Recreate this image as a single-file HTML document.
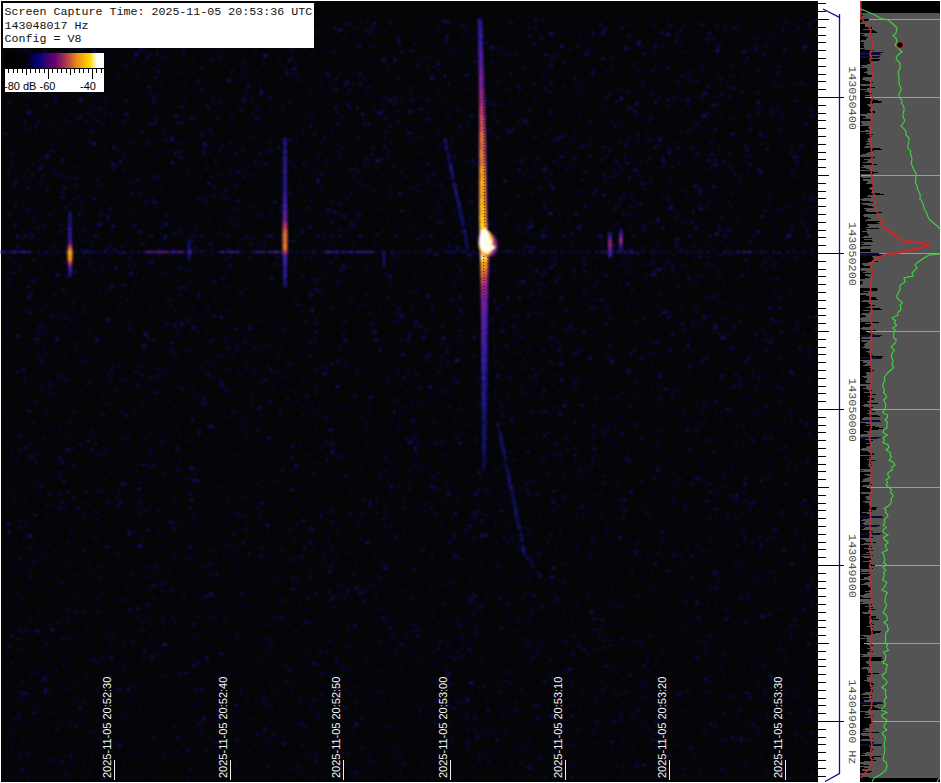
<!DOCTYPE html>
<html><head><meta charset="utf-8"><title>Spectrogram</title>
<style>html,body{margin:0;padding:0;background:#fff;width:941px;height:783px;overflow:hidden}svg{display:block}</style>
</head><body><svg width="941" height="783" viewBox="0 0 941 783" shape-rendering="auto"><rect x="1" y="1" width="817" height="781" fill="#050507"/><filter id="nb" x="-2%" y="-2%" width="104%" height="104%" color-interpolation-filters="sRGB"><feGaussianBlur stdDeviation="0.9"/></filter><g filter="url(#nb)"><path fill="#05052a" d="M334 173h3v1h-3zM551 115h2v3h-2zM77 139h3v2h-3zM353 174h3v2h-3zM488 732h4v1h-4zM358 42h3v2h-3zM135 775h2v2h-2zM406 125h3v2h-3zM71 232h3v1h-3zM552 122h2v3h-2zM358 635h2v2h-2zM502 496h3v2h-3zM493 727h2v3h-2zM231 564h3v3h-3zM743 376h2v1h-2zM235 500h2v2h-2zM361 178h3v3h-3zM145 463h2v1h-2zM626 23h2v1h-2zM636 761h1v3h-1zM210 477h2v2h-2zM161 752h4v2h-4zM501 185h4v1h-4zM368 345h1v2h-1zM530 603h3v2h-3zM88 641h2v1h-2zM430 293h3v1h-3zM280 374h1v2h-1zM529 505h2v2h-2zM358 74h2v1h-2zM761 280h3v1h-3zM712 319h1v2h-1zM339 579h2v1h-2zM319 242h2v1h-2zM208 273h3v1h-3zM94 166h3v3h-3zM26 325h2v1h-2zM336 756h3v1h-3zM19 721h3v1h-3zM488 277h1v2h-1zM634 666h4v1h-4zM521 479h2v2h-2zM218 95h3v1h-3zM239 528h3v2h-3zM570 581h2v1h-2zM125 190h4v1h-4zM766 555h2v2h-2zM785 503h3v2h-3zM403 559h3v2h-3zM701 130h4v2h-4zM599 215h3v2h-3zM724 684h2v1h-2zM513 709h4v2h-4zM236 702h3v2h-3zM37 731h2v2h-2zM322 217h2v2h-2zM60 628h2v2h-2zM27 629h2v2h-2zM342 472h2v1h-2zM203 400h3v2h-3zM256 659h3v1h-3zM478 83h1v2h-1zM67 639h2v2h-2zM652 85h1v1h-1zM508 154h3v1h-3zM496 584h3v2h-3zM277 400h2v2h-2zM256 209h2v1h-2zM105 688h3v1h-3zM489 255h3v2h-3zM303 257h1v1h-1zM383 208h3v2h-3zM35 526h3v2h-3zM106 423h4v3h-4zM136 34h1v3h-1zM168 552h2v1h-2zM203 503h2v3h-2zM156 271h4v1h-4zM578 707h1v2h-1zM379 476h3v2h-3zM6 652h3v2h-3zM44 60h4v1h-4zM754 340h4v3h-4zM773 535h3v1h-3zM70 647h4v1h-4zM506 313h2v1h-2zM362 644h2v1h-2zM631 300h3v1h-3zM246 345h2v1h-2zM647 422h4v2h-4zM380 610h2v2h-2zM430 543h2v1h-2zM235 646h4v1h-4zM5 599h2v2h-2zM252 743h2v2h-2zM533 770h3v1h-3zM3 64h1v3h-1zM181 539h2v1h-2zM52 760h3v3h-3zM450 495h1v2h-1zM110 286h2v1h-2zM770 730h2v1h-2zM210 182h4v2h-4zM178 167h1v1h-1zM776 747h3v1h-3zM222 735h2v2h-2zM391 664h2v2h-2zM611 724h3v1h-3zM794 282h3v1h-3zM276 327h4v3h-4zM312 769h2v2h-2zM114 672h1v2h-1zM650 322h3v1h-3zM251 428h4v1h-4zM736 223h3v2h-3zM631 383h4v1h-4zM394 428h1v1h-1zM542 243h3v2h-3zM578 757h2v1h-2zM439 714h2v2h-2zM674 319h2v3h-2zM159 232h3v3h-3zM720 522h2v2h-2zM800 557h3v1h-3zM353 451h2v3h-2zM673 523h1v2h-1zM561 606h1v2h-1zM192 450h1v2h-1zM733 730h2v1h-2zM263 72h4v1h-4zM18 685h4v3h-4zM321 338h4v3h-4zM501 642h1v2h-1zM806 599h2v2h-2zM639 685h4v3h-4zM293 724h1v2h-1zM555 585h3v2h-3zM606 225h2v1h-2zM370 431h3v1h-3zM356 306h3v3h-3zM221 286h2v2h-2zM460 626h3v1h-3zM658 425h1v1h-1zM166 398h2v1h-2zM51 283h3v2h-3zM110 501h2v2h-2zM130 402h3v2h-3zM202 55h2v1h-2zM350 349h2v2h-2zM345 190h2v2h-2zM445 286h2v1h-2zM751 526h2v1h-2zM784 507h2v2h-2zM29 562h3v1h-3zM93 248h3v1h-3zM322 275h3v1h-3zM718 775h2v2h-2zM737 202h1v2h-1zM508 618h3v2h-3zM56 390h2v2h-2zM682 666h1v2h-1zM39 655h1v2h-1zM16 463h2v1h-2zM315 374h4v1h-4zM303 435h3v2h-3zM468 643h4v3h-4zM793 41h2v3h-2zM696 775h2v2h-2zM286 549h1v2h-1zM805 305h3v3h-3zM514 408h3v2h-3zM13 711h1v3h-1zM79 337h3v1h-3zM433 665h2v3h-2zM64 664h3v3h-3zM13 21h2v3h-2zM314 426h1v3h-1zM151 179h3v3h-3zM104 615h1v2h-1zM641 413h1v1h-1zM408 615h1v2h-1zM247 274h2v1h-2zM469 329h3v3h-3zM731 515h1v1h-1zM177 385h3v1h-3zM300 424h3v2h-3zM129 451h2v3h-2zM198 497h2v2h-2zM162 266h4v1h-4zM248 182h2v2h-2zM417 404h4v3h-4zM453 620h2v3h-2zM91 730h2v1h-2zM28 693h4v2h-4zM413 379h4v1h-4zM44 433h1v3h-1zM236 602h3v3h-3zM448 705h4v3h-4zM633 245h2v3h-2zM646 659h3v3h-3zM799 149h3v1h-3zM802 671h2v3h-2zM209 670h2v1h-2zM726 517h4v2h-4zM250 25h3v2h-3zM659 378h4v2h-4zM15 388h3v1h-3zM49 30h3v2h-3zM737 358h4v3h-4zM663 519h3v2h-3zM671 735h2v1h-2zM262 264h1v1h-1zM620 614h4v1h-4zM226 759h2v1h-2zM628 542h3v1h-3zM579 710h2v3h-2zM495 691h4v1h-4zM408 286h1v1h-1zM210 580h4v1h-4zM778 136h4v3h-4zM199 595h3v1h-3zM797 652h1v2h-1zM92 655h2v3h-2zM498 51h1v1h-1zM165 728h3v2h-3zM628 548h1v2h-1zM482 416h2v2h-2zM596 514h2v1h-2zM150 298h3v2h-3zM243 376h2v1h-2zM793 328h2v3h-2zM72 515h2v1h-2zM245 740h1v1h-1zM135 634h1v1h-1zM592 368h4v1h-4zM29 343h3v2h-3zM631 746h4v2h-4zM373 554h3v2h-3zM95 47h3v1h-3zM729 267h3v2h-3zM30 129h4v1h-4zM663 430h4v2h-4zM645 248h1v2h-1zM336 454h4v2h-4zM342 23h3v1h-3zM702 643h3v2h-3zM56 233h4v2h-4zM307 720h1v1h-1zM52 343h1v1h-1zM502 158h3v2h-3zM536 695h2v3h-2zM264 266h2v2h-2zM654 524h1v1h-1zM737 472h3v2h-3zM135 652h2v3h-2zM684 227h2v1h-2zM790 415h3v1h-3zM774 239h3v2h-3zM284 551h2v1h-2zM433 716h1v2h-1zM392 465h3v2h-3zM478 691h3v3h-3zM749 340h1v3h-1zM581 350h1v2h-1zM458 227h2v1h-2zM76 629h3v1h-3zM231 689h3v1h-3zM155 764h2v2h-2zM414 136h1v2h-1zM218 690h3v3h-3zM615 616h3v1h-3zM355 218h2v2h-2zM344 377h3v2h-3zM494 329h2v2h-2zM585 567h1v3h-1zM205 309h3v3h-3zM528 746h1v1h-1zM711 197h2v2h-2zM780 491h3v1h-3zM154 770h3v1h-3zM643 70h2v2h-2zM507 707h4v2h-4zM302 362h1v2h-1zM141 278h4v2h-4zM593 539h1v2h-1zM606 675h2v1h-2zM146 224h3v1h-3zM194 297h2v2h-2zM408 561h2v1h-2zM274 268h1v3h-1zM536 442h4v2h-4zM349 717h1v2h-1zM37 683h3v2h-3zM282 641h2v1h-2zM371 711h3v1h-3zM145 476h2v3h-2zM594 568h4v1h-4zM292 217h1v3h-1zM67 381h2v2h-2zM659 758h4v3h-4zM534 466h4v2h-4zM450 156h2v1h-2zM748 618h3v2h-3zM589 566h1v2h-1zM576 491h3v1h-3zM212 382h3v1h-3zM483 727h3v3h-3zM232 668h4v1h-4zM207 19h1v2h-1zM656 610h3v2h-3zM169 649h3v2h-3zM689 26h3v1h-3zM345 215h1v1h-1zM119 718h4v3h-4zM455 280h4v1h-4zM774 352h2v1h-2zM84 563h2v1h-2zM553 143h3v1h-3zM57 684h4v3h-4zM257 368h2v1h-2zM68 766h1v3h-1zM373 95h2v3h-2zM213 50h3v1h-3zM216 378h4v2h-4zM13 213h1v1h-1zM187 65h2v2h-2zM231 82h1v2h-1zM172 311h3v1h-3zM201 243h3v2h-3zM486 288h1v1h-1zM389 397h2v2h-2zM731 522h1v2h-1zM483 263h2v3h-2zM794 529h4v3h-4zM414 44h4v1h-4zM776 348h1v2h-1zM791 184h2v1h-2zM731 414h2v2h-2zM61 190h2v2h-2zM609 278h3v2h-3zM61 658h4v2h-4zM275 134h1v3h-1zM204 397h2v2h-2zM69 634h3v3h-3zM90 731h2v1h-2zM181 290h4v1h-4zM119 103h1v1h-1zM430 509h2v2h-2zM88 289h2v2h-2zM642 72h4v2h-4zM237 337h1v2h-1zM486 597h3v1h-3zM212 337h4v2h-4zM736 716h4v2h-4zM801 761h2v3h-2zM790 485h1v2h-1zM679 367h3v3h-3zM406 733h1v1h-1zM789 705h2v3h-2zM439 743h2v2h-2zM251 488h3v1h-3zM761 756h3v2h-3zM111 633h3v3h-3zM459 445h1v1h-1zM227 394h4v2h-4zM655 745h1v2h-1zM390 593h2v1h-2zM161 592h2v1h-2zM528 662h3v1h-3zM732 627h4v1h-4zM148 216h3v2h-3zM151 531h2v1h-2zM721 411h1v2h-1zM697 430h3v3h-3zM607 604h4v1h-4zM335 673h3v1h-3zM269 36h2v2h-2zM297 525h2v2h-2zM200 233h1v1h-1zM94 171h3v1h-3zM511 766h3v2h-3zM42 105h1v1h-1zM25 354h4v1h-4zM447 352h3v2h-3zM241 513h1v1h-1zM154 68h3v3h-3zM576 287h3v2h-3zM448 471h4v2h-4zM462 683h2v1h-2zM50 167h4v2h-4zM556 773h4v1h-4zM388 274h2v3h-2zM515 285h2v1h-2zM231 504h2v2h-2zM323 717h1v2h-1zM783 622h2v1h-2zM397 610h3v1h-3zM32 344h2v2h-2zM4 291h1v2h-1zM370 397h2v3h-2zM442 362h3v1h-3zM41 637h2v1h-2zM460 269h4v1h-4zM172 620h1v2h-1zM812 78h2v3h-2zM6 737h2v2h-2zM346 273h2v2h-2zM413 445h4v2h-4zM89 91h1v3h-1zM510 595h3v2h-3zM606 503h2v1h-2zM595 755h1v1h-1zM378 435h4v2h-4zM451 467h2v1h-2zM162 693h2v1h-2zM392 113h4v1h-4zM662 598h3v1h-3zM212 513h4v2h-4zM637 303h4v3h-4zM25 447h3v3h-3zM369 745h2v2h-2zM713 36h2v3h-2zM540 705h2v1h-2zM381 220h2v2h-2zM180 74h3v2h-3zM794 402h3v1h-3zM803 30h4v2h-4zM628 256h2v1h-2zM412 265h4v2h-4zM476 252h3v3h-3zM616 499h3v2h-3zM445 439h3v2h-3zM383 316h3v1h-3zM547 676h2v1h-2zM119 365h2v2h-2zM372 246h3v1h-3zM471 187h2v1h-2zM72 679h2v1h-2zM140 752h3v3h-3zM566 187h1v1h-1zM276 90h2v3h-2zM26 658h4v1h-4zM807 485h2v1h-2zM166 374h3v2h-3zM579 660h2v1h-2zM168 505h3v3h-3zM664 534h3v1h-3zM207 473h1v3h-1zM448 241h2v3h-2zM160 277h3v1h-3zM310 463h4v1h-4zM405 691h1v2h-1zM390 421h3v3h-3zM115 619h1v2h-1zM438 171h2v1h-2zM736 38h3v2h-3zM487 109h1v1h-1zM621 549h1v1h-1zM429 470h2v3h-2zM675 437h2v3h-2zM299 210h3v2h-3zM656 676h3v1h-3zM411 492h2v1h-2zM799 364h3v2h-3zM688 200h2v1h-2zM584 561h2v2h-2zM232 355h2v2h-2zM213 423h1v2h-1zM99 252h3v2h-3zM161 571h3v2h-3zM201 315h3v2h-3zM515 399h3v1h-3zM182 135h2v1h-2zM217 523h4v2h-4zM664 536h1v2h-1zM602 406h3v2h-3zM445 535h3v1h-3zM397 373h2v2h-2zM126 240h2v2h-2zM260 638h3v1h-3zM556 182h3v1h-3zM414 203h2v1h-2zM773 25h1v2h-1zM422 659h3v1h-3zM640 110h1v2h-1zM457 456h2v2h-2zM318 439h3v1h-3zM19 442h4v1h-4zM377 417h1v1h-1zM179 702h2v1h-2zM543 328h2v1h-2zM335 689h3v1h-3zM415 659h4v2h-4zM241 292h2v2h-2zM396 255h3v2h-3zM458 726h3v2h-3zM240 605h4v1h-4zM589 383h4v2h-4zM750 216h3v1h-3zM293 713h4v3h-4zM677 765h1v1h-1zM27 766h4v2h-4zM103 260h2v1h-2zM490 211h1v2h-1zM283 376h1v2h-1zM155 404h2v2h-2zM349 426h2v2h-2zM105 364h2v1h-2zM575 759h4v2h-4zM83 439h1v3h-1zM643 412h3v2h-3zM353 327h3v1h-3zM31 670h4v3h-4zM190 549h2v1h-2zM339 255h2v1h-2zM311 765h4v1h-4zM700 628h3v2h-3zM124 768h2v2h-2zM508 610h3v3h-3zM340 455h4v2h-4zM153 456h2v2h-2zM119 423h3v2h-3zM122 258h2v2h-2zM64 453h4v1h-4zM738 766h1v3h-1zM353 241h3v2h-3zM747 85h2v3h-2zM460 762h2v2h-2zM457 153h2v2h-2zM214 409h2v1h-2zM83 663h3v2h-3zM503 576h2v2h-2zM622 677h4v2h-4zM186 610h1v3h-1zM141 583h2v3h-2zM158 355h2v2h-2zM283 728h1v2h-1zM571 623h2v2h-2zM544 308h3v3h-3zM132 720h3v2h-3zM49 145h3v1h-3zM229 265h2v2h-2zM478 311h3v1h-3zM742 519h2v1h-2zM758 644h3v1h-3zM421 566h2v2h-2zM778 37h2v2h-2zM305 279h1v2h-1zM735 564h2v3h-2zM28 574h3v3h-3zM608 322h3v1h-3zM97 749h3v1h-3zM64 460h2v1h-2zM238 129h2v1h-2zM573 182h2v2h-2zM342 85h1v2h-1zM187 492h4v2h-4zM30 557h4v1h-4zM637 216h3v2h-3zM7 274h2v3h-2zM756 656h4v2h-4zM276 563h3v1h-3zM126 294h1v2h-1zM545 668h4v1h-4zM213 480h4v1h-4zM349 773h3v3h-3zM583 413h1v1h-1zM321 573h1v2h-1zM737 108h4v3h-4zM638 597h3v2h-3zM558 766h2v1h-2zM377 410h2v2h-2zM269 721h2v2h-2zM272 387h2v2h-2zM546 89h4v1h-4zM590 323h1v1h-1zM121 708h3v1h-3zM423 121h3v3h-3zM308 126h3v2h-3zM472 37h4v3h-4zM233 428h2v2h-2zM149 566h3v3h-3zM293 403h3v2h-3zM474 155h3v1h-3zM738 569h2v2h-2zM55 344h3v1h-3zM224 480h2v1h-2zM334 549h3v1h-3zM736 733h1v3h-1zM338 114h2v1h-2zM111 364h1v1h-1zM124 238h2v1h-2zM434 538h3v1h-3zM230 201h4v1h-4zM513 497h4v1h-4zM75 619h4v3h-4zM490 385h2v1h-2zM671 654h3v1h-3zM465 551h1v3h-1zM424 368h4v1h-4zM597 740h2v1h-2zM474 596h2v2h-2zM492 79h2v2h-2zM100 516h2v2h-2zM215 553h3v1h-3zM109 120h2v2h-2zM73 716h4v1h-4zM376 577h2v1h-2zM800 589h4v3h-4zM17 218h3v1h-3zM577 545h4v3h-4zM563 497h4v3h-4zM453 579h3v3h-3zM541 726h3v1h-3zM536 306h1v3h-1zM43 374h4v2h-4zM442 450h1v2h-1zM153 376h2v3h-2zM199 402h2v3h-2zM686 580h3v2h-3zM304 609h4v2h-4zM538 686h2v2h-2zM315 217h1v1h-1zM330 419h4v3h-4zM729 612h2v1h-2zM194 692h3v3h-3zM686 224h3v1h-3zM171 246h4v3h-4zM577 694h3v3h-3zM79 619h3v2h-3zM515 619h3v3h-3zM29 585h2v3h-2zM429 492h2v2h-2zM209 510h2v2h-2zM297 577h2v1h-2zM68 113h2v2h-2zM526 350h2v2h-2zM458 591h2v3h-2zM679 551h1v3h-1zM633 204h3v3h-3zM192 106h4v1h-4zM79 562h4v1h-4zM576 57h2v1h-2zM10 732h1v1h-1zM606 735h2v2h-2zM572 656h3v1h-3zM555 722h2v2h-2zM589 204h4v3h-4zM452 595h2v1h-2zM489 100h1v3h-1zM326 686h4v1h-4zM743 622h3v1h-3zM380 761h2v1h-2zM278 605h3v2h-3zM137 569h3v2h-3zM31 265h2v2h-2zM523 357h1v1h-1zM245 685h3v2h-3zM413 102h3v1h-3zM648 687h4v3h-4zM507 583h3v2h-3zM723 616h4v3h-4zM805 63h4v2h-4zM787 387h2v2h-2zM217 752h2v2h-2zM792 252h4v1h-4zM166 700h2v1h-2zM708 235h4v1h-4zM165 570h4v1h-4zM215 362h3v1h-3zM322 239h4v2h-4zM724 642h3v1h-3zM799 762h4v3h-4zM151 200h2v2h-2zM676 19h1v2h-1zM591 557h2v3h-2zM52 636h2v1h-2zM567 583h1v2h-1zM621 498h2v2h-2zM19 599h2v1h-2zM758 140h1v1h-1zM623 555h4v2h-4zM584 376h2v2h-2zM46 429h4v2h-4zM714 56h3v1h-3zM473 700h1v1h-1zM392 750h2v2h-2zM624 282h2v3h-2zM418 588h3v1h-3zM774 384h3v3h-3zM591 616h2v1h-2zM687 23h1v2h-1zM508 365h2v1h-2zM465 746h3v1h-3zM687 239h2v1h-2zM157 558h3v2h-3zM258 586h2v3h-2zM541 504h1v2h-1zM428 732h4v2h-4zM725 772h2v2h-2zM634 686h3v1h-3zM154 197h2v2h-2zM468 758h3v2h-3zM476 727h2v2h-2zM164 423h2v2h-2zM543 92h4v1h-4zM449 336h3v1h-3zM661 154h3v3h-3zM24 307h2v1h-2zM113 773h2v2h-2zM302 769h1v3h-1zM749 563h3v1h-3zM542 336h2v1h-2zM41 333h3v2h-3zM499 714h4v2h-4zM798 234h3v2h-3zM622 603h1v3h-1zM501 660h2v1h-2zM778 384h4v3h-4zM432 650h3v2h-3zM245 437h3v1h-3zM137 510h2v2h-2zM544 722h2v2h-2zM688 566h2v2h-2zM596 529h4v1h-4zM52 346h4v2h-4zM38 671h3v3h-3zM504 112h3v3h-3zM196 726h4v3h-4zM570 93h1v3h-1zM334 656h1v1h-1zM569 137h2v2h-2zM35 280h2v3h-2zM428 235h4v2h-4zM665 686h2v2h-2zM721 701h1v2h-1zM47 244h1v2h-1zM661 374h2v2h-2zM49 771h1v2h-1zM774 486h4v1h-4zM421 739h2v2h-2zM104 360h4v1h-4zM635 715h2v2h-2zM204 344h2v1h-2zM358 552h3v3h-3zM721 707h3v1h-3zM313 140h1v2h-1zM188 491h2v1h-2zM428 174h4v3h-4zM275 772h2v3h-2zM756 676h4v2h-4zM340 620h2v2h-2zM177 199h2v1h-2zM24 182h3v2h-3zM86 598h2v2h-2zM733 608h1v1h-1zM771 281h3v2h-3zM272 743h3v1h-3zM483 591h1v2h-1zM747 600h2v2h-2zM58 59h2v1h-2zM453 194h3v1h-3zM376 521h2v1h-2zM98 658h2v3h-2zM447 419h4v1h-4zM666 149h4v1h-4zM357 713h3v2h-3zM519 714h1v1h-1zM416 439h1v1h-1zM458 507h3v2h-3zM51 520h2v2h-2zM88 497h4v1h-4zM475 718h3v2h-3zM452 265h2v2h-2zM719 760h4v1h-4zM51 144h3v1h-3zM467 739h4v3h-4zM383 319h2v2h-2zM555 54h4v2h-4zM760 605h3v2h-3zM472 493h3v2h-3zM762 569h3v3h-3zM253 336h2v3h-2zM521 201h3v1h-3zM747 395h4v3h-4zM440 642h2v2h-2zM563 181h3v2h-3zM752 234h3v2h-3zM187 520h3v1h-3zM221 436h4v2h-4zM492 513h2v1h-2zM711 300h3v1h-3zM330 732h3v2h-3zM46 395h2v2h-2zM783 446h3v1h-3zM160 373h2v1h-2zM576 497h2v1h-2zM450 359h1v1h-1zM321 292h2v3h-2zM549 764h3v1h-3zM268 667h2v1h-2zM723 321h4v1h-4zM666 760h3v1h-3zM43 331h4v3h-4zM802 183h3v2h-3zM232 441h1v2h-1zM611 711h3v3h-3zM294 521h2v2h-2zM566 74h4v1h-4zM812 606h2v2h-2zM312 346h1v3h-1zM12 647h3v1h-3zM559 246h3v1h-3zM234 344h3v3h-3zM100 208h4v1h-4zM232 392h1v2h-1zM543 294h3v3h-3zM604 442h3v3h-3zM517 624h3v1h-3zM788 713h3v2h-3zM375 512h3v3h-3zM809 746h2v1h-2zM606 92h3v1h-3zM785 630h3v2h-3zM412 264h2v2h-2zM738 568h3v1h-3zM309 278h3v1h-3zM293 541h2v1h-2zM303 544h2v3h-2zM133 391h2v2h-2zM678 337h2v1h-2zM600 91h2v3h-2zM751 622h1v3h-1zM587 208h3v2h-3zM103 619h1v2h-1zM388 462h2v2h-2zM761 208h3v3h-3zM296 721h3v3h-3zM57 560h3v1h-3zM801 546h3v2h-3zM118 658h1v2h-1zM394 647h1v2h-1zM331 405h2v2h-2zM92 129h4v3h-4zM725 323h1v3h-1zM235 396h2v2h-2zM160 676h4v1h-4zM607 21h2v1h-2zM544 434h1v2h-1zM193 310h1v1h-1zM217 412h3v2h-3zM59 547h4v2h-4zM755 621h4v1h-4zM107 596h1v2h-1zM283 497h1v2h-1zM657 257h4v2h-4zM590 757h3v2h-3zM255 254h4v2h-4zM440 655h4v3h-4zM266 560h3v1h-3zM787 27h1v1h-1zM708 676h1v1h-1zM500 566h2v2h-2zM777 19h2v3h-2zM341 241h3v2h-3zM106 669h3v1h-3zM170 479h2v3h-2zM111 374h4v1h-4zM682 163h3v2h-3zM498 553h4v2h-4zM759 526h4v1h-4zM795 741h2v1h-2zM630 680h1v1h-1zM384 290h2v1h-2zM215 472h4v2h-4zM444 162h3v3h-3zM429 137h3v2h-3zM676 577h2v2h-2zM652 584h2v3h-2zM203 733h2v2h-2zM598 300h2v2h-2zM682 24h2v1h-2zM667 444h1v1h-1zM546 630h2v2h-2zM33 442h3v2h-3zM465 76h3v1h-3zM76 363h4v1h-4zM582 634h2v2h-2zM455 327h4v1h-4zM652 305h2v3h-2zM369 664h1v1h-1zM546 111h2v1h-2zM120 748h2v1h-2zM635 556h2v2h-2zM549 603h4v2h-4zM129 449h3v2h-3zM643 770h2v1h-2zM159 37h2v2h-2zM418 356h1v1h-1zM591 158h3v1h-3zM5 146h4v3h-4zM11 258h3v2h-3zM780 678h3v2h-3zM546 423h4v2h-4zM751 670h3v3h-3zM700 609h2v2h-2zM143 575h2v3h-2zM122 170h3v2h-3zM407 674h2v1h-2zM546 227h2v3h-2zM216 264h2v2h-2zM461 347h2v2h-2zM712 389h2v2h-2zM46 470h2v1h-2zM212 300h4v3h-4zM576 581h2v2h-2zM689 27h3v3h-3zM268 318h1v1h-1zM184 120h3v2h-3zM70 554h1v2h-1zM599 518h3v2h-3zM296 67h1v2h-1zM618 588h1v2h-1zM54 327h4v1h-4zM530 172h2v1h-2zM393 574h2v3h-2zM366 92h3v3h-3zM102 371h4v1h-4zM362 627h2v3h-2zM515 228h2v3h-2zM507 436h2v2h-2zM575 190h3v1h-3zM683 415h3v3h-3zM767 683h4v1h-4zM635 21h2v3h-2zM336 346h1v1h-1zM510 725h3v2h-3zM214 554h4v2h-4zM218 612h3v2h-3zM177 609h2v1h-2zM38 549h4v2h-4zM790 421h2v1h-2zM229 467h2v2h-2zM635 122h1v2h-1zM540 524h2v3h-2zM33 565h2v1h-2zM121 567h2v3h-2zM258 211h3v3h-3zM791 328h2v1h-2zM364 90h4v1h-4zM634 552h3v2h-3zM655 747h4v3h-4zM13 695h2v3h-2zM207 692h2v2h-2zM240 251h3v3h-3zM504 392h2v2h-2zM141 463h2v2h-2zM558 248h2v2h-2zM627 750h4v3h-4zM170 172h2v3h-2zM123 94h3v1h-3zM320 366h2v1h-2zM398 292h4v1h-4zM336 145h3v1h-3zM85 257h3v2h-3zM809 405h2v3h-2zM455 338h3v3h-3zM52 171h3v2h-3zM766 614h4v1h-4zM520 225h4v1h-4zM557 428h3v1h-3zM206 144h4v2h-4zM163 451h3v1h-3zM103 572h1v1h-1zM380 273h2v2h-2zM427 581h3v1h-3zM610 396h1v3h-1zM42 587h3v3h-3zM568 680h4v3h-4zM86 210h3v2h-3zM409 613h3v3h-3zM565 55h1v1h-1zM241 647h1v2h-1zM535 751h1v3h-1zM478 556h2v3h-2zM358 755h3v2h-3zM297 53h4v1h-4zM73 764h4v1h-4zM63 660h1v3h-1zM199 197h3v1h-3zM374 166h4v1h-4zM559 362h4v1h-4zM598 629h3v2h-3zM718 487h3v2h-3zM159 742h1v1h-1zM194 440h3v3h-3zM588 624h2v1h-2zM65 239h3v1h-3zM380 670h2v3h-2zM430 678h1v2h-1zM645 653h4v2h-4zM432 82h3v1h-3zM398 226h2v1h-2zM53 505h3v2h-3zM56 178h3v1h-3zM309 190h3v1h-3zM281 181h4v1h-4zM391 755h4v3h-4zM406 662h1v1h-1zM417 442h3v3h-3zM540 755h3v2h-3zM337 604h2v1h-2zM412 259h2v1h-2zM394 266h4v3h-4zM501 164h1v1h-1zM665 609h3v1h-3zM479 607h4v2h-4zM490 684h2v1h-2zM563 565h4v1h-4zM165 745h2v2h-2zM550 344h2v3h-2zM8 102h3v1h-3zM505 732h1v1h-1zM112 568h4v1h-4zM454 515h4v1h-4zM631 345h1v2h-1zM65 504h2v3h-2zM526 549h2v2h-2zM187 197h2v2h-2zM328 686h1v2h-1zM201 628h2v3h-2zM780 253h3v1h-3zM730 293h2v2h-2zM288 753h3v1h-3zM39 24h3v2h-3zM408 196h2v3h-2zM424 395h1v2h-1zM689 329h4v1h-4zM152 302h4v1h-4zM406 723h4v3h-4zM381 764h1v1h-1zM659 246h3v2h-3zM413 546h1v3h-1zM572 638h4v1h-4zM241 741h3v3h-3zM763 355h3v1h-3zM310 120h1v3h-1zM426 100h3v2h-3zM718 576h4v2h-4zM612 284h3v2h-3zM207 310h3v2h-3zM386 607h4v2h-4zM622 33h1v1h-1zM755 179h2v1h-2zM379 732h1v1h-1zM150 554h3v1h-3zM423 705h4v1h-4zM589 85h4v1h-4zM727 231h3v3h-3zM529 607h2v2h-2zM3 80h3v2h-3zM298 605h2v2h-2zM813 722h4v1h-4zM536 247h2v1h-2zM321 347h2v1h-2zM397 237h4v1h-4zM651 352h3v2h-3zM283 19h2v1h-2zM126 726h3v3h-3zM269 194h4v1h-4zM107 371h3v2h-3zM781 775h4v3h-4zM178 608h1v2h-1zM787 529h3v1h-3zM436 681h4v1h-4zM706 649h2v3h-2zM461 674h2v1h-2zM294 430h2v3h-2zM461 642h2v1h-2zM175 449h2v1h-2zM694 527h3v3h-3zM421 324h1v2h-1zM151 366h4v2h-4zM315 508h1v2h-1zM386 479h3v3h-3zM391 463h3v2h-3zM376 484h3v2h-3zM423 174h2v2h-2zM459 446h3v2h-3zM143 564h4v3h-4zM312 203h3v1h-3zM360 584h1v1h-1zM767 428h3v2h-3zM660 574h2v2h-2zM267 556h2v1h-2zM701 603h3v1h-3zM119 756h2v3h-2zM175 219h3v1h-3zM107 233h4v2h-4zM193 117h3v2h-3zM711 20h1v1h-1zM238 364h2v2h-2zM270 303h3v3h-3zM160 185h2v2h-2zM754 493h2v3h-2zM572 765h2v2h-2zM588 681h2v3h-2zM447 774h1v1h-1zM768 103h1v1h-1zM555 435h1v2h-1zM91 251h4v2h-4zM260 43h3v2h-3zM430 395h4v3h-4zM237 369h2v3h-2zM646 656h3v2h-3zM331 607h2v1h-2zM161 514h2v2h-2zM469 498h1v1h-1zM474 683h2v1h-2zM556 339h2v2h-2zM383 548h4v3h-4zM187 469h4v1h-4zM733 604h3v2h-3zM77 368h3v1h-3zM791 44h4v1h-4zM691 430h1v2h-1zM770 470h3v1h-3zM657 621h3v3h-3zM19 253h3v1h-3zM46 457h2v1h-2zM57 687h2v2h-2zM652 588h1v3h-1zM266 347h2v3h-2zM271 617h3v2h-3zM483 151h2v1h-2zM722 314h2v1h-2zM600 578h3v1h-3zM618 289h3v1h-3zM190 709h1v1h-1zM467 471h3v1h-3zM714 457h2v1h-2zM327 540h3v3h-3zM473 260h3v3h-3zM493 513h2v2h-2zM262 127h1v1h-1zM52 707h2v2h-2zM438 713h1v2h-1zM324 670h4v2h-4zM647 588h3v2h-3zM801 396h4v1h-4zM547 410h3v1h-3zM274 725h3v1h-3zM375 737h1v2h-1zM341 442h3v1h-3zM581 766h3v1h-3zM429 444h4v1h-4zM385 524h2v2h-2zM411 643h1v1h-1zM519 473h1v2h-1zM698 623h2v1h-2zM144 477h3v1h-3zM431 710h3v3h-3zM550 177h1v1h-1zM375 688h3v1h-3zM619 296h2v3h-2zM252 658h4v3h-4zM354 687h2v1h-2zM496 334h2v2h-2zM572 734h4v1h-4zM429 460h4v1h-4zM322 438h1v1h-1zM157 96h1v3h-1zM363 542h3v3h-3zM402 552h2v1h-2zM49 394h1v2h-1zM576 614h2v3h-2zM449 490h3v1h-3zM231 419h2v2h-2zM178 749h3v1h-3zM270 40h3v2h-3zM325 777h2v2h-2zM779 252h2v1h-2zM145 566h3v2h-3zM110 672h2v2h-2zM409 754h2v1h-2zM682 299h1v1h-1zM334 140h2v1h-2zM13 580h2v1h-2zM767 185h2v2h-2zM86 485h1v1h-1zM276 416h3v1h-3zM617 356h3v2h-3zM486 670h3v1h-3zM201 186h2v1h-2zM719 590h4v1h-4zM383 363h4v3h-4zM719 194h3v1h-3zM333 680h3v2h-3zM39 197h3v3h-3zM379 536h2v1h-2zM15 563h3v2h-3zM790 698h2v3h-2zM330 578h2v1h-2zM149 446h3v3h-3zM580 513h3v2h-3zM766 500h3v3h-3zM66 650h3v2h-3zM407 333h3v2h-3zM294 415h2v1h-2zM682 54h1v1h-1zM685 388h2v1h-2zM285 680h3v1h-3zM381 118h2v2h-2zM429 161h2v2h-2zM544 486h1v2h-1zM444 657h3v1h-3zM201 324h2v2h-2zM213 44h2v3h-2zM591 741h4v1h-4zM696 685h1v1h-1zM203 613h2v2h-2zM110 360h3v2h-3zM181 676h2v2h-2zM649 708h1v3h-1zM447 671h2v1h-2zM146 242h2v2h-2zM789 732h3v2h-3zM562 283h2v1h-2zM478 265h4v2h-4zM582 508h3v3h-3zM82 538h4v3h-4zM65 489h2v1h-2zM503 141h2v2h-2zM558 672h2v2h-2zM226 312h3v3h-3zM551 608h1v3h-1zM435 113h4v2h-4zM455 605h1v3h-1zM24 51h3v2h-3zM508 548h4v1h-4zM587 48h2v2h-2zM239 446h4v2h-4zM762 135h2v3h-2zM780 767h3v2h-3zM785 563h3v2h-3zM782 621h2v2h-2zM189 533h2v3h-2zM325 216h3v2h-3zM89 774h3v2h-3zM695 173h3v1h-3zM507 669h4v2h-4zM89 310h3v1h-3zM348 549h3v1h-3zM655 377h3v2h-3zM679 86h3v2h-3zM225 177h3v2h-3zM790 56h3v1h-3zM619 773h2v1h-2zM509 715h1v3h-1zM596 610h2v1h-2zM455 307h2v1h-2zM532 721h2v2h-2zM42 764h2v3h-2zM558 685h2v1h-2zM107 675h2v2h-2zM206 748h3v1h-3zM197 199h3v1h-3zM170 362h3v3h-3zM376 387h2v2h-2zM712 404h2v1h-2zM14 263h2v1h-2zM279 710h3v2h-3zM271 214h3v2h-3zM457 712h4v3h-4zM779 697h3v1h-3zM569 232h2v2h-2zM84 606h3v2h-3zM350 50h1v1h-1zM455 43h3v1h-3zM649 485h2v1h-2zM585 462h3v2h-3zM767 205h3v2h-3zM133 297h2v1h-2zM799 672h3v3h-3zM239 222h2v2h-2zM790 629h4v1h-4zM532 205h2v1h-2zM366 402h3v2h-3zM745 554h3v1h-3zM325 446h4v1h-4zM56 577h2v3h-2zM537 727h2v1h-2zM310 235h2v1h-2zM129 317h1v2h-1zM630 455h1v1h-1zM380 563h3v3h-3zM585 49h4v2h-4zM113 291h4v1h-4zM420 769h2v1h-2zM541 312h4v3h-4zM713 742h2v2h-2zM622 417h4v2h-4zM475 289h3v3h-3zM411 778h3v1h-3zM239 442h4v1h-4zM439 732h3v1h-3zM759 575h4v2h-4zM473 481h3v2h-3zM378 305h4v1h-4zM411 688h2v3h-2zM734 123h3v1h-3zM788 669h1v1h-1zM626 134h3v1h-3zM682 725h3v1h-3zM577 427h3v2h-3zM270 150h3v3h-3zM516 340h3v2h-3zM389 621h3v2h-3zM680 189h1v1h-1zM559 211h1v2h-1zM513 404h2v3h-2zM745 375h2v2h-2zM811 97h2v2h-2zM79 638h4v2h-4zM261 481h3v2h-3zM618 485h1v2h-1zM412 440h4v2h-4zM589 648h4v1h-4zM276 738h3v2h-3zM48 269h4v2h-4zM494 670h3v2h-3zM644 131h2v2h-2zM110 289h2v2h-2zM714 259h2v2h-2zM242 607h2v2h-2zM325 371h3v2h-3zM553 343h2v2h-2zM181 192h4v2h-4zM402 259h3v2h-3zM328 743h2v1h-2zM662 531h1v1h-1zM787 161h2v2h-2zM558 407h2v1h-2zM675 458h2v2h-2zM108 24h2v2h-2zM483 402h3v1h-3zM676 427h2v2h-2zM5 550h1v2h-1zM669 324h4v1h-4zM170 566h1v2h-1zM389 317h1v2h-1zM379 588h2v3h-2zM557 164h3v3h-3zM518 104h2v2h-2zM574 353h3v1h-3zM612 459h2v1h-2zM452 170h4v2h-4zM401 517h3v3h-3zM752 371h4v2h-4zM732 216h2v3h-2zM551 299h2v2h-2zM550 752h4v3h-4zM563 418h3v1h-3zM568 501h3v1h-3zM674 500h3v2h-3zM71 142h3v3h-3zM23 194h2v1h-2zM129 699h3v3h-3zM325 646h3v2h-3zM548 436h3v1h-3zM387 527h3v2h-3zM647 744h1v1h-1zM364 50h3v1h-3zM612 606h3v2h-3zM422 335h2v2h-2zM721 663h2v3h-2zM192 708h3v2h-3zM118 159h3v2h-3zM446 351h3v2h-3zM493 409h2v2h-2zM412 435h3v2h-3zM67 111h4v1h-4zM445 316h2v1h-2zM233 329h2v2h-2zM300 771h3v2h-3zM570 411h4v2h-4zM795 722h4v2h-4zM689 408h2v1h-2zM401 559h2v3h-2zM345 47h2v2h-2zM421 67h1v2h-1zM471 295h1v2h-1zM255 421h2v2h-2zM547 513h2v3h-2zM515 721h3v1h-3zM655 290h3v1h-3zM598 168h4v1h-4zM238 696h2v2h-2zM231 616h3v2h-3zM118 664h3v1h-3zM773 101h3v2h-3zM162 692h3v3h-3zM32 683h1v3h-1zM739 459h2v3h-2zM657 579h4v1h-4zM728 308h1v1h-1zM611 51h3v2h-3zM440 293h2v2h-2zM337 706h2v2h-2zM612 209h3v1h-3zM784 718h2v2h-2zM35 671h2v2h-2zM42 639h4v1h-4zM272 764h4v2h-4zM499 304h4v3h-4zM518 75h2v1h-2zM455 523h4v2h-4zM75 638h2v2h-2zM647 554h1v1h-1zM326 197h2v1h-2zM31 22h1v2h-1zM771 339h3v3h-3zM686 117h2v1h-2zM23 662h1v1h-1zM114 631h2v2h-2zM729 769h4v1h-4zM647 273h3v1h-3zM293 138h2v3h-2zM67 637h2v3h-2zM301 522h2v1h-2zM623 732h1v1h-1zM786 772h2v2h-2zM163 693h2v2h-2zM196 653h2v3h-2zM617 382h3v2h-3zM493 636h3v1h-3zM127 768h4v3h-4zM205 386h4v3h-4zM558 739h3v1h-3zM548 473h2v2h-2zM492 198h1v3h-1zM131 418h1v2h-1zM609 599h3v3h-3zM577 711h2v1h-2zM96 627h2v1h-2zM397 508h3v1h-3zM364 79h3v3h-3zM509 710h2v1h-2zM422 442h3v2h-3zM702 724h4v1h-4zM530 642h4v2h-4zM293 340h2v1h-2zM487 164h2v3h-2zM351 629h3v1h-3zM88 573h2v1h-2zM339 665h2v1h-2zM92 347h3v3h-3zM282 755h3v2h-3zM127 752h3v2h-3zM193 521h4v3h-4zM297 144h2v1h-2zM609 184h3v2h-3zM512 173h3v2h-3zM81 243h2v1h-2zM571 203h3v2h-3zM732 621h3v3h-3zM255 86h1v1h-1zM729 334h2v2h-2zM440 621h3v1h-3zM459 132h3v1h-3zM661 351h2v2h-2zM43 418h3v1h-3zM670 759h2v3h-2zM599 618h4v1h-4zM809 709h2v1h-2zM142 35h3v2h-3zM278 533h1v3h-1zM143 620h4v1h-4zM609 635h1v1h-1zM94 178h2v2h-2zM40 525h2v2h-2zM20 215h3v2h-3zM272 117h3v2h-3zM399 76h1v3h-1zM484 671h1v2h-1zM28 745h2v2h-2zM46 672h3v1h-3zM137 509h3v3h-3zM384 569h1v2h-1zM554 319h2v1h-2zM796 637h2v2h-2zM334 255h2v3h-2zM639 359h3v2h-3zM207 425h4v3h-4zM58 263h2v2h-2zM153 216h2v2h-2zM593 772h2v2h-2zM611 584h2v2h-2zM493 729h2v2h-2zM30 541h1v3h-1zM558 542h3v1h-3zM586 56h3v1h-3zM31 506h2v1h-2zM602 180h4v1h-4zM235 592h1v3h-1zM523 459h2v2h-2zM529 524h4v2h-4zM209 738h3v1h-3zM665 263h2v3h-2zM166 645h1v1h-1zM248 764h3v1h-3zM689 638h2v2h-2zM611 778h3v2h-3zM89 235h1v2h-1zM195 648h1v1h-1zM492 613h3v1h-3zM604 297h1v2h-1zM391 718h1v2h-1zM676 549h2v1h-2zM116 421h3v1h-3zM42 667h3v3h-3zM62 129h3v1h-3zM103 355h3v2h-3zM344 343h2v1h-2zM538 462h3v1h-3zM727 199h3v1h-3zM603 204h2v2h-2zM777 538h3v2h-3zM40 139h3v1h-3zM60 463h4v3h-4zM433 566h3v1h-3zM401 345h4v1h-4zM618 120h2v2h-2zM91 667h1v2h-1zM437 478h3v2h-3zM373 231h1v1h-1zM305 747h1v2h-1zM40 765h3v2h-3zM773 617h3v2h-3zM516 112h4v2h-4zM77 195h4v2h-4zM653 323h2v3h-2zM45 602h1v1h-1zM135 495h3v1h-3zM317 775h1v3h-1zM660 539h3v1h-3zM429 415h3v2h-3zM314 171h2v3h-2zM268 299h2v1h-2zM636 760h1v2h-1zM620 246h2v2h-2zM803 685h3v3h-3zM692 399h1v2h-1zM770 108h3v3h-3zM464 302h2v2h-2zM216 505h3v3h-3zM595 226h3v1h-3zM108 54h3v3h-3zM715 776h4v1h-4zM315 421h4v3h-4zM175 315h2v2h-2zM261 520h2v1h-2zM413 560h1v1h-1zM657 95h2v1h-2zM217 166h1v1h-1zM449 344h2v2h-2zM287 600h2v3h-2zM10 739h3v2h-3zM292 346h4v1h-4zM115 215h3v1h-3zM355 117h4v1h-4zM613 527h2v3h-2zM775 408h2v1h-2zM254 699h3v2h-3zM157 286h4v2h-4zM783 691h3v1h-3zM88 262h2v2h-2zM695 184h4v3h-4zM231 489h2v2h-2zM751 348h4v2h-4zM645 536h2v2h-2zM495 519h2v1h-2zM580 38h2v2h-2zM799 598h2v3h-2zM489 703h1v2h-1zM774 652h2v1h-2zM138 361h3v1h-3zM467 420h1v1h-1zM65 576h3v1h-3zM290 138h1v2h-1zM517 207h3v2h-3zM665 378h1v2h-1zM189 196h2v2h-2zM367 591h1v1h-1zM510 682h3v1h-3zM753 551h3v1h-3zM697 748h2v2h-2zM174 139h1v1h-1zM485 696h2v2h-2zM619 576h1v2h-1zM60 318h3v2h-3zM99 482h2v1h-2zM788 285h2v1h-2zM653 54h3v2h-3zM163 213h4v3h-4zM659 546h2v2h-2zM196 547h2v2h-2zM533 667h2v1h-2zM731 612h1v3h-1zM319 253h3v3h-3zM410 385h3v1h-3zM611 527h2v2h-2zM471 555h2v1h-2zM755 427h3v1h-3zM452 635h2v2h-2zM485 347h4v3h-4zM399 448h3v1h-3zM534 622h3v1h-3zM22 571h3v1h-3zM422 610h1v3h-1zM551 602h3v3h-3zM365 709h3v1h-3zM715 435h2v2h-2zM613 228h4v1h-4zM796 328h2v3h-2zM10 378h2v1h-2zM432 313h2v3h-2zM234 355h3v1h-3zM140 547h4v1h-4zM385 647h3v2h-3zM797 112h1v2h-1zM178 71h4v2h-4zM808 718h3v3h-3zM548 112h4v3h-4zM667 421h2v3h-2zM159 653h3v3h-3zM67 689h2v3h-2zM603 759h3v2h-3zM309 564h1v2h-1zM215 176h4v1h-4zM653 458h2v2h-2zM681 312h3v3h-3zM68 777h3v2h-3zM468 736h4v1h-4zM746 439h4v2h-4zM575 555h2v1h-2zM791 755h4v1h-4zM150 161h1v2h-1zM378 398h1v2h-1zM488 499h3v1h-3zM253 642h2v2h-2zM746 276h1v1h-1zM224 19h2v1h-2zM295 618h3v1h-3zM279 725h1v1h-1zM273 497h2v1h-2zM109 638h2v3h-2zM654 739h3v1h-3zM160 537h1v1h-1zM569 600h2v3h-2zM191 479h2v1h-2zM28 444h4v2h-4zM261 465h3v1h-3zM772 331h3v1h-3zM438 89h2v3h-2zM753 362h2v1h-2zM337 522h2v1h-2zM246 683h1v2h-1zM535 598h3v1h-3zM6 151h4v2h-4zM174 530h4v3h-4zM54 727h3v1h-3zM373 562h1v2h-1zM5 668h2v2h-2zM658 732h3v2h-3zM520 379h4v2h-4zM426 689h2v3h-2zM612 626h2v1h-2zM485 611h1v2h-1zM609 583h1v1h-1zM495 32h1v2h-1zM676 553h2v1h-2zM450 397h3v2h-3zM674 387h1v1h-1zM89 455h4v3h-4zM568 683h2v2h-2zM674 96h3v2h-3zM405 634h2v1h-2zM499 518h3v2h-3zM743 623h3v1h-3zM567 211h2v1h-2zM325 534h3v1h-3zM192 482h1v3h-1zM122 578h2v2h-2zM355 223h3v2h-3zM172 204h4v1h-4zM101 406h2v2h-2zM291 770h1v2h-1zM26 78h4v2h-4zM292 305h2v3h-2zM467 741h4v3h-4zM228 670h4v1h-4zM354 132h4v1h-4zM797 32h3v1h-3zM806 26h4v1h-4zM178 340h1v3h-1zM336 142h3v3h-3zM754 628h2v2h-2zM288 559h3v1h-3zM273 137h3v2h-3zM495 213h2v3h-2zM129 485h1v3h-1zM451 736h3v2h-3zM767 32h3v1h-3zM467 578h3v1h-3zM440 548h4v1h-4zM660 705h3v1h-3zM332 762h4v1h-4zM112 502h3v2h-3zM510 55h1v1h-1zM718 366h2v1h-2zM619 138h3v2h-3zM769 429h4v1h-4zM539 639h1v2h-1zM814 446h3v1h-3zM400 668h1v3h-1zM337 765h2v2h-2zM634 643h3v1h-3zM623 665h4v2h-4zM476 700h1v2h-1zM57 336h3v1h-3zM551 103h1v2h-1zM343 485h3v1h-3zM29 403h1v1h-1zM344 187h3v2h-3zM146 740h1v2h-1zM338 205h4v1h-4zM592 257h4v1h-4zM685 746h1v1h-1zM103 370h3v3h-3zM346 174h2v1h-2zM172 467h4v2h-4zM217 626h1v3h-1zM376 399h2v2h-2zM24 283h3v1h-3zM24 498h1v1h-1zM807 349h2v2h-2zM744 49h2v3h-2zM503 699h3v1h-3zM685 276h3v2h-3zM198 393h3v3h-3zM740 645h1v1h-1zM396 647h3v2h-3zM390 614h3v1h-3zM445 584h2v3h-2zM811 661h3v2h-3zM450 765h2v2h-2zM622 598h4v1h-4zM507 553h3v1h-3zM285 625h3v1h-3zM457 637h3v1h-3zM499 53h2v2h-2zM64 347h3v2h-3zM794 619h4v2h-4zM88 400h2v1h-2zM362 691h2v1h-2zM757 729h3v2h-3zM546 97h3v2h-3zM774 227h3v3h-3zM243 44h1v3h-1zM523 617h2v2h-2zM223 338h3v3h-3zM194 505h2v1h-2zM159 97h1v3h-1zM490 544h2v1h-2zM599 481h2v1h-2zM189 672h4v2h-4zM577 310h1v2h-1zM460 245h4v1h-4zM239 196h1v1h-1zM402 747h1v2h-1zM176 359h3v1h-3zM737 356h2v1h-2zM451 250h4v2h-4zM671 596h1v3h-1zM486 589h2v2h-2zM372 205h2v1h-2zM473 372h3v2h-3zM294 710h2v1h-2zM64 665h3v1h-3zM607 636h2v3h-2zM738 558h4v2h-4zM428 185h1v1h-1zM415 433h3v2h-3zM173 525h3v3h-3zM783 358h2v1h-2zM359 617h2v3h-2zM67 620h2v2h-2zM744 229h2v3h-2zM199 387h2v2h-2zM770 504h2v1h-2zM68 615h3v3h-3zM428 736h3v1h-3zM547 585h4v2h-4zM437 293h3v3h-3zM285 769h2v1h-2zM610 459h2v2h-2zM300 727h4v3h-4zM178 522h4v2h-4zM203 452h2v1h-2zM548 152h3v1h-3zM357 372h2v3h-2zM279 756h3v1h-3zM599 65h2v2h-2zM78 278h3v2h-3zM731 712h1v2h-1zM446 396h3v2h-3zM199 429h4v2h-4zM9 412h3v2h-3zM84 555h4v1h-4zM348 125h2v3h-2zM697 247h1v3h-1zM474 531h2v1h-2zM465 440h2v1h-2zM798 154h2v3h-2zM210 502h3v3h-3zM508 109h1v2h-1zM543 410h4v3h-4zM206 263h3v2h-3zM128 495h3v2h-3zM53 482h3v1h-3zM422 540h1v3h-1zM415 462h3v1h-3zM728 340h3v1h-3zM241 654h3v1h-3zM306 349h4v1h-4zM98 22h2v1h-2zM170 601h3v1h-3zM570 165h4v3h-4zM799 674h3v2h-3zM229 249h3v1h-3zM376 497h3v2h-3zM468 469h2v2h-2zM388 452h4v3h-4zM719 655h4v3h-4zM575 719h3v3h-3zM338 752h2v1h-2zM745 391h3v1h-3zM580 243h2v1h-2zM608 437h4v2h-4zM220 415h3v2h-3zM735 729h3v1h-3zM772 427h3v2h-3zM802 137h1v1h-1zM382 496h1v2h-1zM533 445h1v2h-1zM24 669h1v1h-1zM96 722h4v1h-4zM117 145h1v2h-1zM365 270h1v1h-1zM526 423h1v2h-1zM39 217h3v3h-3zM320 439h1v3h-1zM10 604h2v3h-2zM180 568h2v1h-2zM207 754h1v2h-1zM751 670h2v1h-2zM445 231h3v2h-3zM790 373h3v2h-3zM98 601h3v2h-3zM396 601h3v1h-3zM499 559h1v2h-1zM261 308h4v1h-4zM772 545h2v1h-2zM285 240h2v3h-2zM722 78h2v3h-2zM82 560h2v1h-2zM180 649h3v2h-3zM329 117h3v1h-3zM110 364h4v1h-4zM389 688h3v3h-3zM466 667h1v3h-1zM590 253h1v3h-1zM443 53h2v1h-2zM784 693h3v3h-3zM591 739h3v2h-3zM369 581h3v1h-3zM586 592h3v3h-3zM725 479h3v2h-3zM472 567h2v3h-2zM526 58h3v2h-3zM154 748h2v3h-2zM496 579h3v1h-3zM554 33h3v1h-3zM67 436h3v1h-3zM130 34h2v3h-2zM370 331h3v3h-3zM36 540h1v2h-1zM251 640h3v1h-3zM204 131h3v2h-3zM453 418h3v2h-3zM389 389h3v2h-3zM284 190h1v1h-1zM457 231h3v1h-3zM383 540h2v2h-2zM153 387h3v1h-3zM797 695h3v3h-3zM99 491h2v1h-2zM777 618h3v1h-3zM650 698h4v3h-4zM336 558h1v3h-1zM314 355h2v1h-2zM653 271h3v2h-3zM265 112h1v1h-1zM381 772h3v1h-3zM201 517h3v2h-3zM387 539h4v1h-4zM217 585h1v1h-1zM324 559h3v2h-3zM169 658h1v1h-1zM605 353h4v3h-4zM606 85h2v2h-2zM675 358h3v2h-3zM732 578h2v1h-2zM644 369h3v1h-3zM307 708h3v2h-3zM6 316h2v2h-2zM498 631h3v3h-3zM135 75h1v1h-1zM282 306h3v2h-3zM449 599h2v1h-2zM744 572h4v2h-4zM757 557h3v1h-3zM42 691h1v2h-1zM344 540h3v1h-3zM107 405h4v1h-4zM410 604h2v2h-2zM644 663h3v1h-3zM529 454h3v1h-3zM517 632h3v1h-3zM408 419h2v2h-2zM193 529h2v1h-2zM769 681h2v1h-2zM569 523h4v1h-4zM806 275h2v1h-2zM325 764h3v1h-3zM677 210h2v1h-2zM157 608h1v1h-1zM226 746h2v2h-2zM135 353h2v3h-2zM195 441h1v2h-1zM794 295h3v1h-3zM556 40h3v2h-3zM502 105h3v1h-3zM609 352h3v1h-3zM715 585h1v3h-1zM714 500h4v2h-4zM515 68h3v2h-3zM588 161h2v2h-2zM25 311h3v1h-3zM715 575h3v2h-3zM208 277h1v2h-1zM587 281h4v2h-4zM765 65h1v1h-1zM22 542h2v1h-2zM782 138h2v2h-2zM412 404h3v2h-3zM555 473h4v2h-4zM506 527h4v2h-4zM311 197h2v3h-2zM146 776h2v1h-2zM230 104h1v1h-1zM688 690h4v2h-4zM111 84h1v1h-1zM98 573h1v3h-1zM647 556h3v2h-3zM239 687h4v1h-4zM42 449h2v2h-2zM172 487h3v1h-3zM224 244h3v1h-3zM323 725h4v1h-4zM641 507h3v2h-3zM574 447h2v2h-2zM141 22h3v2h-3zM221 773h2v2h-2zM531 617h4v1h-4zM234 561h3v2h-3zM312 162h1v2h-1zM757 745h2v2h-2zM275 266h1v1h-1zM437 623h4v1h-4zM656 224h3v3h-3zM85 394h2v2h-2zM196 473h2v1h-2zM524 296h4v1h-4zM87 320h3v1h-3zM189 722h2v3h-2zM123 295h1v2h-1zM554 209h2v1h-2zM135 622h3v1h-3zM180 41h4v2h-4zM741 571h3v1h-3zM118 754h3v2h-3zM267 303h3v2h-3zM74 283h1v2h-1zM502 772h3v1h-3zM83 512h2v2h-2zM487 369h3v3h-3zM520 355h2v1h-2zM134 641h2v2h-2zM461 457h1v2h-1zM112 142h1v3h-1zM587 277h4v2h-4zM132 739h4v2h-4zM653 732h2v3h-2zM277 90h4v1h-4zM114 67h4v1h-4zM790 547h1v3h-1zM384 103h3v3h-3zM526 637h3v3h-3zM295 455h3v1h-3zM322 735h1v2h-1zM290 649h2v1h-2zM99 577h2v1h-2zM160 445h3v3h-3zM576 186h4v1h-4zM429 735h3v2h-3zM243 505h1v1h-1zM187 722h4v2h-4zM532 258h4v2h-4zM28 569h3v3h-3zM538 512h3v1h-3zM133 312h2v2h-2zM597 741h2v1h-2zM87 482h3v1h-3zM457 307h3v1h-3zM511 536h4v2h-4zM244 77h4v2h-4zM388 318h1v1h-1zM772 749h3v2h-3zM327 86h2v1h-2zM8 412h1v3h-1zM236 357h2v1h-2zM59 207h2v3h-2zM160 645h2v3h-2zM270 518h2v2h-2zM446 454h2v1h-2zM511 541h4v3h-4zM226 547h3v1h-3zM785 599h2v2h-2zM430 777h4v2h-4zM696 186h2v1h-2zM645 608h1v1h-1zM147 573h2v3h-2zM13 37h4v2h-4zM366 406h3v1h-3zM162 623h3v2h-3zM649 653h3v3h-3zM666 201h3v2h-3zM475 624h3v3h-3zM399 308h2v2h-2zM675 488h1v2h-1zM170 721h1v2h-1zM488 409h2v2h-2zM382 564h2v2h-2zM132 410h2v2h-2zM360 651h3v1h-3zM252 618h2v1h-2zM549 743h3v2h-3zM478 472h4v1h-4zM86 128h1v2h-1zM393 611h3v1h-3zM635 304h3v1h-3zM58 736h2v3h-2zM792 310h2v1h-2zM786 243h1v2h-1zM245 184h2v2h-2zM228 505h4v3h-4zM203 370h3v2h-3zM15 152h2v2h-2zM582 276h4v1h-4zM121 646h2v1h-2zM515 96h3v2h-3zM26 534h3v1h-3zM320 186h2v1h-2zM72 532h3v2h-3zM336 636h1v3h-1zM193 610h3v1h-3zM742 377h2v2h-2zM293 428h2v1h-2zM271 283h3v2h-3zM268 436h2v2h-2zM581 87h4v2h-4zM558 525h2v1h-2zM301 660h3v1h-3zM644 366h3v1h-3zM662 353h3v1h-3zM44 697h2v2h-2zM307 587h4v1h-4zM740 137h3v2h-3zM647 454h2v2h-2zM210 738h3v2h-3zM329 543h1v1h-1zM342 428h2v2h-2zM705 701h2v1h-2zM164 627h2v2h-2zM561 257h1v3h-1zM422 191h3v2h-3zM524 195h2v1h-2zM3 642h3v2h-3zM621 344h1v3h-1zM584 593h1v3h-1zM393 634h3v1h-3zM778 644h4v2h-4zM113 717h2v1h-2zM660 563h3v1h-3zM341 280h2v2h-2zM467 774h2v1h-2zM589 566h1v1h-1zM492 745h4v1h-4zM783 361h2v1h-2zM404 127h3v3h-3zM341 268h4v2h-4zM498 446h4v2h-4zM371 158h2v1h-2zM805 135h2v1h-2zM527 659h3v3h-3zM84 515h4v1h-4zM267 189h2v2h-2zM340 455h2v2h-2zM315 728h1v3h-1zM368 459h2v3h-2zM271 256h3v1h-3zM805 34h4v1h-4zM542 233h3v1h-3zM343 241h4v2h-4zM678 697h3v2h-3zM260 454h1v2h-1zM353 606h2v2h-2zM681 363h3v2h-3zM718 617h1v2h-1zM149 459h2v2h-2zM562 586h3v3h-3zM468 600h1v2h-1zM488 640h2v2h-2zM506 541h3v3h-3zM624 253h2v2h-2zM708 659h2v2h-2zM738 683h2v3h-2zM160 262h1v1h-1zM373 525h2v1h-2zM97 146h3v2h-3zM326 197h2v1h-2zM447 632h2v1h-2zM259 420h1v3h-1zM476 724h2v2h-2zM527 643h1v3h-1zM620 613h2v2h-2zM111 551h3v3h-3zM279 209h2v1h-2zM295 524h1v3h-1zM144 387h3v3h-3zM307 334h4v1h-4zM221 30h3v1h-3zM90 510h4v1h-4zM20 487h2v2h-2zM351 686h4v3h-4zM20 731h3v1h-3zM528 651h1v1h-1zM702 479h4v3h-4zM59 383h2v1h-2zM265 315h4v2h-4zM519 488h4v3h-4zM193 563h2v1h-2zM804 691h1v3h-1zM295 133h3v3h-3zM153 567h2v3h-2zM10 396h2v1h-2zM806 355h4v2h-4zM482 363h1v2h-1zM146 243h1v2h-1zM312 118h4v2h-4zM128 529h4v1h-4zM738 596h2v1h-2zM788 251h2v1h-2zM684 24h2v2h-2zM45 723h2v2h-2zM781 293h1v3h-1zM86 344h2v2h-2zM100 225h1v2h-1zM423 310h2v1h-2zM176 479h3v1h-3zM49 362h2v1h-2zM434 764h1v1h-1zM491 630h4v2h-4zM65 156h3v2h-3zM92 607h4v3h-4zM689 373h4v1h-4zM565 581h3v1h-3zM186 184h3v1h-3zM755 54h4v1h-4zM223 393h4v2h-4zM7 735h3v2h-3zM266 747h1v2h-1zM438 380h2v1h-2zM606 347h3v1h-3zM156 71h4v2h-4zM508 40h2v3h-2zM618 518h2v2h-2zM18 666h1v2h-1zM71 568h2v1h-2zM267 398h1v1h-1zM657 606h2v1h-2zM26 757h3v2h-3zM414 563h3v3h-3zM273 572h1v3h-1zM559 120h4v3h-4zM800 248h1v1h-1zM592 313h4v1h-4zM353 387h2v1h-2zM655 244h4v3h-4zM501 685h4v2h-4zM563 615h3v2h-3zM504 484h3v1h-3zM643 522h2v1h-2zM579 707h3v2h-3zM368 216h2v1h-2zM63 453h4v1h-4zM746 208h2v1h-2zM487 315h2v1h-2zM440 454h3v2h-3zM525 679h2v1h-2zM16 340h1v2h-1zM690 568h3v1h-3zM733 458h2v1h-2zM621 54h2v2h-2zM193 399h3v2h-3zM673 354h2v1h-2zM772 710h1v1h-1zM746 773h3v1h-3zM595 578h4v1h-4zM419 61h2v1h-2zM542 277h1v1h-1zM467 405h1v1h-1zM788 417h1v3h-1zM553 611h3v3h-3zM348 677h2v2h-2zM506 399h3v1h-3zM320 710h1v3h-1zM618 464h2v1h-2zM535 561h2v1h-2zM748 317h2v1h-2zM369 463h2v3h-2zM562 630h3v2h-3zM381 579h2v2h-2zM310 191h3v2h-3zM475 320h2v2h-2zM429 698h3v1h-3zM28 721h1v1h-1zM748 600h4v1h-4zM279 387h4v2h-4zM791 308h3v2h-3zM264 85h3v1h-3zM236 710h2v1h-2zM236 419h2v1h-2zM46 311h3v1h-3zM267 562h4v2h-4zM385 145h1v2h-1zM438 692h1v2h-1zM544 676h3v1h-3zM32 216h4v3h-4zM746 365h2v2h-2zM173 557h4v2h-4zM708 735h1v2h-1zM698 670h3v1h-3zM604 66h1v3h-1zM451 621h3v1h-3zM235 186h3v1h-3zM165 416h2v2h-2zM600 497h3v1h-3zM688 395h1v1h-1zM423 756h4v1h-4zM645 355h1v1h-1zM255 507h4v2h-4zM556 777h3v1h-3zM134 534h2v2h-2zM453 468h4v1h-4zM183 513h3v2h-3zM290 694h4v1h-4zM118 29h2v2h-2zM628 126h2v1h-2zM426 576h3v2h-3zM83 365h1v2h-1zM211 476h3v2h-3zM707 440h2v1h-2zM26 435h1v2h-1zM381 441h3v1h-3zM309 164h1v3h-1zM259 112h2v1h-2zM589 739h3v1h-3zM195 142h4v2h-4zM713 659h1v1h-1zM408 470h4v2h-4zM724 439h3v1h-3zM522 337h2v3h-2zM415 144h1v2h-1zM774 766h1v1h-1zM448 749h1v3h-1zM172 369h2v2h-2zM399 409h3v1h-3zM72 334h2v1h-2zM329 308h2v2h-2zM796 154h2v3h-2zM674 458h3v2h-3zM8 657h2v1h-2zM109 210h3v1h-3zM491 273h4v1h-4zM435 727h1v1h-1zM619 524h2v2h-2zM172 645h4v2h-4zM14 128h2v3h-2zM556 160h1v1h-1zM296 385h2v2h-2zM425 335h2v1h-2zM662 198h2v3h-2zM369 650h2v1h-2zM602 530h2v1h-2zM178 417h2v1h-2zM422 466h4v2h-4zM469 171h4v3h-4zM660 648h2v1h-2zM498 771h1v2h-1zM384 534h3v2h-3zM110 215h1v1h-1zM505 158h2v1h-2zM167 315h2v3h-2zM192 608h2v2h-2zM592 298h4v3h-4zM151 441h3v1h-3zM434 361h1v2h-1zM68 528h3v3h-3zM36 552h1v2h-1zM375 500h4v1h-4zM402 619h2v1h-2zM267 645h2v2h-2zM106 165h3v1h-3zM811 668h2v2h-2zM340 725h2v1h-2zM460 634h4v1h-4zM271 644h3v2h-3zM291 380h3v3h-3zM114 140h3v1h-3zM79 656h1v1h-1zM313 230h3v1h-3zM83 767h2v3h-2zM604 158h3v2h-3zM795 624h2v1h-2zM229 408h4v1h-4zM801 667h1v1h-1zM660 400h3v1h-3zM659 223h1v1h-1zM311 670h1v2h-1zM374 231h2v2h-2zM112 186h2v1h-2zM361 19h2v3h-2zM110 114h3v2h-3zM514 714h3v1h-3zM156 468h4v1h-4zM573 461h4v2h-4zM323 547h1v2h-1zM284 619h1v3h-1zM23 496h4v3h-4zM310 47h4v1h-4zM749 720h2v2h-2zM189 445h3v1h-3zM752 273h3v3h-3zM656 740h2v1h-2zM338 543h1v2h-1zM8 321h2v3h-2zM617 311h1v3h-1zM282 662h4v1h-4zM134 169h3v2h-3zM29 74h3v3h-3zM133 280h3v2h-3zM488 198h2v3h-2zM725 548h3v1h-3zM556 52h3v2h-3zM517 726h3v1h-3zM455 85h2v3h-2zM302 405h4v1h-4zM323 137h2v2h-2zM343 333h2v3h-2zM264 707h3v1h-3zM57 317h3v2h-3zM140 359h4v1h-4zM544 775h3v3h-3zM66 320h2v1h-2zM480 563h2v3h-2zM341 445h2v3h-2zM132 567h3v2h-3zM450 194h2v2h-2zM283 199h3v1h-3zM389 493h3v2h-3zM258 561h4v1h-4zM526 572h3v2h-3zM774 770h4v1h-4zM627 726h2v1h-2zM620 261h3v3h-3zM269 566h1v3h-1zM441 609h4v2h-4zM672 188h3v1h-3zM562 388h2v3h-2zM632 698h4v2h-4zM102 561h2v1h-2zM309 76h1v3h-1zM803 312h3v2h-3zM674 733h4v1h-4zM420 232h3v3h-3zM321 212h2v2h-2zM801 294h4v1h-4zM284 113h2v1h-2zM549 322h2v1h-2zM674 487h2v3h-2zM246 734h1v2h-1zM495 541h3v2h-3zM134 633h2v2h-2zM255 439h3v1h-3zM325 214h2v2h-2zM26 338h3v1h-3zM590 752h3v1h-3zM446 384h4v2h-4zM686 619h4v3h-4zM586 727h2v2h-2zM378 343h4v3h-4zM762 435h3v2h-3zM343 349h3v1h-3zM759 410h3v2h-3zM754 303h4v1h-4zM461 84h3v2h-3zM573 635h3v1h-3zM611 163h3v2h-3zM286 749h1v1h-1zM288 685h2v2h-2zM35 727h2v3h-2zM260 185h2v2h-2zM179 217h2v1h-2zM257 143h2v2h-2zM380 560h4v2h-4zM655 139h1v2h-1zM555 636h4v1h-4zM72 251h2v2h-2zM580 174h1v1h-1zM348 463h2v2h-2zM201 520h2v1h-2zM298 327h2v2h-2zM551 557h2v1h-2zM509 79h1v2h-1zM278 602h3v3h-3zM12 175h3v1h-3zM250 143h1v2h-1zM684 194h4v2h-4zM807 498h1v1h-1zM248 209h2v2h-2zM665 167h1v1h-1zM505 438h3v1h-3zM299 287h4v1h-4zM231 527h3v2h-3zM493 522h2v2h-2zM383 444h3v2h-3zM656 641h2v1h-2zM562 445h4v1h-4zM805 630h3v2h-3zM412 557h1v1h-1zM674 684h4v2h-4zM511 515h3v1h-3zM341 748h3v1h-3zM593 69h3v1h-3zM612 182h3v2h-3zM222 681h2v3h-2zM603 457h3v1h-3zM379 424h2v3h-2zM656 619h1v1h-1zM328 514h2v1h-2zM176 279h2v3h-2zM376 475h4v3h-4zM737 569h3v2h-3zM643 561h3v2h-3zM471 159h3v3h-3zM613 116h2v2h-2zM633 755h2v3h-2zM491 671h2v3h-2zM674 343h2v1h-2zM178 680h1v1h-1zM808 511h3v1h-3zM524 745h3v3h-3zM35 343h4v1h-4zM812 150h2v1h-2zM153 307h3v1h-3zM370 268h2v1h-2zM277 30h2v2h-2zM177 750h3v2h-3zM270 757h3v3h-3zM217 622h2v1h-2zM485 413h2v3h-2zM97 113h4v1h-4zM124 700h3v1h-3zM244 606h1v2h-1zM247 180h4v3h-4zM15 539h2v1h-2zM703 278h2v2h-2zM574 106h4v2h-4zM85 555h4v3h-4zM534 478h3v2h-3zM198 620h2v1h-2zM356 511h4v2h-4zM96 761h2v1h-2zM293 166h3v3h-3zM796 738h1v2h-1zM535 721h2v2h-2zM338 489h2v2h-2zM7 540h4v1h-4zM304 434h2v2h-2zM598 415h2v1h-2zM808 449h4v1h-4zM163 70h2v2h-2zM753 756h2v1h-2zM391 747h3v2h-3zM34 278h3v2h-3zM84 218h3v2h-3zM261 210h2v2h-2zM288 43h2v2h-2zM730 54h3v1h-3zM65 325h1v1h-1zM744 174h4v1h-4zM249 428h2v2h-2zM52 221h4v1h-4zM770 474h2v1h-2zM200 492h3v1h-3zM350 554h3v3h-3zM738 767h2v1h-2zM683 550h1v2h-1zM697 195h3v3h-3zM36 628h2v2h-2zM587 242h2v3h-2zM294 599h2v2h-2zM545 740h3v1h-3zM204 47h2v2h-2zM456 109h3v3h-3zM520 688h2v2h-2zM675 30h2v2h-2zM579 683h1v1h-1zM334 377h3v3h-3zM426 298h3v2h-3zM623 284h4v2h-4zM437 487h4v2h-4zM673 182h3v1h-3zM80 202h2v2h-2zM798 643h3v1h-3zM127 746h1v2h-1zM195 235h3v1h-3zM754 191h2v2h-2zM59 629h1v1h-1zM307 478h3v3h-3zM209 561h3v3h-3zM89 367h3v1h-3zM385 104h2v2h-2zM158 155h1v2h-1zM761 498h2v1h-2zM3 708h2v2h-2zM328 711h3v1h-3zM297 550h1v1h-1zM371 233h3v1h-3zM672 386h3v3h-3zM354 290h3v2h-3zM704 572h3v1h-3zM631 157h3v3h-3zM40 356h3v3h-3zM18 591h2v2h-2zM512 181h3v3h-3zM499 765h4v2h-4zM614 427h3v1h-3zM365 647h4v1h-4zM110 510h2v1h-2zM561 522h2v1h-2zM708 153h3v2h-3zM588 295h3v2h-3zM162 434h4v1h-4zM735 19h3v2h-3zM798 723h3v2h-3zM67 778h2v1h-2zM775 426h3v2h-3zM240 420h2v2h-2zM316 686h3v1h-3zM749 499h3v1h-3zM334 635h3v3h-3zM212 441h3v2h-3zM254 309h1v3h-1zM426 438h3v2h-3zM805 362h3v2h-3zM498 560h1v3h-1zM776 561h3v3h-3zM289 473h2v2h-2zM419 155h2v1h-2zM343 362h4v2h-4zM637 413h4v1h-4zM665 598h3v1h-3zM461 560h3v3h-3zM271 609h3v2h-3zM411 402h2v3h-2zM125 686h3v2h-3zM807 581h2v2h-2zM524 642h3v2h-3zM555 504h4v2h-4zM245 303h1v3h-1zM605 751h3v3h-3zM409 665h2v3h-2zM202 771h3v2h-3zM326 363h3v3h-3zM43 609h2v3h-2zM588 510h4v2h-4zM545 615h2v1h-2zM581 216h3v1h-3zM177 398h1v2h-1zM229 479h4v2h-4zM653 539h3v2h-3zM337 303h3v1h-3zM785 271h2v3h-2zM273 618h3v2h-3zM468 517h3v3h-3zM269 552h3v3h-3zM63 64h3v1h-3zM439 511h3v1h-3zM689 753h1v3h-1zM35 378h1v1h-1zM166 58h3v3h-3zM70 651h2v2h-2zM675 381h2v1h-2zM278 717h3v2h-3zM177 508h1v1h-1zM316 383h3v2h-3zM676 659h3v2h-3zM312 486h3v2h-3zM210 608h3v2h-3zM11 563h4v2h-4zM42 252h4v3h-4zM531 127h4v3h-4zM777 166h3v2h-3zM338 123h2v2h-2zM721 534h3v2h-3zM804 719h4v1h-4zM30 113h3v3h-3zM464 27h4v1h-4zM316 595h1v1h-1zM607 99h1v2h-1zM154 604h2v1h-2zM236 595h1v2h-1zM297 597h4v1h-4zM28 461h2v3h-2zM142 492h3v1h-3zM139 665h4v2h-4zM617 444h3v1h-3zM234 426h4v2h-4zM438 386h3v2h-3zM654 498h4v1h-4zM430 707h2v2h-2zM330 409h2v2h-2zM525 724h2v3h-2zM388 726h3v3h-3zM350 723h2v1h-2zM714 23h1v3h-1zM787 448h4v1h-4zM401 406h3v2h-3zM281 537h2v3h-2zM212 340h3v1h-3zM175 281h4v1h-4zM244 427h3v1h-3zM231 685h3v1h-3zM298 405h3v1h-3zM507 527h3v2h-3zM807 720h3v1h-3zM477 396h1v2h-1zM11 97h2v2h-2zM520 224h2v1h-2zM698 204h2v2h-2zM732 276h3v2h-3zM123 157h4v3h-4zM810 30h3v1h-3zM441 657h3v1h-3zM425 577h3v1h-3zM802 126h3v2h-3zM285 373h3v1h-3zM47 392h4v1h-4zM394 444h3v1h-3zM486 588h1v3h-1zM198 732h3v2h-3zM529 175h3v1h-3zM29 629h3v2h-3zM210 722h3v3h-3zM279 305h2v2h-2zM332 520h3v3h-3zM541 209h3v3h-3zM464 538h3v1h-3zM659 548h1v1h-1zM571 647h3v1h-3zM664 713h4v2h-4zM419 647h2v2h-2zM704 751h4v1h-4zM646 554h2v2h-2zM525 650h2v2h-2zM451 681h3v1h-3zM170 740h2v1h-2zM185 752h3v2h-3zM379 713h2v3h-2zM375 256h4v1h-4zM258 518h1v3h-1zM622 166h2v1h-2zM211 441h4v2h-4zM356 473h3v1h-3zM78 32h3v1h-3zM157 456h3v3h-3zM743 276h2v2h-2zM589 638h1v1h-1zM522 253h4v2h-4zM250 727h2v1h-2zM799 146h4v1h-4zM275 243h2v2h-2zM219 369h2v1h-2zM744 431h3v1h-3zM675 678h2v2h-2zM750 576h4v2h-4zM456 459h1v2h-1zM691 49h2v2h-2zM543 142h3v3h-3zM703 36h3v2h-3zM214 596h3v2h-3zM466 650h1v3h-1zM348 763h4v1h-4zM208 233h3v3h-3zM95 432h3v2h-3zM723 619h4v2h-4zM694 219h4v3h-4zM19 647h3v2h-3zM259 44h4v3h-4zM703 563h2v1h-2zM574 329h2v3h-2zM279 176h2v2h-2zM195 311h3v2h-3zM211 115h2v1h-2zM190 556h3v3h-3zM754 715h4v2h-4zM743 598h4v3h-4zM522 254h4v3h-4zM392 748h3v3h-3zM79 103h3v2h-3zM489 329h3v3h-3zM454 209h3v1h-3zM668 666h3v2h-3zM575 696h3v1h-3zM32 718h3v1h-3zM233 654h3v3h-3zM537 172h2v1h-2zM180 757h3v2h-3zM404 714h3v2h-3zM227 340h1v1h-1zM56 149h4v2h-4zM582 429h2v1h-2zM555 733h2v1h-2zM718 178h3v1h-3zM175 498h1v3h-1zM398 562h1v2h-1zM769 87h1v2h-1zM466 618h3v2h-3zM606 426h4v3h-4zM95 678h2v2h-2zM399 533h1v1h-1zM387 553h4v2h-4zM109 139h2v3h-2zM449 645h1v2h-1zM17 724h3v3h-3zM27 231h3v2h-3zM296 97h1v2h-1zM784 520h3v2h-3zM360 585h3v1h-3zM340 591h3v1h-3zM375 584h2v1h-2zM229 116h3v3h-3zM743 465h1v2h-1zM595 679h4v3h-4zM350 25h3v3h-3zM621 220h1v3h-1zM532 559h2v1h-2zM80 135h2v3h-2zM611 496h3v1h-3zM458 147h3v2h-3zM775 222h2v2h-2zM218 672h4v1h-4zM168 721h2v1h-2zM239 447h3v2h-3zM177 585h2v3h-2zM188 51h3v1h-3zM141 547h3v2h-3zM723 429h3v2h-3zM146 94h4v3h-4zM152 652h3v2h-3zM627 765h3v1h-3zM629 306h1v2h-1zM156 92h4v2h-4zM723 238h3v3h-3zM686 591h3v3h-3zM638 556h3v3h-3zM346 343h2v2h-2zM206 764h2v2h-2zM528 594h3v3h-3zM231 216h3v1h-3zM548 715h4v1h-4zM427 446h4v2h-4zM478 226h2v2h-2zM226 416h2v2h-2zM115 44h2v3h-2zM134 697h2v2h-2zM541 635h2v2h-2zM181 31h1v2h-1zM654 138h4v3h-4zM634 262h3v1h-3zM559 772h3v2h-3zM486 186h2v3h-2zM810 593h3v3h-3zM393 687h3v1h-3zM420 231h1v2h-1zM37 504h2v1h-2zM247 231h1v1h-1zM662 723h1v1h-1zM443 719h2v2h-2zM540 458h2v2h-2zM665 522h3v1h-3zM429 426h1v1h-1zM412 330h2v1h-2zM286 456h2v1h-2zM560 359h3v2h-3zM562 31h4v3h-4zM43 477h1v3h-1zM489 758h3v3h-3zM696 502h2v1h-2zM738 37h2v2h-2zM287 739h4v2h-4zM642 677h1v2h-1zM544 552h3v3h-3zM721 218h2v1h-2zM294 529h4v2h-4zM452 548h2v2h-2zM46 535h3v1h-3zM146 741h3v1h-3zM111 690h2v2h-2zM450 661h2v1h-2zM793 674h4v2h-4zM738 421h2v1h-2zM516 389h3v1h-3zM346 160h4v2h-4zM291 564h2v2h-2zM391 696h4v1h-4zM381 580h1v2h-1zM175 348h2v2h-2zM454 24h2v3h-2zM623 646h1v1h-1zM678 50h1v3h-1zM297 559h2v3h-2zM61 316h2v1h-2zM419 743h4v1h-4zM704 186h3v2h-3zM502 760h2v3h-2zM552 743h2v1h-2zM100 84h4v1h-4zM725 500h2v1h-2zM132 647h3v1h-3zM369 578h4v2h-4zM360 542h4v1h-4zM385 770h2v3h-2zM794 580h3v3h-3zM110 728h2v2h-2zM492 126h3v1h-3zM800 425h1v1h-1zM286 453h2v2h-2zM226 504h3v1h-3zM126 716h4v3h-4zM4 327h3v1h-3zM87 538h1v1h-1zM468 531h1v3h-1zM339 666h2v2h-2zM34 227h2v2h-2zM466 703h2v1h-2zM379 697h4v2h-4zM59 230h1v2h-1zM337 588h2v3h-2zM396 440h3v2h-3zM626 146h1v3h-1zM503 318h2v1h-2zM189 456h2v1h-2zM211 209h3v2h-3zM495 246h3v3h-3zM121 262h2v2h-2zM19 400h1v3h-1zM698 470h4v2h-4zM221 285h3v2h-3zM279 707h3v1h-3zM485 708h4v2h-4zM277 679h3v1h-3zM767 128h4v1h-4zM246 506h2v1h-2zM175 571h3v1h-3zM747 48h3v1h-3zM195 372h4v2h-4zM128 762h3v1h-3zM340 126h3v1h-3zM660 138h2v2h-2zM222 572h3v1h-3zM223 133h4v2h-4zM547 573h2v2h-2zM606 724h1v1h-1zM509 538h2v3h-2zM129 344h4v2h-4zM418 466h3v3h-3zM110 534h2v2h-2zM807 678h3v1h-3zM110 669h2v1h-2zM703 693h3v1h-3zM422 704h4v2h-4zM257 159h3v1h-3zM325 400h3v1h-3zM62 712h2v2h-2zM510 354h2v3h-2zM479 79h3v3h-3zM747 704h3v1h-3zM309 621h3v1h-3zM278 334h2v2h-2zM323 673h3v1h-3zM431 338h2v1h-2zM406 267h2v1h-2zM152 268h4v2h-4zM518 494h3v1h-3zM542 759h2v1h-2zM654 759h3v2h-3zM206 194h3v2h-3zM658 650h2v1h-2zM544 764h3v1h-3zM407 483h4v2h-4zM541 158h2v2h-2zM747 53h1v1h-1zM263 298h2v2h-2zM341 752h4v1h-4zM515 226h3v1h-3zM734 348h2v3h-2zM315 179h2v2h-2zM28 420h1v2h-1zM560 427h3v1h-3zM127 383h4v2h-4zM385 234h3v1h-3zM298 706h3v2h-3zM303 79h3v3h-3zM291 80h4v2h-4zM53 777h4v1h-4zM645 517h3v1h-3zM406 229h2v1h-2zM433 440h3v1h-3zM687 247h4v2h-4zM420 503h4v3h-4zM348 739h3v1h-3zM712 677h1v1h-1zM667 721h3v2h-3zM128 469h2v1h-2zM120 91h3v1h-3zM226 435h1v2h-1zM759 315h3v2h-3zM604 562h4v2h-4zM707 645h2v3h-2zM173 414h2v1h-2zM426 718h2v2h-2zM561 777h4v2h-4zM261 247h3v2h-3zM454 468h3v1h-3zM206 250h4v1h-4zM402 704h2v2h-2zM694 479h2v2h-2zM282 469h2v2h-2zM392 504h4v1h-4zM272 214h4v2h-4zM702 238h1v1h-1zM390 487h4v2h-4zM619 283h1v3h-1zM182 121h4v1h-4zM799 636h1v2h-1zM231 452h1v2h-1zM150 47h3v1h-3zM68 259h2v1h-2zM153 749h2v1h-2zM119 302h3v1h-3zM706 752h3v1h-3zM217 581h3v2h-3zM443 600h1v2h-1zM647 499h3v3h-3zM663 478h4v2h-4zM432 306h4v2h-4zM807 515h2v2h-2zM713 570h4v2h-4zM722 117h4v1h-4zM49 712h2v2h-2zM806 607h2v1h-2zM230 215h3v2h-3zM205 595h2v1h-2zM785 757h1v2h-1zM102 533h2v1h-2zM521 455h3v1h-3zM573 31h3v1h-3zM795 535h4v3h-4zM638 396h4v2h-4zM105 439h3v1h-3zM529 542h3v2h-3zM427 598h3v3h-3zM761 526h2v3h-2zM136 40h2v1h-2zM305 527h4v2h-4zM380 674h3v1h-3zM445 539h2v1h-2zM332 75h2v2h-2zM469 758h3v2h-3zM18 493h3v1h-3zM389 686h3v3h-3zM90 501h3v1h-3zM533 608h1v2h-1zM477 497h4v2h-4zM439 410h2v1h-2zM540 642h4v1h-4zM806 548h2v1h-2zM745 639h2v1h-2zM713 316h3v1h-3zM694 538h3v3h-3zM795 425h4v1h-4zM333 549h1v1h-1zM89 692h3v1h-3zM280 641h1v1h-1zM635 341h4v1h-4zM320 548h3v2h-3zM691 441h3v1h-3zM111 660h1v2h-1zM92 734h1v1h-1zM222 515h3v1h-3zM733 123h1v1h-1zM621 109h1v2h-1zM661 771h1v3h-1zM411 454h3v2h-3zM406 747h4v2h-4zM72 666h2v3h-2zM660 686h2v1h-2zM551 686h1v2h-1zM107 84h3v3h-3zM419 561h3v3h-3zM478 76h3v1h-3zM457 220h3v2h-3zM164 713h4v1h-4zM164 756h3v1h-3zM783 774h4v2h-4zM767 63h1v3h-1zM654 105h2v2h-2zM595 176h3v2h-3zM375 617h1v2h-1zM657 82h3v1h-3zM530 268h3v3h-3zM594 211h4v1h-4zM434 586h2v2h-2zM761 649h2v1h-2zM568 755h3v1h-3zM784 572h3v1h-3zM445 674h2v1h-2zM303 723h2v2h-2zM694 40h2v1h-2zM56 241h1v3h-1zM45 201h4v2h-4zM596 665h2v1h-2zM35 663h4v3h-4zM142 251h3v2h-3zM410 515h4v1h-4zM217 539h2v1h-2zM342 565h2v2h-2zM630 33h2v2h-2zM108 257h3v1h-3zM712 492h2v2h-2zM98 207h4v1h-4zM598 558h3v3h-3zM113 711h1v1h-1zM811 438h3v3h-3zM232 718h2v1h-2zM523 659h4v3h-4zM703 215h4v2h-4zM590 438h4v2h-4zM231 245h3v1h-3zM708 280h1v1h-1zM17 700h4v2h-4zM272 224h4v1h-4zM507 396h2v2h-2zM507 249h3v2h-3zM641 114h3v3h-3zM60 125h4v1h-4zM234 562h3v3h-3zM482 250h1v3h-1zM468 365h3v1h-3zM396 275h1v1h-1zM289 141h3v2h-3zM694 225h3v3h-3zM722 292h2v2h-2zM488 748h4v3h-4zM786 480h1v1h-1zM804 723h3v1h-3zM664 624h4v2h-4zM122 687h3v1h-3zM445 711h3v2h-3zM391 417h3v3h-3zM452 435h4v3h-4z"/><path fill="#07073a" d="M522 238h1v1h-1zM74 265h1v3h-1zM50 589h2v2h-2zM547 456h2v2h-2zM718 268h1v3h-1zM509 370h4v2h-4zM511 101h2v2h-2zM287 159h3v3h-3zM157 103h2v1h-2zM241 31h3v3h-3zM530 651h4v1h-4zM801 715h3v2h-3zM215 647h3v1h-3zM270 549h2v1h-2zM760 251h2v3h-2zM201 728h3v2h-3zM152 645h3v2h-3zM17 762h4v1h-4zM65 776h2v2h-2zM532 449h3v1h-3zM701 549h3v3h-3zM798 127h3v1h-3zM286 62h1v3h-1zM466 539h3v2h-3zM455 342h1v1h-1zM143 497h2v1h-2zM444 546h3v2h-3zM570 488h3v1h-3zM118 253h1v1h-1zM695 283h3v1h-3zM729 263h1v1h-1zM668 461h4v2h-4zM353 222h4v1h-4zM278 475h1v2h-1zM544 177h4v3h-4zM644 563h4v1h-4zM777 229h2v2h-2zM300 744h3v2h-3zM480 140h3v1h-3zM90 503h1v2h-1zM6 522h4v2h-4zM747 163h3v2h-3zM299 278h2v1h-2zM566 149h2v2h-2zM291 323h2v2h-2zM515 528h3v1h-3zM343 479h3v1h-3zM209 39h4v2h-4zM396 428h4v2h-4zM322 41h2v1h-2zM114 248h2v1h-2zM798 59h1v1h-1zM618 20h1v3h-1zM474 304h2v1h-2zM781 321h1v3h-1zM129 593h2v2h-2zM375 774h3v1h-3zM613 99h3v1h-3zM460 196h2v1h-2zM683 143h2v2h-2zM595 211h2v1h-2zM600 217h1v2h-1zM361 241h1v2h-1zM670 227h1v2h-1zM549 112h4v1h-4zM280 438h2v2h-2zM757 535h2v1h-2zM47 513h2v1h-2zM167 674h2v3h-2zM412 549h2v2h-2zM318 615h2v2h-2zM412 128h1v1h-1zM52 670h2v2h-2zM52 322h3v2h-3zM368 565h2v2h-2zM656 167h4v2h-4zM611 680h3v2h-3zM401 355h3v1h-3zM648 728h4v3h-4zM546 733h1v1h-1zM403 656h3v1h-3zM774 668h1v2h-1zM138 119h4v1h-4zM347 452h2v1h-2zM636 50h3v1h-3zM553 598h2v1h-2zM506 730h2v2h-2zM530 285h3v1h-3zM646 353h2v1h-2zM407 107h3v1h-3zM313 288h3v3h-3zM762 350h2v2h-2zM476 677h4v1h-4zM400 494h1v1h-1zM812 466h4v1h-4zM698 204h4v1h-4zM436 513h3v1h-3zM111 58h2v3h-2zM433 662h4v2h-4zM135 89h4v1h-4zM149 258h2v2h-2zM762 468h4v1h-4zM273 448h2v1h-2zM482 731h3v2h-3zM349 115h4v2h-4zM299 318h2v2h-2zM434 122h4v1h-4zM582 676h3v1h-3zM611 625h4v1h-4zM425 580h1v1h-1zM220 174h4v1h-4zM93 242h1v1h-1zM285 755h3v1h-3zM573 745h3v2h-3zM591 764h3v2h-3zM623 762h1v1h-1zM319 617h3v1h-3zM435 180h3v1h-3zM563 720h3v2h-3zM771 758h2v2h-2zM552 382h1v1h-1zM536 284h3v2h-3zM188 736h2v2h-2zM41 365h2v1h-2zM31 71h1v3h-1zM688 537h3v1h-3zM247 165h4v1h-4zM102 413h1v1h-1zM452 171h2v2h-2zM61 665h4v1h-4zM303 166h4v1h-4zM522 368h3v1h-3zM811 558h2v1h-2zM44 437h2v2h-2zM630 704h4v1h-4zM210 29h1v3h-1zM741 75h3v2h-3zM657 523h1v1h-1zM591 628h1v2h-1zM459 547h1v1h-1zM65 317h1v2h-1zM616 671h3v2h-3zM127 434h2v3h-2zM235 169h4v3h-4zM614 636h3v1h-3zM331 429h3v1h-3zM194 89h2v2h-2zM688 40h2v1h-2zM44 54h4v3h-4zM611 545h2v1h-2zM756 108h4v3h-4zM398 225h3v2h-3zM564 329h3v2h-3zM320 50h2v2h-2zM527 578h3v3h-3zM506 295h2v1h-2zM359 469h4v1h-4zM453 381h4v1h-4zM648 744h4v1h-4zM512 426h3v1h-3zM302 380h3v3h-3zM314 167h3v3h-3zM512 326h3v2h-3zM450 548h3v2h-3zM369 60h3v2h-3zM590 176h2v2h-2zM767 113h2v2h-2zM526 231h3v1h-3zM583 291h4v3h-4zM150 607h2v2h-2zM481 646h3v1h-3zM365 301h2v1h-2zM601 245h3v2h-3zM38 304h4v1h-4zM279 576h2v3h-2zM128 713h3v1h-3zM279 772h3v1h-3zM584 167h2v1h-2zM700 132h1v2h-1zM722 591h2v1h-2zM63 191h2v2h-2zM727 164h3v3h-3zM176 712h4v1h-4zM461 134h2v2h-2zM585 390h2v1h-2zM337 407h2v2h-2zM171 406h2v1h-2zM90 574h2v3h-2zM230 713h4v2h-4zM153 695h3v2h-3zM429 387h3v1h-3zM262 684h1v1h-1zM260 745h3v1h-3zM473 326h1v1h-1zM364 121h2v3h-2zM620 134h1v1h-1zM598 469h1v1h-1zM219 192h2v2h-2zM271 384h3v3h-3zM314 368h4v2h-4zM690 483h3v2h-3zM600 100h3v1h-3zM266 578h1v1h-1zM280 568h4v1h-4zM30 683h3v2h-3zM95 385h2v2h-2zM699 621h3v1h-3zM319 686h3v2h-3zM795 390h2v1h-2zM758 184h3v1h-3zM355 417h3v1h-3zM729 463h2v1h-2zM513 240h3v1h-3zM790 292h2v2h-2zM232 720h3v1h-3zM561 531h1v3h-1zM232 767h1v2h-1zM671 483h3v2h-3zM709 439h4v2h-4zM805 53h4v1h-4zM574 351h4v2h-4zM326 485h3v1h-3zM665 500h3v2h-3zM392 259h4v2h-4zM359 553h3v2h-3zM159 696h3v1h-3zM670 63h2v2h-2zM156 25h4v1h-4zM351 409h2v1h-2zM3 603h2v1h-2zM459 407h3v3h-3zM414 573h1v2h-1zM81 603h1v1h-1zM700 223h4v2h-4zM146 435h1v1h-1zM264 698h2v3h-2zM741 593h4v1h-4zM739 176h2v2h-2zM222 174h4v1h-4zM308 90h4v3h-4zM767 583h1v1h-1zM102 441h4v1h-4zM364 97h2v1h-2zM247 138h2v2h-2zM557 139h2v2h-2zM133 264h4v3h-4zM813 737h3v1h-3zM34 453h3v3h-3zM813 510h1v2h-1zM340 89h3v1h-3zM699 623h2v2h-2zM658 544h2v3h-2zM240 264h2v3h-2zM245 523h3v1h-3zM439 331h1v2h-1zM19 132h3v2h-3zM309 487h2v2h-2zM126 240h4v1h-4zM627 422h2v2h-2zM521 640h2v1h-2zM770 488h1v2h-1zM729 387h4v2h-4zM591 526h1v3h-1zM800 341h1v1h-1zM424 97h2v2h-2zM406 368h3v2h-3zM347 377h2v1h-2zM6 606h4v1h-4zM43 569h3v1h-3zM304 663h2v2h-2zM238 242h3v1h-3zM180 48h3v2h-3zM67 664h2v1h-2zM412 418h3v3h-3zM685 75h2v3h-2zM444 483h4v3h-4zM352 649h2v1h-2zM26 776h4v3h-4zM366 661h2v3h-2zM329 506h2v1h-2zM260 539h3v1h-3zM807 107h3v1h-3zM572 682h1v3h-1zM680 577h3v2h-3zM630 107h3v3h-3zM106 110h2v2h-2zM397 485h3v3h-3zM310 375h1v2h-1zM324 454h4v2h-4zM226 313h1v2h-1zM661 777h3v1h-3zM615 88h4v2h-4zM463 201h1v2h-1zM421 732h4v1h-4zM748 116h3v2h-3zM678 696h3v2h-3zM61 411h2v1h-2zM144 397h4v2h-4zM451 518h1v1h-1zM494 196h2v2h-2zM124 214h1v2h-1zM220 122h1v2h-1zM649 344h1v1h-1zM489 512h2v1h-2zM645 687h3v1h-3zM706 777h1v3h-1zM19 631h3v1h-3zM498 257h1v2h-1zM763 522h4v1h-4zM224 216h3v1h-3zM425 703h4v1h-4zM267 640h3v2h-3zM732 436h1v1h-1zM109 36h2v1h-2zM310 698h4v3h-4zM381 553h3v1h-3zM711 280h4v1h-4zM338 28h3v2h-3zM782 745h4v1h-4zM768 257h2v2h-2zM418 649h3v1h-3zM468 359h3v3h-3zM712 37h4v1h-4zM122 663h2v3h-2zM346 94h3v2h-3zM749 355h2v3h-2zM599 239h1v2h-1zM267 532h3v3h-3zM326 110h2v1h-2zM245 173h2v1h-2zM374 721h4v2h-4zM732 447h4v2h-4zM419 192h2v1h-2zM192 637h2v2h-2zM715 171h3v2h-3zM60 19h2v3h-2zM311 402h3v2h-3zM317 278h3v2h-3zM52 579h3v2h-3zM475 238h4v2h-4zM320 672h4v3h-4zM356 770h2v2h-2zM312 355h3v1h-3zM773 531h1v1h-1zM667 583h1v3h-1zM734 748h2v3h-2zM268 637h2v1h-2zM245 570h2v1h-2zM313 336h2v1h-2zM485 549h2v2h-2zM163 581h3v2h-3zM494 470h3v2h-3zM236 243h1v2h-1zM754 756h1v1h-1zM158 378h4v1h-4zM640 716h1v2h-1zM618 667h2v2h-2zM182 723h3v1h-3zM373 443h4v1h-4zM596 723h2v2h-2zM562 519h2v1h-2zM590 443h2v3h-2zM542 455h3v2h-3zM38 239h3v3h-3zM738 101h4v2h-4zM65 245h2v3h-2zM167 552h4v1h-4zM417 190h2v2h-2zM277 595h2v1h-2zM294 485h4v2h-4zM652 221h3v1h-3zM253 745h3v1h-3zM217 585h1v1h-1zM290 339h3v1h-3zM232 123h2v1h-2zM760 546h2v2h-2zM167 399h4v2h-4zM101 592h3v2h-3zM771 34h4v1h-4zM689 69h3v3h-3zM445 351h1v3h-1zM175 253h4v1h-4zM272 662h1v2h-1zM559 762h3v1h-3zM723 475h2v3h-2zM724 542h3v2h-3zM137 366h3v2h-3zM363 306h1v1h-1zM264 39h3v2h-3zM332 143h1v3h-1zM662 635h1v3h-1zM374 34h2v1h-2zM604 265h3v1h-3zM72 114h1v1h-1zM681 221h4v3h-4zM511 577h3v1h-3zM677 540h2v2h-2zM283 335h2v1h-2zM330 599h2v2h-2zM721 318h4v2h-4zM236 334h1v3h-1zM618 165h3v3h-3zM408 65h2v1h-2zM812 396h3v3h-3zM499 46h3v2h-3zM785 176h3v1h-3zM521 233h2v1h-2zM100 713h3v2h-3zM328 245h4v2h-4zM589 195h4v2h-4zM589 70h2v1h-2zM264 277h1v2h-1zM259 19h2v2h-2zM11 136h2v1h-2zM505 42h2v1h-2zM323 416h3v3h-3zM527 470h4v2h-4zM475 607h2v3h-2zM455 756h2v3h-2zM128 139h3v2h-3zM285 389h2v3h-2zM67 123h1v2h-1zM230 672h1v1h-1zM51 595h4v1h-4zM470 618h2v2h-2zM531 526h2v1h-2zM385 272h3v3h-3zM615 265h3v2h-3zM668 311h3v3h-3zM179 387h2v2h-2zM519 111h2v2h-2zM682 662h2v3h-2zM263 742h4v2h-4zM443 555h3v2h-3zM649 196h1v1h-1zM764 440h3v1h-3zM144 70h3v2h-3zM315 664h3v2h-3zM809 460h2v1h-2zM395 662h2v2h-2zM70 530h3v3h-3zM616 499h2v1h-2zM434 699h3v2h-3zM5 504h2v2h-2zM583 428h3v1h-3zM641 770h3v2h-3zM738 560h3v2h-3zM574 314h2v1h-2zM3 425h3v1h-3zM405 719h2v3h-2zM127 225h2v1h-2zM734 374h3v3h-3zM133 413h1v2h-1zM301 775h1v1h-1zM458 308h2v2h-2zM108 256h3v1h-3zM354 404h4v1h-4zM743 777h1v2h-1zM459 498h2v3h-2zM552 527h2v1h-2zM701 767h1v1h-1zM229 336h3v1h-3zM593 696h4v2h-4zM426 696h2v3h-2zM178 264h4v3h-4zM439 356h2v2h-2zM13 608h1v3h-1zM400 664h4v2h-4zM504 56h3v1h-3zM799 19h4v2h-4zM642 703h2v2h-2zM410 370h1v1h-1zM528 297h2v1h-2zM656 395h2v1h-2zM513 331h2v3h-2zM813 287h3v1h-3zM720 555h2v1h-2zM199 700h4v1h-4zM506 519h2v1h-2zM123 724h3v1h-3zM87 560h4v1h-4zM679 278h2v1h-2zM582 296h3v1h-3zM475 231h4v1h-4zM501 442h2v1h-2zM601 768h1v2h-1zM416 153h3v2h-3zM375 602h1v3h-1zM248 593h3v2h-3zM626 111h3v1h-3zM125 394h1v1h-1zM249 478h2v2h-2zM11 450h3v1h-3zM629 205h4v3h-4zM353 53h3v1h-3zM663 275h2v3h-2zM371 734h3v3h-3zM582 688h4v1h-4zM47 105h3v2h-3zM256 659h2v3h-2zM250 395h3v3h-3zM569 763h3v3h-3zM134 330h2v1h-2zM164 437h4v1h-4zM305 345h2v1h-2zM459 431h2v1h-2zM108 715h2v2h-2zM712 20h2v1h-2zM7 256h4v2h-4zM752 517h1v2h-1zM10 747h4v2h-4zM566 171h1v2h-1zM575 474h3v2h-3zM80 442h1v3h-1zM283 312h1v1h-1zM310 708h3v2h-3zM310 771h3v1h-3zM516 125h1v2h-1zM659 388h1v3h-1zM100 627h2v1h-2zM750 504h4v2h-4zM452 370h2v2h-2zM775 46h3v2h-3zM601 134h2v2h-2zM334 408h3v1h-3zM698 661h1v2h-1zM648 775h2v1h-2zM403 534h3v2h-3zM809 165h2v1h-2zM76 612h1v3h-1zM355 442h2v1h-2zM39 180h4v2h-4zM547 663h3v1h-3zM707 550h3v3h-3zM771 257h2v1h-2zM352 419h1v2h-1zM40 758h2v3h-2zM179 478h2v3h-2zM312 242h3v1h-3zM594 699h4v3h-4zM167 525h2v1h-2zM520 335h4v3h-4zM8 346h2v3h-2zM393 303h2v2h-2zM142 303h2v1h-2zM214 266h2v1h-2zM618 101h1v2h-1zM606 450h3v2h-3zM750 424h3v2h-3zM656 64h2v1h-2zM585 426h3v1h-3zM483 245h4v1h-4zM450 774h2v2h-2zM47 476h3v2h-3zM178 468h3v2h-3zM286 561h2v2h-2zM580 468h3v3h-3zM531 257h2v2h-2zM501 579h1v1h-1zM485 99h3v2h-3zM157 248h3v2h-3zM113 426h2v1h-2zM289 431h1v3h-1zM69 104h3v1h-3zM110 252h2v1h-2zM671 96h3v3h-3zM130 660h3v1h-3zM82 198h2v3h-2zM626 25h2v3h-2zM112 314h2v2h-2zM74 598h3v1h-3zM656 452h2v1h-2zM23 538h2v2h-2zM231 413h3v1h-3zM262 158h2v2h-2zM698 326h2v3h-2zM702 324h2v2h-2zM108 138h2v3h-2zM35 328h4v3h-4zM499 586h4v2h-4zM532 379h2v1h-2zM502 421h1v2h-1zM171 216h4v1h-4zM573 651h3v1h-3zM180 571h4v1h-4zM555 252h2v1h-2zM485 150h4v2h-4zM120 600h3v2h-3zM292 468h1v1h-1zM558 247h2v1h-2zM718 366h2v3h-2zM516 144h3v1h-3zM438 336h3v2h-3zM80 211h4v2h-4zM63 72h1v2h-1zM545 537h1v2h-1zM566 168h2v3h-2zM776 493h3v2h-3zM310 462h2v2h-2zM126 306h4v2h-4zM728 357h2v1h-2zM88 93h4v2h-4zM93 428h1v2h-1zM324 465h2v2h-2zM558 527h2v1h-2zM711 536h3v1h-3zM169 597h3v1h-3zM490 103h2v1h-2zM305 498h4v1h-4zM508 82h1v1h-1zM249 494h3v1h-3zM133 109h1v3h-1zM782 114h3v2h-3zM102 643h1v3h-1zM346 644h3v1h-3zM312 528h3v1h-3zM231 513h3v2h-3zM287 89h3v2h-3zM89 536h3v1h-3zM178 525h1v1h-1zM542 179h2v1h-2zM228 757h2v2h-2zM601 287h2v1h-2zM773 35h2v3h-2zM87 355h1v2h-1zM574 93h3v1h-3zM6 772h2v2h-2zM11 766h4v1h-4zM510 500h4v2h-4zM411 40h1v2h-1zM412 651h3v3h-3zM717 301h4v1h-4zM457 322h3v1h-3zM65 98h2v2h-2zM133 282h3v2h-3zM464 699h3v2h-3zM116 108h1v2h-1zM592 72h3v3h-3zM551 346h2v2h-2zM437 680h2v2h-2zM240 428h3v1h-3zM347 653h3v1h-3zM531 237h3v1h-3zM682 755h2v1h-2zM524 723h3v1h-3zM268 439h2v2h-2zM166 663h2v2h-2zM115 346h4v1h-4zM617 444h3v2h-3zM676 439h2v1h-2zM312 119h1v3h-1zM132 538h4v1h-4zM135 685h3v3h-3zM529 147h1v3h-1zM118 50h3v1h-3zM314 698h2v3h-2zM773 630h2v1h-2zM614 154h2v1h-2zM327 565h1v2h-1zM122 669h3v2h-3zM362 590h2v2h-2zM535 132h2v1h-2zM568 406h1v3h-1zM592 305h3v1h-3zM731 767h2v1h-2zM361 648h1v3h-1zM498 595h4v2h-4zM756 574h2v3h-2zM544 168h3v3h-3zM811 516h2v2h-2zM599 126h3v2h-3zM718 379h3v3h-3zM46 465h2v2h-2zM183 160h2v2h-2zM339 38h2v1h-2zM255 70h3v2h-3zM795 221h3v1h-3zM527 640h2v1h-2zM465 499h1v1h-1zM636 708h4v3h-4zM739 744h2v1h-2zM780 665h3v1h-3zM446 138h2v1h-2zM230 667h1v2h-1zM498 409h2v2h-2zM238 534h1v1h-1zM301 229h3v2h-3zM581 349h4v2h-4zM771 302h3v1h-3zM363 677h1v1h-1zM631 24h3v1h-3zM279 419h3v2h-3zM75 610h1v2h-1zM178 534h3v2h-3zM240 391h3v1h-3zM717 61h1v3h-1zM604 355h2v2h-2zM483 245h1v2h-1zM167 453h3v2h-3zM162 757h2v3h-2zM529 391h3v2h-3zM668 776h2v2h-2zM110 305h2v1h-2zM682 414h3v2h-3zM747 269h2v2h-2zM65 206h1v3h-1zM567 732h3v2h-3zM564 709h3v1h-3zM112 57h1v2h-1zM384 96h4v2h-4zM162 726h1v1h-1zM248 680h4v1h-4zM576 329h2v2h-2zM471 757h2v2h-2zM741 529h4v2h-4zM107 644h2v1h-2zM261 477h3v1h-3zM600 35h2v1h-2zM121 776h2v3h-2zM105 158h2v3h-2zM777 712h3v1h-3zM504 154h3v1h-3zM238 726h1v2h-1zM149 449h3v2h-3zM409 198h2v1h-2zM659 112h2v3h-2zM685 691h4v2h-4zM551 454h4v1h-4zM675 486h2v3h-2zM206 661h3v3h-3zM781 208h3v2h-3zM57 622h3v3h-3zM468 749h2v2h-2zM332 757h3v1h-3zM285 435h2v3h-2zM430 774h2v2h-2zM633 742h1v2h-1zM586 654h3v2h-3zM690 577h4v1h-4zM689 130h3v1h-3zM393 650h3v2h-3zM312 217h2v1h-2zM233 31h2v2h-2zM58 173h1v3h-1zM606 744h2v2h-2zM100 586h3v1h-3zM360 417h3v2h-3zM354 706h4v2h-4zM467 131h4v2h-4zM75 323h3v1h-3zM265 705h4v2h-4zM5 332h3v3h-3zM436 127h2v1h-2zM458 403h4v1h-4zM687 352h2v1h-2zM355 259h3v2h-3zM379 709h4v1h-4zM583 405h2v1h-2zM713 247h2v3h-2zM139 162h1v1h-1zM784 257h3v2h-3zM24 503h3v2h-3zM444 114h2v1h-2zM241 237h1v2h-1zM58 493h4v3h-4zM112 103h3v1h-3zM46 555h2v1h-2zM39 358h2v3h-2zM719 115h4v1h-4zM158 768h2v2h-2zM673 538h2v2h-2zM782 754h2v3h-2zM162 681h3v1h-3zM242 334h4v2h-4zM664 131h3v2h-3zM161 535h3v3h-3zM137 323h3v1h-3zM369 450h2v3h-2zM327 211h3v2h-3zM469 600h4v3h-4zM242 279h4v2h-4zM538 371h3v1h-3zM32 768h4v1h-4zM334 394h2v2h-2zM557 245h2v1h-2zM235 748h1v1h-1zM450 483h1v1h-1zM735 738h3v2h-3zM484 361h3v1h-3zM685 591h3v2h-3zM736 63h1v2h-1zM154 753h3v2h-3zM608 422h2v3h-2zM432 616h3v2h-3zM22 598h3v3h-3zM794 258h3v1h-3zM809 225h4v1h-4zM200 471h4v1h-4zM123 113h3v3h-3zM652 455h3v1h-3zM362 274h3v1h-3zM793 650h2v2h-2zM697 323h2v1h-2zM414 341h2v2h-2zM432 45h2v2h-2zM18 571h3v1h-3zM471 186h1v2h-1zM276 354h3v3h-3zM329 766h2v2h-2zM396 91h4v2h-4zM241 548h1v1h-1zM177 356h2v2h-2zM383 564h3v2h-3zM565 596h3v1h-3zM678 554h4v3h-4zM73 310h1v1h-1zM465 316h3v1h-3zM797 290h2v2h-2zM329 105h2v1h-2zM165 120h2v2h-2zM60 759h2v3h-2zM28 442h3v3h-3zM96 660h2v2h-2zM568 560h1v3h-1zM315 386h3v1h-3zM177 501h1v3h-1zM522 597h2v3h-2zM243 614h4v2h-4zM395 538h2v2h-2zM450 541h3v2h-3zM655 722h3v2h-3zM762 664h4v3h-4zM41 778h3v2h-3zM802 358h3v1h-3zM600 235h3v1h-3zM704 482h2v2h-2zM415 694h3v2h-3zM410 246h2v1h-2zM116 196h3v3h-3zM268 700h1v3h-1zM420 469h2v2h-2zM475 515h3v2h-3zM460 138h1v2h-1zM715 570h3v2h-3zM44 304h3v3h-3zM11 153h3v3h-3zM397 110h3v3h-3zM536 654h3v2h-3zM657 733h2v3h-2zM812 80h1v2h-1zM285 160h2v2h-2zM83 311h3v3h-3zM300 311h3v2h-3zM587 144h3v3h-3zM615 476h2v1h-2zM58 56h3v1h-3zM447 640h3v2h-3zM740 171h3v1h-3zM440 196h4v2h-4zM214 617h2v3h-2zM757 495h3v1h-3zM556 683h2v2h-2zM67 443h3v1h-3zM693 184h4v2h-4zM177 467h2v3h-2zM516 333h1v2h-1zM520 242h1v1h-1zM390 623h4v1h-4zM319 562h3v1h-3zM652 142h2v1h-2zM398 61h2v2h-2zM126 440h2v1h-2zM230 610h4v2h-4zM230 550h4v1h-4zM456 217h2v2h-2zM268 380h1v2h-1zM179 156h4v3h-4zM265 777h1v2h-1zM540 54h4v2h-4zM147 686h1v1h-1zM76 700h2v3h-2zM714 448h2v1h-2zM566 546h2v3h-2zM542 454h2v2h-2zM316 282h2v3h-2zM806 624h4v1h-4zM282 159h2v3h-2zM623 604h2v1h-2zM171 579h1v1h-1zM707 690h4v3h-4zM204 146h3v2h-3zM173 404h3v2h-3zM411 269h4v1h-4zM308 503h2v1h-2zM426 226h2v1h-2zM265 328h3v2h-3zM466 717h3v2h-3zM133 640h3v1h-3zM455 697h2v1h-2zM444 447h2v1h-2zM332 111h3v1h-3zM266 69h2v2h-2zM559 456h3v2h-3zM172 223h1v3h-1zM206 203h3v2h-3zM673 742h2v1h-2zM145 262h4v2h-4zM559 390h2v3h-2zM710 265h3v2h-3zM632 93h3v2h-3zM358 329h2v2h-2zM398 754h3v3h-3zM706 197h3v2h-3zM123 233h1v3h-1zM701 358h3v3h-3zM663 45h3v2h-3zM124 154h1v1h-1zM442 168h3v2h-3zM395 290h2v1h-2zM758 759h2v1h-2zM604 711h3v2h-3zM594 433h2v2h-2zM40 112h3v1h-3zM617 142h3v2h-3zM401 606h3v2h-3zM770 38h3v1h-3zM470 603h2v2h-2zM512 342h3v2h-3zM370 138h1v1h-1zM131 575h2v2h-2zM407 342h2v1h-2zM228 207h3v1h-3zM270 544h1v1h-1zM178 175h3v1h-3zM388 616h2v1h-2zM208 215h3v3h-3zM244 504h3v2h-3zM460 638h2v3h-2zM540 371h2v2h-2zM426 252h3v2h-3zM722 281h3v3h-3zM723 93h3v2h-3zM649 286h2v3h-2zM396 397h3v2h-3zM13 729h3v2h-3zM48 692h4v3h-4zM285 506h4v1h-4zM656 658h3v2h-3zM438 581h3v1h-3zM459 48h2v2h-2zM602 30h4v2h-4zM342 323h3v1h-3zM586 316h1v3h-1zM136 690h1v2h-1zM532 151h3v2h-3zM467 524h4v2h-4zM126 84h3v3h-3zM525 32h2v1h-2zM734 583h2v2h-2zM165 352h4v1h-4zM324 579h2v2h-2zM751 353h3v1h-3zM764 478h4v2h-4zM436 491h4v1h-4zM331 204h2v1h-2zM339 544h4v1h-4zM373 762h2v3h-2zM343 566h3v1h-3zM434 474h2v2h-2zM554 594h4v3h-4zM159 247h2v3h-2zM784 456h3v3h-3zM58 459h2v2h-2zM686 129h4v3h-4zM759 251h3v3h-3zM764 583h2v3h-2zM383 504h2v2h-2zM312 682h3v2h-3zM20 648h2v2h-2zM115 95h2v1h-2zM449 291h2v1h-2zM436 683h2v1h-2zM552 281h4v2h-4zM164 429h3v3h-3zM56 375h4v2h-4zM444 40h4v3h-4zM673 97h1v3h-1zM111 322h2v2h-2zM681 188h2v3h-2zM627 214h2v1h-2zM751 696h1v1h-1zM83 67h3v1h-3zM149 695h1v3h-1zM803 703h4v2h-4zM397 427h1v2h-1zM111 708h1v1h-1zM112 454h1v1h-1zM511 212h4v2h-4zM47 479h4v1h-4zM424 359h3v3h-3zM481 657h2v2h-2zM374 556h3v2h-3zM795 151h2v2h-2zM479 478h3v2h-3zM24 703h1v2h-1zM529 458h1v1h-1zM41 291h2v2h-2zM711 500h2v1h-2zM198 690h3v2h-3zM568 181h3v2h-3zM246 702h1v3h-1zM413 225h3v2h-3zM172 613h2v2h-2zM124 447h2v1h-2zM310 736h1v2h-1zM61 614h2v3h-2zM187 312h1v1h-1zM344 406h3v3h-3zM679 468h4v2h-4zM202 566h4v3h-4zM225 639h2v1h-2zM643 156h2v2h-2zM676 34h3v3h-3zM710 50h1v2h-1zM602 78h1v2h-1zM97 667h1v1h-1zM689 198h2v2h-2zM385 778h1v3h-1zM615 172h2v2h-2zM474 213h3v2h-3zM391 346h1v1h-1zM220 386h3v1h-3zM722 218h3v3h-3zM322 555h3v2h-3zM21 720h2v1h-2zM436 733h3v1h-3zM196 540h3v2h-3zM131 61h4v2h-4zM647 24h1v2h-1zM319 650h4v3h-4zM686 282h2v3h-2zM511 414h4v3h-4zM373 637h2v2h-2zM217 52h3v2h-3zM380 53h2v1h-2zM534 360h4v1h-4zM479 573h2v1h-2zM693 38h1v2h-1zM359 692h4v1h-4zM146 615h3v2h-3zM445 130h1v3h-1zM235 150h2v3h-2zM712 96h4v2h-4zM352 718h2v1h-2zM683 455h3v1h-3zM545 208h3v2h-3zM194 308h3v1h-3zM479 390h2v1h-2zM446 585h3v1h-3zM345 142h4v2h-4zM66 433h4v2h-4zM430 398h3v2h-3zM558 75h3v1h-3zM411 708h2v2h-2zM593 436h2v3h-2zM70 320h2v2h-2zM494 366h1v2h-1zM14 492h2v2h-2zM333 52h2v1h-2zM395 578h2v1h-2zM579 382h2v2h-2zM127 42h2v3h-2zM39 250h2v1h-2zM271 27h2v3h-2zM767 280h2v1h-2zM341 408h2v1h-2zM235 110h1v2h-1zM629 536h2v1h-2zM139 495h3v3h-3zM491 60h3v1h-3zM85 627h4v3h-4zM210 429h1v1h-1zM785 448h1v2h-1zM366 21h1v2h-1zM646 557h3v2h-3zM228 50h1v1h-1zM236 219h4v2h-4zM222 487h3v2h-3zM511 269h2v2h-2zM707 634h4v3h-4zM585 467h3v2h-3zM322 491h2v2h-2zM521 268h2v1h-2zM88 106h4v2h-4zM159 347h2v1h-2zM744 211h2v1h-2zM50 137h1v3h-1zM746 727h4v2h-4zM349 231h3v1h-3zM604 302h1v2h-1zM805 279h1v1h-1zM800 491h3v1h-3zM26 96h2v2h-2zM548 149h2v2h-2zM54 170h2v2h-2zM464 528h4v3h-4zM532 496h3v1h-3zM744 763h4v3h-4zM309 571h2v1h-2zM355 37h2v1h-2zM797 444h3v1h-3zM56 725h2v1h-2zM326 632h1v3h-1zM749 414h3v1h-3zM121 567h1v1h-1zM668 549h3v1h-3zM439 144h3v3h-3zM687 631h3v2h-3zM180 525h4v1h-4zM485 433h2v2h-2zM366 430h3v2h-3zM95 273h2v2h-2zM285 316h1v2h-1zM82 256h4v2h-4zM221 740h3v1h-3zM39 388h4v3h-4zM256 247h3v3h-3zM167 348h2v2h-2zM421 761h3v3h-3zM639 155h3v1h-3zM467 247h2v1h-2zM256 227h2v1h-2zM327 300h2v2h-2zM737 277h1v3h-1zM382 357h2v3h-2zM263 643h2v1h-2zM748 604h2v1h-2zM146 137h2v2h-2zM809 774h3v3h-3zM226 48h4v1h-4zM181 286h2v2h-2zM7 350h2v1h-2zM283 712h2v1h-2zM589 575h2v1h-2zM22 758h2v2h-2zM577 377h2v2h-2zM208 449h1v3h-1zM767 229h1v2h-1zM242 418h4v1h-4zM745 154h4v3h-4zM116 578h2v2h-2zM722 680h2v2h-2zM560 201h4v1h-4zM518 438h3v2h-3zM502 184h1v1h-1zM134 532h2v2h-2zM525 287h1v2h-1zM529 673h3v1h-3zM690 627h2v3h-2zM370 187h2v3h-2zM514 23h2v1h-2zM704 642h4v1h-4zM540 396h4v1h-4zM342 622h1v1h-1zM320 309h2v1h-2zM351 207h2v1h-2zM10 452h3v2h-3zM654 771h2v1h-2zM569 745h3v2h-3zM709 560h3v2h-3zM755 579h3v3h-3zM552 362h3v3h-3zM331 696h4v3h-4zM626 304h2v1h-2zM573 283h1v3h-1zM623 197h3v2h-3zM277 689h4v2h-4zM744 80h2v1h-2zM220 486h3v2h-3zM11 407h2v1h-2zM268 110h2v1h-2zM694 477h4v2h-4zM148 606h2v3h-2zM430 632h2v2h-2zM373 110h3v1h-3zM605 684h1v3h-1zM283 252h3v2h-3zM439 198h1v1h-1zM305 50h3v1h-3zM356 368h4v1h-4zM210 249h3v1h-3zM603 542h2v2h-2zM559 661h1v3h-1zM97 664h2v2h-2zM502 710h4v2h-4zM187 712h3v1h-3zM349 384h2v1h-2zM116 136h4v1h-4zM430 484h3v3h-3zM484 631h3v1h-3zM334 20h1v2h-1zM50 313h3v1h-3zM734 565h2v3h-2zM50 541h1v1h-1zM509 291h4v2h-4zM622 677h4v2h-4zM52 101h4v2h-4zM405 315h4v1h-4zM600 761h2v2h-2zM485 268h4v2h-4zM503 680h3v3h-3zM610 589h3v2h-3zM500 691h2v3h-2zM640 182h3v2h-3zM321 276h1v3h-1zM245 416h2v3h-2zM764 256h1v2h-1zM594 415h1v1h-1zM495 709h3v1h-3zM238 515h3v2h-3zM373 555h3v2h-3zM460 639h2v1h-2zM353 187h2v2h-2zM807 505h3v3h-3zM461 335h3v1h-3zM72 698h3v2h-3zM162 236h4v3h-4zM646 760h4v1h-4zM749 634h2v1h-2zM384 376h3v3h-3zM423 414h2v2h-2zM56 360h4v1h-4zM812 206h4v2h-4zM111 493h3v1h-3zM650 75h3v1h-3zM310 407h3v2h-3zM180 43h3v2h-3zM502 423h4v2h-4zM545 177h3v2h-3zM731 409h2v2h-2zM99 125h3v1h-3zM244 438h4v1h-4zM757 700h2v1h-2zM371 543h1v2h-1zM382 103h4v2h-4zM571 411h1v1h-1zM136 178h4v1h-4zM276 262h1v3h-1zM141 438h4v2h-4zM681 653h3v1h-3zM425 528h1v2h-1zM174 309h3v2h-3zM461 85h1v2h-1zM444 227h1v3h-1zM488 453h2v1h-2zM8 30h1v3h-1zM337 427h2v1h-2zM535 648h4v3h-4zM769 323h3v2h-3zM680 648h2v2h-2zM744 89h2v1h-2zM31 302h2v2h-2zM722 674h4v2h-4zM332 687h3v2h-3zM267 588h1v1h-1zM284 504h2v1h-2zM643 585h1v2h-1zM101 65h3v2h-3zM218 403h3v1h-3zM264 129h2v1h-2zM256 558h2v1h-2zM796 328h4v1h-4zM220 53h3v1h-3zM364 324h3v2h-3zM474 520h3v1h-3zM664 591h2v2h-2zM165 691h2v1h-2zM353 118h4v1h-4zM261 520h1v2h-1zM681 363h1v2h-1zM251 157h3v1h-3zM634 307h2v3h-2zM23 540h2v2h-2zM47 519h3v2h-3zM165 55h2v3h-2zM562 365h3v2h-3zM541 482h2v1h-2zM269 28h1v2h-1zM793 374h3v2h-3zM132 572h1v3h-1zM704 650h4v3h-4zM400 444h1v2h-1zM93 31h2v2h-2zM531 279h1v2h-1zM98 67h2v1h-2zM208 580h3v1h-3zM105 154h1v1h-1zM177 226h2v1h-2zM758 625h2v1h-2zM763 702h2v1h-2zM356 234h2v1h-2zM574 162h2v2h-2zM627 304h1v2h-1zM230 191h2v1h-2zM790 187h3v2h-3zM625 458h2v3h-2zM380 692h2v1h-2zM256 35h2v1h-2zM663 556h3v2h-3zM323 493h2v1h-2zM124 713h2v1h-2zM607 326h4v1h-4zM122 765h2v2h-2zM814 669h1v3h-1zM99 41h3v2h-3zM317 302h2v1h-2zM380 98h3v2h-3zM294 36h3v2h-3zM539 64h2v2h-2zM79 203h3v3h-3zM338 595h3v2h-3zM230 418h2v2h-2zM229 558h3v2h-3zM313 169h4v1h-4zM125 184h4v1h-4zM807 293h2v1h-2zM121 598h3v3h-3zM241 193h2v1h-2zM501 365h4v1h-4zM87 713h2v2h-2zM60 314h3v2h-3zM804 336h2v1h-2zM48 732h2v1h-2zM679 718h2v1h-2zM353 704h2v1h-2zM160 547h2v2h-2zM318 329h2v1h-2zM630 198h4v2h-4zM49 589h1v1h-1zM732 70h2v1h-2zM707 716h1v3h-1zM398 738h2v1h-2zM39 253h3v2h-3zM458 380h3v2h-3zM182 413h3v1h-3zM750 695h3v2h-3zM470 138h3v1h-3zM507 670h4v3h-4zM156 570h4v3h-4zM97 222h4v3h-4zM750 661h3v2h-3zM720 566h1v1h-1zM296 207h2v2h-2zM125 243h3v3h-3zM482 143h4v3h-4zM376 707h1v1h-1zM25 104h3v2h-3zM671 719h1v2h-1zM371 584h2v3h-2zM185 440h3v3h-3zM732 437h2v2h-2zM97 572h2v2h-2zM695 354h1v1h-1zM207 167h2v2h-2zM378 441h3v1h-3zM508 437h2v1h-2zM734 564h3v2h-3zM604 716h2v2h-2zM357 135h3v1h-3zM514 775h1v2h-1zM519 762h3v3h-3zM222 680h4v2h-4zM477 431h3v1h-3zM709 587h2v1h-2zM96 449h2v1h-2zM99 490h4v3h-4zM294 73h4v2h-4zM801 35h1v1h-1zM278 372h3v2h-3zM556 210h2v1h-2zM528 604h2v1h-2zM699 96h4v2h-4zM176 190h3v1h-3zM750 653h2v3h-2zM384 181h2v1h-2zM616 399h1v2h-1zM615 278h2v2h-2zM576 343h2v2h-2zM698 167h2v1h-2zM708 332h2v1h-2zM315 321h1v3h-1zM400 775h2v2h-2zM290 622h3v3h-3zM301 509h4v2h-4zM202 149h3v3h-3zM589 419h3v2h-3zM383 136h3v1h-3zM707 141h2v1h-2zM724 717h1v1h-1zM396 320h4v3h-4zM501 757h3v2h-3zM485 491h3v1h-3zM594 665h3v1h-3zM535 381h3v2h-3zM436 68h4v2h-4zM633 370h3v1h-3zM445 559h2v2h-2zM24 173h2v2h-2zM796 132h4v2h-4zM150 760h1v2h-1zM710 245h1v3h-1zM159 57h4v3h-4zM708 667h4v1h-4zM631 670h2v1h-2zM665 69h1v1h-1zM386 710h1v3h-1zM341 668h3v3h-3zM88 658h2v1h-2zM566 744h4v3h-4zM736 659h3v1h-3zM574 165h1v1h-1zM197 113h2v2h-2zM386 642h2v2h-2zM743 260h1v2h-1zM648 408h1v1h-1zM604 523h3v2h-3zM667 628h1v2h-1zM501 46h2v3h-2zM635 119h3v2h-3zM296 250h3v3h-3zM36 708h1v3h-1zM233 441h2v3h-2zM454 355h2v1h-2zM346 347h3v1h-3zM625 338h2v3h-2zM37 299h3v2h-3zM620 166h3v2h-3zM354 345h3v1h-3zM770 733h2v1h-2zM592 610h2v2h-2zM749 48h1v2h-1zM164 367h3v3h-3zM104 429h1v1h-1zM167 192h1v1h-1zM91 489h2v2h-2zM455 501h2v1h-2zM396 334h1v1h-1zM59 507h4v2h-4zM92 730h3v3h-3zM299 215h1v3h-1zM698 503h4v1h-4zM279 197h3v2h-3zM26 644h1v2h-1zM556 699h4v2h-4zM790 55h2v1h-2zM351 71h2v3h-2zM273 106h2v2h-2zM408 704h1v2h-1zM588 43h3v2h-3zM282 264h4v2h-4zM139 618h4v2h-4zM398 312h4v1h-4zM252 400h1v3h-1zM318 402h3v1h-3zM337 754h4v1h-4zM592 742h2v2h-2zM364 574h3v2h-3zM494 273h2v1h-2zM460 432h2v2h-2zM122 496h2v1h-2zM581 677h3v1h-3zM26 724h2v3h-2zM556 273h2v2h-2zM561 642h1v2h-1zM19 91h2v3h-2zM195 394h3v3h-3zM55 281h4v1h-4zM202 306h2v1h-2zM807 415h3v2h-3zM762 21h2v1h-2zM538 428h2v2h-2zM699 767h2v3h-2zM514 52h4v3h-4zM486 186h2v2h-2zM6 369h3v1h-3zM675 744h2v3h-2zM188 245h2v3h-2zM606 451h4v2h-4zM590 713h2v2h-2zM802 665h1v2h-1zM497 311h2v2h-2zM494 229h4v1h-4zM716 493h4v2h-4zM195 594h3v1h-3zM419 577h1v1h-1zM256 371h3v2h-3zM174 185h3v1h-3zM79 358h3v2h-3zM434 349h3v1h-3zM604 689h2v1h-2zM346 231h2v1h-2zM466 19h3v1h-3zM287 616h1v3h-1zM668 708h3v1h-3zM376 697h2v1h-2zM54 80h2v1h-2zM31 95h2v1h-2zM705 735h2v1h-2zM774 238h3v1h-3zM568 458h2v1h-2zM476 163h3v2h-3zM325 585h2v3h-2zM758 106h3v3h-3zM93 659h3v2h-3zM812 53h4v1h-4zM803 536h3v2h-3zM479 368h3v1h-3zM503 491h4v3h-4zM140 717h1v2h-1zM763 373h3v2h-3zM675 411h3v1h-3zM39 558h3v2h-3zM118 455h2v3h-2zM755 205h3v2h-3zM194 525h1v1h-1zM17 236h4v3h-4zM541 393h1v2h-1zM390 141h2v2h-2zM643 142h3v1h-3zM796 496h2v2h-2zM667 267h4v1h-4zM308 557h2v2h-2zM445 125h1v1h-1zM743 208h2v1h-2zM291 277h2v2h-2zM492 750h1v3h-1zM240 424h2v2h-2zM328 79h3v1h-3zM120 31h2v2h-2zM270 99h2v2h-2zM56 764h4v1h-4zM477 757h3v2h-3zM52 429h2v2h-2zM266 601h2v3h-2zM675 476h2v1h-2zM239 641h3v2h-3zM540 237h3v2h-3zM152 320h4v1h-4zM770 106h3v3h-3zM396 255h3v3h-3zM114 532h3v1h-3zM803 658h1v2h-1zM424 542h3v2h-3zM738 575h3v3h-3zM207 304h2v2h-2zM441 189h3v1h-3zM127 27h3v3h-3zM332 561h3v2h-3zM612 160h2v1h-2zM366 766h3v3h-3zM526 124h2v1h-2zM139 429h1v3h-1zM269 214h2v2h-2zM18 34h3v2h-3zM144 200h3v3h-3zM627 138h3v2h-3zM603 399h2v3h-2zM320 86h1v2h-1zM257 746h1v1h-1zM108 645h4v2h-4zM519 168h3v1h-3zM352 733h3v2h-3zM547 563h2v1h-2zM22 632h3v2h-3zM385 294h3v1h-3zM60 621h1v1h-1zM8 284h4v1h-4zM178 73h1v3h-1zM525 747h3v1h-3zM179 386h3v1h-3zM508 640h1v1h-1zM673 247h1v2h-1zM429 154h2v1h-2zM656 590h2v1h-2zM667 125h1v1h-1zM790 511h3v2h-3zM665 498h3v1h-3zM232 298h2v1h-2zM499 217h2v1h-2zM734 498h4v3h-4zM334 274h4v1h-4zM425 601h3v1h-3zM769 308h4v3h-4zM523 252h1v1h-1zM478 609h3v2h-3zM796 626h4v1h-4zM599 605h4v2h-4zM547 234h4v3h-4zM551 338h4v1h-4zM278 26h2v1h-2zM582 198h3v1h-3zM94 344h2v1h-2zM18 551h2v1h-2zM754 386h4v3h-4zM152 102h3v2h-3zM140 86h1v2h-1zM344 330h4v1h-4zM624 292h1v1h-1zM18 459h2v2h-2zM602 435h3v3h-3zM524 367h4v2h-4zM713 519h4v1h-4zM653 341h2v3h-2zM711 459h2v3h-2zM549 128h3v2h-3zM790 227h4v3h-4zM51 217h2v1h-2zM679 90h1v2h-1zM316 483h2v2h-2zM395 64h1v3h-1zM48 276h2v2h-2zM438 632h2v3h-2zM161 747h2v1h-2zM385 621h4v2h-4zM547 410h3v1h-3zM347 646h4v3h-4zM399 706h1v3h-1zM719 41h4v2h-4zM759 546h3v1h-3zM333 116h3v1h-3zM313 752h3v3h-3zM677 693h2v3h-2zM231 264h1v2h-1zM443 770h4v1h-4zM532 234h3v2h-3zM359 304h2v3h-2zM479 513h2v2h-2zM436 242h1v3h-1zM484 192h1v2h-1zM90 436h3v1h-3zM291 163h4v2h-4zM253 761h2v1h-2zM330 261h3v2h-3zM519 508h2v2h-2zM491 649h3v1h-3zM246 286h2v3h-2zM92 568h2v3h-2zM380 754h3v1h-3zM423 654h4v2h-4zM564 256h3v1h-3zM690 537h3v1h-3zM647 20h4v2h-4zM440 446h2v1h-2zM706 298h2v1h-2zM6 282h2v1h-2zM563 152h3v2h-3zM690 128h4v1h-4zM349 265h4v3h-4zM744 620h3v2h-3zM508 350h1v1h-1zM447 674h3v3h-3zM268 741h3v1h-3zM540 717h2v2h-2zM540 642h2v3h-2zM645 267h1v1h-1zM18 691h3v2h-3zM411 229h3v3h-3zM794 274h3v1h-3zM589 772h4v1h-4zM382 672h3v2h-3zM598 33h4v3h-4zM328 618h3v1h-3zM251 415h2v1h-2zM759 131h4v1h-4zM677 744h4v1h-4zM505 751h2v1h-2zM54 776h2v3h-2zM451 299h2v3h-2zM376 464h2v2h-2zM262 703h3v2h-3zM448 700h2v1h-2zM431 670h2v1h-2zM274 262h4v3h-4zM144 483h2v1h-2zM563 563h4v2h-4zM711 369h3v1h-3zM463 173h3v2h-3zM800 40h3v2h-3zM307 27h3v2h-3zM150 619h3v1h-3zM306 35h2v1h-2zM514 745h2v2h-2zM468 201h3v3h-3zM501 36h1v1h-1zM209 33h4v2h-4zM72 110h3v2h-3zM786 754h2v3h-2zM162 46h4v1h-4zM776 569h3v2h-3zM169 305h2v1h-2zM597 638h2v2h-2zM497 283h2v2h-2zM249 740h2v1h-2zM218 280h1v1h-1zM437 175h1v2h-1zM226 301h3v1h-3zM66 618h2v3h-2zM578 576h4v1h-4zM219 711h2v3h-2zM691 282h3v3h-3zM612 731h3v2h-3zM148 263h4v2h-4zM163 506h4v1h-4zM810 694h1v2h-1zM738 700h1v1h-1zM619 703h2v3h-2zM95 527h4v1h-4zM542 19h3v3h-3zM160 732h2v2h-2zM271 209h1v3h-1zM507 394h2v3h-2zM160 327h2v3h-2zM691 235h1v1h-1zM787 413h1v1h-1zM770 67h1v1h-1zM681 626h3v2h-3zM49 389h3v1h-3zM561 681h2v2h-2zM427 313h3v2h-3zM177 80h1v2h-1zM163 545h3v2h-3zM283 537h3v1h-3zM159 755h1v1h-1zM357 523h4v2h-4zM382 529h4v1h-4zM341 384h1v1h-1zM142 427h1v3h-1zM59 41h2v1h-2zM582 482h1v3h-1zM489 487h4v1h-4zM383 595h2v1h-2zM369 688h2v2h-2zM659 582h4v1h-4zM796 277h4v1h-4zM347 105h2v2h-2zM458 40h2v1h-2zM233 208h4v3h-4zM771 411h4v1h-4zM45 353h2v1h-2zM635 25h1v1h-1zM489 292h3v3h-3zM517 617h3v3h-3zM516 84h4v3h-4zM805 210h3v3h-3zM225 278h4v1h-4zM300 226h2v2h-2zM50 325h2v1h-2zM226 133h2v2h-2zM360 20h2v2h-2zM431 703h1v2h-1zM725 608h3v3h-3zM243 294h3v1h-3zM793 549h3v1h-3zM729 638h3v1h-3zM190 586h3v2h-3zM713 674h4v2h-4zM445 103h2v2h-2zM52 635h3v1h-3zM456 617h3v3h-3zM432 486h3v2h-3zM150 433h3v3h-3zM387 314h2v1h-2zM518 648h2v1h-2zM526 682h1v1h-1zM244 367h4v2h-4zM163 195h2v1h-2zM521 124h1v2h-1zM619 719h4v1h-4zM764 364h3v1h-3zM446 99h2v1h-2zM745 534h3v1h-3zM655 430h1v3h-1zM738 180h3v2h-3zM592 500h2v1h-2zM692 37h3v1h-3zM455 699h2v2h-2zM133 28h3v2h-3zM758 729h4v2h-4zM263 166h3v1h-3zM139 502h4v2h-4zM564 283h3v1h-3zM576 348h3v2h-3zM611 749h3v3h-3zM708 315h3v3h-3zM208 761h3v1h-3zM663 33h2v2h-2zM702 751h1v1h-1zM115 319h2v2h-2zM465 220h1v2h-1zM189 715h4v2h-4zM632 640h2v3h-2zM393 673h2v1h-2zM676 33h2v2h-2zM650 385h3v3h-3zM543 207h4v3h-4zM193 546h1v3h-1zM211 363h3v2h-3zM203 184h1v2h-1zM613 65h3v1h-3zM272 657h3v1h-3zM462 220h3v2h-3zM170 588h3v3h-3zM259 526h3v1h-3zM274 97h2v1h-2zM94 550h3v1h-3zM452 271h1v3h-1zM672 678h2v2h-2zM356 200h1v1h-1zM297 185h3v2h-3zM623 410h2v1h-2zM661 158h3v2h-3zM477 257h1v2h-1zM350 64h2v2h-2zM785 504h2v1h-2zM730 559h3v1h-3zM479 542h3v1h-3zM780 551h4v2h-4zM360 467h4v2h-4zM261 127h3v1h-3zM281 742h2v1h-2zM22 240h3v1h-3zM375 319h3v1h-3zM555 129h2v1h-2zM446 611h1v2h-1zM311 57h1v3h-1zM593 333h3v1h-3zM3 747h1v1h-1zM209 555h1v3h-1zM600 570h2v3h-2zM543 74h3v2h-3zM81 25h3v3h-3zM138 44h2v2h-2zM50 315h3v3h-3zM767 203h4v2h-4zM203 446h2v1h-2zM220 703h2v2h-2zM123 714h3v2h-3zM535 437h1v1h-1zM512 750h3v2h-3zM79 64h1v1h-1zM507 502h2v1h-2zM181 234h2v3h-2zM58 422h1v2h-1zM787 67h4v1h-4zM428 468h2v3h-2zM277 129h3v2h-3zM632 281h1v1h-1zM116 149h4v2h-4zM337 285h4v1h-4zM273 31h1v2h-1zM676 622h2v2h-2zM5 756h2v1h-2zM120 377h3v1h-3zM674 637h3v2h-3zM660 686h4v1h-4zM29 160h1v3h-1zM447 256h3v3h-3zM539 718h2v1h-2zM500 273h3v2h-3zM420 180h1v2h-1zM758 683h4v2h-4zM126 64h2v2h-2zM627 253h4v2h-4zM134 410h2v3h-2zM537 579h2v1h-2zM119 380h2v2h-2zM67 164h2v1h-2zM153 153h4v2h-4zM218 458h2v3h-2zM744 184h1v1h-1zM419 620h2v2h-2zM469 633h3v1h-3zM563 640h4v2h-4zM546 472h4v3h-4zM800 594h3v1h-3zM616 764h3v1h-3zM429 286h4v1h-4zM526 393h2v2h-2zM551 183h2v3h-2zM675 389h4v3h-4zM451 214h4v2h-4zM113 145h2v2h-2zM807 354h2v1h-2zM8 341h1v1h-1zM184 684h1v1h-1zM166 699h4v2h-4zM281 529h4v1h-4zM735 649h3v1h-3zM69 558h3v3h-3zM500 682h2v1h-2zM21 200h3v1h-3zM531 692h3v2h-3zM61 697h4v2h-4zM412 432h2v1h-2zM249 256h3v1h-3zM77 317h3v1h-3zM657 743h2v2h-2zM259 511h3v2h-3zM161 111h2v2h-2zM803 547h3v3h-3zM546 568h1v1h-1zM313 676h3v3h-3zM409 100h2v1h-2zM608 354h1v2h-1zM604 420h2v1h-2zM630 549h2v1h-2zM198 292h2v2h-2zM769 340h1v1h-1zM235 239h1v1h-1zM633 271h2v3h-2zM88 88h4v2h-4zM663 699h2v1h-2zM804 499h2v2h-2zM754 623h2v1h-2zM510 375h3v1h-3zM699 116h4v1h-4zM74 598h2v3h-2zM65 277h4v2h-4zM212 423h1v2h-1zM591 633h1v2h-1zM658 694h3v3h-3zM584 455h3v1h-3zM459 644h4v1h-4zM649 551h3v1h-3zM31 127h1v2h-1zM112 205h1v2h-1zM501 716h2v2h-2zM394 686h2v3h-2zM105 43h2v2h-2zM780 448h2v3h-2zM686 567h4v2h-4zM193 500h2v1h-2zM804 185h1v1h-1zM527 533h2v3h-2zM483 754h3v3h-3zM562 651h3v1h-3zM780 258h4v1h-4zM404 635h3v3h-3zM646 62h1v1h-1zM375 147h2v1h-2zM662 514h2v2h-2zM330 605h2v1h-2zM191 517h2v1h-2zM115 773h3v1h-3zM129 544h4v2h-4zM633 392h3v2h-3zM719 85h3v2h-3zM333 278h3v1h-3zM6 475h3v2h-3zM52 471h3v1h-3zM392 89h1v2h-1zM679 97h4v2h-4zM774 461h2v2h-2zM266 736h3v2h-3zM725 527h4v2h-4zM404 651h2v2h-2zM342 336h3v3h-3zM278 295h2v1h-2zM142 62h1v2h-1zM588 172h2v1h-2zM793 613h4v2h-4zM535 96h3v3h-3zM631 168h4v2h-4zM551 323h4v3h-4zM665 371h1v1h-1zM209 254h3v1h-3zM108 627h1v2h-1zM81 240h3v3h-3zM662 268h4v1h-4zM592 729h4v3h-4zM352 384h2v1h-2zM477 402h2v1h-2zM347 625h3v2h-3zM482 61h2v1h-2zM481 399h3v2h-3zM163 243h2v1h-2zM790 777h2v2h-2zM527 366h1v1h-1zM500 103h3v3h-3zM705 402h2v2h-2zM681 265h3v3h-3zM452 722h3v1h-3zM184 314h3v1h-3zM751 738h2v2h-2zM726 659h3v1h-3zM521 727h1v1h-1zM315 411h3v3h-3zM554 419h1v2h-1zM624 49h2v2h-2zM282 760h2v2h-2zM147 589h4v2h-4zM688 343h2v2h-2zM799 292h3v1h-3zM403 407h3v2h-3zM814 114h1v2h-1zM349 655h1v2h-1zM721 302h4v3h-4zM493 221h4v3h-4zM115 389h4v2h-4zM560 357h3v3h-3zM562 497h3v2h-3zM347 340h3v1h-3zM331 673h2v2h-2zM662 629h2v2h-2zM380 130h4v1h-4zM332 233h2v2h-2zM241 581h1v1h-1zM528 644h4v1h-4zM499 163h1v3h-1zM62 605h3v2h-3zM363 370h3v2h-3zM490 393h3v1h-3zM702 575h4v1h-4zM465 29h2v2h-2zM303 47h3v2h-3zM322 563h4v2h-4zM365 158h3v2h-3zM362 773h2v1h-2zM785 704h4v1h-4zM370 407h2v1h-2zM90 96h2v2h-2zM721 524h1v1h-1zM274 322h4v1h-4zM188 756h3v1h-3zM499 465h4v2h-4zM313 69h4v1h-4zM745 439h3v1h-3zM70 562h1v2h-1zM368 159h2v3h-2zM153 369h3v1h-3zM445 96h3v1h-3zM696 36h1v3h-1zM408 374h3v1h-3zM385 105h2v1h-2zM365 657h4v2h-4zM15 268h3v1h-3zM306 149h3v2h-3zM539 291h3v3h-3zM673 478h1v2h-1zM245 364h4v1h-4zM102 454h4v2h-4zM49 380h3v3h-3zM68 164h1v1h-1zM338 202h3v2h-3zM796 321h2v1h-2zM270 704h4v2h-4zM119 635h3v1h-3zM473 728h3v2h-3zM739 175h4v2h-4zM83 508h3v1h-3zM607 719h3v2h-3zM405 269h1v3h-1zM204 652h1v3h-1zM152 575h2v3h-2zM740 512h3v3h-3zM235 708h1v2h-1zM210 145h3v1h-3zM661 384h4v1h-4zM187 23h3v3h-3zM649 529h3v3h-3zM691 220h1v3h-1zM607 657h1v1h-1zM564 669h2v3h-2zM351 282h3v2h-3zM470 434h1v2h-1zM436 253h4v1h-4zM26 350h3v3h-3zM571 388h3v1h-3zM191 306h3v2h-3zM771 192h3v2h-3zM238 462h1v1h-1zM466 121h2v3h-2zM230 95h2v1h-2zM591 29h3v3h-3zM216 758h2v3h-2zM121 739h3v2h-3zM659 384h2v3h-2zM4 753h1v1h-1zM194 706h3v1h-3zM14 572h2v3h-2zM788 411h3v3h-3zM4 36h3v1h-3zM578 147h3v2h-3zM78 359h4v3h-4zM569 704h4v2h-4zM24 721h1v3h-1zM323 127h2v1h-2zM704 134h1v3h-1zM797 666h2v1h-2zM59 775h3v2h-3zM525 205h1v1h-1zM402 644h2v3h-2zM84 43h1v2h-1zM178 603h2v3h-2zM265 726h3v3h-3zM251 237h4v1h-4zM383 314h3v1h-3zM401 35h2v3h-2zM712 433h1v2h-1zM93 50h3v2h-3zM64 273h3v1h-3zM67 762h2v2h-2zM273 583h4v1h-4zM587 503h4v2h-4zM225 58h2v1h-2zM193 592h3v1h-3zM699 421h2v2h-2zM429 539h2v1h-2zM400 763h4v2h-4zM546 598h2v1h-2zM148 434h2v1h-2zM297 354h3v1h-3zM188 349h4v3h-4zM288 218h1v3h-1zM127 774h3v1h-3zM205 103h2v3h-2zM451 319h1v2h-1zM463 289h1v1h-1zM128 312h2v1h-2zM110 283h2v1h-2zM145 622h2v1h-2zM35 584h4v1h-4zM701 507h2v2h-2zM562 747h4v1h-4zM275 121h2v2h-2zM788 750h2v1h-2zM480 485h1v1h-1zM238 723h2v2h-2zM598 464h2v3h-2zM479 183h2v3h-2zM368 85h3v3h-3zM697 275h2v2h-2zM306 521h2v1h-2zM386 157h3v2h-3zM579 411h2v1h-2zM162 106h2v1h-2zM20 223h2v1h-2zM788 384h3v2h-3zM435 496h2v2h-2zM508 519h2v2h-2zM606 581h3v2h-3zM395 652h3v1h-3zM676 126h2v3h-2zM87 379h2v2h-2zM565 281h2v1h-2zM355 520h3v2h-3zM334 246h2v1h-2zM421 59h4v1h-4zM764 656h2v2h-2zM729 120h2v1h-2zM531 636h3v1h-3zM568 652h2v2h-2zM655 590h1v2h-1zM453 160h2v2h-2zM744 347h3v2h-3zM620 416h2v3h-2zM196 300h2v1h-2zM402 528h3v1h-3zM585 229h3v1h-3zM180 525h2v3h-2zM444 705h4v2h-4zM347 605h3v1h-3zM563 63h4v2h-4zM290 454h2v1h-2zM727 316h4v2h-4zM151 27h4v3h-4zM292 497h2v3h-2zM642 504h2v3h-2zM549 645h2v1h-2zM533 163h3v3h-3zM398 763h1v2h-1zM363 193h4v2h-4zM812 596h3v1h-3zM260 40h4v1h-4zM228 110h2v1h-2zM423 130h2v2h-2zM367 405h3v2h-3zM457 555h1v3h-1zM647 450h3v3h-3zM708 610h3v1h-3zM579 474h3v2h-3zM327 237h4v1h-4zM41 385h4v2h-4zM532 84h3v1h-3zM589 585h3v2h-3zM528 176h2v1h-2zM364 588h3v3h-3zM710 775h2v2h-2zM394 319h4v3h-4zM48 31h1v3h-1zM813 217h4v1h-4zM650 493h3v2h-3zM661 47h2v2h-2zM416 287h3v3h-3zM34 482h4v2h-4zM249 173h3v3h-3zM541 132h2v2h-2zM739 395h2v2h-2zM676 637h3v1h-3zM144 195h4v1h-4zM34 706h2v1h-2zM509 724h2v1h-2zM499 565h1v2h-1zM631 420h2v1h-2zM228 597h2v1h-2zM806 674h2v1h-2zM619 503h3v1h-3zM605 699h3v2h-3zM347 143h1v2h-1zM82 448h3v1h-3zM680 204h2v1h-2zM196 703h4v2h-4zM55 668h3v3h-3zM551 258h4v2h-4zM63 638h3v1h-3zM658 322h4v1h-4zM15 114h4v1h-4zM624 214h2v2h-2zM416 292h4v1h-4zM784 379h3v2h-3zM407 413h3v1h-3zM757 736h2v1h-2zM416 663h2v1h-2zM708 38h3v1h-3zM171 299h2v2h-2zM163 379h1v2h-1zM789 153h3v1h-3zM88 240h2v2h-2zM694 656h4v2h-4zM448 654h3v3h-3zM188 183h1v1h-1zM713 38h2v3h-2zM638 570h1v2h-1zM204 188h2v2h-2zM623 285h1v1h-1zM510 638h4v1h-4zM215 714h4v3h-4zM254 195h3v1h-3zM537 311h2v2h-2zM725 720h2v2h-2zM412 321h3v1h-3zM463 36h4v2h-4zM107 264h2v3h-2zM677 758h4v1h-4zM345 102h3v3h-3zM740 102h1v1h-1zM759 616h3v1h-3zM208 381h2v1h-2zM761 737h2v1h-2zM211 144h1v2h-1zM191 628h1v1h-1zM251 528h2v2h-2zM371 574h1v1h-1zM23 73h1v2h-1zM475 733h3v1h-3zM605 529h3v3h-3zM368 760h4v3h-4zM521 512h2v3h-2zM655 342h2v2h-2zM96 97h1v2h-1zM229 518h4v1h-4zM506 131h1v1h-1zM246 85h2v2h-2zM406 589h1v2h-1zM305 445h3v2h-3zM326 392h4v2h-4zM53 173h4v2h-4zM23 139h3v1h-3zM32 542h3v2h-3zM786 465h2v2h-2zM65 655h4v1h-4zM750 675h1v3h-1zM303 643h1v3h-1zM606 775h1v2h-1zM511 465h3v2h-3zM262 689h2v3h-2zM49 121h2v3h-2zM515 578h3v2h-3zM331 344h2v1h-2zM476 406h2v1h-2zM116 307h2v3h-2zM316 222h2v1h-2zM335 661h4v2h-4zM432 610h4v2h-4zM211 245h2v2h-2zM481 38h3v1h-3zM728 239h3v1h-3zM552 313h2v2h-2zM415 137h3v2h-3zM468 597h2v3h-2zM87 284h2v1h-2zM46 512h2v2h-2zM361 385h4v2h-4zM122 33h4v1h-4zM763 510h2v1h-2zM677 691h3v2h-3zM397 758h1v2h-1zM77 29h3v2h-3zM375 597h2v2h-2zM377 65h2v1h-2zM588 555h3v3h-3zM483 335h2v2h-2zM526 644h3v3h-3zM753 412h3v3h-3zM811 434h1v1h-1zM411 630h4v2h-4zM474 548h3v2h-3zM493 301h3v3h-3zM531 81h3v2h-3zM167 631h3v1h-3zM706 296h3v2h-3zM379 180h1v1h-1zM222 751h2v1h-2zM448 581h3v3h-3zM445 645h2v2h-2zM543 596h2v1h-2zM560 550h1v2h-1zM476 30h2v3h-2zM509 590h2v1h-2zM684 737h3v1h-3zM117 177h4v2h-4zM588 276h1v3h-1zM113 167h3v2h-3zM389 538h3v1h-3zM18 696h3v1h-3zM765 73h3v1h-3zM109 402h1v3h-1zM494 310h3v1h-3zM211 134h2v3h-2zM122 678h1v3h-1zM34 562h4v1h-4zM465 426h3v2h-3zM783 516h4v2h-4zM123 65h4v3h-4zM470 579h2v1h-2zM528 167h1v2h-1zM465 547h3v2h-3zM246 710h3v1h-3zM44 587h4v1h-4zM295 143h2v1h-2zM578 387h2v3h-2zM138 179h2v1h-2zM527 227h4v3h-4zM682 768h3v2h-3zM593 538h3v3h-3zM295 339h4v2h-4zM773 28h1v2h-1zM420 462h3v1h-3zM755 27h3v1h-3zM416 164h3v1h-3zM206 487h1v3h-1zM228 148h3v2h-3zM510 304h1v1h-1zM123 155h1v2h-1zM525 434h1v1h-1zM293 714h1v3h-1zM793 713h2v2h-2zM130 667h1v2h-1zM548 79h4v1h-4zM638 437h3v3h-3zM501 140h2v1h-2zM547 387h1v1h-1zM641 245h3v3h-3zM236 469h2v3h-2zM636 69h3v2h-3zM307 756h2v3h-2zM168 449h2v1h-2zM604 430h3v2h-3zM473 536h3v3h-3zM319 244h4v1h-4zM634 201h3v1h-3zM750 126h3v3h-3zM262 300h2v2h-2zM77 205h3v1h-3zM791 411h3v2h-3zM536 433h3v2h-3zM69 636h3v2h-3zM91 430h2v2h-2zM168 352h2v2h-2zM559 47h4v1h-4zM362 164h3v2h-3zM234 157h2v1h-2zM47 77h2v2h-2zM14 613h4v1h-4zM192 760h3v2h-3zM436 105h3v2h-3zM532 380h1v2h-1zM298 398h3v1h-3zM702 402h3v1h-3zM796 25h1v1h-1zM123 636h1v1h-1zM773 399h3v2h-3zM214 187h2v1h-2zM708 263h4v2h-4zM498 135h2v2h-2zM403 590h3v2h-3zM428 383h2v3h-2zM799 369h3v2h-3zM541 388h3v1h-3zM599 273h3v3h-3zM619 721h3v1h-3zM622 740h3v2h-3zM58 335h3v1h-3zM554 420h2v1h-2zM644 264h4v2h-4zM382 608h3v1h-3zM733 326h3v1h-3zM416 438h2v1h-2zM710 168h2v2h-2zM736 57h2v1h-2zM288 756h4v1h-4zM736 246h2v1h-2zM709 681h2v3h-2zM229 486h1v1h-1zM157 687h2v3h-2zM766 539h3v2h-3zM128 701h2v1h-2zM367 371h3v1h-3zM79 720h2v2h-2zM521 741h3v2h-3zM24 747h2v3h-2zM202 455h3v3h-3zM11 271h3v3h-3zM432 760h3v2h-3zM211 297h4v1h-4zM547 606h4v1h-4zM574 549h3v3h-3zM388 424h1v1h-1zM35 357h4v1h-4zM337 203h1v1h-1zM464 633h3v1h-3zM337 700h2v2h-2zM218 750h3v2h-3zM493 123h2v1h-2zM63 563h1v1h-1zM310 631h3v2h-3zM531 610h2v1h-2zM226 156h3v1h-3zM727 696h3v1h-3zM535 572h2v2h-2zM146 714h2v1h-2zM652 24h2v1h-2zM528 739h3v3h-3zM734 518h4v2h-4zM183 349h3v2h-3zM314 215h3v1h-3zM417 64h2v1h-2zM215 744h2v2h-2zM717 254h4v3h-4zM535 420h3v1h-3zM408 381h2v2h-2zM160 249h2v3h-2zM527 520h1v2h-1zM635 237h3v1h-3zM265 623h3v3h-3zM292 406h3v1h-3zM474 328h2v2h-2zM216 354h4v2h-4zM154 160h3v1h-3zM234 582h4v2h-4zM178 509h2v1h-2zM766 257h4v1h-4zM336 162h1v2h-1zM273 296h3v2h-3zM661 704h3v2h-3zM701 70h2v3h-2zM37 632h2v3h-2zM259 438h2v2h-2zM807 584h4v3h-4zM526 195h1v2h-1zM321 203h3v1h-3zM594 45h2v1h-2zM222 548h2v1h-2zM582 714h1v2h-1zM286 143h1v2h-1zM302 569h3v1h-3zM198 272h2v2h-2zM248 207h3v2h-3zM105 611h3v1h-3zM495 359h2v2h-2zM502 312h4v2h-4zM769 418h2v1h-2zM269 736h2v1h-2zM229 285h1v1h-1zM221 607h2v2h-2zM501 329h2v1h-2zM436 218h3v1h-3zM780 177h3v2h-3zM398 370h2v1h-2zM248 63h2v3h-2zM39 706h3v3h-3zM416 113h3v1h-3zM574 86h3v3h-3zM699 248h1v1h-1zM127 708h2v1h-2zM627 484h3v2h-3zM342 133h1v3h-1zM187 216h3v1h-3zM97 611h3v1h-3zM108 420h1v1h-1zM481 281h3v1h-3zM96 234h4v1h-4zM287 508h4v2h-4zM288 32h3v3h-3zM413 449h4v2h-4zM200 598h3v2h-3zM580 303h3v2h-3zM725 338h3v1h-3zM526 416h2v2h-2zM22 88h2v2h-2zM774 632h3v2h-3zM383 154h4v1h-4zM804 206h1v1h-1zM144 658h3v1h-3zM752 293h1v1h-1zM115 271h2v3h-2zM181 140h4v2h-4zM231 194h3v1h-3zM38 489h3v2h-3zM696 715h2v1h-2zM485 328h1v3h-1zM182 324h3v2h-3zM481 75h1v2h-1zM693 360h2v1h-2zM268 360h2v1h-2zM751 437h1v2h-1zM694 320h3v2h-3zM151 178h4v1h-4zM391 280h2v3h-2zM752 610h1v2h-1zM379 608h3v2h-3zM392 57h4v2h-4zM640 579h3v2h-3zM72 288h3v1h-3zM510 445h4v1h-4zM218 148h3v3h-3zM684 330h3v2h-3zM40 323h4v2h-4zM638 695h3v3h-3zM374 45h3v3h-3zM301 352h3v1h-3zM244 522h4v2h-4zM487 761h4v2h-4zM173 443h1v2h-1zM326 110h2v2h-2zM559 460h3v2h-3zM259 354h1v1h-1zM571 139h4v2h-4zM189 281h2v2h-2zM603 291h4v1h-4zM688 746h1v1h-1zM705 356h1v1h-1zM98 401h2v1h-2zM348 274h2v1h-2zM696 307h2v3h-2zM577 740h2v1h-2zM336 32h2v2h-2zM585 258h2v2h-2zM3 407h3v3h-3zM401 430h3v1h-3zM430 556h2v3h-2zM395 368h4v2h-4zM567 370h3v1h-3zM50 607h4v2h-4zM371 95h1v2h-1zM413 275h3v3h-3zM148 588h3v2h-3zM468 283h4v1h-4zM83 579h2v1h-2zM658 464h4v2h-4zM336 297h2v1h-2zM426 180h3v3h-3zM813 766h1v1h-1zM437 422h2v1h-2zM579 285h2v2h-2zM363 591h4v2h-4zM677 571h2v2h-2zM359 170h3v1h-3zM9 71h2v2h-2zM197 284h3v2h-3zM306 647h2v1h-2zM63 196h2v3h-2zM587 734h2v1h-2zM734 302h3v1h-3zM476 305h1v1h-1zM379 471h3v2h-3zM752 718h3v1h-3zM642 729h2v1h-2zM133 598h2v2h-2zM632 395h4v1h-4zM199 349h1v2h-1zM448 444h2v1h-2zM610 443h2v2h-2zM438 559h1v1h-1zM467 720h2v2h-2zM264 492h3v1h-3zM41 438h3v2h-3zM515 315h4v3h-4zM702 360h3v1h-3zM183 517h2v1h-2zM149 610h3v1h-3zM172 148h2v3h-2zM577 95h1v2h-1zM22 737h3v3h-3zM414 702h2v2h-2zM644 724h3v3h-3zM527 616h2v2h-2zM325 532h2v2h-2zM632 193h4v1h-4zM618 205h2v2h-2zM600 395h1v2h-1zM364 43h3v1h-3zM46 516h1v2h-1zM205 530h1v2h-1zM247 521h3v2h-3zM257 549h2v1h-2zM686 338h4v2h-4zM802 543h2v2h-2zM248 775h1v3h-1zM531 684h2v1h-2zM590 292h1v2h-1zM187 777h3v3h-3zM123 379h4v3h-4zM743 536h4v2h-4zM66 179h2v2h-2zM425 400h2v2h-2zM78 647h3v2h-3zM209 741h3v1h-3zM276 516h2v2h-2zM6 441h2v2h-2zM33 368h2v2h-2zM16 700h2v2h-2zM157 406h2v2h-2zM604 306h4v2h-4zM233 22h1v2h-1zM465 743h3v3h-3zM98 595h2v3h-2zM160 440h3v2h-3zM264 742h4v2h-4zM388 517h3v1h-3zM394 635h3v1h-3zM126 551h2v1h-2zM599 463h2v3h-2zM65 357h2v3h-2zM579 634h1v1h-1zM177 268h3v3h-3zM715 93h2v1h-2zM208 593h4v3h-4zM578 468h3v2h-3zM725 475h2v2h-2zM618 141h3v1h-3zM591 690h1v2h-1zM425 145h2v1h-2zM72 34h3v1h-3zM527 748h2v1h-2zM122 237h2v1h-2zM565 430h3v3h-3zM70 418h2v3h-2zM221 691h1v2h-1zM185 239h2v2h-2zM744 721h2v2h-2zM433 31h4v1h-4zM720 667h2v3h-2zM168 458h4v1h-4zM562 272h2v1h-2zM703 767h3v1h-3zM758 761h2v2h-2zM564 296h2v1h-2zM304 648h3v1h-3zM274 508h2v2h-2zM603 475h2v2h-2zM183 32h2v1h-2zM608 510h2v2h-2zM331 130h3v3h-3zM163 50h3v1h-3zM675 736h3v1h-3zM781 702h2v1h-2zM536 755h4v1h-4zM605 753h3v2h-3zM620 736h3v2h-3zM96 66h2v1h-2zM573 116h3v1h-3zM722 430h2v2h-2zM522 595h3v2h-3zM539 652h3v1h-3zM366 697h3v2h-3zM504 88h2v3h-2zM674 771h3v2h-3zM813 615h4v2h-4zM198 353h2v1h-2zM78 40h3v2h-3zM734 504h1v1h-1zM735 26h3v3h-3zM163 328h1v3h-1zM167 543h4v1h-4zM198 295h3v3h-3zM769 41h2v2h-2zM353 245h2v2h-2zM523 184h2v2h-2zM248 204h4v2h-4zM675 286h2v2h-2zM576 191h1v2h-1zM42 653h3v2h-3zM118 316h2v2h-2zM32 559h3v3h-3zM514 351h3v2h-3zM288 182h3v1h-3zM574 360h3v2h-3zM474 114h3v1h-3zM145 90h1v1h-1zM372 329h3v2h-3zM399 754h4v1h-4zM317 621h3v1h-3zM270 279h3v2h-3zM71 311h3v2h-3zM620 505h3v2h-3zM436 700h4v3h-4zM397 543h1v1h-1zM271 475h3v1h-3zM316 72h3v3h-3zM137 116h1v1h-1zM259 415h3v2h-3zM233 575h2v2h-2zM351 575h3v2h-3zM265 151h4v1h-4zM761 234h3v1h-3zM259 388h1v3h-1zM419 557h2v1h-2zM227 353h3v2h-3zM511 520h2v2h-2zM608 105h2v2h-2zM192 573h2v1h-2zM535 392h3v1h-3zM149 765h1v1h-1zM368 669h3v1h-3zM391 363h1v1h-1zM773 290h4v3h-4zM811 221h3v2h-3zM725 350h3v2h-3zM740 741h3v2h-3zM485 594h2v2h-2zM177 107h2v1h-2zM203 731h3v1h-3zM174 28h3v1h-3zM696 111h2v1h-2zM292 588h3v2h-3zM562 509h1v2h-1zM323 437h2v3h-2zM595 572h3v2h-3zM216 668h2v1h-2zM577 32h1v2h-1zM367 609h3v1h-3zM376 669h3v2h-3zM576 191h4v2h-4zM580 431h4v2h-4zM633 140h3v1h-3zM788 472h4v1h-4zM400 404h1v2h-1zM683 504h4v2h-4zM31 435h1v1h-1zM261 191h4v1h-4zM554 601h3v1h-3zM656 696h2v2h-2zM647 707h2v1h-2zM284 466h2v2h-2zM700 275h2v2h-2zM483 53h2v1h-2zM771 262h2v3h-2zM737 383h4v3h-4zM587 595h3v3h-3zM165 741h3v2h-3zM198 218h3v2h-3zM91 390h3v1h-3zM757 536h4v3h-4zM624 154h3v3h-3zM628 182h2v1h-2zM734 241h3v3h-3zM812 19h3v3h-3zM224 194h2v3h-2zM282 108h3v2h-3zM96 489h3v2h-3zM459 557h2v3h-2zM225 544h3v2h-3zM700 733h3v1h-3zM132 712h3v1h-3zM680 28h2v2h-2zM226 431h2v1h-2zM759 699h1v1h-1zM551 327h4v1h-4zM469 695h1v2h-1zM320 82h4v2h-4zM300 103h4v1h-4zM373 264h2v2h-2zM494 732h3v2h-3zM785 663h2v1h-2zM234 82h2v2h-2zM274 689h2v1h-2zM41 44h1v1h-1zM545 226h2v2h-2zM272 575h2v2h-2zM126 728h3v2h-3zM792 519h2v2h-2zM592 515h1v1h-1zM638 722h4v1h-4zM680 631h3v1h-3zM532 552h1v1h-1zM201 212h4v2h-4zM446 362h4v2h-4zM497 496h1v2h-1zM24 533h3v1h-3zM794 204h3v2h-3zM527 402h2v1h-2zM296 235h2v2h-2zM315 480h2v1h-2zM505 89h2v1h-2zM492 473h3v2h-3zM583 621h3v1h-3zM400 52h3v2h-3zM188 407h3v2h-3zM563 612h3v2h-3zM787 204h4v3h-4zM712 120h1v1h-1zM499 504h3v2h-3zM562 229h2v1h-2zM208 55h1v1h-1zM418 556h3v1h-3zM354 685h3v2h-3zM387 416h2v1h-2zM797 179h2v1h-2zM756 473h2v3h-2zM676 351h3v1h-3zM492 381h1v2h-1zM643 681h4v3h-4zM561 164h2v2h-2zM280 578h2v1h-2zM168 655h3v1h-3zM707 276h2v2h-2zM48 660h3v2h-3zM255 733h3v2h-3zM441 535h2v1h-2zM367 163h4v1h-4zM110 510h3v1h-3zM785 62h2v2h-2zM148 309h3v2h-3zM362 499h4v2h-4zM365 293h4v3h-4zM26 276h4v1h-4zM221 217h2v2h-2zM161 621h2v2h-2zM325 555h2v2h-2zM704 703h1v3h-1zM503 673h3v2h-3zM119 675h1v2h-1zM522 326h2v3h-2zM624 50h1v1h-1zM443 191h2v3h-2zM707 201h4v3h-4zM207 647h3v2h-3zM156 534h2v2h-2zM447 543h3v1h-3zM641 86h1v1h-1zM216 612h1v2h-1zM569 481h4v2h-4zM238 89h3v1h-3zM679 311h2v3h-2zM492 641h2v1h-2zM402 595h1v1h-1zM408 225h1v1h-1zM207 472h1v3h-1zM315 159h2v2h-2zM4 20h3v3h-3zM49 758h3v3h-3zM715 525h2v3h-2zM506 257h3v2h-3zM773 757h3v3h-3zM347 691h1v2h-1zM130 470h3v2h-3zM85 89h1v2h-1zM251 214h2v3h-2zM16 309h2v2h-2zM271 198h2v1h-2zM698 451h1v1h-1zM65 352h1v3h-1zM267 148h2v2h-2zM24 171h1v1h-1zM53 71h4v1h-4zM777 567h2v1h-2zM215 179h3v1h-3zM670 374h1v1h-1zM8 138h3v1h-3zM468 215h2v3h-2zM675 258h2v1h-2zM447 231h3v3h-3zM195 660h3v2h-3zM77 743h3v2h-3zM446 502h2v2h-2zM455 491h1v2h-1zM169 131h3v1h-3zM623 549h3v1h-3zM601 375h4v2h-4zM516 176h2v2h-2zM331 84h2v3h-2zM234 472h2v1h-2zM377 378h2v2h-2zM456 128h2v2h-2zM8 516h3v1h-3zM174 752h2v2h-2zM477 122h2v1h-2zM81 681h2v1h-2zM709 146h3v2h-3zM662 218h1v1h-1zM73 352h2v1h-2zM730 39h2v1h-2zM718 417h2v1h-2zM65 426h3v1h-3zM63 688h4v2h-4zM804 356h3v1h-3zM655 150h2v1h-2zM262 699h3v3h-3zM357 91h3v2h-3zM65 507h3v2h-3zM398 306h4v2h-4zM409 292h2v1h-2zM140 366h4v2h-4zM732 461h1v1h-1zM271 495h4v2h-4zM274 563h1v1h-1zM420 264h1v1h-1zM555 257h3v1h-3zM313 710h3v1h-3zM225 517h4v1h-4zM136 360h1v2h-1zM645 493h2v1h-2zM425 350h3v2h-3zM149 636h3v2h-3zM309 572h3v3h-3zM741 443h4v1h-4zM30 748h4v1h-4zM574 415h2v2h-2zM178 287h3v3h-3zM162 627h3v2h-3zM776 768h4v1h-4zM637 692h2v2h-2zM288 47h2v2h-2zM15 461h3v2h-3zM238 746h2v1h-2zM521 177h2v3h-2zM636 114h4v2h-4zM415 312h3v1h-3zM195 531h2v2h-2zM394 767h1v1h-1zM284 560h1v3h-1zM644 694h2v2h-2zM100 705h3v2h-3zM355 247h1v2h-1zM16 262h1v2h-1zM330 90h2v3h-2zM793 76h3v2h-3zM681 673h3v2h-3zM376 622h3v1h-3zM679 741h2v2h-2zM437 442h2v3h-2zM745 739h4v2h-4zM42 35h2v1h-2zM152 638h2v2h-2zM274 371h2v2h-2zM446 200h2v2h-2zM497 686h1v1h-1zM197 622h1v1h-1zM226 657h4v2h-4zM265 517h2v2h-2zM308 588h1v1h-1zM625 69h1v1h-1zM522 391h3v3h-3zM640 341h3v2h-3zM370 285h3v2h-3zM102 656h2v3h-2zM523 280h3v1h-3zM518 286h3v2h-3zM225 604h2v2h-2zM387 725h4v3h-4zM746 593h3v3h-3zM62 684h1v2h-1zM565 642h3v2h-3zM111 353h1v1h-1zM459 109h2v3h-2zM392 525h2v1h-2zM722 440h2v1h-2zM67 204h4v2h-4zM660 416h2v1h-2zM276 622h1v3h-1zM470 194h2v1h-2zM279 351h1v3h-1zM295 32h4v1h-4zM655 67h3v2h-3zM31 673h4v1h-4zM69 147h3v2h-3zM171 492h1v2h-1zM10 473h1v3h-1zM8 677h1v1h-1zM419 326h2v3h-2zM756 356h2v2h-2zM334 579h3v2h-3zM214 684h1v2h-1zM28 676h4v2h-4zM689 375h2v1h-2zM394 768h2v1h-2zM488 129h4v3h-4zM547 243h2v2h-2zM54 234h2v1h-2zM51 713h2v1h-2zM480 519h2v2h-2zM305 494h3v2h-3zM180 227h1v2h-1zM780 298h3v1h-3zM766 477h3v1h-3zM554 711h3v3h-3zM325 257h4v1h-4zM633 153h3v2h-3zM96 53h3v1h-3zM594 118h1v2h-1zM400 63h2v2h-2zM11 545h2v3h-2zM571 376h4v3h-4zM542 349h3v2h-3zM443 400h3v1h-3zM496 565h4v3h-4zM590 293h2v1h-2zM198 577h3v1h-3zM37 208h4v2h-4zM177 143h3v2h-3zM575 658h1v2h-1zM436 283h3v2h-3zM142 654h1v1h-1zM205 504h2v1h-2zM272 34h3v2h-3zM340 117h3v2h-3zM313 115h2v2h-2zM649 516h3v3h-3zM432 640h2v1h-2zM596 186h2v3h-2zM225 647h2v2h-2zM318 186h4v2h-4zM11 314h2v1h-2zM168 591h3v2h-3zM510 43h3v1h-3zM515 161h4v2h-4zM231 113h3v2h-3zM259 662h3v2h-3zM750 61h1v3h-1zM795 737h2v3h-2zM335 750h2v2h-2zM765 690h3v3h-3zM379 452h4v1h-4zM365 141h2v1h-2zM382 449h3v1h-3zM199 405h4v1h-4zM397 455h2v2h-2zM268 108h4v2h-4zM655 339h3v2h-3zM202 255h3v2h-3zM263 695h3v2h-3zM705 255h4v2h-4zM349 771h3v1h-3zM236 626h1v2h-1z"/><path fill="#0a0a4c" d="M556 139h3v2h-3zM701 204h1v3h-1zM195 400h1v3h-1zM580 80h3v1h-3zM467 389h2v1h-2zM324 367h4v2h-4zM122 524h1v1h-1zM291 23h2v2h-2zM627 598h2v1h-2zM618 72h1v1h-1zM779 559h2v1h-2zM231 646h2v1h-2zM751 48h1v2h-1zM804 747h2v2h-2zM447 670h2v1h-2zM742 424h3v2h-3zM220 318h3v1h-3zM539 541h1v2h-1zM31 83h3v2h-3zM520 639h3v1h-3zM220 704h2v1h-2zM61 723h2v2h-2zM188 225h2v2h-2zM213 315h3v3h-3zM684 409h3v2h-3zM393 104h3v2h-3zM636 677h2v1h-2zM735 544h4v2h-4zM520 161h3v3h-3zM388 481h3v1h-3zM97 694h3v1h-3zM153 358h2v2h-2zM139 31h3v1h-3zM691 120h4v1h-4zM539 287h2v1h-2zM649 539h2v1h-2zM126 358h1v2h-1zM449 542h2v1h-2zM752 439h3v3h-3zM247 327h3v3h-3zM252 111h2v2h-2zM773 82h3v2h-3zM371 147h4v3h-4zM644 276h3v2h-3zM117 120h1v2h-1zM408 221h1v2h-1zM340 214h2v3h-2zM319 461h1v1h-1zM759 329h4v1h-4zM338 346h3v2h-3zM166 272h3v1h-3zM439 126h1v2h-1zM638 709h2v3h-2zM254 538h3v1h-3zM185 478h3v2h-3zM683 25h1v3h-1zM48 227h2v1h-2zM427 445h1v2h-1zM418 610h2v2h-2zM654 416h1v3h-1zM616 485h3v2h-3zM784 652h3v1h-3zM377 112h3v3h-3zM494 232h3v2h-3zM416 184h4v2h-4zM86 471h2v1h-2zM602 698h2v1h-2zM229 171h2v3h-2zM606 155h2v2h-2zM110 31h3v3h-3zM204 164h3v1h-3zM661 538h4v2h-4zM305 676h2v1h-2zM639 184h2v1h-2zM34 61h2v1h-2zM790 635h3v2h-3zM794 119h2v2h-2zM297 193h3v1h-3zM298 74h1v2h-1zM337 553h2v2h-2zM162 272h4v2h-4zM621 774h3v1h-3zM443 736h3v3h-3zM591 486h3v1h-3zM527 35h4v2h-4zM191 420h3v1h-3zM657 442h3v2h-3zM238 292h4v2h-4zM742 306h2v1h-2zM331 510h3v2h-3zM805 162h3v2h-3zM707 641h1v3h-1zM307 221h3v1h-3zM616 771h1v1h-1zM695 96h2v2h-2zM32 40h3v1h-3zM341 115h3v2h-3zM150 53h2v2h-2zM9 66h2v2h-2zM676 80h3v3h-3zM87 236h1v2h-1zM537 59h1v2h-1zM417 476h1v1h-1zM151 138h2v1h-2zM704 404h3v1h-3zM603 28h3v2h-3zM508 402h1v2h-1zM809 102h2v2h-2zM37 228h3v2h-3zM151 344h1v1h-1zM308 622h3v2h-3zM636 401h4v1h-4zM377 165h2v1h-2zM187 749h3v3h-3zM144 203h3v1h-3zM579 394h1v1h-1zM253 347h4v2h-4zM409 187h1v2h-1zM346 751h3v3h-3zM153 715h2v1h-2zM409 483h4v1h-4zM697 657h2v3h-2zM549 170h3v1h-3zM364 185h2v2h-2zM363 162h4v1h-4zM108 23h3v3h-3zM466 728h3v2h-3zM396 682h2v1h-2zM13 45h1v2h-1zM422 402h3v2h-3zM453 658h3v2h-3zM304 725h2v3h-2zM586 665h4v1h-4zM105 96h2v3h-2zM703 611h2v1h-2zM510 88h2v2h-2zM549 413h2v2h-2zM694 153h4v2h-4zM515 323h2v1h-2zM120 296h3v1h-3zM205 329h2v2h-2zM568 337h4v1h-4zM437 472h2v3h-2zM475 434h2v1h-2zM290 330h2v1h-2zM701 191h1v2h-1zM235 186h2v2h-2zM414 110h1v2h-1zM637 102h1v2h-1zM354 562h4v1h-4zM234 573h3v1h-3zM605 599h1v2h-1zM453 156h3v3h-3zM748 382h2v2h-2zM352 772h4v1h-4zM128 264h2v3h-2zM368 758h3v1h-3zM200 729h3v1h-3zM78 283h2v1h-2zM299 722h4v2h-4zM17 44h2v1h-2zM663 714h3v2h-3zM224 337h2v3h-2zM473 642h1v1h-1zM145 734h1v3h-1zM100 223h3v3h-3zM374 307h2v1h-2zM653 270h2v3h-2zM345 80h4v2h-4zM311 756h2v2h-2zM364 498h2v2h-2zM666 120h2v1h-2zM92 660h3v2h-3zM22 178h2v1h-2zM619 607h2v1h-2zM267 747h3v1h-3zM12 590h3v1h-3zM559 532h2v3h-2zM12 155h2v1h-2zM363 118h2v2h-2zM36 618h2v1h-2zM709 34h1v1h-1zM240 607h3v1h-3zM204 539h1v2h-1zM374 292h1v2h-1zM653 24h2v3h-2zM206 698h1v1h-1zM68 421h3v2h-3zM696 348h1v3h-1zM148 86h3v2h-3zM543 192h2v1h-2zM441 144h3v1h-3zM387 124h2v2h-2zM538 552h2v2h-2zM284 424h2v2h-2zM463 668h3v1h-3zM316 754h3v2h-3zM774 321h3v2h-3zM661 45h1v3h-1zM183 85h3v2h-3zM59 582h4v2h-4zM137 72h2v3h-2zM352 224h3v3h-3zM693 756h4v2h-4zM550 181h2v1h-2zM427 248h4v2h-4zM456 721h3v1h-3zM303 257h3v2h-3zM36 354h3v1h-3zM763 391h2v1h-2zM475 55h1v1h-1zM100 34h1v1h-1zM301 602h1v1h-1zM348 119h1v1h-1zM424 435h1v1h-1zM737 376h3v1h-3zM418 108h2v2h-2zM88 381h3v2h-3zM455 436h4v3h-4zM468 597h4v2h-4zM695 122h3v3h-3zM695 80h4v2h-4zM711 37h1v1h-1zM461 337h3v1h-3zM10 296h2v1h-2zM667 105h4v2h-4zM331 467h3v1h-3zM373 422h2v2h-2zM640 480h3v2h-3zM172 679h2v1h-2zM698 154h2v1h-2zM724 739h3v3h-3zM719 548h1v1h-1zM335 242h1v2h-1zM459 623h3v3h-3zM260 92h4v2h-4zM209 592h4v2h-4zM366 332h1v1h-1zM710 382h3v1h-3zM132 223h3v2h-3zM654 720h4v2h-4zM586 760h4v1h-4zM176 428h4v1h-4zM512 632h3v1h-3zM630 627h3v1h-3zM522 487h2v1h-2zM783 321h2v2h-2zM218 769h1v1h-1zM736 765h1v1h-1zM169 472h2v2h-2zM553 40h2v1h-2zM420 550h4v1h-4zM124 199h3v2h-3zM173 726h4v2h-4zM136 382h2v3h-2zM524 246h3v1h-3zM388 131h1v2h-1zM474 767h2v1h-2zM811 388h1v1h-1zM376 167h3v2h-3zM379 691h4v1h-4zM182 160h3v1h-3zM459 268h3v3h-3zM539 282h4v1h-4zM509 392h2v1h-2zM724 466h2v1h-2zM18 628h3v2h-3zM195 638h3v1h-3zM712 451h3v2h-3zM744 77h1v1h-1zM229 544h2v1h-2zM538 757h2v1h-2zM205 347h1v3h-1zM797 95h1v1h-1zM450 514h1v2h-1zM573 151h1v2h-1zM75 342h2v3h-2zM209 770h2v1h-2zM749 368h4v1h-4zM423 670h3v1h-3zM317 155h2v3h-2zM795 161h4v3h-4zM29 251h2v1h-2zM512 777h1v1h-1zM374 574h2v1h-2zM585 54h3v3h-3zM191 555h2v3h-2zM451 50h3v1h-3zM8 367h4v1h-4zM209 618h4v1h-4zM456 107h1v3h-1zM148 346h3v1h-3zM236 184h3v2h-3zM754 454h2v2h-2zM404 679h2v2h-2zM589 580h1v1h-1zM748 507h2v3h-2zM151 660h2v2h-2zM295 137h2v1h-2zM23 377h3v3h-3zM399 643h3v3h-3zM168 128h2v1h-2zM108 404h2v1h-2zM742 325h2v1h-2zM626 208h2v1h-2zM792 83h4v2h-4zM681 139h2v1h-2zM106 216h4v3h-4zM361 746h3v3h-3zM437 132h4v2h-4zM58 456h3v3h-3zM164 174h2v1h-2zM130 182h2v3h-2zM368 266h1v2h-1zM87 358h1v2h-1zM436 334h1v3h-1zM755 682h4v1h-4zM51 123h3v1h-3zM503 278h2v1h-2zM450 149h4v1h-4zM332 264h1v1h-1zM743 293h2v1h-2zM547 319h2v1h-2zM303 430h4v1h-4zM497 347h4v1h-4zM806 461h4v2h-4zM486 130h4v1h-4zM162 340h2v1h-2zM331 359h2v1h-2zM195 230h1v3h-1zM249 257h3v3h-3zM566 330h2v2h-2zM493 498h1v1h-1zM96 337h3v1h-3zM176 121h3v3h-3zM399 385h2v3h-2zM579 299h2v1h-2zM736 397h1v2h-1zM227 347h4v2h-4zM663 532h2v3h-2zM634 604h2v2h-2zM210 340h4v2h-4zM755 108h2v2h-2zM290 585h1v1h-1zM765 541h2v1h-2zM99 289h2v2h-2zM496 307h3v3h-3zM312 279h2v3h-2zM692 749h3v1h-3zM494 85h4v1h-4zM251 759h3v1h-3zM546 506h2v1h-2zM420 235h4v1h-4zM444 28h1v2h-1zM347 88h2v1h-2zM707 185h1v1h-1zM72 325h1v2h-1zM633 423h4v3h-4zM392 223h2v2h-2zM20 445h1v1h-1zM682 329h3v2h-3zM117 121h3v1h-3zM223 620h4v2h-4zM327 539h3v2h-3zM629 227h2v3h-2zM109 207h3v3h-3zM47 214h3v2h-3zM203 402h4v3h-4zM86 265h4v1h-4zM322 634h2v1h-2zM107 556h2v1h-2zM610 120h3v2h-3zM130 624h1v3h-1zM715 515h3v1h-3zM780 599h2v1h-2zM344 764h3v2h-3zM504 733h3v2h-3zM506 119h3v1h-3zM390 124h2v3h-2zM246 769h3v1h-3zM148 122h2v2h-2zM557 736h1v3h-1zM473 538h2v2h-2zM338 151h2v2h-2zM383 174h2v1h-2zM103 777h2v2h-2zM639 161h2v2h-2zM23 498h3v1h-3zM579 542h2v1h-2zM422 564h1v1h-1zM783 483h4v2h-4zM140 629h4v2h-4zM69 214h2v2h-2zM548 260h4v1h-4zM743 667h2v3h-2zM448 683h3v3h-3zM752 311h1v2h-1zM340 156h2v2h-2zM509 377h3v2h-3zM543 197h4v1h-4zM184 100h2v2h-2zM717 77h3v1h-3zM507 522h2v1h-2zM498 691h4v1h-4zM744 361h4v3h-4zM666 67h4v2h-4zM458 700h3v2h-3zM786 650h2v1h-2zM259 439h3v1h-3zM213 194h2v3h-2zM530 292h2v3h-2zM452 236h3v1h-3zM791 575h2v1h-2zM96 235h1v2h-1zM337 631h2v2h-2zM809 373h4v1h-4zM315 281h1v2h-1zM367 585h2v1h-2zM45 400h1v1h-1zM381 108h3v2h-3zM589 139h3v2h-3zM269 343h1v1h-1zM670 176h3v2h-3zM47 366h2v2h-2zM106 341h1v2h-1zM546 432h4v2h-4zM75 331h4v1h-4zM675 459h1v1h-1zM743 261h2v2h-2zM780 608h3v2h-3zM410 400h3v1h-3zM412 348h2v2h-2zM598 380h2v2h-2zM29 95h3v2h-3zM63 261h3v3h-3zM575 606h2v1h-2zM456 625h4v1h-4zM111 480h2v1h-2zM489 185h3v2h-3zM508 126h1v1h-1zM382 150h1v3h-1zM425 502h3v2h-3zM685 325h1v3h-1zM810 762h3v1h-3zM229 142h4v2h-4zM134 531h3v1h-3zM356 171h4v2h-4zM807 584h2v1h-2zM230 771h4v1h-4zM471 691h2v2h-2zM197 662h3v3h-3zM483 377h4v2h-4zM21 46h4v1h-4zM440 441h4v2h-4zM672 500h2v3h-2zM378 307h2v2h-2zM331 441h3v3h-3zM44 676h3v3h-3zM244 361h4v1h-4zM765 334h2v2h-2zM79 443h3v2h-3zM157 527h2v1h-2zM627 310h1v2h-1zM263 479h2v2h-2zM654 588h1v2h-1zM117 115h2v1h-2zM332 615h3v1h-3zM265 152h3v1h-3zM808 110h4v2h-4zM205 107h3v1h-3zM34 401h4v2h-4zM356 146h4v1h-4zM789 126h1v3h-1zM371 522h1v2h-1zM337 280h4v2h-4zM375 692h3v1h-3zM723 654h3v2h-3zM396 584h4v1h-4zM762 688h2v2h-2zM373 587h1v3h-1zM74 73h2v1h-2zM781 397h2v2h-2zM377 89h3v1h-3zM138 580h2v1h-2zM573 381h4v3h-4zM680 368h2v1h-2zM190 493h2v3h-2zM625 691h3v2h-3zM376 506h2v1h-2zM79 233h4v1h-4zM336 77h1v1h-1zM422 519h1v1h-1zM721 485h2v2h-2zM18 714h3v3h-3zM468 423h2v2h-2zM140 402h4v2h-4zM712 634h2v2h-2zM95 548h2v1h-2zM564 475h2v3h-2zM526 592h4v1h-4zM373 108h2v2h-2zM650 263h4v2h-4zM240 496h3v2h-3zM512 152h2v2h-2zM334 606h2v3h-2zM82 274h3v1h-3zM731 344h3v1h-3zM45 106h3v1h-3zM463 702h2v2h-2zM134 371h4v2h-4zM619 284h2v2h-2zM284 207h4v1h-4zM258 241h3v1h-3zM487 596h4v1h-4zM108 628h1v3h-1zM376 245h2v1h-2zM505 320h3v1h-3zM782 764h3v2h-3zM684 506h3v1h-3zM417 168h1v1h-1zM55 102h2v2h-2zM756 167h3v3h-3zM250 94h1v3h-1zM347 62h1v1h-1zM46 504h4v2h-4zM504 52h2v3h-2zM687 103h1v3h-1zM97 612h3v2h-3zM555 546h2v2h-2zM155 29h1v1h-1zM641 146h2v1h-2zM803 196h3v2h-3zM8 596h2v1h-2zM655 351h1v3h-1zM123 447h2v1h-2zM127 473h2v2h-2zM352 84h3v1h-3zM230 174h1v3h-1zM136 463h2v2h-2zM626 90h3v3h-3zM554 255h4v1h-4zM584 52h4v2h-4zM708 34h2v1h-2zM229 222h4v2h-4zM371 27h4v2h-4zM743 433h4v1h-4zM434 652h1v1h-1zM45 409h3v3h-3zM202 397h3v3h-3zM24 556h1v1h-1zM52 573h1v2h-1zM619 776h2v1h-2zM814 327h3v3h-3zM218 103h2v1h-2zM228 309h1v3h-1zM252 137h3v2h-3zM715 327h3v2h-3zM165 111h1v3h-1zM705 670h3v1h-3zM176 335h2v2h-2zM764 393h2v2h-2zM647 322h1v1h-1zM574 308h1v2h-1zM122 764h3v1h-3zM316 576h1v2h-1zM335 66h1v2h-1zM314 759h3v3h-3zM308 226h4v3h-4zM411 98h3v3h-3zM749 128h2v3h-2zM56 451h1v2h-1zM439 343h3v3h-3zM613 170h3v2h-3zM451 534h4v1h-4zM360 602h1v1h-1zM325 223h1v3h-1zM540 759h3v2h-3zM426 715h1v2h-1zM280 549h3v2h-3zM18 435h4v2h-4zM611 666h3v2h-3zM635 381h2v3h-2zM108 752h1v2h-1zM531 246h4v2h-4zM765 499h2v1h-2zM20 739h2v1h-2zM451 138h3v1h-3zM276 579h3v1h-3zM355 404h1v1h-1zM369 499h2v2h-2zM453 555h4v3h-4zM543 270h4v2h-4zM326 391h3v2h-3zM24 87h3v1h-3zM550 60h4v2h-4zM447 392h2v2h-2zM532 43h4v2h-4zM746 598h4v1h-4zM545 52h1v1h-1zM652 376h3v1h-3zM781 587h4v1h-4zM234 152h3v3h-3zM464 446h1v1h-1zM631 214h4v1h-4zM142 343h3v3h-3zM808 378h4v2h-4zM369 311h3v3h-3zM347 302h3v1h-3zM279 190h2v2h-2zM286 286h2v1h-2zM463 314h1v2h-1zM453 552h2v2h-2zM346 359h1v2h-1zM719 117h3v1h-3zM152 597h3v2h-3zM91 605h1v1h-1zM315 714h3v1h-3zM260 700h3v1h-3zM179 461h2v2h-2zM268 365h2v3h-2zM286 248h4v2h-4zM83 228h3v3h-3zM354 44h1v1h-1zM273 207h1v1h-1zM365 88h2v2h-2zM515 460h1v2h-1zM797 217h1v1h-1zM43 225h3v3h-3zM309 650h2v2h-2zM764 339h4v2h-4zM258 153h4v3h-4zM477 687h2v2h-2zM784 446h3v2h-3zM186 338h2v1h-2zM639 369h4v1h-4zM583 190h1v3h-1zM529 557h3v2h-3zM434 238h2v1h-2zM313 546h2v2h-2zM810 633h2v1h-2zM196 330h2v2h-2zM454 698h1v2h-1zM680 479h3v2h-3zM31 696h1v2h-1zM94 537h4v2h-4zM240 540h1v1h-1zM691 146h3v3h-3zM417 629h3v2h-3zM315 317h2v2h-2zM477 489h4v2h-4zM689 746h3v3h-3zM545 132h3v2h-3zM782 429h4v1h-4zM526 752h1v3h-1zM618 203h4v1h-4zM248 749h2v2h-2zM696 282h2v3h-2zM764 693h1v3h-1zM392 730h2v1h-2zM261 304h2v1h-2zM614 670h1v1h-1zM421 524h1v1h-1zM135 615h2v3h-2zM743 159h2v2h-2zM593 628h4v3h-4zM97 258h3v1h-3zM682 613h3v1h-3zM547 184h2v1h-2zM574 132h3v2h-3zM579 460h2v2h-2zM670 26h3v1h-3zM214 402h2v1h-2zM336 532h3v2h-3zM530 480h3v2h-3zM137 470h2v1h-2zM719 419h3v2h-3zM468 552h2v1h-2zM802 48h3v2h-3zM802 192h1v1h-1zM720 767h4v2h-4zM26 297h2v1h-2zM304 269h2v1h-2zM474 55h2v2h-2zM58 471h3v2h-3zM730 76h3v1h-3zM281 470h3v1h-3zM91 170h2v1h-2zM352 726h4v2h-4zM549 235h2v1h-2zM779 648h4v2h-4zM358 179h2v1h-2zM773 528h4v3h-4zM398 41h2v3h-2zM363 512h3v1h-3zM184 646h3v1h-3zM312 472h4v2h-4zM453 535h3v3h-3zM355 243h1v2h-1zM388 166h2v1h-2zM516 195h4v2h-4zM107 361h1v2h-1zM653 246h1v1h-1zM28 208h3v3h-3zM316 320h1v2h-1zM83 169h3v1h-3zM621 693h3v1h-3zM782 720h2v1h-2zM484 367h3v1h-3zM622 766h2v3h-2zM423 212h4v1h-4zM623 158h3v2h-3zM96 375h1v1h-1zM228 217h3v2h-3zM17 528h2v2h-2zM247 697h2v3h-2zM477 145h2v3h-2zM408 489h2v2h-2zM293 231h3v1h-3zM564 438h4v2h-4zM558 217h2v2h-2zM122 629h3v1h-3zM15 372h3v1h-3zM235 636h4v2h-4zM129 707h3v1h-3zM698 772h2v2h-2zM485 478h2v1h-2zM720 242h2v1h-2zM734 74h1v1h-1zM526 233h2v2h-2zM539 283h1v2h-1zM120 246h3v2h-3zM714 400h2v3h-2zM202 144h4v2h-4zM448 493h1v3h-1zM329 288h4v1h-4zM60 192h2v2h-2zM56 223h1v1h-1zM100 266h4v2h-4zM378 247h3v1h-3zM446 84h1v1h-1zM475 72h3v1h-3zM759 726h4v1h-4zM424 85h3v1h-3zM519 747h3v1h-3zM22 199h4v1h-4zM137 505h3v1h-3zM476 275h1v2h-1zM485 750h2v2h-2zM576 362h2v1h-2zM742 190h1v1h-1zM227 368h4v2h-4zM635 545h1v2h-1zM804 233h2v1h-2zM777 320h3v2h-3zM146 55h4v2h-4zM88 773h4v1h-4zM61 86h2v3h-2zM795 533h3v1h-3zM117 73h2v3h-2zM580 90h2v3h-2zM28 618h4v2h-4zM590 536h3v2h-3zM485 651h2v2h-2zM591 458h3v2h-3zM262 294h3v1h-3zM10 485h2v1h-2zM508 543h2v1h-2zM101 92h2v1h-2zM197 634h2v1h-2zM466 742h1v3h-1zM775 27h2v2h-2zM714 402h2v2h-2zM809 27h3v2h-3zM588 184h2v2h-2zM263 259h3v2h-3zM43 348h2v2h-2zM328 741h4v1h-4zM242 429h3v1h-3zM63 326h3v3h-3zM123 642h3v2h-3zM782 548h4v3h-4zM620 432h4v3h-4zM659 396h3v3h-3zM132 38h3v2h-3zM352 489h1v2h-1zM389 333h2v1h-2zM704 319h2v1h-2zM498 401h3v2h-3zM84 267h3v1h-3zM159 177h2v1h-2zM595 720h4v2h-4zM348 630h2v3h-2zM192 623h3v3h-3zM793 30h1v1h-1zM812 502h2v2h-2zM808 347h3v1h-3zM609 316h3v3h-3zM761 574h2v1h-2zM66 29h2v2h-2zM32 421h3v2h-3zM297 303h3v3h-3zM480 614h2v1h-2zM541 546h2v1h-2zM549 676h4v2h-4zM799 502h3v3h-3zM747 295h2v2h-2zM210 58h3v3h-3zM387 275h4v2h-4zM124 414h4v3h-4zM152 94h1v3h-1zM769 221h3v1h-3zM86 384h2v2h-2zM280 149h3v1h-3zM183 101h2v2h-2zM193 623h3v1h-3zM339 728h2v2h-2zM162 615h2v3h-2zM229 256h2v3h-2zM551 55h4v2h-4zM163 238h3v3h-3zM152 736h4v2h-4zM243 515h2v2h-2zM434 442h3v3h-3zM527 122h3v2h-3zM314 390h2v2h-2zM708 517h3v2h-3zM661 272h1v2h-1zM252 717h2v3h-2zM375 594h2v2h-2zM432 682h2v2h-2zM735 424h3v2h-3zM35 578h1v1h-1zM715 588h3v2h-3zM441 499h3v2h-3zM301 563h2v1h-2zM19 753h3v3h-3zM439 183h4v3h-4zM31 550h4v1h-4zM441 583h2v2h-2zM119 41h1v1h-1zM534 302h3v2h-3zM604 179h3v2h-3zM271 710h3v1h-3zM19 268h3v2h-3zM476 33h2v2h-2zM547 709h2v2h-2zM383 263h1v2h-1zM395 79h4v1h-4zM658 412h1v2h-1zM782 28h2v3h-2zM221 91h2v1h-2zM153 391h4v3h-4zM47 544h3v2h-3zM163 151h3v2h-3zM799 79h2v1h-2zM318 670h2v1h-2zM231 412h2v1h-2zM325 607h2v3h-2zM537 704h2v3h-2zM443 324h2v1h-2zM785 237h2v2h-2zM375 321h3v1h-3zM729 694h2v2h-2zM24 122h2v1h-2zM786 470h2v2h-2zM779 401h3v2h-3zM143 271h1v2h-1zM227 634h1v2h-1zM417 660h4v1h-4zM595 80h1v1h-1zM749 263h2v1h-2zM686 690h3v2h-3zM811 115h3v3h-3zM270 369h3v3h-3zM468 88h2v3h-2zM270 645h4v2h-4zM450 752h3v1h-3zM388 474h2v1h-2zM34 127h3v2h-3zM712 332h3v1h-3zM260 348h4v1h-4zM411 421h4v2h-4zM528 237h4v1h-4zM320 693h2v3h-2zM812 197h4v2h-4zM458 330h4v2h-4zM604 495h1v2h-1zM710 141h4v2h-4zM521 292h2v2h-2zM557 349h4v3h-4zM353 34h3v1h-3zM195 306h1v1h-1zM686 421h2v1h-2zM190 485h1v3h-1zM38 183h3v2h-3zM458 656h2v2h-2zM269 149h4v2h-4zM336 455h2v2h-2zM442 338h2v2h-2zM596 209h2v1h-2zM517 354h4v1h-4zM157 509h2v3h-2zM557 598h3v3h-3zM117 504h2v3h-2zM346 82h3v3h-3zM425 56h2v2h-2zM11 662h3v2h-3zM136 746h1v3h-1zM741 533h3v1h-3zM254 161h3v3h-3zM568 388h3v1h-3zM152 197h2v2h-2zM451 280h1v1h-1zM348 668h1v2h-1zM206 77h1v1h-1zM396 120h4v3h-4zM545 69h4v1h-4zM703 463h4v2h-4zM366 269h1v2h-1zM30 234h3v2h-3zM422 336h4v3h-4zM432 559h2v1h-2zM502 220h2v1h-2zM561 494h3v2h-3zM203 198h4v3h-4zM388 670h2v1h-2zM653 50h2v1h-2zM555 764h3v1h-3zM790 241h2v1h-2zM416 322h3v1h-3zM621 638h3v3h-3zM759 582h3v1h-3zM252 369h3v2h-3zM544 74h1v2h-1zM45 352h3v1h-3zM430 306h3v1h-3zM127 31h2v1h-2zM724 438h3v1h-3zM488 200h1v2h-1zM535 313h3v2h-3zM715 400h3v2h-3zM310 254h3v2h-3zM343 38h3v2h-3zM450 644h2v1h-2zM701 235h1v1h-1zM771 209h4v1h-4zM64 316h4v2h-4zM297 764h3v3h-3zM709 697h1v1h-1zM508 617h2v2h-2zM696 463h3v1h-3zM379 641h4v2h-4zM99 213h4v3h-4zM30 326h1v1h-1zM638 186h1v2h-1zM412 624h3v2h-3zM85 361h4v2h-4zM658 341h3v2h-3zM789 292h3v2h-3zM672 552h4v1h-4zM709 540h3v2h-3zM348 679h3v2h-3zM579 763h3v1h-3zM708 60h2v2h-2zM747 199h3v2h-3zM628 406h4v2h-4zM5 369h4v1h-4zM181 55h3v2h-3zM431 617h1v2h-1zM773 266h3v2h-3zM425 355h4v3h-4zM762 53h2v2h-2zM418 95h3v2h-3zM65 274h1v2h-1zM324 159h2v3h-2zM419 438h1v2h-1zM295 265h1v2h-1zM619 719h2v2h-2zM240 375h2v1h-2zM23 121h3v3h-3zM241 432h1v2h-1zM364 157h3v1h-3zM433 66h3v2h-3zM67 294h1v1h-1zM193 32h3v3h-3zM411 99h4v1h-4zM442 262h1v3h-1zM144 678h2v1h-2zM492 347h4v1h-4zM393 580h1v3h-1zM426 360h1v2h-1zM13 204h3v2h-3zM531 225h3v1h-3zM569 48h3v2h-3zM536 643h3v1h-3zM132 239h2v2h-2zM555 453h4v2h-4zM191 576h3v2h-3zM232 676h4v1h-4zM592 447h4v3h-4zM780 630h3v1h-3zM650 92h3v3h-3zM219 57h3v3h-3zM721 769h2v2h-2zM103 669h3v1h-3zM347 667h2v2h-2zM612 113h1v2h-1zM513 459h2v2h-2zM189 546h3v2h-3zM729 763h2v1h-2zM553 409h2v1h-2zM593 618h3v2h-3zM480 156h2v1h-2zM249 479h3v1h-3zM12 61h3v2h-3zM542 351h3v1h-3zM476 20h3v3h-3zM742 306h3v1h-3zM274 753h1v3h-1zM711 769h1v1h-1zM509 21h3v3h-3zM255 295h3v1h-3zM263 64h2v1h-2zM521 437h4v1h-4zM390 699h1v3h-1zM280 409h3v2h-3zM558 276h3v3h-3zM716 25h3v3h-3zM249 21h3v3h-3zM717 343h2v1h-2zM718 276h4v2h-4zM433 165h3v1h-3zM807 433h3v3h-3zM459 636h4v1h-4zM268 711h1v3h-1zM658 352h1v1h-1zM656 371h4v1h-4zM92 621h2v2h-2zM573 274h2v3h-2zM473 336h2v2h-2zM43 331h2v2h-2zM668 152h2v2h-2zM479 605h4v1h-4zM242 62h3v3h-3zM754 333h3v2h-3zM468 636h2v1h-2zM581 734h1v1h-1zM470 460h3v1h-3zM107 448h3v1h-3zM484 514h4v2h-4zM480 421h2v1h-2zM775 591h2v3h-2zM15 184h4v1h-4zM17 638h4v2h-4zM439 206h3v2h-3zM628 531h1v2h-1zM693 483h1v2h-1zM237 30h2v1h-2zM616 372h2v2h-2zM116 269h2v1h-2zM379 294h4v1h-4zM741 91h3v2h-3zM582 538h3v1h-3zM685 67h3v1h-3zM159 227h4v2h-4zM127 530h2v3h-2zM527 695h3v1h-3zM538 187h4v2h-4zM429 705h1v2h-1zM785 21h3v2h-3zM735 86h2v2h-2zM769 162h1v2h-1zM16 370h3v2h-3zM711 248h3v1h-3zM370 771h1v2h-1zM192 658h1v1h-1zM456 650h2v3h-2zM658 145h4v1h-4zM396 535h2v1h-2zM439 362h2v3h-2zM594 307h4v1h-4zM392 469h2v1h-2zM353 624h4v3h-4zM784 663h1v2h-1zM462 535h3v1h-3zM399 663h2v1h-2zM455 684h3v1h-3zM441 221h3v1h-3zM671 409h3v1h-3zM748 115h2v2h-2zM615 42h2v2h-2zM267 766h2v3h-2zM162 132h2v3h-2zM473 234h3v1h-3zM764 585h1v1h-1zM649 339h3v2h-3zM453 284h2v2h-2zM191 598h2v1h-2zM42 165h2v3h-2zM240 66h2v1h-2zM309 577h3v2h-3zM58 475h4v3h-4zM18 519h3v3h-3zM427 421h1v3h-1zM154 77h3v2h-3zM297 79h3v2h-3zM304 621h3v3h-3zM305 620h4v1h-4zM548 144h4v1h-4zM510 208h3v1h-3zM306 453h2v3h-2zM213 741h3v2h-3zM642 86h3v2h-3zM541 118h1v2h-1zM796 27h4v2h-4zM239 374h3v3h-3zM575 225h1v3h-1zM14 755h2v1h-2zM290 363h2v3h-2zM610 626h2v1h-2zM106 715h3v2h-3zM475 631h3v3h-3zM158 239h1v3h-1zM410 92h2v3h-2zM783 419h3v2h-3zM157 64h4v1h-4zM391 488h2v2h-2zM149 91h2v2h-2zM254 236h1v3h-1zM179 332h4v1h-4zM499 22h3v1h-3zM764 242h4v1h-4zM182 594h4v2h-4zM419 709h3v1h-3zM542 229h3v3h-3zM769 572h3v2h-3zM332 596h4v2h-4zM183 268h4v1h-4zM313 279h4v1h-4zM5 85h2v2h-2zM634 135h1v1h-1zM384 506h1v1h-1zM17 592h3v2h-3zM217 557h1v1h-1zM244 625h4v1h-4zM318 407h4v1h-4zM562 86h3v2h-3zM700 126h2v2h-2zM680 90h2v1h-2zM521 158h4v2h-4zM517 546h3v2h-3zM140 37h3v2h-3zM208 342h3v1h-3zM396 472h2v2h-2zM349 694h4v2h-4zM798 663h4v1h-4zM364 413h3v1h-3zM357 77h3v1h-3zM756 45h2v2h-2zM715 605h1v2h-1zM152 176h3v2h-3zM576 45h4v2h-4zM623 193h4v2h-4zM704 405h1v3h-1zM656 404h4v1h-4zM241 98h3v2h-3zM763 446h2v1h-2zM566 441h1v2h-1zM36 241h2v1h-2zM607 343h4v3h-4zM663 184h2v1h-2zM772 215h2v2h-2zM766 402h1v2h-1zM444 455h3v2h-3zM39 157h2v2h-2zM83 60h1v3h-1zM32 42h4v3h-4zM29 576h3v2h-3zM746 502h3v2h-3zM330 209h4v2h-4zM407 738h2v1h-2zM497 250h1v1h-1zM757 113h3v2h-3zM480 561h2v2h-2zM136 385h3v2h-3zM649 116h4v3h-4zM240 96h1v1h-1zM431 476h3v3h-3zM465 713h2v3h-2zM127 442h3v1h-3zM44 680h4v1h-4zM141 99h2v1h-2zM785 689h2v2h-2zM140 242h2v2h-2zM600 432h1v2h-1zM683 774h3v2h-3zM138 180h1v1h-1zM645 684h1v2h-1zM812 201h2v1h-2zM808 710h3v3h-3zM213 102h3v1h-3zM507 132h2v2h-2zM225 154h1v1h-1zM458 278h4v1h-4zM687 563h1v2h-1zM292 469h3v1h-3zM481 545h3v1h-3zM699 589h2v1h-2zM691 325h2v2h-2zM794 690h2v1h-2zM388 627h4v3h-4zM578 36h4v1h-4zM477 377h2v3h-2zM329 172h2v2h-2zM759 543h3v3h-3zM358 592h4v3h-4zM209 575h4v1h-4zM128 608h3v3h-3zM730 347h4v3h-4zM290 57h4v3h-4zM695 437h4v1h-4zM480 40h3v2h-3zM65 294h2v1h-2zM799 463h4v2h-4zM706 39h3v2h-3zM717 333h4v2h-4zM363 78h3v1h-3zM696 311h2v3h-2zM611 58h2v2h-2zM591 543h4v2h-4zM104 447h2v3h-2zM236 759h2v2h-2zM618 89h3v1h-3zM79 391h3v1h-3zM431 308h3v3h-3zM69 177h3v2h-3zM20 621h2v1h-2zM358 761h1v1h-1zM488 492h2v2h-2zM526 334h1v2h-1zM39 769h1v1h-1zM531 293h2v1h-2zM268 400h4v2h-4zM389 194h4v2h-4zM488 222h3v3h-3zM244 76h3v1h-3zM78 684h3v2h-3zM228 56h1v2h-1zM218 143h3v1h-3zM496 102h2v1h-2zM101 499h1v2h-1zM290 767h3v2h-3zM92 420h1v2h-1zM131 142h3v2h-3zM426 118h3v3h-3zM159 221h2v3h-2zM503 681h2v1h-2zM409 488h2v1h-2zM616 39h4v1h-4zM794 485h1v3h-1zM322 239h3v2h-3zM53 747h3v1h-3zM428 118h2v2h-2zM523 358h2v3h-2zM207 306h2v2h-2zM439 718h3v2h-3zM433 185h3v1h-3zM687 102h1v2h-1zM255 34h3v3h-3zM530 410h3v3h-3zM202 588h2v2h-2zM632 264h3v1h-3zM137 35h1v1h-1zM480 20h1v2h-1zM618 606h4v2h-4zM680 437h2v2h-2zM595 406h2v2h-2zM463 640h2v1h-2zM224 417h3v1h-3zM237 341h3v1h-3zM94 511h4v2h-4zM162 600h2v1h-2zM345 237h4v1h-4zM62 119h1v2h-1zM425 675h2v2h-2zM660 284h4v1h-4zM303 88h2v1h-2zM54 96h3v3h-3zM265 343h2v3h-2zM726 246h2v3h-2zM604 475h2v2h-2zM655 83h1v1h-1zM282 328h3v2h-3zM648 670h2v3h-2zM649 65h1v1h-1zM693 707h3v1h-3zM733 384h2v3h-2zM232 114h2v1h-2zM136 388h1v1h-1zM325 508h1v3h-1zM204 595h3v3h-3zM174 278h1v1h-1zM289 472h3v1h-3zM327 619h3v1h-3zM544 673h2v1h-2zM78 707h4v3h-4zM171 616h3v2h-3zM668 570h2v1h-2zM67 236h3v3h-3zM68 214h3v1h-3zM193 240h3v1h-3zM314 371h4v1h-4zM809 624h4v1h-4zM60 760h4v3h-4zM5 71h2v3h-2zM164 196h3v1h-3zM368 411h4v1h-4zM333 446h2v2h-2zM114 741h2v2h-2zM247 497h1v1h-1zM519 41h3v1h-3zM512 23h2v2h-2zM70 48h2v1h-2zM783 510h3v1h-3zM663 402h2v2h-2zM487 709h3v3h-3zM493 103h3v3h-3zM636 763h2v2h-2zM667 661h1v2h-1zM558 657h1v2h-1zM362 303h3v2h-3zM440 521h2v3h-2zM699 669h1v1h-1zM121 411h3v2h-3zM84 674h3v2h-3zM179 157h1v3h-1zM704 752h4v1h-4zM805 123h4v3h-4zM58 130h2v2h-2zM456 57h2v1h-2zM711 164h3v2h-3zM73 683h3v1h-3zM104 637h1v2h-1zM581 691h2v3h-2zM552 510h4v1h-4zM282 322h3v1h-3zM174 323h2v2h-2zM437 647h3v3h-3zM602 624h2v3h-2zM250 405h3v2h-3zM486 201h4v2h-4zM621 26h3v3h-3zM80 249h3v3h-3zM720 317h1v1h-1zM724 30h3v2h-3zM161 676h4v1h-4zM673 167h3v1h-3zM276 266h4v1h-4zM555 159h1v1h-1zM727 333h3v2h-3zM65 773h3v2h-3zM55 299h2v2h-2zM485 699h2v2h-2zM793 248h2v2h-2zM73 464h3v3h-3zM704 595h3v1h-3zM291 47h3v3h-3zM450 517h2v1h-2zM617 507h4v1h-4zM683 100h3v1h-3zM430 262h3v2h-3zM288 669h3v3h-3zM562 630h1v2h-1zM322 373h4v2h-4zM710 524h1v2h-1zM44 414h2v2h-2zM613 469h2v1h-2zM252 329h3v1h-3zM695 364h3v1h-3zM466 248h3v2h-3zM813 497h3v1h-3zM589 306h3v1h-3zM423 23h3v2h-3zM351 639h3v1h-3zM25 692h3v2h-3zM279 413h3v3h-3zM103 145h3v2h-3zM778 129h2v3h-2zM773 240h1v1h-1zM281 776h2v2h-2zM55 728h3v3h-3zM759 383h3v2h-3zM341 50h2v1h-2zM300 115h3v1h-3zM800 38h2v1h-2zM448 675h3v2h-3zM182 46h2v1h-2zM281 736h3v1h-3zM112 321h1v1h-1zM429 632h3v1h-3zM764 317h1v2h-1zM692 322h2v3h-2zM331 220h2v1h-2zM74 166h2v3h-2zM354 43h2v1h-2zM572 634h3v3h-3zM427 112h2v2h-2zM556 274h2v1h-2zM253 374h2v1h-2zM257 639h4v1h-4zM209 407h1v1h-1zM76 507h4v3h-4zM793 19h1v1h-1zM810 771h3v1h-3zM532 176h2v2h-2zM344 689h3v1h-3zM366 442h3v2h-3zM257 115h3v3h-3zM385 509h2v3h-2zM590 306h3v3h-3zM764 411h4v1h-4zM605 70h2v2h-2zM103 276h4v1h-4zM779 209h2v2h-2zM251 114h4v1h-4zM757 377h3v2h-3zM784 658h3v2h-3zM657 469h2v1h-2zM605 27h2v2h-2zM715 503h2v1h-2zM794 541h1v1h-1zM400 68h3v1h-3zM74 611h2v3h-2zM211 550h4v2h-4zM24 522h4v2h-4zM764 436h3v2h-3zM414 319h4v1h-4zM510 153h2v1h-2zM749 155h3v2h-3zM763 329h2v3h-2zM265 637h2v1h-2zM442 602h3v3h-3zM208 264h3v1h-3zM214 441h2v1h-2zM586 378h4v1h-4zM364 418h1v2h-1zM275 346h3v1h-3zM275 616h3v2h-3zM75 196h3v2h-3zM808 316h3v2h-3zM703 245h3v1h-3zM730 97h2v1h-2zM655 771h1v1h-1zM317 716h3v3h-3zM619 197h4v3h-4zM659 179h2v1h-2zM727 760h1v1h-1zM384 130h2v3h-2zM175 68h3v1h-3zM636 541h3v2h-3zM231 355h2v2h-2zM698 568h1v3h-1zM375 695h1v2h-1zM682 200h3v1h-3zM80 148h1v1h-1zM62 175h3v2h-3zM658 314h3v2h-3zM37 340h3v1h-3zM233 115h2v1h-2zM224 190h4v2h-4zM209 200h1v1h-1zM559 213h3v1h-3zM630 571h4v2h-4zM240 593h3v3h-3zM213 645h3v1h-3zM195 81h2v1h-2zM417 239h1v2h-1zM764 268h3v2h-3zM232 274h2v1h-2zM69 724h3v1h-3zM578 166h3v1h-3zM243 160h1v3h-1zM258 469h2v1h-2zM145 510h3v3h-3zM448 776h3v1h-3zM310 200h4v1h-4zM7 31h2v1h-2zM807 505h1v1h-1zM577 351h2v3h-2zM54 293h2v3h-2zM735 444h3v2h-3zM171 349h3v2h-3zM388 67h2v3h-2zM400 51h3v3h-3zM569 327h2v3h-2zM61 463h2v1h-2zM602 33h4v2h-4zM145 576h1v2h-1zM59 458h3v3h-3zM232 532h4v3h-4zM62 364h3v1h-3zM233 762h4v1h-4zM628 249h4v3h-4zM629 351h2v2h-2zM467 224h4v1h-4zM309 260h3v1h-3zM521 407h3v2h-3zM383 117h4v2h-4zM579 750h2v1h-2zM78 47h3v3h-3zM641 249h2v2h-2zM767 635h3v1h-3zM681 306h4v1h-4zM673 100h2v2h-2zM680 692h1v3h-1zM388 283h3v2h-3zM316 289h3v2h-3zM811 632h3v2h-3zM803 564h1v1h-1zM478 509h2v3h-2zM782 168h1v1h-1zM307 283h3v1h-3zM284 430h1v1h-1zM131 79h2v1h-2zM317 616h2v1h-2zM223 540h2v2h-2zM120 343h3v1h-3zM208 129h2v2h-2zM132 252h2v3h-2zM310 199h1v2h-1zM670 204h3v3h-3zM271 345h1v2h-1zM536 717h4v3h-4zM75 574h2v3h-2zM137 501h3v2h-3zM41 175h3v2h-3zM163 666h4v1h-4zM302 744h3v2h-3zM626 271h4v2h-4zM270 95h2v3h-2zM326 49h3v1h-3zM295 89h2v1h-2zM362 53h2v2h-2zM219 100h3v2h-3zM215 563h1v1h-1zM79 80h4v1h-4zM573 70h2v1h-2zM469 47h3v1h-3zM325 755h2v1h-2zM177 363h1v2h-1zM325 418h4v2h-4zM630 713h3v2h-3zM236 34h3v2h-3zM544 80h2v1h-2zM532 98h3v1h-3zM641 646h2v2h-2zM801 613h1v2h-1zM483 289h2v1h-2zM791 419h2v1h-2zM224 53h1v2h-1zM768 614h4v2h-4zM466 481h2v1h-2zM635 706h2v1h-2zM152 97h4v3h-4zM630 352h3v3h-3zM632 83h3v1h-3zM622 263h2v2h-2zM221 354h2v3h-2zM202 326h1v1h-1zM713 198h3v1h-3zM234 412h1v1h-1zM65 609h4v2h-4zM179 199h1v2h-1zM282 350h1v1h-1zM126 367h2v2h-2zM540 74h3v1h-3zM809 197h3v3h-3zM296 400h2v2h-2zM693 696h1v1h-1zM455 382h3v2h-3zM68 177h3v1h-3zM226 722h3v2h-3zM732 388h3v1h-3zM465 292h1v3h-1zM273 238h3v1h-3zM62 461h3v2h-3zM212 376h3v2h-3zM189 330h2v2h-2zM128 44h1v2h-1zM615 160h3v3h-3zM615 622h2v2h-2zM614 175h3v2h-3zM186 288h2v2h-2zM173 353h4v2h-4zM646 384h1v1h-1zM563 205h4v1h-4zM541 396h3v2h-3zM631 553h2v2h-2zM657 552h3v2h-3zM480 133h3v1h-3zM545 41h2v1h-2zM672 168h1v1h-1zM646 697h3v2h-3zM588 438h2v1h-2zM107 502h3v3h-3zM460 568h1v1h-1zM590 463h3v2h-3zM70 219h4v1h-4zM390 696h4v1h-4zM267 767h3v1h-3zM189 700h2v2h-2zM174 621h2v2h-2zM176 30h2v2h-2zM61 176h2v2h-2zM245 98h2v3h-2zM758 376h2v2h-2zM266 492h1v1h-1zM452 762h1v1h-1zM294 297h3v1h-3zM501 332h1v1h-1zM694 257h3v2h-3zM159 39h2v3h-2zM242 175h2v3h-2zM208 114h2v2h-2zM408 319h3v1h-3zM449 480h4v1h-4zM388 618h2v1h-2zM608 519h2v1h-2zM10 492h3v1h-3zM413 70h1v2h-1zM97 455h2v2h-2zM808 654h2v2h-2zM426 143h3v1h-3zM802 651h2v2h-2zM476 504h3v1h-3zM713 130h2v3h-2zM302 547h4v2h-4zM293 260h4v1h-4zM293 214h2v1h-2zM747 267h1v2h-1zM594 769h1v2h-1zM128 323h2v3h-2zM205 167h2v3h-2zM418 387h3v2h-3zM289 50h2v1h-2zM551 508h1v3h-1zM347 421h1v1h-1zM517 281h2v2h-2zM553 162h3v2h-3zM86 20h3v2h-3zM385 469h2v3h-2zM135 209h3v1h-3zM728 152h4v3h-4zM566 64h2v1h-2zM657 442h3v2h-3zM670 393h4v2h-4zM121 659h4v1h-4zM29 455h3v3h-3zM447 695h3v2h-3zM292 444h3v2h-3zM479 176h4v1h-4zM662 268h3v1h-3zM125 586h3v2h-3zM365 423h3v3h-3zM743 539h3v2h-3zM462 777h2v1h-2zM117 687h4v3h-4zM51 213h2v2h-2zM555 399h1v1h-1zM258 760h2v1h-2zM165 139h2v2h-2zM90 131h4v2h-4zM520 138h2v1h-2zM247 776h1v2h-1zM560 451h2v3h-2zM39 122h2v1h-2zM355 62h2v2h-2zM236 512h4v2h-4zM25 47h3v3h-3zM772 278h2v2h-2zM315 430h3v1h-3zM528 348h2v3h-2zM441 356h3v2h-3zM258 167h3v2h-3zM251 604h3v1h-3zM690 593h3v1h-3zM408 87h4v2h-4zM44 26h2v2h-2zM432 214h2v1h-2zM44 327h2v1h-2zM632 288h2v2h-2zM133 29h1v2h-1zM802 334h3v2h-3zM765 135h2v2h-2zM401 321h4v1h-4zM82 700h3v3h-3zM171 522h4v2h-4zM313 777h2v2h-2zM761 143h2v2h-2zM527 767h1v2h-1zM467 709h2v1h-2zM651 573h2v2h-2zM355 168h3v1h-3zM244 174h1v3h-1zM257 587h1v1h-1zM230 727h2v2h-2zM74 185h3v2h-3zM579 98h3v1h-3zM212 186h3v3h-3zM813 584h2v1h-2zM488 615h1v2h-1zM24 651h2v2h-2zM659 292h2v3h-2zM221 278h4v2h-4zM136 273h2v2h-2zM797 97h1v1h-1zM613 379h3v1h-3zM396 157h2v1h-2zM726 714h3v1h-3zM316 112h1v1h-1zM344 195h3v2h-3zM383 526h3v1h-3zM596 281h3v2h-3zM342 597h4v2h-4zM560 295h3v2h-3zM247 191h3v1h-3zM112 637h4v1h-4zM597 331h1v1h-1zM91 757h2v2h-2zM269 460h2v1h-2zM445 249h2v3h-2zM235 382h1v2h-1zM104 113h2v2h-2zM618 47h1v1h-1zM396 619h3v1h-3zM757 732h2v3h-2zM679 143h2v1h-2zM688 631h1v2h-1zM685 191h3v2h-3zM233 127h1v1h-1zM426 611h2v1h-2zM215 294h2v2h-2zM78 176h3v1h-3zM131 685h2v2h-2zM353 574h2v3h-2zM265 624h2v1h-2zM579 115h3v1h-3zM716 44h4v2h-4zM661 197h3v1h-3zM519 550h1v2h-1zM442 750h3v1h-3zM720 391h3v2h-3zM738 503h2v3h-2zM429 484h4v3h-4zM45 157h3v2h-3zM73 411h3v2h-3zM200 558h2v1h-2zM399 267h1v1h-1zM431 486h3v3h-3zM737 709h4v2h-4zM228 35h1v2h-1zM313 633h1v2h-1zM202 152h3v3h-3zM359 134h4v1h-4zM20 596h1v3h-1zM540 516h2v2h-2zM115 389h3v3h-3zM102 199h1v3h-1zM541 547h1v1h-1zM122 598h2v2h-2zM384 280h3v1h-3zM746 418h3v1h-3zM201 687h3v3h-3zM93 502h1v1h-1zM144 745h3v1h-3zM201 177h2v1h-2zM648 658h1v2h-1zM426 55h1v2h-1zM626 261h3v2h-3zM707 676h2v1h-2zM243 341h4v3h-4zM701 340h3v1h-3zM34 135h3v1h-3zM234 766h3v1h-3zM437 593h2v1h-2zM743 492h3v2h-3zM166 409h2v1h-2zM329 640h3v2h-3zM703 168h3v2h-3zM245 94h2v3h-2zM565 58h4v1h-4zM54 344h2v1h-2zM617 21h1v1h-1zM398 421h3v2h-3zM356 589h2v2h-2zM354 701h3v2h-3zM651 176h2v1h-2zM618 174h2v1h-2zM319 514h4v3h-4zM43 359h2v2h-2zM482 605h3v2h-3zM448 279h1v1h-1zM261 34h1v2h-1zM163 224h2v2h-2zM332 723h3v1h-3zM593 191h3v3h-3zM301 228h2v2h-2zM634 321h4v2h-4zM434 487h3v2h-3zM197 173h3v1h-3zM442 23h1v1h-1zM466 282h2v1h-2zM482 82h4v1h-4zM259 502h1v2h-1zM356 772h4v1h-4zM264 387h2v1h-2zM545 286h2v2h-2zM717 588h2v2h-2zM470 601h3v2h-3zM37 120h3v3h-3zM200 26h4v2h-4zM747 171h2v2h-2zM71 310h2v1h-2zM723 175h1v1h-1zM257 68h1v3h-1zM329 651h2v1h-2zM302 742h2v1h-2zM462 63h3v1h-3zM143 350h3v1h-3zM254 118h4v3h-4zM302 756h3v1h-3zM486 735h4v2h-4zM678 725h2v2h-2zM19 449h3v2h-3zM663 230h3v1h-3zM478 32h2v1h-2zM718 546h2v2h-2zM611 523h3v1h-3zM44 543h2v1h-2zM315 323h4v2h-4zM679 29h3v3h-3zM735 306h4v2h-4zM98 738h4v2h-4zM178 19h2v2h-2zM676 273h2v3h-2zM98 233h2v2h-2zM101 185h3v1h-3zM299 180h2v2h-2zM57 132h2v1h-2zM302 414h2v3h-2zM348 130h4v1h-4zM15 31h3v1h-3zM540 575h3v1h-3zM801 734h2v3h-2zM146 584h2v1h-2zM64 228h4v1h-4zM84 695h2v1h-2zM254 269h3v1h-3zM484 489h4v2h-4zM600 239h3v2h-3zM418 713h4v1h-4zM335 659h3v3h-3zM127 209h2v2h-2zM407 632h2v1h-2zM437 94h3v2h-3zM259 406h3v1h-3zM813 179h4v1h-4zM286 568h1v1h-1zM587 529h2v2h-2zM102 778h4v2h-4zM219 399h2v1h-2zM576 516h2v3h-2zM128 328h4v2h-4zM703 318h3v1h-3zM647 658h1v1h-1zM551 618h2v2h-2zM601 105h4v1h-4zM599 634h2v3h-2zM479 760h2v3h-2zM58 602h4v1h-4zM658 606h1v1h-1zM587 652h3v1h-3zM305 214h2v1h-2zM679 43h3v1h-3zM192 328h2v3h-2zM621 510h4v1h-4zM619 715h3v2h-3zM614 536h1v2h-1zM381 229h3v2h-3zM57 622h2v3h-2zM353 573h3v1h-3zM199 688h4v1h-4zM78 236h2v1h-2zM528 529h3v2h-3zM478 753h3v2h-3zM755 183h3v1h-3zM270 277h4v3h-4zM280 599h4v2h-4zM204 610h1v2h-1zM302 623h2v1h-2zM517 144h4v1h-4zM558 678h2v3h-2zM388 211h1v1h-1zM172 498h3v2h-3zM172 250h4v3h-4zM622 514h4v1h-4zM684 601h3v3h-3zM396 308h3v3h-3zM53 258h2v1h-2zM751 563h2v1h-2zM234 411h4v2h-4zM723 446h4v1h-4zM234 340h2v1h-2zM430 557h4v1h-4zM685 471h3v1h-3zM632 716h3v1h-3zM170 221h1v3h-1zM805 270h2v1h-2zM261 381h3v2h-3zM43 80h2v3h-2zM133 225h3v3h-3zM257 215h4v2h-4zM223 413h3v1h-3zM554 442h3v3h-3zM320 173h3v3h-3zM135 179h3v2h-3zM38 333h3v2h-3zM764 772h4v2h-4zM25 392h2v2h-2zM192 388h3v2h-3zM799 145h4v3h-4zM319 290h4v2h-4zM187 269h3v2h-3zM383 699h2v2h-2zM453 47h2v1h-2zM645 595h1v2h-1zM602 431h3v2h-3zM771 554h4v1h-4zM796 688h4v1h-4zM560 372h1v3h-1zM16 236h3v2h-3zM39 362h3v1h-3zM684 122h1v2h-1zM525 141h3v1h-3zM587 52h4v1h-4zM281 122h4v1h-4zM270 189h2v1h-2zM451 337h1v3h-1zM619 614h4v1h-4zM702 727h3v2h-3zM72 497h4v2h-4zM338 229h3v2h-3zM453 376h2v3h-2zM676 36h2v1h-2zM766 715h3v3h-3zM189 543h1v2h-1zM145 90h1v1h-1zM794 732h3v3h-3zM182 743h2v2h-2zM157 653h2v2h-2zM749 121h4v1h-4zM708 31h3v3h-3zM206 80h1v2h-1zM62 519h3v2h-3zM602 242h1v3h-1zM668 180h2v1h-2zM93 29h2v2h-2zM131 292h3v2h-3zM627 368h2v3h-2zM6 487h3v2h-3zM581 562h4v1h-4zM698 408h1v2h-1zM123 372h2v1h-2zM197 616h3v2h-3zM614 678h1v1h-1zM206 604h1v2h-1zM153 465h3v2h-3zM378 208h2v2h-2zM668 348h3v2h-3zM160 583h3v3h-3zM798 391h1v2h-1zM812 150h3v1h-3zM33 279h2v2h-2zM645 131h2v3h-2zM686 158h2v1h-2zM387 32h1v1h-1zM450 740h4v2h-4zM566 220h4v2h-4zM45 69h3v1h-3zM713 726h4v2h-4zM675 217h3v2h-3zM747 199h3v2h-3zM511 761h2v2h-2zM114 601h3v1h-3zM643 188h3v2h-3zM413 463h3v3h-3zM746 536h2v1h-2zM806 228h3v3h-3zM517 510h1v1h-1zM11 244h1v3h-1zM354 225h1v3h-1zM531 193h3v2h-3zM472 764h2v1h-2zM789 234h2v1h-2zM716 435h3v1h-3zM728 95h2v3h-2zM295 301h1v3h-1zM640 81h4v2h-4zM14 261h2v2h-2zM432 421h3v2h-3zM14 537h3v2h-3zM145 578h2v1h-2zM796 322h3v3h-3zM507 484h4v3h-4zM605 266h2v1h-2zM296 663h1v1h-1zM777 210h2v2h-2zM142 622h2v2h-2zM283 37h2v2h-2zM527 774h2v2h-2zM756 36h3v3h-3zM213 564h1v2h-1zM346 553h4v1h-4zM598 464h1v2h-1zM160 484h2v1h-2zM502 535h3v3h-3zM589 275h1v1h-1zM649 353h2v3h-2zM538 561h2v1h-2zM158 255h2v3h-2zM753 187h2v1h-2zM123 155h2v1h-2zM145 335h2v1h-2zM434 722h4v2h-4zM67 283h1v1h-1zM658 470h2v3h-2zM667 68h3v2h-3zM600 464h1v2h-1zM721 747h2v2h-2zM658 96h3v2h-3zM236 546h3v2h-3zM24 572h1v1h-1zM680 86h2v1h-2zM355 660h1v3h-1zM163 753h4v1h-4zM655 446h4v2h-4zM318 98h2v2h-2zM399 771h3v2h-3zM395 313h2v2h-2zM197 197h2v3h-2zM748 164h4v2h-4zM383 257h1v3h-1zM396 748h3v1h-3zM29 233h3v1h-3zM658 431h2v2h-2zM219 380h4v2h-4zM461 655h4v2h-4zM243 290h2v1h-2zM61 638h3v2h-3zM341 457h3v2h-3zM456 651h1v1h-1zM386 382h3v2h-3zM741 184h2v2h-2zM798 86h1v1h-1zM78 157h2v2h-2zM504 569h1v1h-1zM534 591h1v3h-1zM409 604h2v2h-2zM704 246h1v1h-1zM274 537h2v1h-2zM347 490h4v1h-4zM127 519h3v1h-3zM631 496h1v2h-1zM231 414h3v1h-3zM418 710h3v1h-3zM473 625h4v1h-4zM703 627h2v1h-2zM610 66h3v2h-3zM276 564h1v2h-1zM302 349h1v1h-1zM468 319h1v3h-1zM444 666h3v2h-3zM146 142h4v3h-4zM159 368h2v2h-2zM716 104h4v2h-4zM628 460h2v3h-2zM490 136h4v1h-4zM766 78h4v1h-4zM346 590h4v3h-4zM631 249h4v1h-4zM758 251h4v1h-4zM733 115h2v3h-2zM366 753h3v1h-3zM629 256h2v2h-2zM659 308h1v2h-1zM612 601h3v1h-3zM383 456h3v3h-3zM306 113h2v3h-2zM12 34h3v2h-3zM577 729h3v2h-3zM177 458h1v1h-1zM418 325h4v3h-4zM144 604h4v1h-4zM762 55h3v2h-3zM605 358h3v1h-3zM443 99h2v2h-2zM407 373h2v1h-2zM374 24h3v1h-3zM259 555h4v3h-4zM162 473h3v2h-3zM811 516h3v2h-3zM610 176h3v2h-3zM157 375h4v2h-4zM764 405h3v3h-3zM10 624h4v1h-4zM739 597h3v2h-3zM496 686h3v1h-3zM177 142h1v3h-1zM624 255h2v3h-2zM556 341h4v2h-4zM801 212h1v3h-1zM145 642h2v2h-2zM242 238h2v2h-2zM741 769h2v1h-2zM255 107h3v3h-3zM724 711h1v1h-1zM528 265h3v1h-3zM8 467h1v1h-1zM354 722h3v2h-3zM423 151h2v3h-2zM89 194h1v2h-1zM489 46h3v2h-3zM403 219h2v1h-2zM466 27h1v2h-1zM379 577h3v2h-3zM759 260h1v1h-1zM795 305h1v1h-1zM779 118h4v2h-4zM170 140h4v2h-4zM82 647h3v1h-3zM350 588h2v1h-2zM788 437h1v3h-1zM195 518h2v1h-2zM490 360h4v1h-4zM278 60h3v2h-3zM586 309h1v2h-1zM350 433h1v2h-1zM617 396h3v2h-3zM745 148h3v2h-3zM685 355h1v1h-1zM526 494h2v2h-2zM756 707h1v1h-1zM614 765h4v1h-4zM567 449h2v3h-2zM403 709h2v1h-2zM661 484h1v1h-1zM161 79h3v1h-3zM33 696h2v1h-2zM73 741h3v1h-3zM366 240h1v1h-1zM488 265h4v1h-4zM112 189h2v1h-2zM28 128h2v3h-2zM678 161h2v3h-2zM572 352h3v2h-3zM655 657h2v1h-2zM325 260h2v1h-2zM417 60h2v2h-2zM78 264h3v1h-3zM7 102h4v2h-4zM594 188h1v1h-1zM636 629h2v2h-2zM453 382h3v2h-3zM60 514h1v1h-1zM564 310h3v3h-3zM34 124h3v2h-3zM780 511h3v3h-3zM780 113h4v2h-4zM136 607h4v3h-4zM329 697h2v2h-2zM452 426h2v1h-2zM523 761h1v2h-1zM562 584h1v2h-1zM195 165h3v1h-3zM27 211h1v3h-1zM296 770h4v1h-4zM511 325h3v2h-3zM706 242h3v1h-3zM810 199h3v1h-3zM571 618h2v2h-2zM795 44h1v2h-1zM523 506h1v1h-1zM564 170h2v1h-2zM99 566h4v2h-4zM777 71h3v3h-3zM684 710h3v2h-3zM660 650h3v2h-3zM29 665h3v1h-3zM92 106h4v1h-4zM339 73h2v3h-2zM237 247h3v2h-3zM336 359h4v3h-4zM11 20h1v3h-1zM714 268h2v1h-2zM315 663h1v3h-1zM260 184h2v2h-2zM17 718h1v3h-1zM320 141h3v2h-3zM798 106h2v1h-2zM279 349h4v1h-4zM802 608h4v3h-4zM146 465h4v1h-4zM188 219h1v3h-1zM524 527h3v2h-3zM164 340h1v1h-1zM469 70h4v1h-4zM583 516h2v2h-2zM700 361h4v2h-4zM637 174h4v3h-4zM556 405h2v3h-2zM240 593h1v3h-1zM486 630h4v1h-4zM331 568h1v3h-1zM791 224h3v2h-3zM700 335h4v1h-4zM707 112h3v3h-3zM45 643h4v2h-4zM216 252h2v2h-2zM771 111h3v3h-3zM292 558h3v3h-3zM69 754h3v3h-3zM327 66h1v1h-1zM381 294h3v1h-3zM393 597h3v1h-3zM361 538h2v2h-2zM797 348h4v2h-4zM778 297h4v2h-4zM82 511h2v2h-2zM643 583h3v1h-3zM50 150h3v2h-3zM131 640h3v3h-3zM334 34h2v1h-2zM795 697h1v2h-1zM707 352h2v2h-2zM63 379h1v2h-1zM523 66h2v3h-2zM696 402h2v3h-2zM97 689h3v1h-3zM7 323h3v1h-3zM252 391h2v1h-2zM399 171h4v2h-4zM521 385h2v3h-2zM279 616h4v3h-4zM472 163h4v2h-4zM691 222h2v2h-2zM149 306h1v2h-1zM331 436h3v1h-3zM688 256h1v1h-1zM76 296h3v1h-3zM594 49h1v3h-1zM348 106h3v3h-3zM517 226h3v2h-3zM334 657h1v1h-1zM595 189h3v3h-3zM682 561h2v2h-2zM173 325h2v2h-2zM346 54h1v2h-1zM446 118h4v2h-4zM158 308h2v2h-2zM257 407h4v3h-4zM453 55h3v2h-3zM446 672h4v2h-4zM426 65h2v3h-2zM8 279h2v3h-2zM686 507h2v1h-2zM666 703h2v3h-2zM89 342h1v1h-1zM710 153h4v3h-4zM635 77h3v1h-3zM47 493h4v2h-4zM364 366h2v2h-2zM359 475h3v1h-3zM135 753h1v3h-1zM489 101h2v2h-2zM787 235h4v2h-4zM726 86h4v2h-4zM21 526h2v3h-2zM376 134h2v1h-2zM298 701h3v2h-3zM170 80h3v1h-3zM779 402h4v1h-4zM350 193h2v3h-2zM654 263h4v1h-4zM347 157h2v1h-2zM523 232h2v1h-2zM811 579h2v2h-2zM721 253h3v2h-3zM653 476h3v3h-3zM166 323h4v2h-4zM106 253h4v1h-4zM614 315h1v1h-1zM806 78h1v1h-1zM323 707h1v2h-1zM221 441h3v1h-3zM268 141h3v2h-3zM227 500h3v2h-3zM214 684h1v3h-1zM447 22h2v2h-2zM439 699h2v2h-2zM416 452h3v2h-3zM479 556h1v1h-1zM528 765h4v3h-4zM175 471h3v1h-3zM659 414h1v1h-1zM757 69h3v3h-3zM406 645h2v1h-2zM248 34h3v2h-3zM12 498h4v2h-4zM730 696h3v2h-3zM594 314h3v1h-3zM606 525h1v2h-1zM384 513h3v2h-3zM224 750h4v1h-4zM811 604h3v2h-3zM34 499h2v1h-2zM506 602h2v3h-2zM433 514h4v2h-4zM508 54h3v2h-3zM708 586h4v2h-4zM277 558h4v1h-4zM427 438h3v1h-3zM354 196h1v2h-1zM762 530h2v1h-2zM647 121h3v2h-3zM473 550h1v2h-1zM790 25h2v1h-2zM63 119h3v2h-3zM570 244h4v2h-4zM260 502h4v3h-4zM451 298h4v2h-4zM311 69h1v2h-1zM210 736h2v1h-2zM302 274h3v3h-3z"/><path fill="#0e0e60" d="M687 98h3v3h-3zM596 486h1v1h-1zM459 310h4v2h-4zM150 123h4v2h-4zM543 389h2v3h-2zM642 643h1v2h-1zM355 677h1v1h-1zM31 173h3v2h-3zM336 284h3v2h-3zM256 734h3v2h-3zM532 657h2v3h-2zM43 204h2v1h-2zM278 36h4v1h-4zM21 769h3v3h-3zM6 486h1v3h-1zM394 97h3v2h-3zM410 141h2v1h-2zM606 97h2v2h-2zM52 306h1v1h-1zM295 669h2v1h-2zM806 457h1v2h-1zM662 312h3v1h-3zM329 263h2v2h-2zM812 240h1v2h-1zM41 679h4v2h-4zM243 579h2v1h-2zM194 247h3v2h-3zM64 207h3v2h-3zM324 769h1v1h-1zM35 338h4v2h-4zM735 495h3v2h-3zM55 338h4v3h-4zM403 764h3v1h-3zM447 179h3v1h-3zM505 221h2v1h-2zM388 191h2v1h-2zM273 30h1v3h-1zM193 262h2v1h-2zM570 714h3v3h-3zM18 192h2v1h-2zM745 258h3v2h-3zM757 66h1v3h-1zM207 565h4v1h-4zM654 101h3v3h-3zM267 765h1v1h-1zM434 253h4v3h-4zM323 285h4v1h-4zM422 549h4v1h-4zM668 147h3v2h-3zM90 694h2v1h-2zM18 692h1v1h-1zM92 60h3v3h-3zM634 169h4v3h-4zM181 122h4v1h-4zM145 335h3v2h-3zM765 210h1v2h-1zM430 507h3v2h-3zM696 423h3v1h-3zM725 488h3v1h-3zM265 379h1v3h-1zM162 45h2v3h-2zM299 444h2v1h-2zM204 634h1v1h-1zM722 473h1v2h-1zM33 220h2v2h-2zM604 196h2v1h-2zM490 535h2v1h-2zM625 541h2v1h-2zM93 250h2v1h-2zM411 308h2v2h-2zM478 662h4v1h-4zM3 133h4v2h-4zM718 229h3v3h-3zM647 139h3v2h-3zM559 348h1v2h-1zM768 47h1v2h-1zM306 395h2v3h-2zM380 158h3v2h-3zM646 741h3v1h-3zM680 75h3v2h-3zM67 468h1v1h-1zM550 659h2v2h-2zM307 597h3v2h-3zM804 512h3v2h-3zM567 693h2v1h-2zM461 224h3v2h-3zM31 236h2v2h-2zM348 197h1v2h-1zM615 428h2v2h-2zM268 639h2v1h-2zM795 468h2v2h-2zM95 443h2v2h-2zM511 98h2v1h-2zM399 413h3v1h-3zM630 290h2v2h-2zM814 316h3v2h-3zM265 379h2v2h-2zM527 28h4v1h-4zM452 317h2v1h-2zM609 644h3v2h-3zM657 146h1v1h-1zM715 155h1v1h-1zM504 375h1v2h-1zM98 224h3v2h-3zM681 111h2v1h-2zM237 108h2v1h-2zM225 258h2v3h-2zM713 329h1v2h-1zM650 137h1v2h-1zM805 423h4v2h-4zM374 190h2v2h-2zM759 552h2v2h-2zM551 500h4v3h-4zM792 31h1v3h-1zM620 713h3v1h-3zM416 238h3v2h-3zM775 263h3v1h-3zM732 87h3v3h-3zM799 221h4v1h-4zM468 123h2v1h-2zM375 501h3v1h-3zM237 24h3v3h-3zM482 37h3v1h-3zM730 117h2v1h-2zM808 409h1v1h-1zM99 108h4v1h-4zM368 355h1v1h-1zM217 675h2v3h-2zM508 682h3v2h-3zM173 554h4v1h-4zM248 553h2v3h-2zM39 311h3v1h-3zM126 299h3v1h-3zM537 157h3v2h-3zM602 482h3v2h-3zM281 48h1v1h-1zM603 174h2v2h-2zM813 255h3v1h-3zM710 484h3v1h-3zM66 250h3v2h-3zM528 246h3v2h-3zM38 326h4v1h-4zM505 128h3v2h-3zM31 280h3v2h-3zM809 279h3v1h-3zM662 72h4v1h-4zM689 75h2v1h-2zM68 121h1v2h-1zM368 122h2v3h-2zM59 231h3v1h-3zM182 256h3v1h-3zM437 542h1v2h-1zM306 207h3v2h-3zM790 625h3v2h-3zM570 687h4v1h-4zM646 570h1v2h-1zM592 33h3v2h-3zM7 531h4v3h-4zM748 697h3v2h-3zM596 648h2v2h-2zM198 294h2v3h-2zM778 66h2v2h-2zM724 23h1v3h-1zM492 45h1v1h-1zM457 236h1v2h-1zM477 511h3v1h-3zM704 731h2v2h-2zM16 605h2v1h-2zM717 46h1v3h-1zM146 261h1v1h-1zM680 483h1v1h-1zM775 388h4v1h-4zM418 283h2v1h-2zM642 52h3v3h-3zM636 254h3v1h-3zM708 483h3v1h-3zM137 363h2v1h-2zM225 342h3v1h-3zM162 440h2v3h-2zM155 121h2v3h-2zM124 100h4v2h-4zM650 180h2v2h-2zM296 63h2v2h-2zM457 411h1v2h-1zM210 176h3v2h-3zM574 34h1v2h-1zM182 388h2v3h-2zM480 31h3v2h-3zM62 400h3v1h-3zM167 214h1v3h-1zM71 482h1v1h-1zM15 46h1v1h-1zM342 333h3v1h-3zM568 668h4v3h-4zM17 170h2v1h-2zM253 50h4v1h-4zM507 72h1v1h-1zM4 74h2v1h-2zM189 467h4v3h-4zM255 483h4v1h-4zM351 224h2v3h-2zM198 25h3v2h-3zM534 136h3v2h-3zM508 767h3v1h-3zM60 373h2v1h-2zM245 529h2v2h-2zM83 517h2v1h-2zM707 159h4v2h-4zM154 117h2v2h-2zM331 222h3v2h-3zM786 361h3v1h-3zM19 558h3v2h-3zM531 611h3v1h-3zM157 71h4v2h-4zM692 350h1v1h-1zM610 741h4v2h-4zM161 392h1v2h-1zM26 187h3v2h-3zM194 688h3v2h-3zM149 45h3v1h-3zM470 115h3v3h-3zM103 122h2v2h-2zM573 570h1v1h-1zM791 171h2v3h-2zM616 695h3v2h-3zM666 99h3v3h-3zM555 374h3v1h-3zM132 574h3v1h-3zM634 349h2v3h-2zM118 365h2v2h-2zM148 199h1v3h-1zM729 410h3v2h-3zM627 452h3v1h-3zM114 44h3v3h-3zM767 467h2v1h-2zM807 23h3v2h-3zM5 684h2v1h-2zM357 137h2v3h-2zM712 185h4v3h-4zM8 171h2v1h-2zM123 121h2v2h-2zM717 225h3v2h-3zM54 275h4v1h-4zM523 119h3v3h-3zM140 658h4v1h-4zM368 506h1v3h-1zM338 205h2v1h-2zM672 397h2v2h-2zM504 464h3v3h-3zM550 82h3v2h-3zM285 72h4v3h-4zM349 89h2v2h-2zM528 277h1v1h-1zM69 722h3v1h-3zM469 189h3v1h-3zM290 457h3v3h-3zM429 57h2v2h-2zM716 76h2v1h-2zM759 133h3v3h-3zM223 286h3v1h-3zM156 52h2v3h-2zM351 252h2v2h-2zM383 567h4v3h-4zM60 224h2v2h-2zM10 354h2v1h-2zM746 58h3v2h-3zM12 186h3v2h-3zM103 415h3v1h-3zM501 330h4v2h-4zM433 153h1v2h-1zM32 54h2v2h-2zM344 707h3v2h-3zM200 367h4v1h-4zM121 483h4v3h-4zM337 123h2v3h-2zM70 758h3v1h-3zM313 662h3v3h-3zM635 200h3v1h-3zM274 480h2v2h-2zM800 82h3v2h-3zM30 292h3v3h-3zM726 514h3v2h-3zM740 387h2v1h-2zM96 178h3v2h-3zM714 128h3v2h-3zM353 176h3v1h-3zM571 325h2v2h-2zM809 243h2v1h-2zM387 220h1v3h-1zM641 182h3v3h-3zM733 76h1v2h-1zM520 690h3v2h-3zM356 371h2v2h-2zM740 274h3v2h-3zM603 109h3v1h-3zM351 494h3v1h-3zM776 278h2v1h-2zM170 137h4v3h-4zM439 640h3v2h-3zM500 627h3v2h-3zM702 641h1v3h-1zM443 21h1v3h-1zM775 74h3v1h-3zM475 143h3v1h-3zM620 70h2v1h-2zM189 240h3v3h-3zM553 335h1v2h-1zM724 178h1v2h-1zM643 225h4v2h-4zM457 50h2v1h-2zM73 233h2v1h-2zM480 534h2v3h-2zM308 65h2v1h-2zM510 501h3v1h-3zM417 441h3v1h-3zM229 167h2v1h-2zM220 232h2v2h-2zM247 85h3v2h-3zM326 208h3v2h-3zM810 349h3v1h-3zM177 207h4v1h-4zM224 310h2v1h-2zM696 162h3v1h-3zM602 690h2v2h-2zM643 317h2v3h-2zM696 477h4v3h-4zM314 322h2v2h-2zM91 431h2v2h-2zM790 148h3v2h-3zM478 471h3v3h-3zM143 332h4v3h-4zM805 741h4v1h-4zM768 306h3v2h-3zM428 175h1v1h-1zM691 575h2v2h-2zM354 270h2v1h-2zM49 713h3v1h-3zM231 70h2v3h-2zM428 162h1v3h-1zM596 453h1v3h-1zM458 24h2v1h-2zM320 265h3v1h-3zM354 94h1v1h-1zM302 519h3v3h-3zM228 159h1v1h-1zM64 652h1v1h-1zM27 111h4v3h-4zM593 369h2v1h-2zM658 353h1v1h-1zM32 259h3v2h-3zM622 391h2v3h-2zM718 581h2v2h-2zM376 511h2v2h-2zM482 85h2v1h-2zM293 538h2v2h-2zM181 267h3v1h-3zM188 546h3v2h-3zM799 348h3v2h-3zM582 408h1v2h-1zM809 261h1v3h-1zM226 248h3v2h-3zM390 276h2v3h-2zM114 164h3v2h-3zM648 634h3v2h-3zM694 304h2v2h-2zM482 424h3v3h-3zM345 364h2v2h-2zM571 776h2v3h-2zM321 189h1v3h-1zM329 444h3v1h-3zM552 490h4v2h-4zM219 174h2v2h-2zM673 329h1v1h-1zM776 279h3v1h-3zM220 384h4v3h-4zM574 447h3v2h-3zM615 666h1v1h-1zM655 342h2v2h-2zM769 675h4v3h-4zM445 40h3v3h-3zM538 532h2v1h-2zM219 150h2v2h-2zM308 292h3v2h-3zM197 480h3v2h-3zM725 618h3v2h-3zM390 305h2v1h-2zM28 325h1v2h-1zM733 26h2v3h-2zM601 648h4v1h-4zM496 137h2v2h-2zM62 289h3v2h-3zM58 509h2v1h-2zM510 72h2v3h-2zM454 285h3v1h-3zM337 112h2v2h-2zM447 680h1v1h-1zM277 146h3v2h-3zM369 502h3v3h-3zM610 147h3v1h-3zM595 494h3v1h-3zM737 290h2v1h-2zM173 324h4v2h-4zM638 218h1v2h-1zM468 648h3v3h-3zM250 327h2v2h-2zM706 207h2v2h-2zM206 106h4v2h-4zM714 159h3v3h-3zM771 774h3v1h-3zM197 454h1v2h-1zM140 194h2v1h-2zM740 564h3v1h-3zM529 768h3v1h-3zM356 211h1v2h-1zM136 385h2v1h-2zM30 311h2v2h-2zM94 24h2v2h-2zM454 420h3v1h-3zM47 156h2v2h-2zM554 106h1v1h-1zM574 421h3v2h-3zM394 102h4v1h-4zM572 653h2v3h-2zM147 254h1v1h-1zM713 324h4v2h-4zM76 118h1v3h-1zM538 554h3v1h-3zM187 319h3v2h-3zM734 761h1v1h-1zM39 640h1v1h-1zM407 139h4v1h-4zM474 493h4v3h-4zM140 482h1v2h-1zM5 118h2v1h-2zM543 204h2v2h-2zM677 213h2v2h-2zM499 48h1v2h-1zM135 79h4v1h-4zM792 243h1v1h-1zM264 163h3v2h-3zM580 370h1v1h-1zM192 513h2v2h-2zM8 552h2v1h-2zM462 25h3v2h-3zM759 170h3v3h-3zM446 348h2v3h-2zM119 501h3v3h-3zM38 167h4v3h-4zM651 705h3v1h-3zM180 322h3v3h-3zM235 349h1v3h-1zM48 392h3v1h-3zM543 410h3v2h-3zM24 447h4v1h-4zM778 124h2v1h-2zM455 206h2v2h-2zM747 358h3v2h-3zM192 664h3v3h-3zM714 508h3v2h-3zM742 274h2v1h-2zM222 677h3v2h-3zM593 285h3v1h-3zM752 38h2v1h-2zM93 115h1v3h-1zM111 225h4v3h-4zM282 105h1v3h-1zM482 686h3v2h-3zM760 264h3v1h-3zM36 775h2v1h-2zM354 394h3v1h-3zM40 266h4v1h-4zM552 187h3v3h-3zM534 375h4v2h-4zM67 227h2v3h-2zM793 695h3v1h-3zM60 694h1v2h-1zM441 326h3v2h-3zM399 619h3v1h-3zM74 725h4v2h-4zM582 648h4v2h-4zM151 624h2v2h-2zM399 742h1v1h-1zM723 253h2v1h-2zM628 177h3v3h-3zM711 104h4v3h-4zM418 174h3v1h-3zM502 71h3v1h-3zM753 46h4v1h-4zM308 355h3v2h-3zM232 100h3v1h-3zM495 187h4v1h-4zM675 243h2v3h-2zM180 106h4v2h-4zM656 218h3v2h-3zM703 92h4v2h-4zM308 342h4v2h-4zM695 601h4v3h-4zM671 333h3v3h-3zM350 169h4v2h-4zM59 547h1v1h-1zM319 94h3v1h-3zM523 174h3v1h-3zM58 68h3v2h-3zM84 765h1v2h-1zM533 705h3v2h-3zM406 621h1v1h-1zM306 656h3v1h-3zM526 489h3v2h-3zM683 511h2v2h-2zM574 603h3v1h-3zM176 447h3v3h-3zM559 412h3v3h-3zM601 32h4v1h-4zM479 467h1v2h-1zM134 54h4v3h-4zM472 593h2v2h-2zM448 673h2v3h-2zM382 518h3v2h-3zM559 172h1v2h-1zM456 184h2v2h-2zM14 223h3v3h-3zM142 243h4v1h-4zM564 98h3v1h-3zM293 32h3v1h-3zM603 272h3v1h-3zM264 42h3v2h-3zM356 28h2v1h-2zM759 756h2v1h-2zM347 417h1v2h-1zM127 688h3v3h-3zM299 696h2v1h-2zM140 310h3v1h-3zM220 174h3v1h-3zM524 120h3v3h-3zM346 23h2v2h-2zM654 563h3v3h-3zM749 241h3v2h-3zM62 187h4v2h-4zM73 438h3v1h-3zM599 23h3v2h-3zM240 690h2v3h-2zM692 245h3v2h-3zM43 88h2v2h-2zM107 635h3v1h-3zM465 495h2v1h-2zM392 304h1v1h-1zM305 320h2v2h-2zM138 737h2v1h-2zM92 581h3v1h-3zM150 261h4v2h-4zM770 436h2v3h-2zM190 498h3v3h-3zM473 716h3v2h-3zM184 90h1v1h-1zM87 111h2v2h-2zM444 215h1v1h-1zM66 542h4v1h-4zM572 269h3v2h-3zM696 543h2v2h-2zM651 365h2v1h-2zM173 95h4v1h-4zM550 200h2v1h-2zM550 583h4v1h-4zM466 698h4v3h-4zM57 357h3v1h-3zM567 74h2v1h-2zM244 91h4v1h-4zM223 556h2v1h-2zM291 687h2v2h-2zM556 278h1v3h-1zM790 563h4v2h-4zM388 150h2v3h-2zM215 360h1v2h-1zM756 92h3v2h-3zM463 154h1v2h-1zM350 670h1v3h-1zM400 315h4v3h-4zM709 492h3v2h-3zM119 700h3v1h-3zM314 47h3v1h-3zM703 315h3v3h-3zM76 508h2v2h-2zM530 220h2v3h-2zM562 581h4v1h-4zM192 58h4v1h-4zM541 274h2v2h-2zM82 549h3v2h-3zM729 254h3v2h-3zM654 61h1v3h-1zM28 312h3v2h-3zM184 73h3v1h-3zM485 252h4v2h-4zM326 459h2v3h-2zM27 296h4v3h-4zM592 496h1v2h-1zM411 597h2v2h-2zM554 160h2v1h-2zM556 721h1v1h-1zM476 52h3v2h-3zM639 640h3v2h-3zM588 121h4v2h-4zM677 478h3v1h-3zM176 737h3v2h-3zM691 484h1v1h-1zM242 348h1v1h-1zM682 626h2v1h-2zM632 746h3v1h-3zM688 78h2v2h-2zM331 548h2v2h-2zM152 584h4v3h-4zM145 58h3v2h-3zM722 161h3v2h-3zM795 328h1v2h-1zM637 75h1v2h-1zM766 350h2v2h-2zM660 693h3v1h-3zM21 700h3v1h-3zM92 103h2v1h-2zM632 550h3v1h-3zM473 300h1v1h-1zM322 275h3v1h-3zM462 186h2v1h-2zM393 410h3v3h-3zM739 378h2v3h-2zM105 655h3v1h-3zM377 113h2v2h-2zM793 449h3v1h-3zM49 385h3v2h-3zM618 500h3v1h-3zM528 225h4v3h-4zM627 371h2v1h-2zM412 568h3v2h-3zM61 196h4v2h-4zM787 461h3v1h-3zM389 485h4v2h-4zM258 517h3v1h-3zM91 448h2v3h-2zM101 729h4v2h-4zM109 472h3v1h-3zM179 733h3v1h-3zM667 754h3v2h-3zM160 86h3v1h-3zM723 477h2v2h-2zM149 475h1v2h-1zM601 516h2v2h-2zM745 477h2v2h-2zM279 78h2v1h-2zM549 337h3v2h-3zM539 411h3v1h-3zM704 678h3v3h-3zM656 303h1v3h-1zM523 629h3v1h-3zM383 654h3v1h-3zM500 379h2v2h-2zM179 435h3v1h-3zM159 92h3v1h-3zM457 495h2v2h-2zM668 198h2v3h-2zM56 273h4v3h-4zM30 228h2v1h-2zM173 232h3v2h-3zM283 541h1v1h-1zM743 482h4v3h-4zM66 379h2v2h-2zM363 123h2v3h-2zM403 87h3v1h-3zM403 406h1v1h-1zM430 291h1v1h-1zM309 367h2v1h-2zM436 214h1v2h-1zM243 298h2v1h-2zM282 743h4v2h-4zM22 680h2v2h-2zM6 424h1v2h-1zM701 412h2v2h-2zM229 264h3v3h-3zM600 299h3v2h-3zM689 449h3v2h-3zM708 256h2v1h-2zM541 323h2v1h-2zM656 240h3v1h-3zM92 49h1v3h-1zM687 547h2v2h-2zM301 596h3v1h-3zM95 339h4v3h-4zM200 736h2v1h-2zM311 257h2v1h-2zM653 331h1v2h-1zM157 432h2v1h-2zM438 372h3v2h-3zM52 394h3v1h-3zM338 585h4v1h-4zM18 50h2v1h-2zM651 739h4v2h-4zM605 311h1v1h-1zM237 347h2v2h-2zM782 32h3v1h-3zM769 476h2v2h-2zM317 177h1v3h-1zM44 690h3v3h-3zM119 303h2v2h-2zM527 363h1v1h-1zM216 174h2v1h-2zM480 521h3v2h-3zM69 572h1v1h-1zM215 165h3v1h-3zM178 672h3v2h-3zM411 743h1v2h-1zM778 307h4v2h-4zM719 216h2v2h-2zM743 50h2v2h-2zM118 490h2v2h-2zM714 600h4v1h-4zM730 652h2v1h-2zM447 21h4v1h-4zM410 50h3v2h-3zM738 25h1v3h-1zM706 264h2v2h-2zM505 214h2v2h-2zM520 576h1v2h-1zM416 634h3v3h-3zM707 86h3v2h-3zM265 650h4v1h-4zM630 491h3v3h-3zM811 426h2v1h-2zM233 475h2v1h-2zM426 163h2v2h-2zM203 519h1v2h-1zM364 31h3v1h-3zM227 79h4v3h-4zM197 333h2v1h-2zM448 405h2v2h-2zM520 280h3v2h-3zM667 316h3v3h-3zM665 114h3v1h-3zM720 94h3v2h-3zM482 662h1v2h-1zM87 174h2v1h-2zM803 410h2v1h-2zM350 221h2v2h-2zM561 729h3v2h-3zM301 231h2v3h-2zM5 479h3v1h-3zM169 527h1v1h-1zM635 765h3v2h-3zM125 92h2v1h-2zM15 205h2v2h-2zM810 353h1v3h-1zM355 723h4v3h-4zM157 175h2v3h-2zM71 86h3v3h-3zM668 24h3v2h-3zM225 388h3v3h-3zM468 103h1v3h-1zM654 758h3v1h-3zM212 280h4v2h-4zM404 392h3v1h-3zM613 690h3v2h-3zM459 125h3v3h-3zM600 290h2v1h-2zM519 94h1v1h-1zM167 520h1v2h-1zM549 91h3v2h-3zM538 35h1v2h-1zM469 217h3v1h-3zM456 248h3v3h-3zM218 711h3v3h-3zM518 169h2v3h-2zM155 98h1v3h-1zM300 556h3v2h-3zM194 753h3v1h-3zM53 315h2v2h-2zM61 502h3v2h-3zM135 52h3v2h-3zM153 201h4v3h-4zM803 45h4v3h-4zM408 334h3v3h-3zM209 425h4v3h-4zM117 553h2v2h-2zM431 232h4v1h-4zM716 294h2v2h-2zM589 610h4v3h-4zM543 284h1v2h-1zM693 655h3v1h-3zM404 500h2v2h-2zM394 535h2v3h-2zM598 744h4v1h-4zM99 577h2v3h-2zM581 740h1v2h-1zM745 692h4v2h-4zM616 223h3v2h-3zM11 731h2v1h-2zM527 135h1v1h-1zM666 33h4v3h-4zM138 192h3v1h-3zM707 602h3v1h-3zM198 431h3v3h-3zM794 100h3v2h-3zM483 389h2v1h-2zM396 400h2v2h-2zM448 246h2v2h-2zM246 433h2v2h-2zM749 308h3v1h-3zM375 234h4v2h-4zM488 395h1v3h-1zM280 209h2v3h-2zM624 47h4v3h-4zM650 205h1v2h-1zM345 199h3v1h-3zM720 78h2v2h-2zM525 280h1v2h-1zM627 282h3v3h-3zM327 511h1v2h-1zM170 342h4v2h-4zM497 121h3v2h-3zM439 565h2v1h-2zM578 225h4v1h-4zM351 300h2v2h-2zM224 326h2v1h-2zM807 587h2v2h-2zM140 513h2v2h-2zM78 213h2v3h-2zM476 402h2v1h-2zM676 246h1v2h-1zM370 322h2v3h-2zM639 225h3v1h-3zM293 42h2v2h-2zM310 527h3v2h-3zM69 203h1v2h-1zM578 84h2v2h-2zM358 73h4v2h-4zM126 113h3v3h-3zM418 30h3v1h-3zM356 774h2v2h-2zM457 317h2v2h-2zM129 272h4v3h-4zM641 438h4v1h-4zM507 132h4v2h-4zM431 78h2v2h-2zM737 719h2v1h-2zM83 502h4v1h-4zM791 371h1v3h-1zM735 373h2v1h-2zM616 101h2v2h-2zM473 356h3v2h-3zM461 275h3v1h-3zM5 86h2v2h-2zM122 284h3v2h-3zM112 164h2v2h-2zM666 19h3v1h-3zM290 75h4v1h-4zM502 414h2v3h-2zM614 209h2v2h-2zM313 132h3v3h-3zM701 34h3v1h-3zM608 200h2v2h-2zM383 137h3v1h-3zM801 103h1v1h-1zM96 519h2v2h-2zM178 427h1v2h-1zM66 563h3v1h-3zM498 244h1v2h-1zM643 665h2v3h-2zM642 552h1v1h-1zM658 777h1v1h-1zM760 479h2v3h-2zM667 259h4v1h-4zM618 307h1v2h-1zM13 272h3v1h-3zM118 744h3v3h-3zM699 207h2v3h-2zM139 391h1v1h-1zM449 724h2v2h-2zM660 31h3v3h-3zM194 225h2v2h-2zM736 219h2v2h-2zM109 245h3v2h-3zM289 138h2v3h-2zM49 248h3v1h-3zM298 576h1v3h-1zM608 150h2v3h-2zM646 512h2v2h-2zM668 352h4v1h-4zM43 554h3v1h-3zM179 151h3v2h-3zM190 117h4v2h-4zM149 326h1v2h-1zM780 358h2v3h-2zM673 473h2v1h-2zM252 634h1v1h-1zM5 311h1v1h-1zM286 70h2v1h-2zM283 299h4v1h-4zM66 251h2v2h-2zM219 717h3v2h-3zM389 378h1v2h-1zM381 175h1v2h-1zM105 336h3v1h-3zM623 498h3v3h-3zM713 572h4v2h-4zM320 152h4v1h-4zM392 166h3v2h-3zM638 203h4v2h-4zM352 510h2v1h-2zM610 399h2v2h-2zM217 699h2v2h-2zM138 231h4v2h-4zM629 216h2v1h-2zM556 55h1v3h-1zM311 54h2v2h-2zM413 324h3v2h-3zM469 260h3v1h-3zM235 225h4v1h-4zM324 136h2v3h-2zM559 298h4v2h-4zM232 23h3v2h-3zM11 635h3v3h-3zM267 437h4v2h-4zM131 192h3v2h-3zM413 436h2v3h-2zM551 509h1v1h-1zM249 630h3v1h-3zM142 464h3v2h-3zM482 104h2v3h-2zM486 224h3v3h-3zM452 210h2v1h-2zM73 293h1v2h-1zM287 324h2v1h-2zM150 656h4v2h-4zM125 106h2v1h-2zM291 240h4v2h-4zM596 357h2v1h-2zM189 768h2v2h-2zM308 225h2v1h-2zM254 225h3v1h-3zM46 189h3v2h-3zM374 242h2v1h-2zM325 480h3v1h-3zM147 467h3v1h-3zM209 594h4v2h-4zM588 131h3v1h-3zM160 588h1v1h-1zM543 776h2v2h-2zM332 52h3v2h-3zM36 67h2v3h-2zM757 170h1v1h-1zM730 193h4v1h-4zM297 522h1v3h-1zM173 528h2v2h-2zM415 374h3v2h-3zM335 737h1v1h-1zM242 687h2v1h-2zM447 491h3v1h-3zM446 35h3v3h-3zM221 125h3v1h-3zM618 243h3v2h-3zM516 654h2v1h-2zM683 349h2v1h-2zM617 481h2v2h-2zM74 178h2v2h-2zM292 577h2v3h-2zM264 235h2v2h-2zM104 404h3v1h-3zM475 439h3v2h-3zM511 525h1v1h-1zM200 88h3v2h-3zM28 569h3v1h-3zM28 78h4v2h-4zM35 630h4v2h-4zM280 205h4v2h-4zM436 204h3v1h-3zM516 710h3v2h-3zM192 468h3v2h-3zM612 720h4v2h-4zM437 221h4v2h-4zM209 223h2v1h-2zM606 335h1v2h-1zM471 512h4v1h-4zM291 446h3v2h-3zM752 542h2v2h-2zM178 228h3v1h-3zM746 622h2v2h-2zM88 140h2v3h-2zM505 345h4v2h-4zM538 104h2v1h-2zM111 368h2v3h-2zM551 222h1v1h-1zM682 303h1v2h-1zM570 232h3v2h-3zM99 464h1v1h-1zM643 45h1v3h-1zM31 511h3v1h-3zM169 521h3v2h-3zM715 721h2v1h-2zM611 540h2v1h-2zM188 375h3v1h-3zM470 369h1v2h-1zM531 273h1v3h-1zM600 493h3v1h-3zM681 51h4v1h-4zM602 146h3v2h-3zM151 466h1v3h-1zM773 529h4v2h-4zM323 372h4v3h-4zM221 197h3v1h-3zM234 455h2v2h-2zM406 438h2v2h-2zM430 216h2v2h-2zM732 252h2v1h-2zM382 617h3v3h-3zM813 145h2v1h-2zM452 253h3v1h-3zM749 220h2v1h-2zM582 179h2v2h-2zM141 130h2v3h-2zM325 598h2v1h-2zM357 106h2v1h-2zM677 148h3v1h-3zM155 299h3v1h-3zM219 653h4v2h-4zM555 138h3v1h-3zM353 396h2v2h-2zM789 154h3v1h-3zM389 22h4v2h-4zM140 374h3v2h-3zM220 723h4v1h-4zM105 102h2v3h-2zM780 626h2v1h-2zM448 83h2v3h-2zM751 502h4v2h-4zM562 135h3v2h-3zM550 715h4v2h-4zM12 299h1v1h-1zM472 613h3v2h-3zM179 295h4v1h-4zM598 690h3v1h-3zM343 320h3v2h-3zM27 180h4v1h-4zM453 707h2v3h-2zM319 664h3v1h-3zM550 533h2v2h-2zM309 541h3v3h-3zM543 274h4v1h-4zM544 167h4v1h-4zM33 455h1v3h-1zM22 692h4v3h-4zM126 42h1v2h-1zM470 201h2v3h-2zM307 108h4v1h-4zM149 377h2v2h-2zM242 168h2v1h-2zM325 441h3v2h-3zM414 447h3v3h-3zM493 264h3v2h-3zM302 132h2v2h-2zM742 51h4v2h-4zM583 171h3v2h-3zM497 80h2v2h-2zM83 306h2v2h-2zM555 279h2v3h-2zM700 208h4v2h-4zM477 194h3v2h-3zM456 265h2v1h-2zM740 91h1v2h-1zM553 385h3v1h-3zM620 89h2v1h-2zM400 100h3v1h-3zM574 213h4v2h-4zM44 50h2v2h-2zM151 650h1v1h-1zM649 275h4v1h-4zM276 256h3v2h-3zM448 245h2v1h-2zM746 148h3v3h-3zM776 449h1v1h-1zM62 378h3v1h-3zM203 60h2v1h-2zM383 146h3v2h-3zM485 42h3v2h-3zM517 630h3v1h-3zM312 529h2v2h-2zM688 104h3v1h-3zM672 555h3v2h-3zM28 113h2v2h-2zM229 287h1v2h-1zM636 134h3v2h-3zM309 295h3v2h-3zM251 100h2v2h-2zM184 672h4v2h-4zM67 224h3v1h-3zM64 374h2v1h-2zM401 353h4v3h-4zM403 376h3v2h-3zM414 354h3v1h-3zM449 54h3v1h-3zM161 186h3v1h-3zM672 255h4v1h-4zM361 718h2v3h-2zM629 195h3v1h-3zM566 325h4v1h-4zM298 601h3v1h-3zM368 31h4v2h-4zM580 505h3v3h-3zM259 84h1v3h-1zM651 48h2v1h-2zM354 27h1v2h-1zM74 137h2v1h-2zM410 291h3v1h-3zM77 596h2v1h-2zM653 146h4v2h-4zM705 439h2v2h-2zM529 493h2v3h-2zM9 213h2v2h-2zM635 551h3v3h-3zM452 747h2v1h-2zM242 148h2v3h-2zM289 529h2v2h-2zM343 585h1v1h-1zM270 665h2v1h-2zM342 265h4v3h-4zM486 410h2v1h-2zM727 773h2v1h-2zM400 340h2v2h-2zM333 478h2v1h-2zM23 207h2v2h-2zM468 581h3v1h-3zM361 221h1v1h-1zM601 57h4v3h-4zM332 598h2v2h-2zM335 78h2v3h-2zM562 62h3v1h-3zM437 148h3v1h-3zM472 153h1v2h-1zM627 371h4v2h-4zM587 227h1v1h-1zM559 345h3v1h-3zM699 188h2v3h-2zM794 176h4v1h-4zM85 491h2v2h-2zM698 640h1v2h-1zM6 68h4v1h-4zM438 698h2v1h-2zM637 636h1v1h-1zM52 21h2v2h-2zM127 439h3v1h-3zM536 494h3v2h-3zM541 606h2v3h-2zM36 343h3v1h-3zM7 645h3v2h-3zM679 294h2v1h-2zM287 361h2v2h-2zM371 154h3v2h-3zM209 243h4v2h-4zM72 253h2v2h-2zM315 393h3v1h-3zM302 187h3v1h-3zM612 575h2v1h-2zM327 250h3v2h-3zM799 420h3v2h-3zM458 341h1v1h-1zM789 639h3v1h-3zM522 281h3v3h-3zM61 395h2v1h-2zM180 231h2v2h-2zM471 159h4v2h-4zM271 692h1v3h-1zM18 650h2v1h-2zM725 231h2v2h-2zM147 338h3v2h-3zM560 378h4v3h-4zM345 83h2v2h-2zM106 391h2v2h-2zM607 309h2v2h-2zM84 41h3v1h-3zM379 111h4v3h-4zM206 360h2v2h-2zM331 201h2v2h-2zM693 185h4v3h-4zM524 247h2v2h-2zM456 246h3v3h-3zM771 318h3v3h-3zM451 138h2v2h-2zM697 22h1v3h-1zM315 331h3v2h-3zM681 323h3v2h-3zM550 110h2v2h-2zM728 180h2v1h-2zM403 507h3v2h-3zM667 570h3v2h-3zM312 294h2v2h-2zM179 122h3v2h-3zM112 167h3v2h-3zM650 223h3v1h-3zM542 461h4v1h-4zM563 146h1v2h-1zM766 697h3v1h-3zM690 108h2v1h-2zM732 466h2v1h-2zM633 110h3v3h-3zM772 571h1v1h-1zM237 172h3v2h-3zM80 25h4v2h-4zM243 100h2v3h-2zM89 330h2v2h-2zM138 208h1v1h-1zM812 192h3v1h-3zM494 391h2v2h-2zM333 511h1v3h-1zM183 347h1v1h-1zM245 498h3v1h-3zM325 752h1v1h-1zM365 268h3v1h-3zM673 312h2v1h-2zM28 536h4v2h-4zM336 744h2v1h-2zM185 683h1v2h-1zM387 296h2v2h-2zM424 509h1v3h-1zM679 662h1v2h-1zM474 61h3v2h-3zM236 738h2v3h-2zM525 369h1v1h-1zM546 297h3v1h-3zM642 229h3v2h-3zM440 72h2v1h-2zM272 734h3v2h-3zM358 214h3v3h-3zM489 319h4v2h-4zM798 516h1v1h-1zM499 597h3v2h-3zM35 461h2v3h-2zM696 617h4v2h-4zM752 724h3v2h-3zM595 257h3v1h-3zM530 378h2v2h-2zM639 252h1v2h-1zM143 650h3v2h-3zM268 141h2v1h-2zM87 566h2v2h-2zM322 235h4v1h-4zM256 429h3v2h-3zM198 79h2v3h-2zM496 362h3v1h-3zM734 173h2v3h-2zM106 478h1v1h-1zM40 484h3v3h-3zM62 49h1v2h-1zM780 474h2v1h-2zM590 557h1v1h-1zM810 732h3v2h-3zM282 67h4v1h-4zM767 300h2v1h-2zM403 281h1v2h-1zM649 157h2v2h-2zM528 620h3v1h-3zM139 710h3v1h-3zM703 720h1v1h-1zM577 644h3v3h-3zM728 229h4v2h-4zM437 316h1v2h-1zM158 529h3v1h-3zM466 252h2v1h-2zM74 92h4v1h-4zM54 245h2v2h-2zM429 354h2v2h-2zM749 533h1v1h-1zM722 347h2v1h-2zM97 185h4v1h-4zM658 138h4v3h-4zM117 496h1v3h-1zM362 600h3v2h-3zM573 555h2v1h-2zM438 26h2v2h-2zM390 524h2v2h-2zM637 140h3v1h-3zM494 544h1v1h-1zM744 144h2v3h-2zM238 558h2v1h-2zM740 737h3v3h-3zM654 45h3v3h-3zM194 473h2v2h-2zM591 71h3v3h-3zM573 741h1v2h-1zM360 513h3v1h-3zM574 157h3v2h-3zM251 25h3v3h-3zM279 453h2v1h-2zM625 458h4v2h-4zM226 328h3v1h-3zM44 105h3v1h-3zM263 242h3v2h-3z"/><path fill="#121274" d="M582 145h2v3h-2zM593 618h3v1h-3zM721 336h4v3h-4zM428 386h4v2h-4zM89 761h2v1h-2zM127 483h1v2h-1zM405 537h2v1h-2zM45 155h4v2h-4zM519 88h2v2h-2zM289 101h2v2h-2zM634 63h2v2h-2zM307 22h4v3h-4zM216 117h3v2h-3zM409 110h3v3h-3zM596 724h1v2h-1zM489 181h2v1h-2zM211 133h1v1h-1zM292 68h4v2h-4zM359 183h2v2h-2zM107 219h3v1h-3zM338 29h3v2h-3zM423 778h3v1h-3zM114 248h2v2h-2zM397 77h1v3h-1zM573 78h3v2h-3zM479 402h3v2h-3zM518 297h3v2h-3zM733 325h2v3h-2zM12 719h4v1h-4zM147 604h2v2h-2zM581 257h4v1h-4zM470 513h1v1h-1zM296 141h2v1h-2zM240 109h2v2h-2zM625 267h2v1h-2zM681 130h1v3h-1zM183 49h2v2h-2zM602 640h4v1h-4zM356 107h3v2h-3zM662 311h4v3h-4zM509 452h3v1h-3zM705 420h3v1h-3zM384 61h1v3h-1zM605 275h3v2h-3zM580 404h3v2h-3zM18 289h2v1h-2zM328 571h3v2h-3zM263 729h3v2h-3zM476 736h3v2h-3zM197 549h1v1h-1zM479 116h2v1h-2zM484 296h2v3h-2zM36 613h3v1h-3zM355 162h2v1h-2zM705 358h4v1h-4zM191 418h2v2h-2zM12 19h2v1h-2zM641 358h3v2h-3zM373 331h4v2h-4zM560 45h3v3h-3zM604 323h3v2h-3zM486 292h1v1h-1zM583 331h2v3h-2zM675 40h2v2h-2zM249 243h4v1h-4zM756 231h4v2h-4zM444 75h2v3h-2zM314 340h3v1h-3zM806 486h2v1h-2zM680 247h2v2h-2zM335 257h3v1h-3zM215 574h3v2h-3zM652 273h4v3h-4zM337 252h2v2h-2zM293 131h2v1h-2zM658 430h2v2h-2zM27 753h2v2h-2zM559 363h3v1h-3zM728 202h3v1h-3zM691 221h2v1h-2zM287 398h2v3h-2zM328 429h4v2h-4zM100 395h3v1h-3zM146 529h3v2h-3zM622 213h2v2h-2zM441 391h4v1h-4zM420 108h3v2h-3zM46 381h1v2h-1zM328 591h3v2h-3zM366 541h3v3h-3zM372 438h1v2h-1zM281 469h3v2h-3zM246 236h3v2h-3zM110 285h4v2h-4zM721 375h3v2h-3zM322 446h1v3h-1zM408 211h3v1h-3zM549 65h4v2h-4zM75 178h3v1h-3zM615 207h4v1h-4zM426 295h4v2h-4zM440 275h1v3h-1zM744 62h2v2h-2zM438 211h4v1h-4zM90 263h1v2h-1zM431 204h1v1h-1zM355 587h2v2h-2zM780 331h3v2h-3zM214 159h2v2h-2zM768 462h2v1h-2zM282 643h1v1h-1zM67 491h3v2h-3zM263 375h1v1h-1zM762 488h3v1h-3zM297 582h1v3h-1zM360 37h1v1h-1zM535 26h2v2h-2zM128 532h3v3h-3zM715 233h3v3h-3zM92 243h1v3h-1zM662 159h3v3h-3zM119 160h2v3h-2zM447 493h3v2h-3zM730 66h4v1h-4zM394 59h2v3h-2zM689 81h2v1h-2zM803 223h2v2h-2zM82 611h2v2h-2zM63 436h2v1h-2zM144 51h3v1h-3zM635 103h4v2h-4zM555 655h2v1h-2zM731 133h4v2h-4zM681 524h1v1h-1zM167 30h2v2h-2zM335 88h2v3h-2zM220 211h2v1h-2zM811 108h2v1h-2zM94 324h1v1h-1zM121 154h2v1h-2zM331 522h2v2h-2zM461 230h4v2h-4zM688 277h2v3h-2zM285 177h2v2h-2zM461 36h2v1h-2zM73 271h4v2h-4zM484 337h4v1h-4zM533 84h3v1h-3zM660 531h3v1h-3zM294 631h4v1h-4zM705 500h3v2h-3zM609 76h1v2h-1zM7 173h3v1h-3zM293 391h3v1h-3zM501 406h2v2h-2zM473 336h3v3h-3zM459 295h2v3h-2zM399 312h2v2h-2zM685 264h2v1h-2zM422 137h1v3h-1zM482 112h1v1h-1zM107 288h4v1h-4zM314 462h2v1h-2zM578 606h1v1h-1zM127 257h4v1h-4zM502 132h1v1h-1zM227 674h3v1h-3zM527 314h3v2h-3zM91 260h1v2h-1zM27 169h2v2h-2zM260 320h3v1h-3zM191 30h2v2h-2zM138 544h4v3h-4zM511 103h1v1h-1zM63 480h2v3h-2zM404 176h4v1h-4zM105 675h1v1h-1zM110 162h4v1h-4zM161 21h4v2h-4zM494 524h3v1h-3zM426 357h3v1h-3zM479 297h3v1h-3zM186 632h2v1h-2zM160 197h1v1h-1zM344 215h2v3h-2zM477 66h2v2h-2zM503 180h4v2h-4zM341 147h2v2h-2zM5 78h4v1h-4zM574 454h2v3h-2zM594 398h2v2h-2zM620 97h3v3h-3zM144 427h1v2h-1zM554 262h2v3h-2zM361 113h3v3h-3zM41 362h2v1h-2zM359 83h3v2h-3zM156 566h2v2h-2zM204 750h3v2h-3zM193 326h3v2h-3zM551 214h3v1h-3zM532 226h3v1h-3zM761 215h3v2h-3zM152 104h2v1h-2zM652 70h2v2h-2zM208 83h2v1h-2zM94 51h3v2h-3zM446 704h2v2h-2zM612 244h3v3h-3zM131 212h3v1h-3zM671 143h4v1h-4zM389 99h3v3h-3zM691 417h1v2h-1zM241 775h1v1h-1zM730 287h1v3h-1zM331 308h3v1h-3zM203 142h3v3h-3zM97 225h1v3h-1zM537 247h2v1h-2zM27 286h3v2h-3zM747 114h4v1h-4zM288 59h2v3h-2zM793 156h4v2h-4zM66 448h3v3h-3zM174 152h3v2h-3zM621 169h3v1h-3zM549 399h2v1h-2zM47 624h2v1h-2zM790 371h3v3h-3zM494 286h2v1h-2zM532 368h1v2h-1zM207 182h3v2h-3zM743 500h4v1h-4zM771 337h2v1h-2zM200 68h4v1h-4zM677 147h3v1h-3zM288 240h2v1h-2zM646 183h2v1h-2zM525 482h2v2h-2zM757 101h3v3h-3zM664 388h4v2h-4zM810 692h1v1h-1zM255 757h1v1h-1zM110 657h3v2h-3zM84 46h3v2h-3zM315 31h2v2h-2zM482 37h1v1h-1zM179 22h3v1h-3zM786 407h2v1h-2zM28 307h1v1h-1zM573 389h1v2h-1zM510 569h1v1h-1zM314 592h2v2h-2zM553 139h2v2h-2zM549 32h4v3h-4zM505 463h2v1h-2zM689 366h2v3h-2zM501 322h3v1h-3zM532 713h2v1h-2zM731 466h2v1h-2zM334 27h2v2h-2zM686 429h3v2h-3zM476 382h3v1h-3zM625 143h2v3h-2zM551 173h1v3h-1zM171 161h3v3h-3zM496 738h2v3h-2zM16 335h4v2h-4zM373 610h2v1h-2zM602 194h3v2h-3zM437 63h3v2h-3zM45 688h2v2h-2zM730 206h2v2h-2zM290 489h4v2h-4zM671 727h1v3h-1zM119 219h1v2h-1zM769 342h3v1h-3zM692 210h2v3h-2zM205 225h2v1h-2zM496 375h3v3h-3zM614 125h2v2h-2zM92 276h2v1h-2zM14 181h3v2h-3zM668 182h3v1h-3zM87 440h3v2h-3zM550 266h3v3h-3zM761 615h3v3h-3zM337 630h1v1h-1zM407 132h4v2h-4zM609 94h2v2h-2zM75 348h1v3h-1zM726 408h3v2h-3zM550 185h1v3h-1zM444 20h3v2h-3zM698 276h1v2h-1zM545 88h2v2h-2zM609 358h2v1h-2zM657 268h4v3h-4zM485 352h3v3h-3zM505 148h1v1h-1zM458 442h4v2h-4zM777 106h2v2h-2zM589 357h3v3h-3zM599 630h1v2h-1zM216 742h1v1h-1zM114 267h3v2h-3zM358 46h3v2h-3zM770 392h3v1h-3zM78 28h3v2h-3zM644 229h3v1h-3zM163 643h4v3h-4zM32 164h3v1h-3zM625 509h2v2h-2zM121 437h4v1h-4zM731 167h2v2h-2zM465 74h3v2h-3zM609 58h2v1h-2zM792 564h1v1h-1zM419 276h1v1h-1zM26 485h2v1h-2zM71 448h4v1h-4zM794 617h1v3h-1zM162 696h1v1h-1zM376 159h4v3h-4zM11 164h2v2h-2zM511 129h3v2h-3zM166 299h4v1h-4zM165 325h1v1h-1zM494 251h1v1h-1zM566 308h1v2h-1zM365 30h2v1h-2zM344 85h2v1h-2zM461 648h2v1h-2zM165 235h2v3h-2zM474 595h2v3h-2zM374 339h4v2h-4zM202 89h2v2h-2zM413 717h2v1h-2zM481 534h4v3h-4zM260 92h2v3h-2zM626 162h3v2h-3zM169 571h2v1h-2zM431 78h2v1h-2zM665 263h4v1h-4zM752 374h1v3h-1zM326 652h2v1h-2zM671 268h3v2h-3zM676 238h3v3h-3zM344 340h3v2h-3zM345 475h3v2h-3zM491 63h3v1h-3zM540 37h3v2h-3zM779 85h4v1h-4zM70 51h1v2h-1zM589 155h3v2h-3zM92 142h4v3h-4zM671 166h2v2h-2zM100 447h1v1h-1zM563 404h3v3h-3zM612 226h2v1h-2zM379 349h2v3h-2zM430 587h3v1h-3zM142 539h3v1h-3zM338 143h1v3h-1zM92 269h3v1h-3zM577 227h4v2h-4zM669 151h2v3h-2zM699 256h3v2h-3zM604 665h4v2h-4zM558 465h3v1h-3zM596 84h2v1h-2zM710 297h4v1h-4zM529 109h2v2h-2zM558 364h4v1h-4zM585 698h2v1h-2zM109 381h4v1h-4zM582 271h4v1h-4zM783 49h3v2h-3zM535 270h3v2h-3zM466 161h3v1h-3zM392 187h2v1h-2zM578 114h1v1h-1zM357 586h2v2h-2zM703 93h4v2h-4zM390 187h1v3h-1zM105 546h4v2h-4zM29 534h3v3h-3zM296 465h2v2h-2zM425 329h2v2h-2zM87 734h1v1h-1zM164 223h4v2h-4zM330 565h2v3h-2zM85 250h4v3h-4zM191 236h1v1h-1zM339 270h4v1h-4zM774 578h2v2h-2zM674 156h1v3h-1zM211 98h4v1h-4zM295 168h3v1h-3zM123 357h1v1h-1zM16 246h3v2h-3zM170 253h2v2h-2zM658 375h3v2h-3zM270 681h3v1h-3zM64 76h4v3h-4zM139 49h4v2h-4zM161 590h4v1h-4zM385 29h2v1h-2zM541 168h2v2h-2zM543 681h3v2h-3zM218 228h2v1h-2zM656 468h2v3h-2zM478 89h1v2h-1zM11 308h2v1h-2zM414 43h3v1h-3zM493 117h2v1h-2zM550 360h1v3h-1zM715 272h4v1h-4zM86 120h2v2h-2zM718 148h2v2h-2zM701 24h3v2h-3zM291 265h1v2h-1zM174 115h4v2h-4zM215 463h1v2h-1zM486 534h2v2h-2zM545 54h3v2h-3zM507 297h2v3h-2zM627 107h4v2h-4zM198 722h3v2h-3zM349 512h3v2h-3zM188 508h4v1h-4zM709 723h3v2h-3zM319 650h2v1h-2zM72 199h2v1h-2zM765 190h1v3h-1zM707 38h1v3h-1zM298 30h1v1h-1zM535 19h2v3h-2zM273 201h4v2h-4zM79 98h4v3h-4zM98 453h2v2h-2zM677 286h3v1h-3zM242 542h2v3h-2zM566 481h1v2h-1zM716 49h4v3h-4zM94 597h2v1h-2zM123 169h2v1h-2zM442 337h3v3h-3zM310 125h2v2h-2zM121 581h2v1h-2zM700 97h4v1h-4zM447 49h1v2h-1zM241 71h2v1h-2zM500 510h3v2h-3zM646 160h2v2h-2zM147 86h3v2h-3zM364 480h1v2h-1zM170 716h2v1h-2zM503 168h2v1h-2zM271 155h1v1h-1zM601 619h3v2h-3zM599 109h2v1h-2zM260 90h2v2h-2zM661 227h3v2h-3zM341 29h2v2h-2zM331 363h2v2h-2zM731 736h3v2h-3zM449 541h1v3h-1zM736 494h2v3h-2zM529 250h2v3h-2zM170 305h3v1h-3zM180 25h4v1h-4zM548 212h4v3h-4zM468 234h1v2h-1zM227 81h1v1h-1zM657 220h3v2h-3zM584 205h2v3h-2zM31 45h2v1h-2zM796 557h2v1h-2zM543 435h3v2h-3zM754 49h3v2h-3zM494 270h3v1h-3zM543 169h3v2h-3zM455 359h4v3h-4zM610 360h4v3h-4zM680 43h2v1h-2zM137 488h4v2h-4zM802 365h1v1h-1zM205 656h3v3h-3zM111 114h3v1h-3zM454 512h3v2h-3zM796 257h1v3h-1zM398 42h3v2h-3zM426 100h3v1h-3zM275 183h2v1h-2zM637 41h4v3h-4zM780 371h3v1h-3zM550 442h2v1h-2zM261 546h2v2h-2zM382 58h3v3h-3zM788 712h4v1h-4zM493 111h1v3h-1zM593 425h2v3h-2zM766 148h3v2h-3zM764 45h3v1h-3zM550 576h4v2h-4zM662 165h4v1h-4zM469 525h3v2h-3zM334 212h3v2h-3zM221 145h3v1h-3zM132 170h1v2h-1zM803 500h3v2h-3zM645 194h2v1h-2zM186 557h1v3h-1zM327 73h3v3h-3zM166 141h2v1h-2zM702 114h4v3h-4zM527 451h2v2h-2zM518 121h2v2h-2zM96 120h3v2h-3zM547 542h3v1h-3zM403 97h2v1h-2zM225 198h4v1h-4zM735 622h2v1h-2zM113 146h2v3h-2zM183 287h4v1h-4zM627 36h4v1h-4zM72 302h2v2h-2zM291 588h3v2h-3zM373 22h3v2h-3zM702 64h2v2h-2zM193 479h3v3h-3zM186 170h2v2h-2zM391 142h1v2h-1zM106 247h2v3h-2zM263 62h2v1h-2zM347 23h4v1h-4zM492 46h2v3h-2zM694 226h1v2h-1zM210 129h1v2h-1zM619 536h3v3h-3zM33 712h3v2h-3zM768 196h1v3h-1zM436 370h1v1h-1zM416 66h3v1h-3zM781 389h3v1h-3zM25 628h2v2h-2zM682 45h1v1h-1zM194 727h2v1h-2zM367 21h1v2h-1zM347 104h2v1h-2zM28 410h3v2h-3zM624 216h1v1h-1zM715 123h1v1h-1zM652 259h3v1h-3zM601 159h2v2h-2zM807 643h3v2h-3zM61 159h3v2h-3zM715 411h1v3h-1zM7 524h3v2h-3zM727 136h3v1h-3zM411 188h4v1h-4zM771 538h3v1h-3zM637 594h2v2h-2zM369 44h3v1h-3zM407 339h3v2h-3zM739 321h2v2h-2zM269 96h1v2h-1zM595 265h1v3h-1zM559 156h4v2h-4zM92 198h4v2h-4zM457 67h1v1h-1zM190 32h3v2h-3zM508 51h2v1h-2zM40 71h4v1h-4zM235 704h3v2h-3zM302 164h4v1h-4zM334 106h4v2h-4zM637 45h3v1h-3zM730 495h2v3h-2zM511 418h2v3h-2zM105 478h2v1h-2zM294 465h2v2h-2zM247 307h1v2h-1zM583 263h3v2h-3zM696 429h1v3h-1zM207 373h3v2h-3zM254 204h2v1h-2zM533 595h2v2h-2zM177 329h2v2h-2zM400 210h3v2h-3zM494 349h2v1h-2zM723 712h2v2h-2zM369 396h3v2h-3zM759 170h2v2h-2zM331 450h3v3h-3zM107 375h3v1h-3zM59 508h1v1h-1zM628 674h3v2h-3zM396 38h3v2h-3zM263 54h4v3h-4zM583 292h1v2h-1zM58 428h3v1h-3zM289 192h3v2h-3zM285 681h3v2h-3zM672 264h4v1h-4zM469 681h4v3h-4zM34 514h3v2h-3zM79 116h3v2h-3zM102 414h2v2h-2zM4 416h3v1h-3zM714 327h3v2h-3zM759 246h1v1h-1zM128 162h2v1h-2zM643 764h3v2h-3zM415 321h3v1h-3zM699 191h2v3h-2zM34 69h2v2h-2zM473 513h3v1h-3zM622 124h1v3h-1zM152 340h4v1h-4zM573 386h3v1h-3zM695 228h3v1h-3zM220 316h3v2h-3zM336 385h3v3h-3zM718 740h3v1h-3zM559 136h2v3h-2zM311 309h3v3h-3zM733 297h2v1h-2zM142 346h4v2h-4zM5 54h4v1h-4zM770 343h4v1h-4zM414 126h2v1h-2zM281 376h3v1h-3zM432 173h3v2h-3zM370 133h1v2h-1zM107 318h3v3h-3zM317 180h3v3h-3zM687 344h2v3h-2zM737 209h1v2h-1zM691 555h3v2h-3zM600 681h3v1h-3zM203 717h3v3h-3zM568 357h1v1h-1zM537 555h1v1h-1zM609 639h2v1h-2zM38 162h3v1h-3zM398 193h4v2h-4zM714 164h3v2h-3zM390 634h4v1h-4zM201 134h3v2h-3zM479 61h3v1h-3zM327 163h1v3h-1zM779 23h2v1h-2zM764 261h2v2h-2zM430 76h4v2h-4zM551 567h4v2h-4zM236 200h4v2h-4zM622 517h2v2h-2zM149 452h2v2h-2zM99 109h1v2h-1zM284 664h4v1h-4zM669 207h3v3h-3zM515 701h1v3h-1zM22 369h3v2h-3zM234 328h3v2h-3zM266 524h3v3h-3zM480 421h2v1h-2zM494 299h2v2h-2zM28 547h4v1h-4zM793 619h3v1h-3zM51 628h3v3h-3zM408 441h4v3h-4zM372 198h1v1h-1zM474 517h3v1h-3z"/></g><filter id="bl" x="-50%" y="-10%" width="200%" height="120%" color-interpolation-filters="sRGB"><feGaussianBlur stdDeviation="1.0"/></filter><filter id="bl2" x="-50%" y="-10%" width="200%" height="120%" color-interpolation-filters="sRGB"><feGaussianBlur stdDeviation="0.9"/></filter><g filter="url(#bl)"><rect x="2" y="250.5" width="3" height="2" fill="#1b1681"/><rect x="10" y="251.5" width="2" height="2" fill="#0e0e50"/><rect x="13" y="250.5" width="3" height="2" fill="#1b1680"/><rect x="21" y="250.5" width="4" height="2" fill="#121269"/><rect x="29" y="251.5" width="3" height="2" fill="#1d1683"/><rect x="37" y="250.5" width="3" height="2" fill="#0b0b3e"/><rect x="44" y="251.5" width="4" height="2" fill="#111162"/><rect x="50" y="251.5" width="3" height="2" fill="#0a0a34"/><rect x="56" y="250.5" width="4" height="2" fill="#0c0c45"/><rect x="65" y="251" width="2" height="2" fill="#10105c"/><rect x="69" y="251.5" width="3" height="2" fill="#0a0a34"/><rect x="75" y="250.5" width="2" height="2" fill="#1b1681"/><rect x="82" y="251.5" width="3" height="2" fill="#1b1681"/><rect x="88" y="251.5" width="3" height="2" fill="#0d0d4a"/><rect x="92" y="251.5" width="2" height="2" fill="#0c0c43"/><rect x="95" y="251.5" width="2" height="2" fill="#0a0a35"/><rect x="98" y="251" width="2" height="2" fill="#15147a"/><rect x="103" y="251" width="4" height="2" fill="#12126d"/><rect x="112" y="251" width="3" height="2" fill="#0e0e4e"/><rect x="117" y="251.5" width="4" height="2" fill="#131373"/><rect x="122" y="251.5" width="4" height="2" fill="#1c1682"/><rect x="130" y="251" width="3" height="2" fill="#0d0d4a"/><rect x="137" y="251" width="3" height="2" fill="#13136f"/><rect x="142" y="251" width="2" height="2" fill="#0e0e51"/><rect x="146" y="251.5" width="2" height="2" fill="#0b0b3a"/><rect x="150" y="251.5" width="4" height="2" fill="#0e0e51"/><rect x="159" y="250.5" width="3" height="2" fill="#1b1680"/><rect x="167" y="251" width="2" height="2" fill="#0d0d49"/><rect x="170" y="251.5" width="3" height="2" fill="#0b0b3b"/><rect x="178" y="250.5" width="2" height="2" fill="#0f0f56"/><rect x="185" y="251.5" width="2" height="2" fill="#0d0d46"/><rect x="189" y="251" width="4" height="2" fill="#12126c"/><rect x="195" y="250.5" width="3" height="2" fill="#0f0f59"/><rect x="200" y="250.5" width="4" height="2" fill="#141478"/><rect x="205" y="250.5" width="2" height="2" fill="#0d0d4c"/><rect x="211" y="251.5" width="4" height="2" fill="#09092f"/><rect x="219" y="251" width="2" height="2" fill="#0d0d49"/><rect x="224" y="251" width="2" height="2" fill="#0f0f58"/><rect x="231" y="250.5" width="4" height="2" fill="#0b0b3e"/><rect x="239" y="251" width="2" height="2" fill="#0f0f58"/><rect x="243" y="251.5" width="3" height="2" fill="#0a0a38"/><rect x="251" y="250.5" width="3" height="2" fill="#12126a"/><rect x="258" y="251.5" width="2" height="2" fill="#0a0a37"/><rect x="264" y="251" width="2" height="2" fill="#0a0a33"/><rect x="270" y="251.5" width="3" height="2" fill="#0b0b40"/><rect x="274" y="250.5" width="4" height="2" fill="#0f0f58"/><rect x="280" y="251" width="4" height="2" fill="#201787"/><rect x="285" y="251.5" width="4" height="2" fill="#13136f"/><rect x="291" y="251" width="2" height="2" fill="#16147a"/><rect x="295" y="251.5" width="3" height="2" fill="#0d0d47"/><rect x="302" y="251" width="3" height="2" fill="#0c0c40"/><rect x="306" y="251" width="4" height="2" fill="#0b0b39"/><rect x="312" y="251" width="4" height="2" fill="#19157f"/><rect x="321" y="250.5" width="3" height="2" fill="#10105d"/><rect x="326" y="251.5" width="4" height="2" fill="#0c0c43"/><rect x="333" y="251" width="2" height="2" fill="#0c0c46"/><rect x="336" y="250.5" width="4" height="2" fill="#0b0b3d"/><rect x="343" y="250.5" width="3" height="2" fill="#12126b"/><rect x="350" y="251" width="3" height="2" fill="#0c0c42"/><rect x="357" y="251.5" width="4" height="2" fill="#0d0d4c"/><rect x="366" y="251" width="2" height="2" fill="#0b0b3d"/><rect x="369" y="251" width="3" height="2" fill="#0b0b3b"/><rect x="375" y="251" width="2" height="2" fill="#0b0b3b"/><rect x="380" y="251" width="3" height="2" fill="#0a0a36"/><rect x="384" y="251" width="3" height="2" fill="#0b0b3c"/><rect x="390" y="251.5" width="4" height="2" fill="#18157d"/><rect x="396" y="251.5" width="3" height="2" fill="#0e0e52"/><rect x="400" y="250.5" width="4" height="2" fill="#0c0c42"/><rect x="406" y="251" width="3" height="2" fill="#0d0d47"/><rect x="414" y="251.5" width="3" height="2" fill="#0e0e51"/><rect x="419" y="251.5" width="3" height="2" fill="#0b0b3a"/><rect x="425" y="251" width="4" height="2" fill="#0e0e50"/><rect x="430" y="250.5" width="2" height="2" fill="#131370"/><rect x="437" y="250.5" width="2" height="2" fill="#0a0a34"/><rect x="443" y="250.5" width="2" height="2" fill="#0b0b39"/><rect x="446" y="250.5" width="2" height="2" fill="#0e0e53"/><rect x="449" y="251.5" width="3" height="2" fill="#19157e"/><rect x="455" y="250.5" width="2" height="2" fill="#131372"/><rect x="461" y="250.5" width="3" height="2" fill="#12126a"/><rect x="465" y="251.5" width="2" height="2" fill="#0e0e51"/><rect x="472" y="251" width="2" height="2" fill="#1a157f"/><rect x="478" y="251.5" width="2" height="2" fill="#0d0d48"/><rect x="485" y="250.5" width="2" height="2" fill="#16147a"/><rect x="491" y="251.5" width="3" height="2" fill="#0f0f55"/><rect x="496" y="251.5" width="3" height="2" fill="#121269"/><rect x="502" y="250.5" width="3" height="2" fill="#0e0e50"/><rect x="506" y="250.5" width="4" height="2" fill="#141477"/><rect x="512" y="251" width="3" height="2" fill="#0f0f54"/><rect x="518" y="251.5" width="2" height="2" fill="#10105c"/><rect x="523" y="251" width="3" height="2" fill="#0c0c40"/><rect x="531" y="251.5" width="2" height="2" fill="#13136e"/><rect x="538" y="251.5" width="3" height="2" fill="#0a0a36"/><rect x="542" y="251" width="3" height="2" fill="#111164"/><rect x="550" y="251.5" width="2" height="2" fill="#111163"/><rect x="553" y="250.5" width="4" height="2" fill="#0f0f5a"/><rect x="561" y="251" width="3" height="2" fill="#111164"/><rect x="568" y="251" width="3" height="2" fill="#0e0e4f"/><rect x="574" y="251.5" width="4" height="2" fill="#0a0a38"/><rect x="580" y="250.5" width="3" height="2" fill="#0f0f57"/><rect x="586" y="251.5" width="4" height="2" fill="#0c0c41"/><rect x="595" y="251" width="3" height="2" fill="#141475"/><rect x="603" y="251" width="4" height="2" fill="#111164"/><rect x="611" y="250.5" width="3" height="2" fill="#121268"/><rect x="618" y="251" width="3" height="2" fill="#18157d"/><rect x="625" y="250.5" width="2" height="2" fill="#0c0c40"/><rect x="631" y="251.5" width="3" height="2" fill="#151479"/><rect x="635" y="251.5" width="4" height="2" fill="#0f0f59"/><rect x="643" y="250.5" width="2" height="2" fill="#12126c"/><rect x="650" y="250.5" width="3" height="2" fill="#12126a"/><rect x="654" y="251.5" width="3" height="2" fill="#111163"/><rect x="659" y="250.5" width="3" height="2" fill="#090932"/><rect x="663" y="251.5" width="2" height="2" fill="#0e0e52"/><rect x="667" y="250.5" width="4" height="2" fill="#0a0a35"/><rect x="676" y="251" width="2" height="2" fill="#090932"/><rect x="680" y="250.5" width="4" height="2" fill="#10105f"/><rect x="686" y="251.5" width="2" height="2" fill="#1d1684"/><rect x="691" y="251" width="3" height="2" fill="#0a0a35"/><rect x="695" y="251.5" width="3" height="2" fill="#0f0f5a"/><rect x="699" y="250.5" width="3" height="2" fill="#1a1680"/><rect x="706" y="251" width="4" height="2" fill="#10105e"/><rect x="715" y="251.5" width="3" height="2" fill="#0a0a36"/><rect x="723" y="251" width="4" height="2" fill="#10105a"/><rect x="728" y="251" width="3" height="2" fill="#121269"/><rect x="735" y="251.5" width="4" height="2" fill="#121268"/><rect x="744" y="251" width="2" height="2" fill="#0f0f59"/><rect x="748" y="251" width="4" height="2" fill="#131371"/><rect x="754" y="250.5" width="3" height="2" fill="#0c0c46"/><rect x="761" y="251" width="4" height="2" fill="#12126b"/><rect x="766" y="251.5" width="3" height="2" fill="#0d0d4b"/><rect x="773" y="251.5" width="2" height="2" fill="#211788"/><rect x="777" y="251.5" width="4" height="2" fill="#131373"/><rect x="786" y="251" width="4" height="2" fill="#101060"/><rect x="791" y="251" width="4" height="2" fill="#0c0c42"/><rect x="797" y="251.5" width="2" height="2" fill="#0f0f5a"/><rect x="801" y="251.5" width="2" height="2" fill="#131370"/><rect x="804" y="251" width="2" height="2" fill="#121269"/><rect x="811" y="251.5" width="3" height="2" fill="#0d0d47"/><rect x="16" y="235" width="2" height="2" fill="#151479"/><rect x="23" y="235" width="5" height="2" fill="#0f0f5a"/><rect x="93" y="235" width="4" height="2" fill="#0f0f59"/><rect x="149" y="235" width="5" height="2" fill="#0c0c44"/><rect x="163" y="235" width="4" height="2" fill="#0f0f59"/><rect x="191" y="235" width="5" height="2" fill="#0e0e51"/><rect x="198" y="235" width="5" height="2" fill="#0c0c44"/><rect x="226" y="235" width="2" height="2" fill="#0f0f57"/><rect x="268" y="235" width="5" height="2" fill="#131370"/><rect x="282" y="235" width="3" height="2" fill="#111163"/><rect x="317" y="235" width="2" height="2" fill="#141475"/><rect x="331" y="235" width="3" height="2" fill="#0b0b40"/><rect x="338" y="235" width="4" height="2" fill="#0d0d4a"/><rect x="359" y="235" width="3" height="2" fill="#151479"/><rect x="394" y="235" width="3" height="2" fill="#18157d"/><rect x="429" y="235" width="3" height="2" fill="#111165"/><rect x="464" y="235" width="3" height="2" fill="#0e0e52"/><rect x="471" y="235" width="2" height="2" fill="#0d0d47"/><rect x="492" y="235" width="3" height="2" fill="#0f0f59"/><rect x="541" y="235" width="5" height="2" fill="#18157e"/><rect x="562" y="235" width="3" height="2" fill="#131373"/><rect x="590" y="235" width="4" height="2" fill="#0b0b3f"/><rect x="597" y="235" width="5" height="2" fill="#131373"/><rect x="632" y="235" width="4" height="2" fill="#0f0f55"/><rect x="688" y="235" width="3" height="2" fill="#141475"/><rect x="709" y="235" width="2" height="2" fill="#18157d"/><rect x="723" y="235" width="4" height="2" fill="#0f0f5a"/><rect x="751" y="235" width="4" height="2" fill="#0e0e53"/><rect x="772" y="235" width="2" height="2" fill="#0d0d48"/><rect x="786" y="235" width="5" height="2" fill="#141478"/><rect x="807" y="235" width="3" height="2" fill="#13136f"/><rect x="145" y="251" width="4" height="2" fill="#4d1ea4"/><rect x="149" y="251" width="4" height="2" fill="#621e9d"/><rect x="154" y="251" width="4" height="2" fill="#561ea1"/><rect x="158" y="251" width="3" height="2" fill="#6c1e9a"/><rect x="161" y="251" width="4" height="2" fill="#651e9c"/><rect x="165" y="251" width="4" height="2" fill="#601e9e"/><rect x="171" y="251" width="4" height="2" fill="#481ea6"/><rect x="176" y="251" width="4" height="2" fill="#4a1ea5"/><rect x="180" y="251" width="4" height="2" fill="#621e9d"/><rect x="188" y="250" width="4" height="4" fill="#25188d"/><rect x="220" y="251" width="2" height="2" fill="#521ea3"/><rect x="222" y="251" width="3" height="2" fill="#3f1ea9"/><rect x="227" y="251" width="4" height="2" fill="#431ea8"/><rect x="231" y="251" width="3" height="2" fill="#4c1ea5"/><rect x="235" y="251" width="4" height="2" fill="#4e1ea4"/><rect x="255" y="251" width="3" height="2" fill="#3c1eaa"/><rect x="259" y="251" width="4" height="2" fill="#481ea6"/><rect x="264" y="251" width="2" height="2" fill="#441ea7"/><rect x="268" y="251" width="4" height="2" fill="#411ea8"/><rect x="273" y="251" width="4" height="2" fill="#561ea1"/><rect x="277" y="251" width="2" height="2" fill="#551ea2"/><rect x="325" y="251" width="4" height="2" fill="#361da3"/><rect x="329" y="251" width="3" height="2" fill="#2f1b9a"/><rect x="332" y="251" width="4" height="2" fill="#221789"/><rect x="336" y="251" width="3" height="2" fill="#2c1a96"/><rect x="341" y="251" width="2" height="2" fill="#211788"/><rect x="343" y="251" width="3" height="2" fill="#24188c"/><rect x="347" y="251" width="4" height="2" fill="#2b1a95"/><rect x="351" y="251" width="2" height="2" fill="#2f1b9a"/><rect x="355" y="251" width="3" height="2" fill="#2c1a96"/><rect x="358" y="251" width="4" height="2" fill="#2d1a97"/><rect x="362" y="251" width="3" height="2" fill="#2a1a94"/><rect x="365" y="251" width="4" height="2" fill="#26188e"/><rect x="369" y="251" width="2" height="2" fill="#23188b"/><rect x="371" y="251" width="3" height="2" fill="#351ca1"/><rect x="738" y="251" width="2" height="2" fill="#341ca0"/><rect x="742" y="251" width="3" height="2" fill="#361da3"/><rect x="747" y="251" width="4" height="2" fill="#2c1a96"/><rect x="600" y="251" width="3" height="2" fill="#1a1680"/><rect x="603" y="251" width="3" height="2" fill="#18157d"/><rect x="606" y="251" width="3" height="2" fill="#111165"/><rect x="609" y="251" width="2" height="2" fill="#12126a"/><rect x="611" y="251" width="3" height="2" fill="#211788"/><rect x="616" y="251" width="3" height="2" fill="#141479"/><rect x="620" y="251" width="2" height="2" fill="#12126c"/><rect x="623" y="251" width="4" height="2" fill="#23188b"/><rect x="629" y="251" width="4" height="2" fill="#23188b"/><rect x="0" y="251" width="4" height="2" fill="#24188c"/><rect x="4" y="251" width="3" height="2" fill="#201787"/><rect x="9" y="251" width="3" height="2" fill="#211788"/><rect x="12" y="251" width="2" height="2" fill="#1c1681"/><rect x="14" y="251" width="2" height="2" fill="#301b9a"/><rect x="16" y="251" width="3" height="2" fill="#221789"/><rect x="20" y="251" width="3" height="2" fill="#2e1a98"/><rect x="23" y="251" width="4" height="2" fill="#2c1a96"/><rect x="28" y="251" width="2" height="2" fill="#301b9a"/><rect x="477.5" y="18" width="6.0" height="2" fill="#010105"/><rect x="477.5" y="20" width="6.0" height="2" fill="#020205"/><rect x="477.6" y="22" width="6.0" height="2" fill="#010102"/><rect x="477.6" y="24" width="6.1" height="2" fill="#010105"/><rect x="477.6" y="26" width="6.1" height="2" fill="#010105"/><rect x="477.6" y="28" width="6.1" height="2" fill="#010105"/><rect x="477.7" y="30" width="6.1" height="2" fill="#020209"/><rect x="477.7" y="32" width="6.1" height="2" fill="#010104"/><rect x="477.7" y="34" width="6.2" height="2" fill="#020208"/><rect x="477.8" y="36" width="6.2" height="2" fill="#020208"/><rect x="477.8" y="38" width="6.2" height="2" fill="#010105"/><rect x="477.8" y="40" width="6.2" height="2" fill="#020208"/><rect x="477.9" y="42" width="6.2" height="2" fill="#020209"/><rect x="477.9" y="44" width="6.3" height="2" fill="#03030a"/><rect x="477.9" y="46" width="6.3" height="2" fill="#03030b"/><rect x="477.9" y="48" width="6.3" height="2" fill="#020207"/><rect x="478.0" y="50" width="6.3" height="2" fill="#020207"/><rect x="478.0" y="52" width="6.3" height="2" fill="#03030c"/><rect x="478.0" y="54" width="6.4" height="2" fill="#04040d"/><rect x="478.1" y="56" width="6.4" height="2" fill="#020208"/><rect x="478.1" y="58" width="6.4" height="2" fill="#04040d"/><rect x="478.1" y="60" width="6.4" height="2" fill="#020208"/><rect x="478.1" y="62" width="6.4" height="2" fill="#020208"/><rect x="478.2" y="64" width="6.5" height="2" fill="#06061a"/><rect x="478.2" y="66" width="6.5" height="2" fill="#04040e"/><rect x="478.2" y="68" width="6.5" height="2" fill="#03030c"/><rect x="478.3" y="70" width="6.5" height="2" fill="#06061b"/><rect x="478.3" y="72" width="6.5" height="2" fill="#050511"/><rect x="478.3" y="74" width="6.5" height="2" fill="#04040d"/><rect x="478.4" y="76" width="6.6" height="2" fill="#04040d"/><rect x="478.4" y="78" width="6.6" height="2" fill="#050516"/><rect x="478.4" y="80" width="6.6" height="2" fill="#0b0b3a"/><rect x="478.4" y="82" width="6.6" height="2" fill="#0a0a34"/><rect x="478.5" y="84" width="6.6" height="2" fill="#04040e"/><rect x="478.5" y="86" width="6.7" height="2" fill="#09092c"/><rect x="478.5" y="88" width="6.7" height="2" fill="#0c0c43"/><rect x="478.6" y="90" width="6.7" height="2" fill="#04040f"/><rect x="478.6" y="92" width="6.7" height="2" fill="#080827"/><rect x="478.6" y="94" width="6.7" height="2" fill="#050516"/><rect x="478.6" y="96" width="6.8" height="2" fill="#0c0c41"/><rect x="478.7" y="98" width="6.8" height="2" fill="#0e0e52"/><rect x="478.7" y="100" width="6.8" height="2" fill="#0d0d4a"/><rect x="478.7" y="102" width="6.8" height="2" fill="#080826"/><rect x="478.8" y="104" width="6.8" height="2" fill="#10105f"/><rect x="478.8" y="106" width="6.9" height="2" fill="#111167"/><rect x="478.8" y="108" width="6.9" height="2" fill="#0d0d48"/><rect x="478.9" y="110" width="6.9" height="2" fill="#0d0d47"/><rect x="478.9" y="112" width="6.9" height="2" fill="#0d0d48"/><rect x="478.9" y="114" width="6.9" height="2" fill="#131371"/><rect x="478.9" y="116" width="7.0" height="2" fill="#101060"/><rect x="479.0" y="118" width="7.0" height="2" fill="#12126d"/><rect x="479.0" y="120" width="7.0" height="2" fill="#1a157f"/><rect x="479.0" y="122" width="7.0" height="2" fill="#111163"/><rect x="479.0" y="124" width="7.1" height="2" fill="#18157d"/><rect x="479.0" y="126" width="7.1" height="2" fill="#141475"/><rect x="479.0" y="128" width="7.1" height="2" fill="#1b1680"/><rect x="479.0" y="130" width="7.2" height="2" fill="#23188b"/><rect x="479.0" y="132" width="7.2" height="2" fill="#281991"/><rect x="479.0" y="134" width="7.2" height="2" fill="#2a1a94"/><rect x="479.0" y="136" width="7.3" height="2" fill="#201787"/><rect x="479.0" y="138" width="7.3" height="2" fill="#131374"/><rect x="479.0" y="140" width="7.3" height="2" fill="#3b1ea8"/><rect x="479.0" y="142" width="7.3" height="2" fill="#271990"/><rect x="479.0" y="144" width="7.4" height="2" fill="#401ea9"/><rect x="479.0" y="146" width="7.4" height="2" fill="#281991"/><rect x="479.0" y="148" width="7.4" height="2" fill="#441ea7"/><rect x="479.0" y="150" width="7.5" height="2" fill="#24188c"/><rect x="479.0" y="152" width="7.5" height="2" fill="#25188d"/><rect x="479.0" y="154" width="7.5" height="2" fill="#3e1ea9"/><rect x="479.0" y="156" width="7.6" height="2" fill="#2d1a97"/><rect x="479.0" y="158" width="7.6" height="2" fill="#27198f"/><rect x="479.0" y="160" width="7.6" height="2" fill="#3a1da7"/><rect x="479.0" y="162" width="7.7" height="2" fill="#401ea9"/><rect x="479.0" y="164" width="7.7" height="2" fill="#3e1ea9"/><rect x="479.0" y="166" width="7.7" height="2" fill="#521ea3"/><rect x="479.0" y="168" width="7.8" height="2" fill="#3c1eaa"/><rect x="479.0" y="170" width="7.8" height="2" fill="#4d1ea4"/><rect x="479.0" y="172" width="7.8" height="2" fill="#5c1e9f"/><rect x="479.0" y="174" width="7.9" height="2" fill="#381da5"/><rect x="479.0" y="176" width="7.9" height="2" fill="#5d1e9f"/><rect x="479.0" y="178" width="7.9" height="2" fill="#381da6"/><rect x="479.0" y="180" width="7.9" height="2" fill="#461ea7"/><rect x="479.0" y="182" width="8.0" height="2" fill="#561ea1"/><rect x="479.0" y="184" width="8.0" height="2" fill="#521ea3"/><rect x="479.0" y="186" width="8.0" height="2" fill="#691e9b"/><rect x="479.0" y="188" width="8.1" height="2" fill="#641e9d"/><rect x="479.0" y="190" width="8.1" height="2" fill="#4b1ea5"/><rect x="479.0" y="192" width="8.1" height="2" fill="#521ea3"/><rect x="479.0" y="194" width="8.2" height="2" fill="#751e97"/><rect x="479.0" y="196" width="8.2" height="2" fill="#691e9b"/><rect x="479.0" y="198" width="8.2" height="2" fill="#491ea6"/><rect x="479.0" y="200" width="8.3" height="2" fill="#5e1e9f"/><rect x="479.0" y="202" width="8.3" height="2" fill="#551ea2"/><rect x="479.0" y="204" width="8.3" height="2" fill="#711e98"/><rect x="479.0" y="206" width="8.4" height="2" fill="#7e2191"/><rect x="479.0" y="208" width="8.4" height="2" fill="#791e95"/><rect x="479.0" y="210" width="8.4" height="2" fill="#571ea1"/><rect x="479.0" y="212" width="8.5" height="2" fill="#761e97"/><rect x="479.0" y="214" width="8.5" height="2" fill="#6a1e9b"/><rect x="479.0" y="216" width="8.5" height="2" fill="#771e96"/><rect x="479.0" y="218" width="8.5" height="2" fill="#8d2784"/><rect x="479.1" y="220" width="8.6" height="2" fill="#6f1e99"/><rect x="479.1" y="222" width="8.6" height="2" fill="#721e98"/><rect x="479.2" y="224" width="8.6" height="2" fill="#86248a"/><rect x="479.2" y="226" width="8.6" height="2" fill="#771e96"/><rect x="479.3" y="228" width="8.6" height="2" fill="#a7326e"/><rect x="479.3" y="230" width="8.7" height="2" fill="#8a2686"/><rect x="479.3" y="232" width="8.7" height="2" fill="#a6326f"/><rect x="479.4" y="234" width="8.7" height="2" fill="#d45e40"/><rect x="479.4" y="236" width="8.7" height="2" fill="#b63961"/><rect x="479.5" y="238" width="8.8" height="2" fill="#eb8125"/><rect x="479.5" y="240" width="8.8" height="2" fill="#cb504b"/><rect x="479.6" y="242" width="8.8" height="2" fill="#e4762d"/><rect x="479.6" y="244" width="8.8" height="2" fill="#bf3e59"/><rect x="479.7" y="246" width="8.8" height="2" fill="#d5603f"/><rect x="479.7" y="248" width="8.9" height="2" fill="#dd6d35"/><rect x="479.8" y="250" width="8.9" height="2" fill="#d6613d"/><rect x="479.8" y="252" width="8.9" height="2" fill="#b83960"/><rect x="479.9" y="254" width="8.9" height="2" fill="#d6613e"/><rect x="479.9" y="256" width="9.0" height="2" fill="#b13665"/><rect x="480.0" y="258" width="9.0" height="2" fill="#82228e"/><rect x="480.0" y="260" width="9.0" height="2" fill="#a02f74"/><rect x="480.0" y="262" width="9.0" height="2" fill="#81228e"/><rect x="480.0" y="264" width="8.9" height="2" fill="#4f1ea4"/><rect x="480.1" y="266" width="8.9" height="2" fill="#3a1ea8"/><rect x="480.1" y="268" width="8.9" height="2" fill="#301b9b"/><rect x="480.1" y="270" width="8.9" height="2" fill="#421ea8"/><rect x="480.1" y="272" width="8.8" height="2" fill="#331c9f"/><rect x="480.1" y="274" width="8.8" height="2" fill="#311b9d"/><rect x="480.2" y="276" width="8.8" height="2" fill="#13136e"/><rect x="480.2" y="278" width="8.7" height="2" fill="#121268"/><rect x="480.2" y="280" width="8.7" height="2" fill="#141476"/><rect x="480.2" y="282" width="8.7" height="2" fill="#0c0c42"/><rect x="480.2" y="284" width="8.7" height="2" fill="#131371"/><rect x="480.2" y="286" width="8.6" height="2" fill="#0e0e4e"/><rect x="480.3" y="288" width="8.6" height="2" fill="#0a0a39"/><rect x="480.3" y="290" width="8.6" height="2" fill="#070723"/><rect x="480.3" y="292" width="8.5" height="2" fill="#0b0b3f"/><rect x="480.3" y="294" width="8.5" height="2" fill="#06061a"/><rect x="480.3" y="296" width="8.5" height="2" fill="#0a0a35"/><rect x="480.4" y="298" width="8.5" height="2" fill="#0a0a37"/><rect x="480.4" y="300" width="8.4" height="2" fill="#03030b"/><rect x="480.4" y="302" width="8.4" height="2" fill="#03030a"/><rect x="480.4" y="304" width="8.4" height="2" fill="#040411"/><rect x="480.4" y="306" width="8.3" height="2" fill="#03030a"/><rect x="480.5" y="308" width="8.3" height="2" fill="#040411"/><rect x="480.5" y="310" width="8.3" height="2" fill="#04040e"/><rect x="480.5" y="312" width="8.3" height="2" fill="#050512"/><rect x="480.5" y="314" width="8.2" height="2" fill="#04040d"/><rect x="480.5" y="316" width="8.2" height="2" fill="#03030a"/><rect x="480.6" y="318" width="8.2" height="2" fill="#04040e"/><rect x="480.6" y="320" width="8.1" height="2" fill="#030309"/><rect x="480.6" y="322" width="8.1" height="2" fill="#03030a"/><rect x="480.6" y="324" width="8.1" height="2" fill="#020208"/><rect x="480.6" y="326" width="8.1" height="2" fill="#03030a"/><rect x="480.6" y="328" width="8.0" height="2" fill="#030309"/><rect x="480.7" y="330" width="8.0" height="2" fill="#030309"/><rect x="480.7" y="332" width="8.0" height="2" fill="#03030a"/><rect x="480.7" y="334" width="8.0" height="2" fill="#020207"/><rect x="480.7" y="336" width="7.9" height="2" fill="#030309"/><rect x="480.7" y="338" width="7.9" height="2" fill="#030309"/><rect x="480.7" y="340" width="7.9" height="2" fill="#020205"/><rect x="480.8" y="342" width="7.9" height="2" fill="#020206"/><rect x="480.8" y="344" width="7.8" height="2" fill="#020207"/><rect x="480.8" y="346" width="7.8" height="2" fill="#020208"/><rect x="480.8" y="348" width="7.8" height="2" fill="#030309"/><rect x="480.8" y="350" width="7.8" height="2" fill="#03030a"/><rect x="480.8" y="352" width="7.8" height="2" fill="#010105"/><rect x="480.9" y="354" width="7.7" height="2" fill="#030309"/><rect x="480.9" y="356" width="7.7" height="2" fill="#020206"/><rect x="480.9" y="358" width="7.7" height="2" fill="#010104"/><rect x="480.9" y="360" width="7.7" height="2" fill="#020207"/><rect x="480.9" y="362" width="7.7" height="2" fill="#020208"/><rect x="480.9" y="364" width="7.6" height="2" fill="#020208"/><rect x="480.9" y="366" width="7.6" height="2" fill="#020206"/><rect x="481.0" y="368" width="7.6" height="2" fill="#010103"/><rect x="481.0" y="370" width="7.6" height="2" fill="#010103"/><rect x="481.0" y="372" width="7.5" height="2" fill="#010104"/><rect x="481.0" y="374" width="7.5" height="2" fill="#020206"/><rect x="481.0" y="376" width="7.5" height="2" fill="#010105"/><rect x="481.0" y="378" width="7.5" height="2" fill="#020206"/><rect x="481.1" y="380" width="7.5" height="2" fill="#010102"/><rect x="481.1" y="382" width="7.4" height="2" fill="#010103"/><rect x="481.1" y="384" width="7.4" height="2" fill="#010102"/><rect x="481.1" y="386" width="7.4" height="2" fill="#020205"/><rect x="481.1" y="388" width="7.4" height="2" fill="#000001"/><rect x="481.1" y="390" width="7.4" height="2" fill="#000001"/><rect x="481.1" y="392" width="7.3" height="2" fill="#010105"/><rect x="481.2" y="394" width="7.3" height="2" fill="#000001"/><rect x="481.2" y="396" width="7.3" height="2" fill="#000000"/><rect x="481.2" y="398" width="7.3" height="2" fill="#010103"/><rect x="481.2" y="400" width="7.2" height="2" fill="#010104"/><rect x="481.2" y="402" width="7.2" height="2" fill="#000000"/><rect x="481.2" y="404" width="7.2" height="2" fill="#010104"/><rect x="481.3" y="406" width="7.2" height="2" fill="#000002"/><rect x="481.3" y="408" width="7.2" height="2" fill="#010105"/><rect x="481.3" y="410" width="7.1" height="2" fill="#010104"/><rect x="481.3" y="412" width="7.1" height="2" fill="#000000"/><rect x="481.3" y="414" width="7.1" height="2" fill="#010104"/><rect x="481.3" y="416" width="7.1" height="2" fill="#000000"/><rect x="481.3" y="418" width="7.1" height="2" fill="#010104"/><rect x="481.4" y="420" width="7.0" height="2" fill="#000000"/><rect x="481.4" y="422" width="7.0" height="2" fill="#000000"/><rect x="481.4" y="424" width="7.0" height="2" fill="#000000"/><rect x="481.4" y="426" width="7.0" height="2" fill="#010103"/><rect x="481.4" y="428" width="7.0" height="2" fill="#000000"/><rect x="481.4" y="430" width="6.9" height="2" fill="#000000"/><rect x="481.5" y="432" width="6.9" height="2" fill="#010102"/><rect x="481.5" y="434" width="6.9" height="2" fill="#000001"/><rect x="481.5" y="436" width="6.9" height="2" fill="#010102"/><rect x="481.5" y="438" width="6.8" height="2" fill="#010102"/><rect x="481.5" y="440" width="6.8" height="2" fill="#000000"/><rect x="481.5" y="442" width="6.8" height="2" fill="#000000"/><rect x="481.5" y="444" width="6.8" height="2" fill="#000000"/><rect x="481.6" y="446" width="6.8" height="2" fill="#000000"/><rect x="481.6" y="448" width="6.7" height="2" fill="#000000"/><rect x="481.6" y="450" width="6.7" height="2" fill="#000000"/><rect x="481.6" y="452" width="6.7" height="2" fill="#000000"/><rect x="481.6" y="454" width="6.7" height="2" fill="#000000"/><rect x="481.6" y="456" width="6.7" height="2" fill="#000000"/><rect x="481.7" y="458" width="6.6" height="2" fill="#000000"/><rect x="481.7" y="460" width="6.6" height="2" fill="#000000"/><rect x="481.7" y="462" width="6.6" height="2" fill="#000000"/><rect x="481.7" y="464" width="6.6" height="2" fill="#000000"/><rect x="481.7" y="466" width="6.5" height="2" fill="#000000"/><rect x="481.7" y="468" width="6.5" height="2" fill="#000000"/><rect x="478.0" y="18" width="3.0" height="2" fill="#151479"/><rect x="478.0" y="20" width="3.0" height="2" fill="#2f1b9a"/><rect x="478.1" y="22" width="3.0" height="2" fill="#371da3"/><rect x="478.1" y="24" width="3.0" height="2" fill="#331c9f"/><rect x="478.1" y="26" width="3.0" height="2" fill="#2b1a94"/><rect x="478.1" y="28" width="3.0" height="2" fill="#321c9e"/><rect x="478.2" y="30" width="3.1" height="2" fill="#2f1b99"/><rect x="478.2" y="32" width="3.1" height="2" fill="#311b9c"/><rect x="478.2" y="34" width="3.1" height="2" fill="#491ea6"/><rect x="478.3" y="36" width="3.1" height="2" fill="#3a1da7"/><rect x="478.3" y="38" width="3.1" height="2" fill="#2e1b99"/><rect x="478.3" y="40" width="3.1" height="2" fill="#301b9c"/><rect x="478.4" y="42" width="3.1" height="2" fill="#541ea2"/><rect x="478.4" y="44" width="3.1" height="2" fill="#3c1eaa"/><rect x="478.4" y="46" width="3.1" height="2" fill="#3e1ea9"/><rect x="478.4" y="48" width="3.1" height="2" fill="#651e9c"/><rect x="478.5" y="50" width="3.2" height="2" fill="#471ea6"/><rect x="478.5" y="52" width="3.2" height="2" fill="#621e9d"/><rect x="478.5" y="54" width="3.2" height="2" fill="#481ea6"/><rect x="478.6" y="56" width="3.2" height="2" fill="#491ea6"/><rect x="478.6" y="58" width="3.2" height="2" fill="#4b1ea5"/><rect x="478.6" y="60" width="3.2" height="2" fill="#6c1e9a"/><rect x="478.6" y="62" width="3.2" height="2" fill="#5b1ea0"/><rect x="478.7" y="64" width="3.2" height="2" fill="#6f1e99"/><rect x="478.7" y="66" width="3.2" height="2" fill="#641e9d"/><rect x="478.7" y="68" width="3.2" height="2" fill="#721e98"/><rect x="478.8" y="70" width="3.3" height="2" fill="#5f1e9e"/><rect x="478.8" y="72" width="3.3" height="2" fill="#6d1e9a"/><rect x="478.8" y="74" width="3.3" height="2" fill="#651e9c"/><rect x="478.9" y="76" width="3.3" height="2" fill="#731e98"/><rect x="478.9" y="78" width="3.3" height="2" fill="#9a2d78"/><rect x="478.9" y="80" width="3.3" height="2" fill="#80218f"/><rect x="478.9" y="82" width="3.3" height="2" fill="#781e96"/><rect x="479.0" y="84" width="3.3" height="2" fill="#912981"/><rect x="479.0" y="86" width="3.3" height="2" fill="#711e98"/><rect x="479.0" y="88" width="3.3" height="2" fill="#751e97"/><rect x="479.1" y="90" width="3.4" height="2" fill="#a9336c"/><rect x="479.1" y="92" width="3.4" height="2" fill="#942a7e"/><rect x="479.1" y="94" width="3.4" height="2" fill="#86248a"/><rect x="479.1" y="96" width="3.4" height="2" fill="#a6326f"/><rect x="479.2" y="98" width="3.4" height="2" fill="#85248a"/><rect x="479.2" y="100" width="3.4" height="2" fill="#8c2785"/><rect x="479.2" y="102" width="3.4" height="2" fill="#9c2e77"/><rect x="479.3" y="104" width="3.4" height="2" fill="#942a7e"/><rect x="479.3" y="106" width="3.4" height="2" fill="#b93a5e"/><rect x="479.3" y="108" width="3.4" height="2" fill="#bc3b5c"/><rect x="479.4" y="110" width="3.5" height="2" fill="#cc5249"/><rect x="479.4" y="112" width="3.5" height="2" fill="#a9336c"/><rect x="479.4" y="114" width="3.5" height="2" fill="#ce5547"/><rect x="479.4" y="116" width="3.5" height="2" fill="#c34454"/><rect x="479.5" y="118" width="3.5" height="2" fill="#db6838"/><rect x="479.5" y="120" width="3.5" height="2" fill="#be3d5a"/><rect x="479.5" y="122" width="3.5" height="2" fill="#de6d34"/><rect x="479.5" y="124" width="3.5" height="2" fill="#bd3c5b"/><rect x="479.5" y="126" width="3.5" height="2" fill="#d05844"/><rect x="479.5" y="128" width="3.6" height="2" fill="#d6623d"/><rect x="479.5" y="130" width="3.6" height="2" fill="#c94c4e"/><rect x="479.5" y="132" width="3.6" height="2" fill="#ea8026"/><rect x="479.5" y="134" width="3.6" height="2" fill="#e5792c"/><rect x="479.5" y="136" width="3.6" height="2" fill="#df6f33"/><rect x="479.5" y="138" width="3.6" height="2" fill="#e4772d"/><rect x="479.5" y="140" width="3.7" height="2" fill="#eb8224"/><rect x="479.5" y="142" width="3.7" height="2" fill="#de6d34"/><rect x="479.5" y="144" width="3.7" height="2" fill="#d35d41"/><rect x="479.5" y="146" width="3.7" height="2" fill="#de6d34"/><rect x="479.5" y="148" width="3.7" height="2" fill="#d35d41"/><rect x="479.5" y="150" width="3.7" height="2" fill="#f79c17"/><rect x="479.5" y="152" width="3.8" height="2" fill="#e5782c"/><rect x="479.5" y="154" width="3.8" height="2" fill="#f69a17"/><rect x="479.5" y="156" width="3.8" height="2" fill="#eb8125"/><rect x="479.5" y="158" width="3.8" height="2" fill="#eb8125"/><rect x="479.5" y="160" width="3.8" height="2" fill="#e2742f"/><rect x="479.5" y="162" width="3.8" height="2" fill="#e67a2b"/><rect x="479.5" y="164" width="3.8" height="2" fill="#e67a2b"/><rect x="479.5" y="166" width="3.9" height="2" fill="#f69b17"/><rect x="479.5" y="168" width="3.9" height="2" fill="#f69b17"/><rect x="479.5" y="170" width="3.9" height="2" fill="#fab411"/><rect x="479.5" y="172" width="3.9" height="2" fill="#f9aa14"/><rect x="479.5" y="174" width="3.9" height="2" fill="#ed8423"/><rect x="479.5" y="176" width="3.9" height="2" fill="#f7a016"/><rect x="479.5" y="178" width="4.0" height="2" fill="#f79d17"/><rect x="479.5" y="180" width="4.0" height="2" fill="#fbba10"/><rect x="479.5" y="182" width="4.0" height="2" fill="#fbbc10"/><rect x="479.5" y="184" width="4.0" height="2" fill="#fbbc10"/><rect x="479.5" y="186" width="4.0" height="2" fill="#f59319"/><rect x="479.5" y="188" width="4.0" height="2" fill="#fcbf0f"/><rect x="479.5" y="190" width="4.1" height="2" fill="#f69b17"/><rect x="479.5" y="192" width="4.1" height="2" fill="#fcc10f"/><rect x="479.5" y="194" width="4.1" height="2" fill="#f69a17"/><rect x="479.5" y="196" width="4.1" height="2" fill="#f8a315"/><rect x="479.5" y="198" width="4.1" height="2" fill="#fbba10"/><rect x="479.5" y="200" width="4.1" height="2" fill="#fdca0d"/><rect x="479.5" y="202" width="4.1" height="2" fill="#fab312"/><rect x="479.5" y="204" width="4.2" height="2" fill="#fbb811"/><rect x="479.5" y="206" width="4.2" height="2" fill="#ffd40b"/><rect x="479.5" y="208" width="4.2" height="2" fill="#fdc70d"/><rect x="479.5" y="210" width="4.2" height="2" fill="#f9aa14"/><rect x="479.5" y="212" width="4.2" height="2" fill="#fcc10f"/><rect x="479.5" y="214" width="4.2" height="2" fill="#fcc10f"/><rect x="479.5" y="216" width="4.3" height="2" fill="#fece0c"/><rect x="479.5" y="218" width="4.3" height="2" fill="#ffdd2c"/><rect x="479.6" y="220" width="4.3" height="2" fill="#fcc00f"/><rect x="479.6" y="222" width="4.3" height="2" fill="#fcc50e"/><rect x="479.7" y="224" width="4.3" height="2" fill="#ffe350"/><rect x="479.7" y="226" width="4.3" height="2" fill="#fcc30e"/><rect x="479.8" y="228" width="4.3" height="2" fill="#fdcc0c"/><rect x="479.8" y="230" width="4.3" height="2" fill="#fff2ad"/><rect x="479.8" y="232" width="4.3" height="2" fill="#fff7c8"/><rect x="479.9" y="234" width="4.4" height="2" fill="#fffef8"/><rect x="479.9" y="236" width="4.4" height="2" fill="#fffce9"/><rect x="480.0" y="238" width="4.4" height="2" fill="#ffffff"/><rect x="480.0" y="240" width="4.4" height="2" fill="#fffce9"/><rect x="480.1" y="242" width="4.4" height="2" fill="#fffdee"/><rect x="480.1" y="244" width="4.4" height="2" fill="#ffffff"/><rect x="480.2" y="246" width="4.4" height="2" fill="#fffdf2"/><rect x="480.2" y="248" width="4.4" height="2" fill="#fffcec"/><rect x="480.3" y="250" width="4.4" height="2" fill="#ffffff"/><rect x="480.3" y="252" width="4.5" height="2" fill="#fffbe6"/><rect x="480.4" y="254" width="4.5" height="2" fill="#ffef98"/><rect x="480.4" y="256" width="4.5" height="2" fill="#fff9d7"/><rect x="480.5" y="258" width="4.5" height="2" fill="#fff3b0"/><rect x="480.5" y="260" width="4.5" height="2" fill="#fed00c"/><rect x="480.5" y="262" width="4.5" height="2" fill="#f8a415"/><rect x="480.5" y="264" width="4.5" height="2" fill="#f79e16"/><rect x="480.6" y="266" width="4.5" height="2" fill="#f7a215"/><rect x="480.6" y="268" width="4.4" height="2" fill="#f7a016"/><rect x="480.6" y="270" width="4.4" height="2" fill="#ea8026"/><rect x="480.6" y="272" width="4.4" height="2" fill="#db6937"/><rect x="480.6" y="274" width="4.4" height="2" fill="#f38d1c"/><rect x="480.7" y="276" width="4.4" height="2" fill="#d25b42"/><rect x="480.7" y="278" width="4.4" height="2" fill="#c54752"/><rect x="480.7" y="280" width="4.4" height="2" fill="#ce5448"/><rect x="480.7" y="282" width="4.3" height="2" fill="#cf5646"/><rect x="480.7" y="284" width="4.3" height="2" fill="#ac3469"/><rect x="480.7" y="286" width="4.3" height="2" fill="#9a2c79"/><rect x="480.8" y="288" width="4.3" height="2" fill="#a7326e"/><rect x="480.8" y="290" width="4.3" height="2" fill="#902881"/><rect x="480.8" y="292" width="4.3" height="2" fill="#8e2883"/><rect x="480.8" y="294" width="4.3" height="2" fill="#a33071"/><rect x="480.8" y="296" width="4.2" height="2" fill="#7f2190"/><rect x="480.9" y="298" width="4.2" height="2" fill="#6f1e99"/><rect x="480.9" y="300" width="4.2" height="2" fill="#731e98"/><rect x="480.9" y="302" width="4.2" height="2" fill="#7c2092"/><rect x="480.9" y="304" width="4.2" height="2" fill="#82228d"/><rect x="480.9" y="306" width="4.2" height="2" fill="#5c1e9f"/><rect x="481.0" y="308" width="4.2" height="2" fill="#7d2092"/><rect x="481.0" y="310" width="4.1" height="2" fill="#701e99"/><rect x="481.0" y="312" width="4.1" height="2" fill="#651e9c"/><rect x="481.0" y="314" width="4.1" height="2" fill="#7b1f94"/><rect x="481.0" y="316" width="4.1" height="2" fill="#4a1ea5"/><rect x="481.1" y="318" width="4.1" height="2" fill="#641e9d"/><rect x="481.1" y="320" width="4.1" height="2" fill="#6e1e99"/><rect x="481.1" y="322" width="4.1" height="2" fill="#541ea2"/><rect x="481.1" y="324" width="4.0" height="2" fill="#521ea3"/><rect x="481.1" y="326" width="4.0" height="2" fill="#661e9c"/><rect x="481.1" y="328" width="4.0" height="2" fill="#5b1ea0"/><rect x="481.2" y="330" width="4.0" height="2" fill="#3a1ea8"/><rect x="481.2" y="332" width="4.0" height="2" fill="#5c1e9f"/><rect x="481.2" y="334" width="4.0" height="2" fill="#5e1e9f"/><rect x="481.2" y="336" width="4.0" height="2" fill="#561ea1"/><rect x="481.2" y="338" width="4.0" height="2" fill="#5f1e9e"/><rect x="481.2" y="340" width="3.9" height="2" fill="#491ea6"/><rect x="481.3" y="342" width="3.9" height="2" fill="#541ea2"/><rect x="481.3" y="344" width="3.9" height="2" fill="#461ea7"/><rect x="481.3" y="346" width="3.9" height="2" fill="#341c9f"/><rect x="481.3" y="348" width="3.9" height="2" fill="#471ea6"/><rect x="481.3" y="350" width="3.9" height="2" fill="#301b9b"/><rect x="481.3" y="352" width="3.9" height="2" fill="#511ea3"/><rect x="481.4" y="354" width="3.9" height="2" fill="#301b9b"/><rect x="481.4" y="356" width="3.9" height="2" fill="#481ea6"/><rect x="481.4" y="358" width="3.9" height="2" fill="#421ea8"/><rect x="481.4" y="360" width="3.8" height="2" fill="#4a1ea5"/><rect x="481.4" y="362" width="3.8" height="2" fill="#2d1a97"/><rect x="481.4" y="364" width="3.8" height="2" fill="#2f1b99"/><rect x="481.4" y="366" width="3.8" height="2" fill="#3d1eaa"/><rect x="481.5" y="368" width="3.8" height="2" fill="#281991"/><rect x="481.5" y="370" width="3.8" height="2" fill="#411ea8"/><rect x="481.5" y="372" width="3.8" height="2" fill="#2a1993"/><rect x="481.5" y="374" width="3.8" height="2" fill="#211789"/><rect x="481.5" y="376" width="3.8" height="2" fill="#3b1ea8"/><rect x="481.5" y="378" width="3.7" height="2" fill="#411ea8"/><rect x="481.6" y="380" width="3.7" height="2" fill="#1a1680"/><rect x="481.6" y="382" width="3.7" height="2" fill="#19157e"/><rect x="481.6" y="384" width="3.7" height="2" fill="#3b1ea9"/><rect x="481.6" y="386" width="3.7" height="2" fill="#1b1681"/><rect x="481.6" y="388" width="3.7" height="2" fill="#201788"/><rect x="481.6" y="390" width="3.7" height="2" fill="#1c1682"/><rect x="481.6" y="392" width="3.7" height="2" fill="#361da3"/><rect x="481.7" y="394" width="3.7" height="2" fill="#201787"/><rect x="481.7" y="396" width="3.6" height="2" fill="#2e1a98"/><rect x="481.7" y="398" width="3.6" height="2" fill="#2c1a96"/><rect x="481.7" y="400" width="3.6" height="2" fill="#141477"/><rect x="481.7" y="402" width="3.6" height="2" fill="#2b1a94"/><rect x="481.7" y="404" width="3.6" height="2" fill="#24188c"/><rect x="481.8" y="406" width="3.6" height="2" fill="#2d1a97"/><rect x="481.8" y="408" width="3.6" height="2" fill="#111164"/><rect x="481.8" y="410" width="3.6" height="2" fill="#291992"/><rect x="481.8" y="412" width="3.6" height="2" fill="#111164"/><rect x="481.8" y="414" width="3.5" height="2" fill="#121269"/><rect x="481.8" y="416" width="3.5" height="2" fill="#1c1682"/><rect x="481.8" y="418" width="3.5" height="2" fill="#23188b"/><rect x="481.9" y="420" width="3.5" height="2" fill="#10105f"/><rect x="481.9" y="422" width="3.5" height="2" fill="#0e0e53"/><rect x="481.9" y="424" width="3.5" height="2" fill="#0f0f58"/><rect x="481.9" y="426" width="3.5" height="2" fill="#201786"/><rect x="481.9" y="428" width="3.5" height="2" fill="#0f0f56"/><rect x="481.9" y="430" width="3.5" height="2" fill="#201787"/><rect x="482.0" y="432" width="3.5" height="2" fill="#1a157f"/><rect x="482.0" y="434" width="3.4" height="2" fill="#1b1680"/><rect x="482.0" y="436" width="3.4" height="2" fill="#111166"/><rect x="482.0" y="438" width="3.4" height="2" fill="#19157e"/><rect x="482.0" y="440" width="3.4" height="2" fill="#0d0d49"/><rect x="482.0" y="442" width="3.4" height="2" fill="#17157b"/><rect x="482.0" y="444" width="3.4" height="2" fill="#17157c"/><rect x="482.1" y="446" width="3.4" height="2" fill="#1a1680"/><rect x="482.1" y="448" width="3.4" height="2" fill="#19157e"/><rect x="482.1" y="450" width="3.4" height="2" fill="#111161"/><rect x="482.1" y="452" width="3.3" height="2" fill="#141478"/><rect x="482.1" y="454" width="3.3" height="2" fill="#0e0e52"/><rect x="482.1" y="456" width="3.3" height="2" fill="#0e0e4e"/><rect x="482.2" y="458" width="3.3" height="2" fill="#0c0c41"/><rect x="482.2" y="460" width="3.3" height="2" fill="#0a0a35"/><rect x="482.2" y="462" width="3.3" height="2" fill="#131375"/><rect x="482.2" y="464" width="3.3" height="2" fill="#0b0b3d"/><rect x="482.2" y="466" width="3.3" height="2" fill="#131372"/><rect x="482.2" y="468" width="3.3" height="2" fill="#0b0b3e"/><rect x="480.5" y="18" width="2.0" height="2" fill="#111161"/><rect x="480.5" y="20" width="2.0" height="2" fill="#111165"/><rect x="480.6" y="22" width="2.0" height="2" fill="#1a157f"/><rect x="480.6" y="24" width="2.0" height="2" fill="#17157b"/><rect x="480.7" y="26" width="2.0" height="2" fill="#1f1785"/><rect x="480.7" y="28" width="2.0" height="2" fill="#2a1a94"/><rect x="480.7" y="30" width="2.1" height="2" fill="#24188c"/><rect x="480.8" y="32" width="2.1" height="2" fill="#1d1684"/><rect x="480.8" y="34" width="2.1" height="2" fill="#341ca0"/><rect x="480.9" y="36" width="2.1" height="2" fill="#341c9f"/><rect x="480.9" y="38" width="2.1" height="2" fill="#271990"/><rect x="480.9" y="40" width="2.1" height="2" fill="#211789"/><rect x="481.0" y="42" width="2.1" height="2" fill="#381da4"/><rect x="481.0" y="44" width="2.1" height="2" fill="#1f1785"/><rect x="481.0" y="46" width="2.1" height="2" fill="#2a1a94"/><rect x="481.1" y="48" width="2.1" height="2" fill="#22188a"/><rect x="481.1" y="50" width="2.2" height="2" fill="#451ea7"/><rect x="481.2" y="52" width="2.2" height="2" fill="#391da6"/><rect x="481.2" y="54" width="2.2" height="2" fill="#4c1ea5"/><rect x="481.2" y="56" width="2.2" height="2" fill="#531ea2"/><rect x="481.3" y="58" width="2.2" height="2" fill="#371da4"/><rect x="481.3" y="60" width="2.2" height="2" fill="#4d1ea4"/><rect x="481.4" y="62" width="2.2" height="2" fill="#531ea2"/><rect x="481.4" y="64" width="2.2" height="2" fill="#361da3"/><rect x="481.4" y="66" width="2.2" height="2" fill="#481ea6"/><rect x="481.5" y="68" width="2.2" height="2" fill="#611e9e"/><rect x="481.5" y="70" width="2.3" height="2" fill="#5c1e9f"/><rect x="481.6" y="72" width="2.3" height="2" fill="#6c1e9a"/><rect x="481.6" y="74" width="2.3" height="2" fill="#6b1e9a"/><rect x="481.6" y="76" width="2.3" height="2" fill="#681e9b"/><rect x="481.7" y="78" width="2.3" height="2" fill="#611e9e"/><rect x="481.7" y="80" width="2.3" height="2" fill="#561ea1"/><rect x="481.8" y="82" width="2.3" height="2" fill="#561ea1"/><rect x="481.8" y="84" width="2.3" height="2" fill="#4e1ea4"/><rect x="481.8" y="86" width="2.3" height="2" fill="#581ea1"/><rect x="481.9" y="88" width="2.3" height="2" fill="#7a1f95"/><rect x="481.9" y="90" width="2.4" height="2" fill="#771e96"/><rect x="482.0" y="92" width="2.4" height="2" fill="#892587"/><rect x="482.0" y="94" width="2.4" height="2" fill="#691e9b"/><rect x="482.0" y="96" width="2.4" height="2" fill="#711e98"/><rect x="482.1" y="98" width="2.4" height="2" fill="#80218f"/><rect x="482.1" y="100" width="2.4" height="2" fill="#982c7b"/><rect x="482.1" y="102" width="2.4" height="2" fill="#912981"/><rect x="482.2" y="104" width="2.4" height="2" fill="#902882"/><rect x="482.2" y="106" width="2.4" height="2" fill="#a02f74"/><rect x="482.3" y="108" width="2.4" height="2" fill="#a6326e"/><rect x="482.3" y="110" width="2.5" height="2" fill="#8c2784"/><rect x="482.3" y="112" width="2.5" height="2" fill="#8c2685"/><rect x="482.4" y="114" width="2.5" height="2" fill="#8d2784"/><rect x="482.4" y="116" width="2.5" height="2" fill="#b33764"/><rect x="482.5" y="118" width="2.5" height="2" fill="#c54752"/><rect x="482.5" y="120" width="2.5" height="2" fill="#982c7a"/><rect x="482.5" y="122" width="2.5" height="2" fill="#c03f58"/><rect x="482.5" y="124" width="2.5" height="2" fill="#c03e58"/><rect x="482.5" y="126" width="2.5" height="2" fill="#c74a4f"/><rect x="482.6" y="128" width="2.6" height="2" fill="#b43863"/><rect x="482.6" y="130" width="2.6" height="2" fill="#b93a5e"/><rect x="482.6" y="132" width="2.6" height="2" fill="#cb504b"/><rect x="482.6" y="134" width="2.6" height="2" fill="#ce5547"/><rect x="482.6" y="136" width="2.6" height="2" fill="#d35c42"/><rect x="482.6" y="138" width="2.6" height="2" fill="#ca4f4c"/><rect x="482.6" y="140" width="2.7" height="2" fill="#d9653a"/><rect x="482.7" y="142" width="2.7" height="2" fill="#c84c4e"/><rect x="482.7" y="144" width="2.7" height="2" fill="#d9663a"/><rect x="482.7" y="146" width="2.7" height="2" fill="#d05845"/><rect x="482.7" y="148" width="2.7" height="2" fill="#cd5448"/><rect x="482.7" y="150" width="2.7" height="2" fill="#c54751"/><rect x="482.7" y="152" width="2.8" height="2" fill="#ce5448"/><rect x="482.8" y="154" width="2.8" height="2" fill="#cc5249"/><rect x="482.8" y="156" width="2.8" height="2" fill="#d8643b"/><rect x="482.8" y="158" width="2.8" height="2" fill="#cb504b"/><rect x="482.8" y="160" width="2.8" height="2" fill="#d55f3f"/><rect x="482.8" y="162" width="2.8" height="2" fill="#d6613e"/><rect x="482.8" y="164" width="2.8" height="2" fill="#e2742f"/><rect x="482.8" y="166" width="2.9" height="2" fill="#ea8026"/><rect x="482.9" y="168" width="2.9" height="2" fill="#ee8621"/><rect x="482.9" y="170" width="2.9" height="2" fill="#ee8621"/><rect x="482.9" y="172" width="2.9" height="2" fill="#e97f27"/><rect x="482.9" y="174" width="2.9" height="2" fill="#ed8522"/><rect x="482.9" y="176" width="2.9" height="2" fill="#f69b17"/><rect x="482.9" y="178" width="3.0" height="2" fill="#f79f16"/><rect x="482.9" y="180" width="3.0" height="2" fill="#ed8523"/><rect x="483.0" y="182" width="3.0" height="2" fill="#f8a615"/><rect x="483.0" y="184" width="3.0" height="2" fill="#f8a515"/><rect x="483.0" y="186" width="3.0" height="2" fill="#e2742f"/><rect x="483.0" y="188" width="3.0" height="2" fill="#f8a714"/><rect x="483.0" y="190" width="3.1" height="2" fill="#f18b1e"/><rect x="483.0" y="192" width="3.1" height="2" fill="#ed8522"/><rect x="483.0" y="194" width="3.1" height="2" fill="#e77b2a"/><rect x="483.1" y="196" width="3.1" height="2" fill="#e87c29"/><rect x="483.1" y="198" width="3.1" height="2" fill="#f79f16"/><rect x="483.1" y="200" width="3.1" height="2" fill="#eb8224"/><rect x="483.1" y="202" width="3.1" height="2" fill="#f59219"/><rect x="483.1" y="204" width="3.2" height="2" fill="#f08a1f"/><rect x="483.1" y="206" width="3.2" height="2" fill="#f79d16"/><rect x="483.1" y="208" width="3.2" height="2" fill="#f9ab13"/><rect x="483.2" y="210" width="3.2" height="2" fill="#fab711"/><rect x="483.2" y="212" width="3.2" height="2" fill="#f9aa14"/><rect x="483.2" y="214" width="3.2" height="2" fill="#f59119"/><rect x="483.2" y="216" width="3.3" height="2" fill="#f69817"/><rect x="483.3" y="218" width="3.3" height="2" fill="#fbb910"/><rect x="483.3" y="220" width="3.3" height="2" fill="#f9ab14"/><rect x="483.4" y="222" width="3.3" height="2" fill="#f9ae13"/><rect x="483.5" y="224" width="3.3" height="2" fill="#fab212"/><rect x="483.5" y="226" width="3.3" height="2" fill="#fcc20e"/><rect x="483.6" y="228" width="3.3" height="2" fill="#fbbd10"/><rect x="483.6" y="230" width="3.3" height="2" fill="#ffde36"/><rect x="483.7" y="232" width="3.3" height="2" fill="#fed00c"/><rect x="483.7" y="234" width="3.4" height="2" fill="#ffe870"/><rect x="483.8" y="236" width="3.4" height="2" fill="#ffee95"/><rect x="483.9" y="238" width="3.4" height="2" fill="#fffbe6"/><rect x="483.9" y="240" width="3.4" height="2" fill="#ffeb85"/><rect x="484.0" y="242" width="3.4" height="2" fill="#fff2ad"/><rect x="484.0" y="244" width="3.4" height="2" fill="#ffe976"/><rect x="484.1" y="246" width="3.4" height="2" fill="#fffadd"/><rect x="484.2" y="248" width="3.4" height="2" fill="#fffadf"/><rect x="484.2" y="250" width="3.4" height="2" fill="#fffbe1"/><rect x="484.3" y="252" width="3.5" height="2" fill="#fff6c1"/><rect x="484.3" y="254" width="3.5" height="2" fill="#fffbe3"/><rect x="484.4" y="256" width="3.5" height="2" fill="#ffd80e"/><rect x="484.4" y="258" width="3.5" height="2" fill="#ffd60a"/><rect x="484.5" y="260" width="3.5" height="2" fill="#f9ab13"/><rect x="484.5" y="262" width="3.5" height="2" fill="#ee8621"/><rect x="484.5" y="264" width="3.5" height="2" fill="#ea8126"/><rect x="484.5" y="266" width="3.5" height="2" fill="#f69518"/><rect x="484.5" y="268" width="3.4" height="2" fill="#e17330"/><rect x="484.5" y="270" width="3.4" height="2" fill="#ca4e4c"/><rect x="484.5" y="272" width="3.4" height="2" fill="#db6a37"/><rect x="484.5" y="274" width="3.4" height="2" fill="#b43862"/><rect x="484.5" y="276" width="3.4" height="2" fill="#b8395f"/><rect x="484.5" y="278" width="3.4" height="2" fill="#a33072"/><rect x="484.5" y="280" width="3.4" height="2" fill="#a6326f"/><rect x="484.6" y="282" width="3.3" height="2" fill="#8b2686"/><rect x="484.6" y="284" width="3.3" height="2" fill="#8b2686"/><rect x="484.6" y="286" width="3.3" height="2" fill="#721e98"/><rect x="484.6" y="288" width="3.3" height="2" fill="#691e9b"/><rect x="484.6" y="290" width="3.3" height="2" fill="#7f2190"/><rect x="484.6" y="292" width="3.3" height="2" fill="#892587"/><rect x="484.6" y="294" width="3.3" height="2" fill="#5e1e9f"/><rect x="484.6" y="296" width="3.2" height="2" fill="#6c1e9a"/><rect x="484.6" y="298" width="3.2" height="2" fill="#691e9b"/><rect x="484.6" y="300" width="3.2" height="2" fill="#3d1eaa"/><rect x="484.6" y="302" width="3.2" height="2" fill="#691e9b"/><rect x="484.6" y="304" width="3.2" height="2" fill="#491ea6"/><rect x="484.6" y="306" width="3.2" height="2" fill="#621e9d"/><rect x="484.6" y="308" width="3.2" height="2" fill="#421ea8"/><rect x="484.6" y="310" width="3.1" height="2" fill="#5b1ea0"/><rect x="484.6" y="312" width="3.1" height="2" fill="#3c1eaa"/><rect x="484.6" y="314" width="3.1" height="2" fill="#4e1ea4"/><rect x="484.6" y="316" width="3.1" height="2" fill="#381da4"/><rect x="484.6" y="318" width="3.1" height="2" fill="#361ca2"/><rect x="484.6" y="320" width="3.1" height="2" fill="#371da4"/><rect x="484.6" y="322" width="3.1" height="2" fill="#461ea7"/><rect x="484.7" y="324" width="3.0" height="2" fill="#421ea8"/><rect x="484.7" y="326" width="3.0" height="2" fill="#511ea3"/><rect x="484.7" y="328" width="3.0" height="2" fill="#24188c"/><rect x="484.7" y="330" width="3.0" height="2" fill="#381da5"/><rect x="484.7" y="332" width="3.0" height="2" fill="#3d1eaa"/><rect x="484.7" y="334" width="3.0" height="2" fill="#2f1b99"/><rect x="484.7" y="336" width="3.0" height="2" fill="#211788"/><rect x="484.7" y="338" width="3.0" height="2" fill="#321b9d"/><rect x="484.7" y="340" width="2.9" height="2" fill="#24188c"/><rect x="484.7" y="342" width="2.9" height="2" fill="#301b9b"/><rect x="484.7" y="344" width="2.9" height="2" fill="#391da7"/><rect x="484.7" y="346" width="2.9" height="2" fill="#2a1a94"/><rect x="484.7" y="348" width="2.9" height="2" fill="#391da6"/><rect x="484.7" y="350" width="2.9" height="2" fill="#27198f"/><rect x="484.7" y="352" width="2.9" height="2" fill="#361da3"/><rect x="484.7" y="354" width="2.9" height="2" fill="#1e1785"/><rect x="484.7" y="356" width="2.9" height="2" fill="#1b1681"/><rect x="484.7" y="358" width="2.9" height="2" fill="#2a1993"/><rect x="484.7" y="360" width="2.8" height="2" fill="#281990"/><rect x="484.7" y="362" width="2.8" height="2" fill="#211788"/><rect x="484.7" y="364" width="2.8" height="2" fill="#13136f"/><rect x="484.8" y="366" width="2.8" height="2" fill="#2e1b99"/><rect x="484.8" y="368" width="2.8" height="2" fill="#1c1682"/><rect x="484.8" y="370" width="2.8" height="2" fill="#1c1683"/><rect x="484.8" y="372" width="2.8" height="2" fill="#12126b"/><rect x="484.8" y="374" width="2.8" height="2" fill="#111167"/><rect x="484.8" y="376" width="2.8" height="2" fill="#17157c"/><rect x="484.8" y="378" width="2.7" height="2" fill="#121269"/><rect x="484.8" y="380" width="2.7" height="2" fill="#12126c"/><rect x="484.8" y="382" width="2.7" height="2" fill="#1c1681"/><rect x="484.8" y="384" width="2.7" height="2" fill="#221789"/><rect x="484.8" y="386" width="2.7" height="2" fill="#10105f"/><rect x="484.8" y="388" width="2.7" height="2" fill="#19157e"/><rect x="484.8" y="390" width="2.7" height="2" fill="#0f0f54"/><rect x="484.8" y="392" width="2.7" height="2" fill="#0d0d4b"/><rect x="484.8" y="394" width="2.7" height="2" fill="#0f0f54"/><rect x="484.8" y="396" width="2.6" height="2" fill="#141478"/><rect x="484.8" y="398" width="2.6" height="2" fill="#111163"/><rect x="484.8" y="400" width="2.6" height="2" fill="#131372"/><rect x="484.8" y="402" width="2.6" height="2" fill="#0f0f57"/><rect x="484.8" y="404" width="2.6" height="2" fill="#16147a"/><rect x="484.8" y="406" width="2.6" height="2" fill="#111164"/><rect x="484.9" y="408" width="2.6" height="2" fill="#0d0d4c"/><rect x="484.9" y="410" width="2.6" height="2" fill="#0c0c44"/><rect x="484.9" y="412" width="2.6" height="2" fill="#10105f"/><rect x="484.9" y="414" width="2.5" height="2" fill="#0e0e52"/><rect x="484.9" y="416" width="2.5" height="2" fill="#0d0d4a"/><rect x="484.9" y="418" width="2.5" height="2" fill="#0c0c41"/><rect x="484.9" y="420" width="2.5" height="2" fill="#0c0c44"/><rect x="484.9" y="422" width="2.5" height="2" fill="#13136e"/><rect x="484.9" y="424" width="2.5" height="2" fill="#111164"/><rect x="484.9" y="426" width="2.5" height="2" fill="#0a0a32"/><rect x="484.9" y="428" width="2.5" height="2" fill="#0a0a38"/><rect x="484.9" y="430" width="2.5" height="2" fill="#10105e"/><rect x="484.9" y="432" width="2.5" height="2" fill="#0a0a35"/><rect x="484.9" y="434" width="2.4" height="2" fill="#090930"/><rect x="484.9" y="436" width="2.4" height="2" fill="#10105f"/><rect x="484.9" y="438" width="2.4" height="2" fill="#10105f"/><rect x="484.9" y="440" width="2.4" height="2" fill="#0a0a37"/><rect x="484.9" y="442" width="2.4" height="2" fill="#0a0a37"/><rect x="484.9" y="444" width="2.4" height="2" fill="#0a0a37"/><rect x="484.9" y="446" width="2.4" height="2" fill="#090931"/><rect x="484.9" y="448" width="2.4" height="2" fill="#080828"/><rect x="485.0" y="450" width="2.4" height="2" fill="#0f0f56"/><rect x="485.0" y="452" width="2.3" height="2" fill="#040411"/><rect x="485.0" y="454" width="2.3" height="2" fill="#04040e"/><rect x="485.0" y="456" width="2.3" height="2" fill="#0d0d48"/><rect x="485.0" y="458" width="2.3" height="2" fill="#0a0a37"/><rect x="485.0" y="460" width="2.3" height="2" fill="#090931"/><rect x="485.0" y="462" width="2.3" height="2" fill="#0a0a38"/><rect x="485.0" y="464" width="2.3" height="2" fill="#04040e"/><rect x="485.0" y="466" width="2.3" height="2" fill="#04040d"/><rect x="485.0" y="468" width="2.3" height="2" fill="#050516"/><ellipse cx="488" cy="245" rx="9.5" ry="12" fill="#8d2784"/><ellipse cx="486" cy="243" rx="7.5" ry="13" fill="#fab411"/><ellipse cx="484.5" cy="240.5" rx="5.5" ry="12" fill="#ffffff"/><path d="M484 236 L490 238 L493 241 L491 244 L496 247 L493 250 L490 252 L486 254 L483 250 Z" fill="#fffcea"/><rect x="68.5" y="211" width="3.0" height="2" fill="#0d0d48"/><rect x="68.5" y="213" width="3.0" height="2" fill="#1c1682"/><rect x="68.5" y="215" width="3.1" height="2" fill="#19157e"/><rect x="68.4" y="217" width="3.1" height="2" fill="#151479"/><rect x="68.4" y="219" width="3.1" height="2" fill="#151479"/><rect x="68.4" y="221" width="3.2" height="2" fill="#121269"/><rect x="68.4" y="223" width="3.2" height="2" fill="#2d1a97"/><rect x="68.4" y="225" width="3.2" height="2" fill="#131374"/><rect x="68.4" y="227" width="3.3" height="2" fill="#2e1b99"/><rect x="68.3" y="229" width="3.3" height="2" fill="#2f1b9a"/><rect x="68.3" y="231" width="3.3" height="2" fill="#26198f"/><rect x="68.3" y="233" width="3.4" height="2" fill="#331c9f"/><rect x="68.3" y="235" width="3.4" height="2" fill="#2b1a95"/><rect x="68.3" y="237" width="3.4" height="2" fill="#24188c"/><rect x="68.3" y="239" width="3.5" height="2" fill="#361ca2"/><rect x="68.2" y="241" width="3.6" height="2" fill="#521ea3"/><rect x="68.1" y="243" width="3.9" height="2" fill="#621e9d"/><rect x="67.9" y="245" width="4.1" height="2" fill="#b23764"/><rect x="67.8" y="247" width="4.4" height="2" fill="#ce5547"/><rect x="67.7" y="249" width="4.6" height="2" fill="#ed8522"/><rect x="67.6" y="251" width="4.9" height="2" fill="#f9ac13"/><rect x="67.5" y="253" width="4.9" height="2" fill="#fab511"/><rect x="67.6" y="255" width="4.8" height="2" fill="#f08a1f"/><rect x="67.7" y="257" width="4.6" height="2" fill="#f79d16"/><rect x="67.8" y="259" width="4.4" height="2" fill="#ee8621"/><rect x="67.9" y="261" width="4.3" height="2" fill="#d25b42"/><rect x="67.9" y="263" width="4.1" height="2" fill="#a9336c"/><rect x="68.0" y="265" width="4.0" height="2" fill="#6e1e99"/><rect x="68.1" y="267" width="3.8" height="2" fill="#3a1da7"/><rect x="68.2" y="269" width="3.6" height="2" fill="#401ea9"/><rect x="68.3" y="271" width="3.5" height="2" fill="#2d1a97"/><rect x="68.3" y="273" width="3.3" height="2" fill="#18157d"/><rect x="68.4" y="275" width="3.2" height="2" fill="#22188a"/><rect x="187.8" y="240" width="2.5" height="2" fill="#101060"/><rect x="187.8" y="242" width="2.5" height="2" fill="#16147a"/><rect x="187.8" y="244" width="2.5" height="2" fill="#12126c"/><rect x="187.8" y="246" width="2.5" height="2" fill="#18157c"/><rect x="187.8" y="248" width="2.5" height="2" fill="#1e1785"/><rect x="187.8" y="250" width="2.5" height="2" fill="#391da6"/><rect x="187.8" y="252" width="2.5" height="2" fill="#351ca1"/><rect x="187.8" y="254" width="2.5" height="2" fill="#151479"/><rect x="187.8" y="256" width="2.5" height="2" fill="#16157b"/><rect x="187.8" y="258" width="2.5" height="2" fill="#111162"/><rect x="187.8" y="260" width="2.5" height="2" fill="#10105f"/><rect x="382.8" y="250" width="2.5" height="2" fill="#12126a"/><rect x="382.8" y="252" width="2.5" height="2" fill="#111161"/><rect x="382.8" y="254" width="2.5" height="2" fill="#17157c"/><rect x="382.8" y="256" width="2.5" height="2" fill="#1a157f"/><rect x="382.8" y="258" width="2.5" height="2" fill="#13136f"/><rect x="382.8" y="260" width="2.5" height="2" fill="#111163"/><rect x="382.8" y="262" width="2.5" height="2" fill="#12126a"/><rect x="382.8" y="264" width="2.5" height="2" fill="#111166"/><rect x="382.8" y="266" width="2.5" height="2" fill="#0c0c44"/><rect x="283.2" y="138" width="3.5" height="2" fill="#24188c"/><rect x="283.2" y="140" width="3.5" height="2" fill="#131374"/><rect x="283.2" y="142" width="3.5" height="2" fill="#23188a"/><rect x="283.2" y="144" width="3.5" height="2" fill="#1b1681"/><rect x="283.2" y="146" width="3.6" height="2" fill="#10105b"/><rect x="283.2" y="148" width="3.6" height="2" fill="#17157c"/><rect x="283.2" y="150" width="3.6" height="2" fill="#2b1a94"/><rect x="283.2" y="152" width="3.6" height="2" fill="#22188a"/><rect x="283.2" y="154" width="3.6" height="2" fill="#10105b"/><rect x="283.2" y="156" width="3.6" height="2" fill="#2b1a95"/><rect x="283.2" y="158" width="3.7" height="2" fill="#1f1786"/><rect x="283.2" y="160" width="3.7" height="2" fill="#201787"/><rect x="283.2" y="162" width="3.7" height="2" fill="#281991"/><rect x="283.1" y="164" width="3.7" height="2" fill="#211788"/><rect x="283.1" y="166" width="3.7" height="2" fill="#23188b"/><rect x="283.1" y="168" width="3.7" height="2" fill="#23188b"/><rect x="283.1" y="170" width="3.8" height="2" fill="#2b1a95"/><rect x="283.1" y="172" width="3.8" height="2" fill="#2f1b9a"/><rect x="283.1" y="174" width="3.8" height="2" fill="#131370"/><rect x="283.1" y="176" width="3.8" height="2" fill="#26188e"/><rect x="283.1" y="178" width="3.8" height="2" fill="#1c1682"/><rect x="283.1" y="180" width="3.8" height="2" fill="#291992"/><rect x="283.1" y="182" width="3.9" height="2" fill="#1e1684"/><rect x="283.1" y="184" width="3.9" height="2" fill="#291993"/><rect x="283.1" y="186" width="3.9" height="2" fill="#1e1785"/><rect x="283.0" y="188" width="3.9" height="2" fill="#201788"/><rect x="283.0" y="190" width="3.9" height="2" fill="#22188a"/><rect x="283.0" y="192" width="3.9" height="2" fill="#351ca1"/><rect x="283.0" y="194" width="4.0" height="2" fill="#2c1a96"/><rect x="283.0" y="196" width="4.0" height="2" fill="#2a1993"/><rect x="283.0" y="198" width="4.0" height="2" fill="#3f1ea9"/><rect x="283.0" y="200" width="4.0" height="2" fill="#351ca2"/><rect x="283.0" y="202" width="4.1" height="2" fill="#2d1a97"/><rect x="282.9" y="204" width="4.1" height="2" fill="#461ea7"/><rect x="282.9" y="206" width="4.2" height="2" fill="#591ea0"/><rect x="282.9" y="208" width="4.2" height="2" fill="#301b9b"/><rect x="282.9" y="210" width="4.3" height="2" fill="#561ea1"/><rect x="282.8" y="212" width="4.3" height="2" fill="#691e9b"/><rect x="282.8" y="214" width="4.4" height="2" fill="#4b1ea5"/><rect x="282.8" y="216" width="4.5" height="2" fill="#681e9b"/><rect x="282.7" y="218" width="4.5" height="2" fill="#4c1ea5"/><rect x="282.7" y="220" width="4.6" height="2" fill="#781e96"/><rect x="282.7" y="222" width="4.6" height="2" fill="#9c2d77"/><rect x="282.7" y="224" width="4.7" height="2" fill="#ac3469"/><rect x="282.6" y="226" width="4.7" height="2" fill="#a02f74"/><rect x="282.6" y="228" width="4.8" height="2" fill="#c34355"/><rect x="282.6" y="230" width="4.9" height="2" fill="#d8643b"/><rect x="282.5" y="232" width="4.9" height="2" fill="#d05844"/><rect x="282.5" y="234" width="5.0" height="2" fill="#e87e28"/><rect x="282.5" y="236" width="5.0" height="2" fill="#cf5746"/><rect x="282.5" y="238" width="4.9" height="2" fill="#eb8125"/><rect x="282.6" y="240" width="4.9" height="2" fill="#d35c42"/><rect x="282.6" y="242" width="4.8" height="2" fill="#de6d35"/><rect x="282.6" y="244" width="4.7" height="2" fill="#e77b2a"/><rect x="282.7" y="246" width="4.7" height="2" fill="#e97e28"/><rect x="282.7" y="248" width="4.6" height="2" fill="#e2742f"/><rect x="282.7" y="250" width="4.6" height="2" fill="#be3c5a"/><rect x="282.7" y="252" width="4.5" height="2" fill="#a23072"/><rect x="282.8" y="254" width="4.5" height="2" fill="#631e9d"/><rect x="282.8" y="256" width="4.4" height="2" fill="#371da3"/><rect x="282.8" y="258" width="4.3" height="2" fill="#421ea8"/><rect x="282.9" y="260" width="4.3" height="2" fill="#3d1eaa"/><rect x="282.9" y="262" width="4.2" height="2" fill="#381da5"/><rect x="282.9" y="264" width="4.2" height="2" fill="#2f1b99"/><rect x="282.9" y="266" width="4.1" height="2" fill="#24188c"/><rect x="283.0" y="268" width="4.1" height="2" fill="#1e1684"/><rect x="283.0" y="270" width="4.0" height="2" fill="#2e1a98"/><rect x="283.0" y="272" width="4.0" height="2" fill="#201786"/><rect x="283.1" y="274" width="3.9" height="2" fill="#331c9f"/><rect x="283.1" y="276" width="3.8" height="2" fill="#311b9c"/><rect x="283.1" y="278" width="3.8" height="2" fill="#101061"/><rect x="283.1" y="280" width="3.7" height="2" fill="#23188b"/><rect x="283.2" y="282" width="3.7" height="2" fill="#131371"/><rect x="283.2" y="284" width="3.6" height="2" fill="#1d1683"/><rect x="283.2" y="286" width="3.6" height="2" fill="#0e0e4d"/><rect x="608.2" y="232" width="3.5" height="2" fill="#201787"/><rect x="608.2" y="234" width="3.5" height="2" fill="#291992"/><rect x="608.2" y="236" width="3.5" height="2" fill="#481ea6"/><rect x="608.2" y="238" width="3.5" height="2" fill="#5c1e9f"/><rect x="608.2" y="240" width="3.5" height="2" fill="#962b7c"/><rect x="608.2" y="242" width="3.5" height="2" fill="#962b7d"/><rect x="608.2" y="244" width="3.5" height="2" fill="#a23072"/><rect x="608.2" y="246" width="3.5" height="2" fill="#872489"/><rect x="608.2" y="248" width="3.5" height="2" fill="#781e96"/><rect x="608.2" y="250" width="3.5" height="2" fill="#571ea1"/><rect x="608.2" y="252" width="3.5" height="2" fill="#401ea9"/><rect x="608.2" y="254" width="3.5" height="2" fill="#3c1eaa"/><rect x="608.2" y="256" width="3.5" height="2" fill="#17157b"/><rect x="619.2" y="229" width="3.5" height="2" fill="#13136f"/><rect x="619.2" y="231" width="3.5" height="2" fill="#24188c"/><rect x="619.2" y="233" width="3.5" height="2" fill="#3b1ea9"/><rect x="619.2" y="235" width="3.5" height="2" fill="#5c1e9f"/><rect x="619.2" y="237" width="3.5" height="2" fill="#741e97"/><rect x="619.2" y="239" width="3.5" height="2" fill="#ad3569"/><rect x="619.2" y="241" width="3.5" height="2" fill="#912981"/><rect x="619.2" y="243" width="3.5" height="2" fill="#521ea3"/><rect x="619.2" y="245" width="3.5" height="2" fill="#2c1a96"/><rect x="619.2" y="247" width="3.5" height="2" fill="#23188b"/><rect x="619.2" y="249" width="3.5" height="2" fill="#111165"/><rect x="443.7" y="138.5" width="3" height="3" fill="#17157c"/><rect x="444.3" y="141.4" width="3" height="3" fill="#141476"/><rect x="444.6" y="144.4" width="3" height="3" fill="#101060"/><rect x="445.2" y="147.3" width="3" height="3" fill="#1e1785"/><rect x="447.0" y="153.2" width="3" height="3" fill="#111162"/><rect x="447.1" y="156.2" width="3" height="3" fill="#13136f"/><rect x="447.5" y="159.1" width="3" height="3" fill="#0e0e53"/><rect x="448.5" y="162.1" width="3" height="3" fill="#111161"/><rect x="449.4" y="165.0" width="3" height="3" fill="#24188c"/><rect x="449.8" y="168.0" width="3" height="3" fill="#24188c"/><rect x="450.4" y="170.9" width="3" height="3" fill="#141476"/><rect x="451.0" y="173.9" width="3" height="3" fill="#12126a"/><rect x="451.5" y="176.8" width="3" height="3" fill="#17157b"/><rect x="452.9" y="182.7" width="3" height="3" fill="#211789"/><rect x="453.1" y="185.7" width="3" height="3" fill="#141476"/><rect x="454.3" y="188.6" width="3" height="3" fill="#23188b"/><rect x="454.5" y="191.6" width="3" height="3" fill="#26188e"/><rect x="455.2" y="194.5" width="3" height="3" fill="#23188a"/><rect x="456.0" y="197.5" width="3" height="3" fill="#141477"/><rect x="457.2" y="200.4" width="3" height="3" fill="#1a157f"/><rect x="457.8" y="203.4" width="3" height="3" fill="#22188a"/><rect x="457.8" y="206.3" width="3" height="3" fill="#111164"/><rect x="458.8" y="209.3" width="3" height="3" fill="#131374"/><rect x="458.7" y="212.2" width="3" height="3" fill="#111164"/><rect x="459.6" y="215.2" width="3" height="3" fill="#1b1680"/><rect x="461.0" y="218.1" width="3" height="3" fill="#141477"/><rect x="461.1" y="221.1" width="3" height="3" fill="#0e0e50"/><rect x="461.8" y="224.0" width="3" height="3" fill="#0e0e53"/><rect x="463.2" y="229.9" width="3" height="3" fill="#201787"/><rect x="463.2" y="232.9" width="3" height="3" fill="#10105c"/><rect x="464.6" y="235.8" width="3" height="3" fill="#12126a"/><rect x="464.4" y="238.8" width="3" height="3" fill="#121269"/><rect x="464.8" y="241.7" width="3" height="3" fill="#111165"/><rect x="465.5" y="244.7" width="3" height="3" fill="#141476"/><rect x="468.3" y="253.5" width="3" height="3" fill="#131375"/><rect x="496.6" y="423.5" width="3" height="3" fill="#22188a"/><rect x="498.1" y="429.7" width="3" height="3" fill="#0e0e50"/><rect x="499.0" y="432.9" width="3" height="3" fill="#0f0f57"/><rect x="499.6" y="436.0" width="3" height="3" fill="#17157c"/><rect x="499.6" y="439.1" width="3" height="3" fill="#17157c"/><rect x="500.3" y="442.2" width="3" height="3" fill="#141478"/><rect x="501.2" y="445.4" width="3" height="3" fill="#141475"/><rect x="502.3" y="448.5" width="3" height="3" fill="#1e1785"/><rect x="502.7" y="451.6" width="3" height="3" fill="#12126b"/><rect x="503.4" y="454.7" width="3" height="3" fill="#10105e"/><rect x="504.0" y="457.8" width="3" height="3" fill="#121268"/><rect x="505.9" y="467.2" width="3" height="3" fill="#131370"/><rect x="506.6" y="470.3" width="3" height="3" fill="#111166"/><rect x="506.9" y="473.5" width="3" height="3" fill="#10105f"/><rect x="507.4" y="476.6" width="3" height="3" fill="#1b1681"/><rect x="507.8" y="479.7" width="3" height="3" fill="#1f1786"/><rect x="508.4" y="482.8" width="3" height="3" fill="#0f0f59"/><rect x="509.9" y="485.9" width="3" height="3" fill="#24188c"/><rect x="509.8" y="489.1" width="3" height="3" fill="#111162"/><rect x="511.2" y="492.2" width="3" height="3" fill="#0f0f54"/><rect x="511.4" y="495.3" width="3" height="3" fill="#111162"/><rect x="512.5" y="498.4" width="3" height="3" fill="#10105d"/><rect x="513.0" y="501.5" width="3" height="3" fill="#111167"/><rect x="512.9" y="504.7" width="3" height="3" fill="#0e0e50"/><rect x="514.5" y="507.8" width="3" height="3" fill="#18157d"/><rect x="514.3" y="510.9" width="3" height="3" fill="#17157b"/><rect x="514.6" y="514.0" width="3" height="3" fill="#131370"/><rect x="516.2" y="517.2" width="3" height="3" fill="#0e0e53"/><rect x="515.9" y="520.3" width="3" height="3" fill="#13136e"/><rect x="516.9" y="523.4" width="3" height="3" fill="#10105f"/><rect x="518.0" y="526.5" width="3" height="3" fill="#1b1680"/><rect x="519.2" y="532.8" width="3" height="3" fill="#141477"/><rect x="519.9" y="535.9" width="3" height="3" fill="#111165"/><rect x="520.4" y="539.0" width="3" height="3" fill="#111165"/><rect x="521.4" y="545.3" width="3" height="3" fill="#151479"/><rect x="522.3" y="548.4" width="3" height="3" fill="#22188a"/><rect x="522.3" y="551.5" width="3" height="3" fill="#12126b"/><rect x="523.5" y="553.5" width="3" height="3" fill="#0d0d4c"/><rect x="526.0" y="556.5" width="3" height="3" fill="#0f0f58"/><rect x="528.6" y="559.5" width="3" height="3" fill="#0e0e4e"/><rect x="530.5" y="562.5" width="3" height="3" fill="#0d0d4c"/><rect x="531.9" y="565.5" width="3" height="3" fill="#0c0c42"/><rect x="536.7" y="571.5" width="3" height="3" fill="#0c0c40"/><rect x="538.9" y="574.5" width="3" height="3" fill="#121269"/></g><g><rect x="482.1" y="60" width="1.2" height="1.2" fill="#301008" opacity="0.75"/><rect x="482.2" y="63" width="1.2" height="1.2" fill="#301008" opacity="0.75"/><rect x="482.2" y="66" width="1.2" height="1.2" fill="#301008" opacity="0.75"/><rect x="482.3" y="69" width="1.2" height="1.2" fill="#301008" opacity="0.75"/><rect x="482.4" y="72" width="1.2" height="1.2" fill="#301008" opacity="0.75"/><rect x="482.4" y="75" width="1.2" height="1.2" fill="#301008" opacity="0.75"/><rect x="482.5" y="78" width="1.2" height="1.2" fill="#301008" opacity="0.75"/><rect x="482.5" y="81" width="1.2" height="1.2" fill="#301008" opacity="0.75"/><rect x="482.6" y="84" width="1.2" height="1.2" fill="#301008" opacity="0.75"/><rect x="482.7" y="87" width="1.2" height="1.2" fill="#301008" opacity="0.75"/><rect x="482.7" y="90" width="1.2" height="1.2" fill="#301008" opacity="0.75"/><rect x="482.8" y="93" width="1.2" height="1.2" fill="#301008" opacity="0.75"/><rect x="482.8" y="96" width="1.2" height="1.2" fill="#301008" opacity="0.75"/><rect x="482.9" y="99" width="1.2" height="1.2" fill="#301008" opacity="0.75"/><rect x="482.9" y="102" width="1.2" height="1.2" fill="#301008" opacity="0.75"/><rect x="483.0" y="105" width="1.2" height="1.2" fill="#301008" opacity="0.75"/><rect x="483.1" y="108" width="1.2" height="1.2" fill="#301008" opacity="0.75"/><rect x="483.1" y="111" width="1.2" height="1.2" fill="#301008" opacity="0.75"/><rect x="483.2" y="114" width="1.2" height="1.2" fill="#301008" opacity="0.75"/><rect x="483.2" y="117" width="1.2" height="1.2" fill="#301008" opacity="0.75"/><rect x="483.3" y="120" width="1.2" height="1.2" fill="#301008" opacity="0.75"/><rect x="483.3" y="123" width="1.2" height="1.2" fill="#301008" opacity="0.75"/><rect x="483.3" y="126" width="1.2" height="1.2" fill="#301008" opacity="0.75"/><rect x="483.4" y="129" width="1.2" height="1.2" fill="#301008" opacity="0.75"/><rect x="483.4" y="132" width="1.2" height="1.2" fill="#301008" opacity="0.75"/><rect x="483.4" y="135" width="1.2" height="1.2" fill="#301008" opacity="0.75"/><rect x="483.4" y="138" width="1.2" height="1.2" fill="#301008" opacity="0.75"/><rect x="483.5" y="141" width="1.2" height="1.2" fill="#301008" opacity="0.75"/><rect x="483.5" y="144" width="1.2" height="1.2" fill="#301008" opacity="0.75"/><rect x="483.5" y="147" width="1.2" height="1.2" fill="#301008" opacity="0.75"/><rect x="483.5" y="150" width="1.2" height="1.2" fill="#301008" opacity="0.75"/><rect x="483.5" y="153" width="1.2" height="1.2" fill="#301008" opacity="0.75"/><rect x="483.6" y="156" width="1.2" height="1.2" fill="#301008" opacity="0.75"/><rect x="483.6" y="159" width="1.2" height="1.2" fill="#301008" opacity="0.75"/><rect x="483.6" y="162" width="1.2" height="1.2" fill="#301008" opacity="0.75"/><rect x="483.6" y="165" width="1.2" height="1.2" fill="#301008" opacity="0.75"/><rect x="483.7" y="168" width="1.2" height="1.2" fill="#301008" opacity="0.75"/><rect x="483.7" y="171" width="1.2" height="1.2" fill="#301008" opacity="0.75"/><rect x="483.7" y="174" width="1.2" height="1.2" fill="#301008" opacity="0.75"/><rect x="483.7" y="177" width="1.2" height="1.2" fill="#301008" opacity="0.75"/><rect x="483.7" y="180" width="1.2" height="1.2" fill="#301008" opacity="0.75"/><rect x="483.8" y="183" width="1.2" height="1.2" fill="#301008" opacity="0.75"/><rect x="483.8" y="186" width="1.2" height="1.2" fill="#301008" opacity="0.75"/><rect x="483.8" y="189" width="1.2" height="1.2" fill="#301008" opacity="0.75"/><rect x="483.8" y="192" width="1.2" height="1.2" fill="#301008" opacity="0.75"/><rect x="483.9" y="195" width="1.2" height="1.2" fill="#301008" opacity="0.75"/><rect x="483.9" y="198" width="1.2" height="1.2" fill="#301008" opacity="0.75"/><rect x="483.9" y="201" width="1.2" height="1.2" fill="#301008" opacity="0.75"/><rect x="483.9" y="204" width="1.2" height="1.2" fill="#301008" opacity="0.75"/><rect x="483.9" y="207" width="1.2" height="1.2" fill="#301008" opacity="0.75"/><rect x="484.0" y="210" width="1.2" height="1.2" fill="#301008" opacity="0.75"/><rect x="484.0" y="213" width="1.2" height="1.2" fill="#301008" opacity="0.75"/><rect x="484.0" y="216" width="1.2" height="1.2" fill="#301008" opacity="0.75"/><rect x="484.1" y="219" width="1.2" height="1.2" fill="#301008" opacity="0.75"/><rect x="484.2" y="222" width="1.2" height="1.2" fill="#301008" opacity="0.75"/><rect x="484.3" y="225" width="1.2" height="1.2" fill="#301008" opacity="0.75"/><rect x="482.9" y="256" width="1.2" height="1.2" fill="#301008" opacity="0.75"/><rect x="487.4" y="257" width="1.2" height="1.2" fill="#301008" opacity="0.6"/><rect x="483.0" y="259" width="1.2" height="1.2" fill="#301008" opacity="0.75"/><rect x="487.5" y="260" width="1.2" height="1.2" fill="#301008" opacity="0.6"/><rect x="483.0" y="262" width="1.2" height="1.2" fill="#301008" opacity="0.75"/><rect x="487.5" y="263" width="1.2" height="1.2" fill="#301008" opacity="0.6"/><rect x="483.0" y="265" width="1.2" height="1.2" fill="#301008" opacity="0.75"/><rect x="487.5" y="266" width="1.2" height="1.2" fill="#301008" opacity="0.6"/><rect x="483.0" y="268" width="1.2" height="1.2" fill="#301008" opacity="0.75"/><rect x="487.5" y="269" width="1.2" height="1.2" fill="#301008" opacity="0.6"/><rect x="483.0" y="271" width="1.2" height="1.2" fill="#301008" opacity="0.75"/><rect x="487.5" y="272" width="1.2" height="1.2" fill="#301008" opacity="0.6"/><rect x="483.0" y="274" width="1.2" height="1.2" fill="#301008" opacity="0.75"/><rect x="487.5" y="275" width="1.2" height="1.2" fill="#301008" opacity="0.6"/><rect x="483.0" y="277" width="1.2" height="1.2" fill="#301008" opacity="0.75"/><rect x="487.5" y="278" width="1.2" height="1.2" fill="#301008" opacity="0.6"/><rect x="483.0" y="280" width="1.2" height="1.2" fill="#301008" opacity="0.75"/><rect x="487.5" y="281" width="1.2" height="1.2" fill="#301008" opacity="0.6"/><rect x="483.1" y="283" width="1.2" height="1.2" fill="#301008" opacity="0.75"/><rect x="487.6" y="284" width="1.2" height="1.2" fill="#301008" opacity="0.6"/><rect x="483.1" y="286" width="1.2" height="1.2" fill="#301008" opacity="0.75"/><rect x="487.6" y="287" width="1.2" height="1.2" fill="#301008" opacity="0.6"/><rect x="483.1" y="289" width="1.2" height="1.2" fill="#301008" opacity="0.75"/><rect x="487.6" y="290" width="1.2" height="1.2" fill="#301008" opacity="0.6"/><rect x="483.1" y="292" width="1.2" height="1.2" fill="#301008" opacity="0.75"/><rect x="487.6" y="293" width="1.2" height="1.2" fill="#301008" opacity="0.6"/><rect x="483.1" y="295" width="1.2" height="1.2" fill="#301008" opacity="0.75"/><rect x="487.6" y="296" width="1.2" height="1.2" fill="#301008" opacity="0.6"/><rect x="483.1" y="298" width="1.2" height="1.2" fill="#301008" opacity="0.75"/><rect x="487.6" y="299" width="1.2" height="1.2" fill="#301008" opacity="0.6"/></g><rect x="3" y="3" width="311" height="45" fill="#ffffff"/><text x="4.5" y="15" font-family="Liberation Mono" font-size="11.66" fill="#111">Screen Capture Time: 2025-11-05 20:53:36 UTC</text><text x="4.5" y="28.6" font-family="Liberation Mono" font-size="11.66" fill="#111">143048017 Hz</text><text x="4.5" y="42" font-family="Liberation Mono" font-size="11.66" fill="#111">Config = V8</text><linearGradient id="cbar" x1="0" y1="0" x2="1" y2="0"><stop offset="0" stop-color="#000"/><stop offset="0.21" stop-color="#02020a"/><stop offset="0.33" stop-color="#000078"/><stop offset="0.51" stop-color="#6e0070"/><stop offset="0.60" stop-color="#a03050"/><stop offset="0.73" stop-color="#f08c14"/><stop offset="0.86" stop-color="#ffdc00"/><stop offset="0.93" stop-color="#ffffff"/><stop offset="1" stop-color="#ffffff"/></linearGradient><rect x="5" y="53" width="99" height="15" fill="url(#cbar)"/><rect x="5" y="68" width="99" height="24" fill="#ffffff"/><rect x="5" y="68" width="99" height="1" fill="#000"/><rect x="4" y="68" width="1" height="11" fill="#000"/><rect x="8" y="68" width="1" height="5" fill="#000"/><rect x="13" y="68" width="1" height="5" fill="#000"/><rect x="17" y="68" width="1" height="5" fill="#000"/><rect x="22" y="68" width="1" height="5" fill="#000"/><rect x="26" y="68" width="1" height="7" fill="#000"/><rect x="30" y="68" width="1" height="5" fill="#000"/><rect x="35" y="68" width="1" height="5" fill="#000"/><rect x="39" y="68" width="1" height="5" fill="#000"/><rect x="44" y="68" width="1" height="5" fill="#000"/><rect x="48" y="68" width="1" height="11" fill="#000"/><rect x="52" y="68" width="1" height="5" fill="#000"/><rect x="57" y="68" width="1" height="5" fill="#000"/><rect x="61" y="68" width="1" height="5" fill="#000"/><rect x="66" y="68" width="1" height="5" fill="#000"/><rect x="70" y="68" width="1" height="7" fill="#000"/><rect x="74" y="68" width="1" height="5" fill="#000"/><rect x="79" y="68" width="1" height="5" fill="#000"/><rect x="83" y="68" width="1" height="5" fill="#000"/><rect x="88" y="68" width="1" height="5" fill="#000"/><rect x="92" y="68" width="1" height="11" fill="#000"/><rect x="96" y="68" width="1" height="5" fill="#000"/><rect x="101" y="68" width="1" height="5" fill="#000"/><text x="4" y="90" font-family="Liberation Sans" font-size="11" fill="#000">-80 dB -60</text><text x="80" y="90" font-family="Liberation Sans" font-size="11" fill="#000">-40</text><rect x="114" y="760" width="1" height="20" fill="#f0f0f0"/><text transform="translate(111,778) rotate(-90)" font-family="Liberation Sans" font-size="11" fill="#f4f4f4">2025-11-05 20:52:30</text><rect x="230" y="760" width="1" height="20" fill="#f0f0f0"/><text transform="translate(227,778) rotate(-90)" font-family="Liberation Sans" font-size="11" fill="#f4f4f4">2025-11-05 20:52:40</text><rect x="343" y="760" width="1" height="20" fill="#f0f0f0"/><text transform="translate(340,778) rotate(-90)" font-family="Liberation Sans" font-size="11" fill="#f4f4f4">2025-11-05 20:52:50</text><rect x="450" y="760" width="1" height="20" fill="#f0f0f0"/><text transform="translate(447,778) rotate(-90)" font-family="Liberation Sans" font-size="11" fill="#f4f4f4">2025-11-05 20:53:00</text><rect x="565" y="760" width="1" height="20" fill="#f0f0f0"/><text transform="translate(562,778) rotate(-90)" font-family="Liberation Sans" font-size="11" fill="#f4f4f4">2025-11-05 20:53:10</text><rect x="669" y="760" width="1" height="20" fill="#f0f0f0"/><text transform="translate(666,778) rotate(-90)" font-family="Liberation Sans" font-size="11" fill="#f4f4f4">2025-11-05 20:53:20</text><rect x="785" y="760" width="1" height="20" fill="#f0f0f0"/><text transform="translate(782,778) rotate(-90)" font-family="Liberation Sans" font-size="11" fill="#f4f4f4">2025-11-05 20:53:30</text><rect x="818" y="0" width="42" height="783" fill="#ffffff"/><rect x="818" y="3" width="8" height="1" fill="#000"/><rect x="818" y="11" width="8" height="1" fill="#000"/><rect x="818" y="19" width="11" height="1" fill="#000"/><rect x="818" y="27" width="8" height="1" fill="#000"/><rect x="818" y="35" width="8" height="1" fill="#000"/><rect x="818" y="42" width="8" height="1" fill="#000"/><rect x="818" y="50" width="8" height="1" fill="#000"/><rect x="818" y="58" width="8" height="1" fill="#000"/><rect x="818" y="66" width="8" height="1" fill="#000"/><rect x="818" y="74" width="8" height="1" fill="#000"/><rect x="818" y="81" width="8" height="1" fill="#000"/><rect x="818" y="89" width="8" height="1" fill="#000"/><rect x="818" y="97" width="26" height="1" fill="#000"/><rect x="818" y="105" width="8" height="1" fill="#000"/><rect x="818" y="113" width="8" height="1" fill="#000"/><rect x="818" y="120" width="8" height="1" fill="#000"/><rect x="818" y="128" width="8" height="1" fill="#000"/><rect x="818" y="136" width="8" height="1" fill="#000"/><rect x="818" y="144" width="8" height="1" fill="#000"/><rect x="818" y="152" width="8" height="1" fill="#000"/><rect x="818" y="159" width="8" height="1" fill="#000"/><rect x="818" y="167" width="8" height="1" fill="#000"/><rect x="818" y="175" width="11" height="1" fill="#000"/><rect x="818" y="183" width="8" height="1" fill="#000"/><rect x="818" y="191" width="8" height="1" fill="#000"/><rect x="818" y="198" width="8" height="1" fill="#000"/><rect x="818" y="206" width="8" height="1" fill="#000"/><rect x="818" y="214" width="8" height="1" fill="#000"/><rect x="818" y="222" width="8" height="1" fill="#000"/><rect x="818" y="230" width="8" height="1" fill="#000"/><rect x="818" y="237" width="8" height="1" fill="#000"/><rect x="818" y="245" width="8" height="1" fill="#000"/><rect x="818" y="253" width="26" height="1" fill="#000"/><rect x="818" y="261" width="8" height="1" fill="#000"/><rect x="818" y="269" width="8" height="1" fill="#000"/><rect x="818" y="276" width="8" height="1" fill="#000"/><rect x="818" y="284" width="8" height="1" fill="#000"/><rect x="818" y="292" width="8" height="1" fill="#000"/><rect x="818" y="300" width="8" height="1" fill="#000"/><rect x="818" y="308" width="8" height="1" fill="#000"/><rect x="818" y="315" width="8" height="1" fill="#000"/><rect x="818" y="323" width="8" height="1" fill="#000"/><rect x="818" y="331" width="11" height="1" fill="#000"/><rect x="818" y="339" width="8" height="1" fill="#000"/><rect x="818" y="347" width="8" height="1" fill="#000"/><rect x="818" y="354" width="8" height="1" fill="#000"/><rect x="818" y="362" width="8" height="1" fill="#000"/><rect x="818" y="370" width="8" height="1" fill="#000"/><rect x="818" y="378" width="8" height="1" fill="#000"/><rect x="818" y="386" width="8" height="1" fill="#000"/><rect x="818" y="393" width="8" height="1" fill="#000"/><rect x="818" y="401" width="8" height="1" fill="#000"/><rect x="818" y="409" width="26" height="1" fill="#000"/><rect x="818" y="417" width="8" height="1" fill="#000"/><rect x="818" y="425" width="8" height="1" fill="#000"/><rect x="818" y="432" width="8" height="1" fill="#000"/><rect x="818" y="440" width="8" height="1" fill="#000"/><rect x="818" y="448" width="8" height="1" fill="#000"/><rect x="818" y="456" width="8" height="1" fill="#000"/><rect x="818" y="464" width="8" height="1" fill="#000"/><rect x="818" y="471" width="8" height="1" fill="#000"/><rect x="818" y="479" width="8" height="1" fill="#000"/><rect x="818" y="487" width="11" height="1" fill="#000"/><rect x="818" y="495" width="8" height="1" fill="#000"/><rect x="818" y="503" width="8" height="1" fill="#000"/><rect x="818" y="510" width="8" height="1" fill="#000"/><rect x="818" y="518" width="8" height="1" fill="#000"/><rect x="818" y="526" width="8" height="1" fill="#000"/><rect x="818" y="534" width="8" height="1" fill="#000"/><rect x="818" y="542" width="8" height="1" fill="#000"/><rect x="818" y="549" width="8" height="1" fill="#000"/><rect x="818" y="557" width="8" height="1" fill="#000"/><rect x="818" y="565" width="26" height="1" fill="#000"/><rect x="818" y="573" width="8" height="1" fill="#000"/><rect x="818" y="581" width="8" height="1" fill="#000"/><rect x="818" y="588" width="8" height="1" fill="#000"/><rect x="818" y="596" width="8" height="1" fill="#000"/><rect x="818" y="604" width="8" height="1" fill="#000"/><rect x="818" y="612" width="8" height="1" fill="#000"/><rect x="818" y="620" width="8" height="1" fill="#000"/><rect x="818" y="627" width="8" height="1" fill="#000"/><rect x="818" y="635" width="8" height="1" fill="#000"/><rect x="818" y="643" width="11" height="1" fill="#000"/><rect x="818" y="651" width="8" height="1" fill="#000"/><rect x="818" y="659" width="8" height="1" fill="#000"/><rect x="818" y="666" width="8" height="1" fill="#000"/><rect x="818" y="674" width="8" height="1" fill="#000"/><rect x="818" y="682" width="8" height="1" fill="#000"/><rect x="818" y="690" width="8" height="1" fill="#000"/><rect x="818" y="698" width="8" height="1" fill="#000"/><rect x="818" y="705" width="8" height="1" fill="#000"/><rect x="818" y="713" width="8" height="1" fill="#000"/><rect x="818" y="721" width="26" height="1" fill="#000"/><rect x="818" y="729" width="8" height="1" fill="#000"/><rect x="818" y="737" width="8" height="1" fill="#000"/><rect x="818" y="744" width="8" height="1" fill="#000"/><rect x="818" y="752" width="8" height="1" fill="#000"/><rect x="818" y="760" width="8" height="1" fill="#000"/><rect x="818" y="768" width="8" height="1" fill="#000"/><rect x="818" y="776" width="8" height="1" fill="#000"/><polyline points="823,9 839.5,17.5 839.5,773.5 825,781.5" fill="none" stroke="#10108c" stroke-width="1.3"/><line x1="839.5" y1="14" x2="839.5" y2="18" stroke="#10108c" stroke-width="1.3"/><text transform="translate(849,66.1) rotate(90)" font-family="Liberation Mono" font-size="11.8" fill="#505050">143050400</text><text transform="translate(849,222.1) rotate(90)" font-family="Liberation Mono" font-size="11.8" fill="#505050">143050200</text><text transform="translate(849,378.1) rotate(90)" font-family="Liberation Mono" font-size="11.8" fill="#505050">143050000</text><text transform="translate(849,534.1) rotate(90)" font-family="Liberation Mono" font-size="11.8" fill="#505050">143049800</text><text transform="translate(849,679.5) rotate(90)" font-family="Liberation Mono" font-size="11.8" fill="#505050">143049600 Hz</text><rect x="860" y="1" width="80" height="781" fill="#545454"/><rect x="860" y="1" width="80" height="12" fill="#000"/><rect x="860" y="778" width="80" height="4" fill="#000"/><rect x="860" y="19" width="80" height="1" fill="#9c9c9c"/><rect x="860" y="97" width="80" height="1" fill="#9c9c9c"/><rect x="860" y="175" width="80" height="1" fill="#9c9c9c"/><rect x="860" y="253" width="80" height="1" fill="#9c9c9c"/><rect x="860" y="331" width="80" height="1" fill="#9c9c9c"/><rect x="860" y="409" width="80" height="1" fill="#9c9c9c"/><rect x="860" y="487" width="80" height="1" fill="#9c9c9c"/><rect x="860" y="565" width="80" height="1" fill="#9c9c9c"/><rect x="860" y="643" width="80" height="1" fill="#9c9c9c"/><rect x="860" y="721" width="80" height="1" fill="#9c9c9c"/><g shape-rendering="crispEdges"><rect x="860" y="13" width="1.9" height="1" fill="#000"/><rect x="860" y="14" width="1.7" height="1" fill="#000"/><rect x="860" y="15" width="2.9" height="1" fill="#000"/><rect x="860" y="16" width="1.8" height="1" fill="#000"/><rect x="860" y="17" width="0.8" height="1" fill="#000"/><rect x="860" y="18" width="2.6" height="1" fill="#000"/><rect x="860" y="19" width="8.5" height="1" fill="#000"/><rect x="860" y="20" width="8.1" height="1" fill="#000"/><rect x="860" y="21" width="4.9" height="1" fill="#000"/><rect x="860" y="22" width="1.1" height="1" fill="#000"/><rect x="860" y="24" width="4.7" height="1" fill="#000"/><rect x="860" y="25" width="5.3" height="1" fill="#000"/><rect x="860" y="26" width="4.9" height="1" fill="#000"/><rect x="860" y="27" width="11.6" height="1" fill="#000"/><rect x="860" y="28" width="11.9" height="1" fill="#000"/><rect x="860" y="29" width="2.7" height="1" fill="#000"/><rect x="860" y="30" width="13.8" height="1" fill="#000"/><rect x="860" y="31" width="16.0" height="1" fill="#000"/><rect x="860" y="32" width="17.2" height="1" fill="#000"/><rect x="860" y="34" width="3.9" height="1" fill="#000"/><rect x="860" y="35" width="1.6" height="1" fill="#000"/><rect x="860" y="36" width="5.4" height="1" fill="#000"/><rect x="860" y="37" width="8.4" height="1" fill="#000"/><rect x="860" y="38" width="6.4" height="1" fill="#000"/><rect x="860" y="39" width="6.4" height="1" fill="#000"/><rect x="860" y="40" width="0.8" height="1" fill="#000"/><rect x="860" y="42" width="4.0" height="1" fill="#000"/><rect x="860" y="43" width="2.7" height="1" fill="#000"/><rect x="860" y="44" width="4.1" height="1" fill="#000"/><rect x="860" y="45" width="3.2" height="1" fill="#000"/><rect x="860" y="46" width="3.8" height="1" fill="#000"/><rect x="860" y="47" width="3.8" height="1" fill="#000"/><rect x="860" y="49" width="4.5" height="1" fill="#000"/><rect x="860" y="50" width="13.6" height="1" fill="#000"/><rect x="860" y="51" width="9.2" height="1" fill="#000"/><rect x="860" y="52" width="22.5" height="1" fill="#0c0c38"/><rect x="860" y="53" width="19.9" height="1" fill="#0c0c38"/><rect x="860" y="54" width="20.7" height="1" fill="#0c0c38"/><rect x="860" y="55" width="11.1" height="1" fill="#000"/><rect x="860" y="56" width="20.3" height="1" fill="#0c0c38"/><rect x="860" y="57" width="18.5" height="1" fill="#0c0c38"/><rect x="860" y="58" width="9.0" height="1" fill="#000"/><rect x="860" y="59" width="20.3" height="1" fill="#000"/><rect x="860" y="60" width="18.8" height="1" fill="#000"/><rect x="860" y="61" width="10.9" height="1" fill="#000"/><rect x="860" y="62" width="10.9" height="1" fill="#000"/><rect x="860" y="63" width="10.4" height="1" fill="#000"/><rect x="860" y="64" width="6.7" height="1" fill="#000"/><rect x="860" y="65" width="0.8" height="1" fill="#000"/><rect x="860" y="66" width="2.5" height="1" fill="#000"/><rect x="860" y="68" width="6.5" height="1" fill="#000"/><rect x="860" y="69" width="7.3" height="1" fill="#000"/><rect x="860" y="70" width="8.4" height="1" fill="#000"/><rect x="860" y="71" width="6.2" height="1" fill="#000"/><rect x="860" y="72" width="4.2" height="1" fill="#000"/><rect x="860" y="73" width="6.8" height="1" fill="#000"/><rect x="860" y="74" width="8.1" height="1" fill="#000"/><rect x="860" y="75" width="12.0" height="1" fill="#000"/><rect x="860" y="76" width="11.9" height="1" fill="#000"/><rect x="860" y="77" width="2.7" height="1" fill="#000"/><rect x="860" y="78" width="2.8" height="1" fill="#000"/><rect x="860" y="79" width="1.9" height="1" fill="#000"/><rect x="860" y="80" width="5.3" height="1" fill="#000"/><rect x="860" y="81" width="9.2" height="1" fill="#000"/><rect x="860" y="82" width="12.6" height="1" fill="#000"/><rect x="860" y="83" width="9.6" height="1" fill="#000"/><rect x="860" y="85" width="1.0" height="1" fill="#000"/><rect x="860" y="86" width="10.5" height="1" fill="#000"/><rect x="860" y="87" width="14.8" height="1" fill="#000"/><rect x="860" y="88" width="7.3" height="1" fill="#000"/><rect x="860" y="90" width="7.0" height="1" fill="#000"/><rect x="860" y="91" width="5.4" height="1" fill="#000"/><rect x="860" y="92" width="9.4" height="1" fill="#000"/><rect x="860" y="93" width="12.4" height="1" fill="#000"/><rect x="860" y="94" width="9.7" height="1" fill="#000"/><rect x="860" y="95" width="5.1" height="1" fill="#000"/><rect x="860" y="96" width="9.9" height="1" fill="#000"/><rect x="860" y="97" width="5.0" height="1" fill="#000"/><rect x="860" y="98" width="9.6" height="1" fill="#000"/><rect x="860" y="99" width="14.4" height="1" fill="#000"/><rect x="860" y="100" width="18.0" height="1" fill="#000"/><rect x="860" y="101" width="21.7" height="1" fill="#000"/><rect x="860" y="102" width="21.0" height="1" fill="#000"/><rect x="860" y="103" width="13.4" height="1" fill="#000"/><rect x="860" y="104" width="7.3" height="1" fill="#000"/><rect x="860" y="105" width="8.0" height="1" fill="#000"/><rect x="860" y="106" width="8.8" height="1" fill="#000"/><rect x="860" y="107" width="11.1" height="1" fill="#000"/><rect x="860" y="108" width="11.7" height="1" fill="#000"/><rect x="860" y="109" width="10.7" height="1" fill="#000"/><rect x="860" y="110" width="11.3" height="1" fill="#000"/><rect x="860" y="111" width="15.1" height="1" fill="#000"/><rect x="860" y="112" width="15.0" height="1" fill="#000"/><rect x="860" y="113" width="6.9" height="1" fill="#000"/><rect x="860" y="115" width="1.1" height="1" fill="#000"/><rect x="860" y="116" width="5.4" height="1" fill="#000"/><rect x="860" y="117" width="5.5" height="1" fill="#000"/><rect x="860" y="118" width="3.2" height="1" fill="#000"/><rect x="860" y="119" width="10.6" height="1" fill="#000"/><rect x="860" y="120" width="12.1" height="1" fill="#000"/><rect x="860" y="121" width="1.0" height="1" fill="#000"/><rect x="860" y="122" width="1.4" height="1" fill="#000"/><rect x="860" y="123" width="1.5" height="1" fill="#000"/><rect x="860" y="124" width="2.0" height="1" fill="#000"/><rect x="860" y="126" width="9.1" height="1" fill="#000"/><rect x="860" y="127" width="8.4" height="1" fill="#000"/><rect x="860" y="128" width="8.7" height="1" fill="#000"/><rect x="860" y="129" width="11.0" height="1" fill="#000"/><rect x="860" y="130" width="4.6" height="1" fill="#000"/><rect x="860" y="132" width="8.9" height="1" fill="#000"/><rect x="860" y="133" width="5.8" height="1" fill="#000"/><rect x="860" y="134" width="13.1" height="1" fill="#000"/><rect x="860" y="135" width="10.7" height="1" fill="#000"/><rect x="860" y="136" width="11.5" height="1" fill="#000"/><rect x="860" y="137" width="9.5" height="1" fill="#000"/><rect x="860" y="138" width="8.3" height="1" fill="#000"/><rect x="860" y="139" width="7.2" height="1" fill="#000"/><rect x="860" y="140" width="7.6" height="1" fill="#000"/><rect x="860" y="141" width="5.6" height="1" fill="#000"/><rect x="860" y="142" width="9.4" height="1" fill="#000"/><rect x="860" y="143" width="7.4" height="1" fill="#000"/><rect x="860" y="144" width="5.5" height="1" fill="#000"/><rect x="860" y="145" width="9.7" height="1" fill="#000"/><rect x="860" y="146" width="5.0" height="1" fill="#000"/><rect x="860" y="147" width="3.7" height="1" fill="#000"/><rect x="860" y="148" width="20.0" height="1" fill="#000"/><rect x="860" y="149" width="22.1" height="1" fill="#000"/><rect x="860" y="150" width="14.1" height="1" fill="#000"/><rect x="860" y="151" width="12.3" height="1" fill="#000"/><rect x="860" y="152" width="7.5" height="1" fill="#000"/><rect x="860" y="153" width="6.3" height="1" fill="#000"/><rect x="860" y="154" width="2.0" height="1" fill="#000"/><rect x="860" y="157" width="14.8" height="1" fill="#000"/><rect x="860" y="158" width="12.6" height="1" fill="#000"/><rect x="860" y="159" width="3.5" height="1" fill="#000"/><rect x="860" y="160" width="7.7" height="1" fill="#000"/><rect x="860" y="161" width="7.3" height="1" fill="#000"/><rect x="860" y="162" width="3.3" height="1" fill="#000"/><rect x="860" y="163" width="12.5" height="1" fill="#000"/><rect x="860" y="164" width="16.9" height="1" fill="#000"/><rect x="860" y="165" width="1.9" height="1" fill="#000"/><rect x="860" y="166" width="3.6" height="1" fill="#000"/><rect x="860" y="167" width="0.8" height="1" fill="#000"/><rect x="860" y="168" width="5.8" height="1" fill="#000"/><rect x="860" y="169" width="8.7" height="1" fill="#000"/><rect x="860" y="171" width="13.0" height="1" fill="#000"/><rect x="860" y="172" width="17.5" height="1" fill="#000"/><rect x="860" y="173" width="14.2" height="1" fill="#000"/><rect x="860" y="175" width="1.1" height="1" fill="#000"/><rect x="860" y="177" width="2.3" height="1" fill="#000"/><rect x="860" y="178" width="13.0" height="1" fill="#000"/><rect x="860" y="179" width="3.0" height="1" fill="#000"/><rect x="860" y="180" width="3.1" height="1" fill="#000"/><rect x="860" y="181" width="8.1" height="1" fill="#000"/><rect x="860" y="182" width="7.4" height="1" fill="#000"/><rect x="860" y="183" width="5.9" height="1" fill="#000"/><rect x="860" y="184" width="12.1" height="1" fill="#000"/><rect x="860" y="185" width="13.0" height="1" fill="#000"/><rect x="860" y="186" width="13.2" height="1" fill="#000"/><rect x="860" y="187" width="10.3" height="1" fill="#000"/><rect x="860" y="188" width="8.6" height="1" fill="#000"/><rect x="860" y="189" width="9.8" height="1" fill="#000"/><rect x="860" y="190" width="14.3" height="1" fill="#000"/><rect x="860" y="191" width="13.3" height="1" fill="#000"/><rect x="860" y="192" width="10.7" height="1" fill="#000"/><rect x="860" y="193" width="20.2" height="1" fill="#000"/><rect x="860" y="194" width="23.6" height="1" fill="#000"/><rect x="860" y="195" width="7.9" height="1" fill="#000"/><rect x="860" y="196" width="7.0" height="1" fill="#000"/><rect x="860" y="197" width="10.5" height="1" fill="#000"/><rect x="860" y="198" width="3.2" height="1" fill="#000"/><rect x="860" y="200" width="1.5" height="1" fill="#000"/><rect x="860" y="201" width="9.5" height="1" fill="#000"/><rect x="860" y="202" width="12.5" height="1" fill="#000"/><rect x="860" y="203" width="0.7" height="1" fill="#000"/><rect x="860" y="204" width="3.1" height="1" fill="#000"/><rect x="860" y="205" width="8.3" height="1" fill="#000"/><rect x="860" y="206" width="11.9" height="1" fill="#000"/><rect x="860" y="207" width="14.9" height="1" fill="#000"/><rect x="860" y="208" width="4.4" height="1" fill="#000"/><rect x="860" y="209" width="5.8" height="1" fill="#000"/><rect x="860" y="210" width="5.1" height="1" fill="#000"/><rect x="860" y="211" width="6.9" height="1" fill="#000"/><rect x="860" y="212" width="21.9" height="1" fill="#000"/><rect x="860" y="213" width="18.0" height="1" fill="#000"/><rect x="860" y="214" width="4.2" height="1" fill="#000"/><rect x="860" y="215" width="3.0" height="1" fill="#000"/><rect x="860" y="216" width="4.0" height="1" fill="#000"/><rect x="860" y="217" width="7.5" height="1" fill="#000"/><rect x="860" y="218" width="11.3" height="1" fill="#000"/><rect x="860" y="219" width="6.8" height="1" fill="#000"/><rect x="860" y="220" width="4.5" height="1" fill="#000"/><rect x="860" y="221" width="22.1" height="1" fill="#000"/><rect x="860" y="222" width="17.0" height="1" fill="#000"/><rect x="860" y="223" width="18.6" height="1" fill="#000"/><rect x="860" y="224" width="6.5" height="1" fill="#000"/><rect x="860" y="225" width="7.6" height="1" fill="#000"/><rect x="860" y="226" width="9.0" height="1" fill="#000"/><rect x="860" y="227" width="5.6" height="1" fill="#000"/><rect x="860" y="228" width="19.4" height="1" fill="#000"/><rect x="860" y="229" width="6.3" height="1" fill="#000"/><rect x="860" y="230" width="6.8" height="1" fill="#000"/><rect x="860" y="231" width="2.3" height="1" fill="#000"/><rect x="860" y="232" width="6.8" height="1" fill="#000"/><rect x="860" y="233" width="6.9" height="1" fill="#000"/><rect x="860" y="234" width="8.5" height="1" fill="#000"/><rect x="860" y="235" width="8.3" height="1" fill="#000"/><rect x="860" y="236" width="3.7" height="1" fill="#000"/><rect x="860" y="237" width="2.3" height="1" fill="#000"/><rect x="860" y="238" width="12.0" height="1" fill="#000"/><rect x="860" y="239" width="3.8" height="1" fill="#000"/><rect x="860" y="240" width="11.6" height="1" fill="#000"/><rect x="860" y="241" width="12.9" height="1" fill="#000"/><rect x="860" y="242" width="0.7" height="1" fill="#000"/><rect x="860" y="243" width="3.7" height="1" fill="#000"/><rect x="860" y="244" width="1.2" height="1" fill="#000"/><rect x="860" y="245" width="11.3" height="1" fill="#000"/><rect x="860" y="246" width="1.8" height="1" fill="#000"/><rect x="860" y="249" width="10.7" height="1" fill="#000"/><rect x="860" y="250" width="10.1" height="1" fill="#000"/><rect x="860" y="251" width="10.9" height="1" fill="#000"/><rect x="860" y="253" width="19.4" height="1" fill="#0c0c38"/><rect x="860" y="254" width="22.9" height="1" fill="#0c0c38"/><rect x="860" y="255" width="21.3" height="1" fill="#0c0c38"/><rect x="860" y="256" width="11.6" height="1" fill="#000"/><rect x="860" y="257" width="12.9" height="1" fill="#000"/><rect x="860" y="258" width="13.1" height="1" fill="#000"/><rect x="860" y="259" width="15.1" height="1" fill="#000"/><rect x="860" y="260" width="15.6" height="1" fill="#000"/><rect x="860" y="261" width="18.3" height="1" fill="#000"/><rect x="860" y="262" width="7.9" height="1" fill="#000"/><rect x="860" y="263" width="2.4" height="1" fill="#000"/><rect x="860" y="264" width="1.7" height="1" fill="#000"/><rect x="860" y="265" width="3.8" height="1" fill="#000"/><rect x="860" y="266" width="10.0" height="1" fill="#000"/><rect x="860" y="267" width="9.9" height="1" fill="#000"/><rect x="860" y="268" width="1.1" height="1" fill="#000"/><rect x="860" y="270" width="1.4" height="1" fill="#000"/><rect x="860" y="271" width="6.2" height="1" fill="#000"/><rect x="860" y="272" width="2.5" height="1" fill="#000"/><rect x="860" y="273" width="11.2" height="1" fill="#000"/><rect x="860" y="274" width="5.4" height="1" fill="#000"/><rect x="860" y="275" width="5.2" height="1" fill="#000"/><rect x="860" y="276" width="7.5" height="1" fill="#000"/><rect x="860" y="277" width="10.2" height="1" fill="#000"/><rect x="860" y="278" width="5.2" height="1" fill="#000"/><rect x="860" y="281" width="2.5" height="1" fill="#000"/><rect x="860" y="282" width="2.2" height="1" fill="#000"/><rect x="860" y="283" width="2.6" height="1" fill="#000"/><rect x="860" y="284" width="0.7" height="1" fill="#000"/><rect x="860" y="288" width="16.8" height="1" fill="#000"/><rect x="860" y="289" width="17.6" height="1" fill="#000"/><rect x="860" y="290" width="16.8" height="1" fill="#000"/><rect x="860" y="291" width="3.1" height="1" fill="#000"/><rect x="860" y="292" width="7.6" height="1" fill="#000"/><rect x="860" y="295" width="5.8" height="1" fill="#000"/><rect x="860" y="296" width="9.1" height="1" fill="#000"/><rect x="860" y="297" width="15.8" height="1" fill="#000"/><rect x="860" y="298" width="16.0" height="1" fill="#000"/><rect x="860" y="299" width="17.6" height="1" fill="#000"/><rect x="860" y="300" width="2.5" height="1" fill="#000"/><rect x="860" y="301" width="1.1" height="1" fill="#000"/><rect x="860" y="302" width="7.9" height="1" fill="#000"/><rect x="860" y="303" width="9.0" height="1" fill="#000"/><rect x="860" y="304" width="12.4" height="1" fill="#000"/><rect x="860" y="305" width="15.0" height="1" fill="#000"/><rect x="860" y="306" width="9.0" height="1" fill="#000"/><rect x="860" y="307" width="6.1" height="1" fill="#000"/><rect x="860" y="308" width="19.9" height="1" fill="#000"/><rect x="860" y="309" width="21.8" height="1" fill="#000"/><rect x="860" y="310" width="3.1" height="1" fill="#000"/><rect x="860" y="311" width="9.7" height="1" fill="#000"/><rect x="860" y="312" width="9.4" height="1" fill="#000"/><rect x="860" y="313" width="2.4" height="1" fill="#000"/><rect x="860" y="314" width="1.1" height="1" fill="#000"/><rect x="860" y="315" width="4.9" height="1" fill="#000"/><rect x="860" y="316" width="6.1" height="1" fill="#000"/><rect x="860" y="317" width="1.8" height="1" fill="#000"/><rect x="860" y="320" width="1.1" height="1" fill="#000"/><rect x="860" y="322" width="18.7" height="1" fill="#000"/><rect x="860" y="323" width="4.8" height="1" fill="#000"/><rect x="860" y="324" width="11.3" height="1" fill="#000"/><rect x="860" y="325" width="11.9" height="1" fill="#000"/><rect x="860" y="326" width="9.9" height="1" fill="#000"/><rect x="860" y="327" width="2.1" height="1" fill="#000"/><rect x="860" y="329" width="2.3" height="1" fill="#000"/><rect x="860" y="330" width="16.4" height="1" fill="#000"/><rect x="860" y="331" width="6.2" height="1" fill="#000"/><rect x="860" y="332" width="8.3" height="1" fill="#000"/><rect x="860" y="333" width="11.0" height="1" fill="#000"/><rect x="860" y="334" width="13.5" height="1" fill="#000"/><rect x="860" y="335" width="21.6" height="1" fill="#0c0c38"/><rect x="860" y="336" width="19.7" height="1" fill="#0c0c38"/><rect x="860" y="337" width="1.7" height="1" fill="#000"/><rect x="860" y="338" width="1.0" height="1" fill="#000"/><rect x="860" y="339" width="9.6" height="1" fill="#000"/><rect x="860" y="340" width="0.7" height="1" fill="#000"/><rect x="860" y="341" width="2.2" height="1" fill="#000"/><rect x="860" y="342" width="6.5" height="1" fill="#000"/><rect x="860" y="343" width="5.3" height="1" fill="#000"/><rect x="860" y="344" width="3.9" height="1" fill="#000"/><rect x="860" y="345" width="5.4" height="1" fill="#000"/><rect x="860" y="346" width="4.3" height="1" fill="#000"/><rect x="860" y="347" width="2.3" height="1" fill="#000"/><rect x="860" y="348" width="5.7" height="1" fill="#000"/><rect x="860" y="349" width="9.6" height="1" fill="#000"/><rect x="860" y="350" width="9.0" height="1" fill="#000"/><rect x="860" y="351" width="5.6" height="1" fill="#000"/><rect x="860" y="352" width="8.1" height="1" fill="#000"/><rect x="860" y="353" width="11.6" height="1" fill="#000"/><rect x="860" y="354" width="9.4" height="1" fill="#000"/><rect x="860" y="355" width="13.2" height="1" fill="#000"/><rect x="860" y="356" width="22.9" height="1" fill="#000"/><rect x="860" y="357" width="21.6" height="1" fill="#0c0c38"/><rect x="860" y="358" width="21.7" height="1" fill="#0c0c38"/><rect x="860" y="359" width="10.3" height="1" fill="#000"/><rect x="860" y="361" width="2.7" height="1" fill="#000"/><rect x="860" y="362" width="3.1" height="1" fill="#000"/><rect x="860" y="363" width="7.4" height="1" fill="#000"/><rect x="860" y="364" width="4.5" height="1" fill="#000"/><rect x="860" y="365" width="2.8" height="1" fill="#000"/><rect x="860" y="366" width="11.1" height="1" fill="#000"/><rect x="860" y="367" width="9.4" height="1" fill="#000"/><rect x="860" y="368" width="11.5" height="1" fill="#000"/><rect x="860" y="369" width="10.3" height="1" fill="#000"/><rect x="860" y="370" width="13.8" height="1" fill="#000"/><rect x="860" y="371" width="12.5" height="1" fill="#000"/><rect x="860" y="372" width="6.1" height="1" fill="#000"/><rect x="860" y="373" width="5.8" height="1" fill="#000"/><rect x="860" y="374" width="7.4" height="1" fill="#000"/><rect x="860" y="375" width="5.9" height="1" fill="#000"/><rect x="860" y="376" width="2.3" height="1" fill="#000"/><rect x="860" y="377" width="3.6" height="1" fill="#000"/><rect x="860" y="378" width="6.5" height="1" fill="#000"/><rect x="860" y="379" width="7.0" height="1" fill="#000"/><rect x="860" y="380" width="5.8" height="1" fill="#000"/><rect x="860" y="381" width="4.7" height="1" fill="#000"/><rect x="860" y="382" width="6.2" height="1" fill="#000"/><rect x="860" y="383" width="11.7" height="1" fill="#000"/><rect x="860" y="386" width="5.7" height="1" fill="#000"/><rect x="860" y="387" width="5.9" height="1" fill="#000"/><rect x="860" y="388" width="3.1" height="1" fill="#000"/><rect x="860" y="389" width="7.2" height="1" fill="#000"/><rect x="860" y="390" width="11.8" height="1" fill="#000"/><rect x="860" y="391" width="10.0" height="1" fill="#000"/><rect x="860" y="392" width="4.3" height="1" fill="#000"/><rect x="860" y="393" width="10.9" height="1" fill="#000"/><rect x="860" y="394" width="15.8" height="1" fill="#000"/><rect x="860" y="395" width="11.4" height="1" fill="#000"/><rect x="860" y="396" width="8.1" height="1" fill="#000"/><rect x="860" y="397" width="10.9" height="1" fill="#000"/><rect x="860" y="398" width="14.3" height="1" fill="#000"/><rect x="860" y="399" width="13.7" height="1" fill="#000"/><rect x="860" y="400" width="11.4" height="1" fill="#000"/><rect x="860" y="401" width="6.8" height="1" fill="#000"/><rect x="860" y="402" width="8.2" height="1" fill="#000"/><rect x="860" y="403" width="17.5" height="1" fill="#000"/><rect x="860" y="404" width="4.2" height="1" fill="#000"/><rect x="860" y="405" width="1.7" height="1" fill="#000"/><rect x="860" y="406" width="3.8" height="1" fill="#000"/><rect x="860" y="407" width="13.0" height="1" fill="#000"/><rect x="860" y="408" width="9.9" height="1" fill="#000"/><rect x="860" y="409" width="11.6" height="1" fill="#000"/><rect x="860" y="410" width="7.5" height="1" fill="#000"/><rect x="860" y="411" width="14.7" height="1" fill="#000"/><rect x="860" y="412" width="9.3" height="1" fill="#000"/><rect x="860" y="413" width="7.2" height="1" fill="#000"/><rect x="860" y="414" width="9.9" height="1" fill="#000"/><rect x="860" y="415" width="17.8" height="1" fill="#000"/><rect x="860" y="416" width="20.1" height="1" fill="#000"/><rect x="860" y="417" width="3.5" height="1" fill="#000"/><rect x="860" y="418" width="1.7" height="1" fill="#000"/><rect x="860" y="419" width="1.9" height="1" fill="#000"/><rect x="860" y="420" width="20.3" height="1" fill="#0c0c38"/><rect x="860" y="421" width="20.6" height="1" fill="#0c0c38"/><rect x="860" y="423" width="5.8" height="1" fill="#000"/><rect x="860" y="424" width="9.6" height="1" fill="#000"/><rect x="860" y="425" width="5.6" height="1" fill="#000"/><rect x="860" y="426" width="15.3" height="1" fill="#000"/><rect x="860" y="427" width="18.5" height="1" fill="#000"/><rect x="860" y="428" width="22.7" height="1" fill="#000"/><rect x="860" y="429" width="17.5" height="1" fill="#000"/><rect x="860" y="430" width="10.2" height="1" fill="#000"/><rect x="860" y="431" width="4.1" height="1" fill="#000"/><rect x="860" y="432" width="7.2" height="1" fill="#000"/><rect x="860" y="433" width="7.7" height="1" fill="#000"/><rect x="860" y="434" width="0.9" height="1" fill="#000"/><rect x="860" y="437" width="20.5" height="1" fill="#0c0c38"/><rect x="860" y="438" width="18.1" height="1" fill="#0c0c38"/><rect x="860" y="439" width="4.7" height="1" fill="#000"/><rect x="860" y="440" width="12.7" height="1" fill="#000"/><rect x="860" y="441" width="11.1" height="1" fill="#000"/><rect x="860" y="442" width="10.4" height="1" fill="#000"/><rect x="860" y="443" width="6.2" height="1" fill="#000"/><rect x="860" y="444" width="10.4" height="1" fill="#000"/><rect x="860" y="445" width="9.6" height="1" fill="#000"/><rect x="860" y="446" width="7.1" height="1" fill="#000"/><rect x="860" y="447" width="6.4" height="1" fill="#000"/><rect x="860" y="448" width="1.7" height="1" fill="#000"/><rect x="860" y="450" width="2.0" height="1" fill="#000"/><rect x="860" y="451" width="7.8" height="1" fill="#000"/><rect x="860" y="452" width="11.3" height="1" fill="#000"/><rect x="860" y="453" width="14.1" height="1" fill="#000"/><rect x="860" y="454" width="13.7" height="1" fill="#000"/><rect x="860" y="456" width="11.3" height="1" fill="#000"/><rect x="860" y="457" width="9.0" height="1" fill="#000"/><rect x="860" y="458" width="11.1" height="1" fill="#000"/><rect x="860" y="459" width="7.0" height="1" fill="#000"/><rect x="860" y="460" width="15.1" height="1" fill="#000"/><rect x="860" y="461" width="9.2" height="1" fill="#000"/><rect x="860" y="462" width="10.6" height="1" fill="#000"/><rect x="860" y="463" width="11.1" height="1" fill="#000"/><rect x="860" y="464" width="8.4" height="1" fill="#000"/><rect x="860" y="465" width="12.2" height="1" fill="#000"/><rect x="860" y="466" width="8.1" height="1" fill="#000"/><rect x="860" y="467" width="10.0" height="1" fill="#000"/><rect x="860" y="468" width="10.6" height="1" fill="#000"/><rect x="860" y="470" width="3.4" height="1" fill="#000"/><rect x="860" y="472" width="11.6" height="1" fill="#000"/><rect x="860" y="473" width="11.8" height="1" fill="#000"/><rect x="860" y="474" width="4.0" height="1" fill="#000"/><rect x="860" y="475" width="6.5" height="1" fill="#000"/><rect x="860" y="476" width="9.6" height="1" fill="#000"/><rect x="860" y="477" width="8.4" height="1" fill="#000"/><rect x="860" y="478" width="4.7" height="1" fill="#000"/><rect x="860" y="479" width="2.6" height="1" fill="#000"/><rect x="860" y="480" width="3.0" height="1" fill="#000"/><rect x="860" y="481" width="0.7" height="1" fill="#000"/><rect x="860" y="482" width="10.7" height="1" fill="#000"/><rect x="860" y="483" width="9.7" height="1" fill="#000"/><rect x="860" y="484" width="12.0" height="1" fill="#000"/><rect x="860" y="485" width="3.2" height="1" fill="#000"/><rect x="860" y="486" width="2.3" height="1" fill="#000"/><rect x="860" y="487" width="6.8" height="1" fill="#000"/><rect x="860" y="488" width="11.4" height="1" fill="#000"/><rect x="860" y="489" width="12.0" height="1" fill="#000"/><rect x="860" y="490" width="11.0" height="1" fill="#000"/><rect x="860" y="491" width="9.6" height="1" fill="#000"/><rect x="860" y="492" width="1.1" height="1" fill="#000"/><rect x="860" y="493" width="0.8" height="1" fill="#000"/><rect x="860" y="494" width="9.6" height="1" fill="#000"/><rect x="860" y="495" width="10.3" height="1" fill="#000"/><rect x="860" y="496" width="6.3" height="1" fill="#000"/><rect x="860" y="497" width="5.0" height="1" fill="#000"/><rect x="860" y="498" width="6.6" height="1" fill="#000"/><rect x="860" y="499" width="6.0" height="1" fill="#000"/><rect x="860" y="500" width="10.6" height="1" fill="#000"/><rect x="860" y="501" width="3.4" height="1" fill="#000"/><rect x="860" y="502" width="4.7" height="1" fill="#000"/><rect x="860" y="503" width="8.6" height="1" fill="#000"/><rect x="860" y="504" width="9.3" height="1" fill="#000"/><rect x="860" y="505" width="8.8" height="1" fill="#000"/><rect x="860" y="506" width="9.6" height="1" fill="#000"/><rect x="860" y="507" width="16.6" height="1" fill="#000"/><rect x="860" y="508" width="16.2" height="1" fill="#000"/><rect x="860" y="509" width="16.1" height="1" fill="#000"/><rect x="860" y="510" width="7.9" height="1" fill="#000"/><rect x="860" y="511" width="12.2" height="1" fill="#000"/><rect x="860" y="512" width="2.3" height="1" fill="#000"/><rect x="860" y="513" width="6.5" height="1" fill="#000"/><rect x="860" y="514" width="9.7" height="1" fill="#000"/><rect x="860" y="515" width="10.3" height="1" fill="#000"/><rect x="860" y="516" width="21.9" height="1" fill="#0c0c38"/><rect x="860" y="517" width="22.5" height="1" fill="#0c0c38"/><rect x="860" y="518" width="7.8" height="1" fill="#000"/><rect x="860" y="519" width="3.2" height="1" fill="#000"/><rect x="860" y="520" width="0.6" height="1" fill="#000"/><rect x="860" y="521" width="4.6" height="1" fill="#000"/><rect x="860" y="522" width="3.6" height="1" fill="#000"/><rect x="860" y="523" width="2.4" height="1" fill="#000"/><rect x="860" y="524" width="4.1" height="1" fill="#000"/><rect x="860" y="525" width="19.6" height="1" fill="#0c0c38"/><rect x="860" y="526" width="18.0" height="1" fill="#0c0c38"/><rect x="860" y="527" width="4.5" height="1" fill="#000"/><rect x="860" y="528" width="3.5" height="1" fill="#000"/><rect x="860" y="529" width="2.4" height="1" fill="#000"/><rect x="860" y="530" width="10.1" height="1" fill="#000"/><rect x="860" y="531" width="12.6" height="1" fill="#000"/><rect x="860" y="532" width="8.9" height="1" fill="#000"/><rect x="860" y="533" width="22.4" height="1" fill="#0c0c38"/><rect x="860" y="534" width="19.6" height="1" fill="#0c0c38"/><rect x="860" y="535" width="8.9" height="1" fill="#000"/><rect x="860" y="536" width="10.8" height="1" fill="#000"/><rect x="860" y="537" width="13.4" height="1" fill="#000"/><rect x="860" y="539" width="3.2" height="1" fill="#000"/><rect x="860" y="540" width="4.9" height="1" fill="#000"/><rect x="860" y="541" width="6.2" height="1" fill="#000"/><rect x="860" y="542" width="15.9" height="1" fill="#000"/><rect x="860" y="543" width="3.6" height="1" fill="#000"/><rect x="860" y="544" width="1.4" height="1" fill="#000"/><rect x="860" y="545" width="11.4" height="1" fill="#000"/><rect x="860" y="546" width="10.1" height="1" fill="#000"/><rect x="860" y="547" width="11.6" height="1" fill="#000"/><rect x="860" y="548" width="4.2" height="1" fill="#000"/><rect x="860" y="549" width="7.8" height="1" fill="#000"/><rect x="860" y="550" width="12.6" height="1" fill="#000"/><rect x="860" y="551" width="8.8" height="1" fill="#000"/><rect x="860" y="552" width="6.4" height="1" fill="#000"/><rect x="860" y="553" width="9.9" height="1" fill="#000"/><rect x="860" y="554" width="2.5" height="1" fill="#000"/><rect x="860" y="555" width="12.5" height="1" fill="#000"/><rect x="860" y="556" width="1.6" height="1" fill="#000"/><rect x="860" y="557" width="4.4" height="1" fill="#000"/><rect x="860" y="558" width="10.6" height="1" fill="#000"/><rect x="860" y="559" width="11.8" height="1" fill="#000"/><rect x="860" y="560" width="8.8" height="1" fill="#000"/><rect x="860" y="561" width="2.6" height="1" fill="#000"/><rect x="860" y="562" width="10.0" height="1" fill="#000"/><rect x="860" y="563" width="9.5" height="1" fill="#000"/><rect x="860" y="564" width="12.0" height="1" fill="#000"/><rect x="860" y="565" width="15.2" height="1" fill="#000"/><rect x="860" y="566" width="9.6" height="1" fill="#000"/><rect x="860" y="567" width="9.5" height="1" fill="#000"/><rect x="860" y="568" width="12.7" height="1" fill="#000"/><rect x="860" y="570" width="1.7" height="1" fill="#000"/><rect x="860" y="572" width="11.4" height="1" fill="#000"/><rect x="860" y="573" width="1.4" height="1" fill="#000"/><rect x="860" y="574" width="11.4" height="1" fill="#000"/><rect x="860" y="575" width="9.7" height="1" fill="#000"/><rect x="860" y="576" width="7.7" height="1" fill="#000"/><rect x="860" y="577" width="4.2" height="1" fill="#000"/><rect x="860" y="578" width="3.8" height="1" fill="#000"/><rect x="860" y="580" width="10.2" height="1" fill="#000"/><rect x="860" y="581" width="10.2" height="1" fill="#000"/><rect x="860" y="582" width="5.6" height="1" fill="#000"/><rect x="860" y="583" width="4.4" height="1" fill="#000"/><rect x="860" y="584" width="1.3" height="1" fill="#000"/><rect x="860" y="585" width="8.2" height="1" fill="#000"/><rect x="860" y="586" width="8.3" height="1" fill="#000"/><rect x="860" y="587" width="10.6" height="1" fill="#000"/><rect x="860" y="588" width="11.6" height="1" fill="#000"/><rect x="860" y="589" width="10.8" height="1" fill="#000"/><rect x="860" y="590" width="9.3" height="1" fill="#000"/><rect x="860" y="591" width="5.4" height="1" fill="#000"/><rect x="860" y="592" width="10.1" height="1" fill="#000"/><rect x="860" y="593" width="6.3" height="1" fill="#000"/><rect x="860" y="594" width="4.1" height="1" fill="#000"/><rect x="860" y="596" width="1.3" height="1" fill="#000"/><rect x="860" y="597" width="3.4" height="1" fill="#000"/><rect x="860" y="598" width="11.0" height="1" fill="#000"/><rect x="860" y="602" width="2.7" height="1" fill="#000"/><rect x="860" y="604" width="11.8" height="1" fill="#000"/><rect x="860" y="605" width="10.3" height="1" fill="#000"/><rect x="860" y="606" width="4.5" height="1" fill="#000"/><rect x="860" y="607" width="12.9" height="1" fill="#000"/><rect x="860" y="608" width="11.4" height="1" fill="#000"/><rect x="860" y="609" width="15.1" height="1" fill="#000"/><rect x="860" y="610" width="7.8" height="1" fill="#000"/><rect x="860" y="611" width="8.0" height="1" fill="#000"/><rect x="860" y="612" width="1.7" height="1" fill="#000"/><rect x="860" y="613" width="2.6" height="1" fill="#000"/><rect x="860" y="614" width="11.0" height="1" fill="#000"/><rect x="860" y="615" width="10.6" height="1" fill="#000"/><rect x="860" y="616" width="15.6" height="1" fill="#000"/><rect x="860" y="617" width="15.8" height="1" fill="#000"/><rect x="860" y="618" width="12.7" height="1" fill="#000"/><rect x="860" y="619" width="19.2" height="1" fill="#000"/><rect x="860" y="620" width="9.4" height="1" fill="#000"/><rect x="860" y="621" width="11.0" height="1" fill="#000"/><rect x="860" y="622" width="9.1" height="1" fill="#000"/><rect x="860" y="623" width="11.6" height="1" fill="#000"/><rect x="860" y="624" width="14.0" height="1" fill="#000"/><rect x="860" y="625" width="10.1" height="1" fill="#000"/><rect x="860" y="626" width="7.4" height="1" fill="#000"/><rect x="860" y="627" width="13.0" height="1" fill="#000"/><rect x="860" y="628" width="9.9" height="1" fill="#000"/><rect x="860" y="629" width="11.1" height="1" fill="#000"/><rect x="860" y="630" width="12.6" height="1" fill="#000"/><rect x="860" y="631" width="21.3" height="1" fill="#000"/><rect x="860" y="632" width="20.1" height="1" fill="#000"/><rect x="860" y="633" width="14.6" height="1" fill="#000"/><rect x="860" y="634" width="11.1" height="1" fill="#000"/><rect x="860" y="635" width="1.3" height="1" fill="#000"/><rect x="860" y="636" width="3.6" height="1" fill="#000"/><rect x="860" y="637" width="7.3" height="1" fill="#000"/><rect x="860" y="639" width="7.3" height="1" fill="#000"/><rect x="860" y="640" width="7.3" height="1" fill="#000"/><rect x="860" y="641" width="5.9" height="1" fill="#000"/><rect x="860" y="642" width="9.1" height="1" fill="#000"/><rect x="860" y="643" width="4.1" height="1" fill="#000"/><rect x="860" y="644" width="6.6" height="1" fill="#000"/><rect x="860" y="645" width="12.5" height="1" fill="#000"/><rect x="860" y="646" width="10.8" height="1" fill="#000"/><rect x="860" y="647" width="9.8" height="1" fill="#000"/><rect x="860" y="648" width="6.7" height="1" fill="#000"/><rect x="860" y="649" width="10.5" height="1" fill="#000"/><rect x="860" y="650" width="8.9" height="1" fill="#000"/><rect x="860" y="651" width="13.3" height="1" fill="#000"/><rect x="860" y="652" width="6.6" height="1" fill="#000"/><rect x="860" y="653" width="7.3" height="1" fill="#000"/><rect x="860" y="655" width="2.6" height="1" fill="#000"/><rect x="860" y="656" width="1.1" height="1" fill="#000"/><rect x="860" y="657" width="21.9" height="1" fill="#000"/><rect x="860" y="658" width="21.3" height="1" fill="#000"/><rect x="860" y="659" width="22.8" height="1" fill="#000"/><rect x="860" y="660" width="20.8" height="1" fill="#000"/><rect x="860" y="661" width="6.4" height="1" fill="#000"/><rect x="860" y="662" width="6.3" height="1" fill="#000"/><rect x="860" y="663" width="6.8" height="1" fill="#000"/><rect x="860" y="664" width="8.8" height="1" fill="#000"/><rect x="860" y="665" width="8.1" height="1" fill="#000"/><rect x="860" y="666" width="10.6" height="1" fill="#000"/><rect x="860" y="667" width="3.3" height="1" fill="#000"/><rect x="860" y="668" width="0.9" height="1" fill="#000"/><rect x="860" y="669" width="6.5" height="1" fill="#000"/><rect x="860" y="670" width="8.3" height="1" fill="#000"/><rect x="860" y="671" width="7.8" height="1" fill="#000"/><rect x="860" y="672" width="7.8" height="1" fill="#000"/><rect x="860" y="673" width="18.8" height="1" fill="#000"/><rect x="860" y="674" width="11.3" height="1" fill="#000"/><rect x="860" y="675" width="6.6" height="1" fill="#000"/><rect x="860" y="676" width="9.6" height="1" fill="#000"/><rect x="860" y="677" width="6.6" height="1" fill="#000"/><rect x="860" y="678" width="7.4" height="1" fill="#000"/><rect x="860" y="679" width="7.4" height="1" fill="#000"/><rect x="860" y="680" width="4.4" height="1" fill="#000"/><rect x="860" y="681" width="7.3" height="1" fill="#000"/><rect x="860" y="682" width="11.8" height="1" fill="#000"/><rect x="860" y="683" width="13.4" height="1" fill="#000"/><rect x="860" y="684" width="14.4" height="1" fill="#000"/><rect x="860" y="685" width="9.5" height="1" fill="#000"/><rect x="860" y="686" width="12.6" height="1" fill="#000"/><rect x="860" y="687" width="12.1" height="1" fill="#000"/><rect x="860" y="688" width="10.1" height="1" fill="#000"/><rect x="860" y="689" width="13.4" height="1" fill="#000"/><rect x="860" y="690" width="12.5" height="1" fill="#000"/><rect x="860" y="691" width="12.6" height="1" fill="#000"/><rect x="860" y="692" width="4.7" height="1" fill="#000"/><rect x="860" y="693" width="3.4" height="1" fill="#000"/><rect x="860" y="694" width="1.4" height="1" fill="#000"/><rect x="860" y="695" width="11.6" height="1" fill="#000"/><rect x="860" y="696" width="8.7" height="1" fill="#000"/><rect x="860" y="697" width="3.0" height="1" fill="#000"/><rect x="860" y="698" width="12.1" height="1" fill="#000"/><rect x="860" y="699" width="8.6" height="1" fill="#000"/><rect x="860" y="700" width="4.3" height="1" fill="#000"/><rect x="860" y="701" width="3.5" height="1" fill="#000"/><rect x="860" y="702" width="21.7" height="1" fill="#0c0c38"/><rect x="860" y="703" width="22.6" height="1" fill="#0c0c38"/><rect x="860" y="704" width="16.5" height="1" fill="#000"/><rect x="860" y="705" width="1.7" height="1" fill="#000"/><rect x="860" y="706" width="14.2" height="1" fill="#000"/><rect x="860" y="707" width="14.7" height="1" fill="#000"/><rect x="860" y="708" width="18.2" height="1" fill="#000"/><rect x="860" y="709" width="23.8" height="1" fill="#000"/><rect x="860" y="710" width="8.0" height="1" fill="#000"/><rect x="860" y="712" width="4.6" height="1" fill="#000"/><rect x="860" y="713" width="7.6" height="1" fill="#000"/><rect x="860" y="714" width="5.1" height="1" fill="#000"/><rect x="860" y="715" width="12.7" height="1" fill="#000"/><rect x="860" y="716" width="7.8" height="1" fill="#000"/><rect x="860" y="717" width="3.5" height="1" fill="#000"/><rect x="860" y="718" width="11.3" height="1" fill="#000"/><rect x="860" y="719" width="11.2" height="1" fill="#000"/><rect x="860" y="720" width="11.5" height="1" fill="#000"/><rect x="860" y="721" width="12.0" height="1" fill="#000"/><rect x="860" y="722" width="12.9" height="1" fill="#000"/><rect x="860" y="723" width="11.7" height="1" fill="#000"/><rect x="860" y="724" width="9.2" height="1" fill="#000"/><rect x="860" y="725" width="9.0" height="1" fill="#000"/><rect x="860" y="726" width="9.8" height="1" fill="#000"/><rect x="860" y="727" width="8.8" height="1" fill="#000"/><rect x="860" y="728" width="4.8" height="1" fill="#000"/><rect x="860" y="729" width="2.7" height="1" fill="#000"/><rect x="860" y="730" width="6.0" height="1" fill="#000"/><rect x="860" y="731" width="3.3" height="1" fill="#000"/><rect x="860" y="732" width="19.0" height="1" fill="#000"/><rect x="860" y="733" width="1.4" height="1" fill="#000"/><rect x="860" y="735" width="1.6" height="1" fill="#000"/><rect x="860" y="736" width="8.7" height="1" fill="#000"/><rect x="860" y="737" width="8.5" height="1" fill="#000"/><rect x="860" y="738" width="13.3" height="1" fill="#000"/><rect x="860" y="739" width="1.8" height="1" fill="#000"/><rect x="860" y="741" width="10.1" height="1" fill="#000"/><rect x="860" y="742" width="13.8" height="1" fill="#000"/><rect x="860" y="743" width="13.1" height="1" fill="#000"/><rect x="860" y="744" width="22.4" height="1" fill="#0c0c38"/><rect x="860" y="745" width="21.3" height="1" fill="#0c0c38"/><rect x="860" y="746" width="9.4" height="1" fill="#000"/><rect x="860" y="747" width="11.9" height="1" fill="#000"/><rect x="860" y="748" width="11.4" height="1" fill="#000"/><rect x="860" y="749" width="13.1" height="1" fill="#000"/><rect x="860" y="750" width="11.2" height="1" fill="#000"/><rect x="860" y="751" width="12.3" height="1" fill="#000"/><rect x="860" y="752" width="5.5" height="1" fill="#000"/><rect x="860" y="753" width="2.7" height="1" fill="#000"/><rect x="860" y="754" width="4.6" height="1" fill="#000"/><rect x="860" y="755" width="1.3" height="1" fill="#000"/><rect x="860" y="756" width="21.3" height="1" fill="#000"/><rect x="860" y="757" width="13.2" height="1" fill="#000"/><rect x="860" y="758" width="14.3" height="1" fill="#000"/><rect x="860" y="759" width="11.2" height="1" fill="#000"/><rect x="860" y="760" width="15.7" height="1" fill="#000"/><rect x="860" y="761" width="3.9" height="1" fill="#000"/><rect x="860" y="764" width="3.2" height="1" fill="#000"/><rect x="860" y="765" width="8.7" height="1" fill="#000"/><rect x="860" y="767" width="3.8" height="1" fill="#000"/><rect x="860" y="768" width="10.0" height="1" fill="#000"/><rect x="860" y="769" width="2.2" height="1" fill="#000"/><rect x="860" y="770" width="1.8" height="1" fill="#000"/><rect x="860" y="771" width="12.0" height="1" fill="#000"/><rect x="860" y="772" width="10.4" height="1" fill="#000"/><rect x="860" y="775" width="2.9" height="1" fill="#000"/><rect x="860" y="776" width="2.8" height="1" fill="#000"/><rect x="860" y="777" width="9.1" height="1" fill="#000"/></g><polyline points="860.8,1.0 860.8,19.0 862.0,19.0 864.0,22.0 867.0,25.0 869.0,27.0 871.0,30.0 870.0,34.0 870.4,36.5 869.8,39.0 871.0,40.0 872.2,42.5 872.5,45.0 872.8,47.5 872.0,50.0 870.5,52.5 870.0,55.0 871.5,57.5 870.0,60.0 871.5,62.5 872.0,65.0 871.5,67.5 872.0,70.0 872.0,72.5 873.0,75.0 872.0,77.5 872.0,80.0 870.8,82.5 871.5,85.0 870.2,87.5 871.0,90.0 870.2,92.5 870.5,95.0 872.8,97.5 872.0,100.0 870.8,102.5 871.7,105.0 872.5,107.5 870.3,110.0 872.2,112.5 871.0,115.0 872.0,117.5 871.0,120.0 871.0,122.5 871.0,125.0 870.0,127.5 871.0,130.0 871.0,132.5 870.0,135.0 871.0,137.5 872.0,140.0 870.0,142.5 871.0,145.0 872.0,147.5 871.0,150.0 872.1,152.5 871.2,155.0 872.3,157.5 870.4,160.0 872.5,162.5 872.6,165.0 871.7,167.5 871.8,170.0 870.9,172.5 872.0,175.0 871.2,177.5 873.3,180.0 872.5,182.5 873.7,185.0 872.8,187.5 873.0,190.0 872.4,192.5 874.8,195.0 874.1,197.5 875.5,200.0 875.9,202.5 875.2,205.0 874.6,207.5 876.0,210.0 880.5,220.0 883.0,226.0 888.0,230.0 893.0,234.0 897.0,237.0 903.0,241.0 919.0,243.0 930.0,245.0 918.0,249.0 910.0,251.0 895.0,253.0 885.0,255.0 880.0,257.0 872.0,262.0 870.0,265.0 873.0,270.0 871.0,280.0 870.0,300.0 870.8,302.5 871.4,305.0 870.8,307.5 872.0,310.0 872.0,312.5 871.4,315.0 870.2,317.5 870.2,320.0 871.4,322.5 872.0,325.0 870.2,327.5 872.0,330.0 870.8,332.5 872.0,335.0 870.2,337.5 870.8,340.0 870.2,342.5 872.0,345.0 872.0,347.5 871.4,350.0 870.8,352.5 870.8,355.0 870.8,357.5 872.0,360.0 869.6,362.5 870.8,365.0 872.0,367.5 871.4,370.0 872.0,372.5 871.4,375.0 869.6,377.5 871.4,380.0 872.0,382.5 870.2,385.0 871.4,387.5 869.6,390.0 870.8,392.5 870.8,395.0 870.8,397.5 870.2,400.0 870.2,402.5 870.2,405.0 869.6,407.5 872.0,410.0 869.6,412.5 870.2,415.0 870.8,417.5 870.2,420.0 871.4,422.5 871.4,425.0 871.4,427.5 870.2,430.0 871.4,432.5 869.6,435.0 869.6,437.5 869.6,440.0 870.8,442.5 871.4,445.0 870.8,447.5 870.2,450.0 870.2,452.5 872.0,455.0 872.0,457.5 870.2,460.0 869.6,462.5 869.6,465.0 872.0,467.5 869.6,470.0 871.4,472.5 870.8,475.0 872.0,477.5 872.0,480.0 870.8,482.5 869.6,485.0 869.6,487.5 872.0,490.0 872.0,492.5 869.6,495.0 870.8,497.5 870.2,500.0 870.8,502.5 872.0,505.0 870.8,507.5 869.6,510.0 870.8,512.5 870.2,515.0 870.8,517.5 870.8,520.0 871.4,522.5 870.2,525.0 870.2,527.5 870.8,530.0 869.6,532.5 871.4,535.0 869.6,537.5 871.4,540.0 872.0,542.5 869.6,545.0 869.6,547.5 870.2,550.0 871.4,552.5 871.4,555.0 871.4,557.5 872.0,560.0 870.8,562.5 869.6,565.0 869.6,567.5 872.0,570.0 869.6,572.5 871.4,575.0 869.6,577.5 869.6,580.0 870.8,582.5 869.6,585.0 870.8,587.5 872.0,590.0 870.2,592.5 872.0,595.0 872.0,597.5 871.4,600.0 870.2,602.5 869.6,605.0 870.2,607.5 870.2,610.0 870.8,612.5 871.4,615.0 869.6,617.5 871.4,620.0 869.6,622.5 871.4,625.0 871.4,627.5 871.4,630.0 872.0,632.5 872.0,635.0 869.6,637.5 871.4,640.0 872.0,642.5 869.6,645.0 872.0,647.5 871.4,650.0 870.2,652.5 869.6,655.0 870.8,657.5 869.6,660.0 870.2,662.5 870.2,665.0 871.4,667.5 871.4,670.0 871.4,672.5 872.0,675.0 869.6,677.5 869.6,680.0 870.8,682.5 870.2,685.0 872.0,687.5 872.0,690.0 870.8,692.5 869.6,695.0 870.2,697.5 870.8,700.0 872.0,702.5 871.4,705.0 871.4,707.5 869.6,710.0 870.8,712.5 871.4,715.0 872.0,717.5 872.0,720.0 872.0,722.5 872.0,725.0 870.8,727.5 872.0,730.0 870.2,732.5 869.6,735.0 872.0,737.5 870.2,740.0 871.4,742.5 872.0,745.0 871.4,747.5 870.8,750.0 870.8,752.5 872.0,755.0 870.2,757.5 872.0,760.0 871.0,765.0 868.0,770.0 863.0,775.0 860.8,778.0" fill="none" stroke="#b83030" stroke-width="1.6" stroke-linejoin="bevel"/><polyline points="880.5,220 883,226 888,230 893,234 897,237 903,241 919,242.5 930,244.5 918,249 910,250.5 895,253 885,255 880,257 872,262" fill="none" stroke="#b83030" stroke-width="2.4" stroke-linejoin="round"/><polyline points="860.0,9.0 862.0,9.5 875.0,15.0 880.0,18.0 888.0,20.0 893.0,24.0 897.0,28.0 896.0,33.0 893.0,36.0 896.0,38.0 897.0,42.0 895.0,45.0 897.0,47.0 900.0,50.0 902.0,52.0 898.0,55.0 896.1,58.0 897.0,60.0 899.9,63.0 900.0,66.0 900.0,69.0 898.0,72.0 898.8,75.0 898.9,78.0 899.0,80.0 899.0,83.0 900.0,86.0 901.0,88.0 900.7,91.0 898.7,94.0 899.0,95.0 899.6,98.0 902.0,100.0 901.5,103.0 903.4,106.0 904.0,108.0 904.0,111.0 902.9,114.0 903.0,115.0 903.3,118.0 905.0,120.0 903.5,123.0 901.0,126.0 904.2,129.0 906.0,132.0 905.9,135.0 909.0,138.0 909.0,140.0 908.4,143.0 907.8,146.0 908.0,148.0 910.6,151.0 910.4,154.0 911.0,155.0 911.9,158.0 912.0,160.0 911.0,163.0 912.4,166.0 913.4,169.0 914.0,170.0 915.9,173.0 916.1,176.0 915.6,179.0 916.0,180.0 915.3,183.0 917.2,186.0 917.3,189.0 918.0,190.0 919.6,193.0 920.3,196.0 919.8,199.0 921.0,200.0 922.8,203.0 923.5,206.0 924.3,209.0 925.0,210.0 926.6,213.0 927.6,216.0 929.0,219.0 930.0,220.0 933.5,223.0 937.3,226.0 940.1,229.0 940.0,230.0" fill="none" stroke="#3cd83c" stroke-width="1.1"/><polyline points="940.0,254.0 929.0,255.0 924.0,258.0 918.0,262.0 915.0,265.0 917.0,268.0 912.0,273.0 913.0,276.0 904.0,278.0 905.0,282.0 900.0,285.0 900.0,290.0 897.0,295.0 896.9,297.5 899.0,300.0 902.4,302.5 900.0,305.0 900.8,307.5 900.7,310.0 897.7,312.5 898.0,315.0 892.0,318.0 895.5,320.5 894.3,323.0 896.8,325.5 892.7,328.0 895.0,330.0 893.8,332.5 893.8,335.0 893.4,337.5 896.3,340.0 895.6,342.5 893.0,345.0 891.3,347.5 894.5,350.0 892.6,352.5 891.6,355.0 891.7,357.5 893.0,360.0 892.7,362.5 891.9,365.0 893.7,367.5 891.0,370.0 888.0,372.5 886.0,375.0 884.1,377.5 885.0,380.0 883.8,382.5 882.6,385.0 883.4,387.5 884.5,390.0 883.5,392.5 885.9,395.0 886.6,397.5 883.6,400.0 884.9,402.5 885.8,405.0 885.3,407.5 884.3,410.0 882.6,412.5 887.4,415.0 887.5,417.5 885.0,420.0 887.8,422.5 886.7,425.0 887.3,427.5 883.7,430.0 882.9,432.5 887.4,435.0 883.2,437.5 884.3,440.0 882.9,442.5 888.2,445.0 888.9,447.5 886.0,450.0 890.4,452.5 890.1,455.0 891.4,457.5 889.1,460.0 893.5,462.5 895.0,465.0 891.7,467.5 892.3,470.0 888.1,472.5 887.8,475.0 889.8,477.5 886.0,480.0 887.6,482.5 886.1,485.0 889.0,487.5 891.5,490.0 890.5,492.5 892.9,495.0 893.0,496.0 891.3,498.5 891.2,501.0 890.9,503.5 888.3,506.0 884.0,508.5 886.0,510.0 885.4,512.5 888.0,515.0 886.6,517.5 884.0,520.0 885.0,522.5 883.0,525.0 886.2,527.5 883.1,530.0 883.2,532.5 887.9,535.0 883.3,537.5 885.2,540.0 888.3,542.5 885.3,545.0 885.9,547.5 887.6,550.0 882.2,552.5 883.8,555.0 884.2,557.5 885.0,560.0 883.7,562.5 886.6,565.0 882.8,567.5 885.7,570.0 883.6,572.5 884.3,575.0 883.4,577.5 882.7,580.0 886.9,582.5 885.4,585.0 884.2,587.5 882.1,590.0 887.5,592.5 885.9,595.0 885.5,597.5 885.0,600.0 885.2,602.5 886.8,605.0 885.5,607.5 884.6,610.0 882.9,612.5 886.3,615.0 887.3,617.5 887.2,620.0 883.9,622.5 887.3,625.0 887.6,627.5 888.5,630.0 886.0,632.5 885.9,635.0 885.4,637.5 886.0,640.0 884.9,642.5 887.4,645.0 886.5,647.5 888.5,650.0 883.5,652.5 885.6,655.0 885.6,657.5 885.1,660.0 882.6,662.5 887.5,665.0 886.7,667.5 885.8,670.0 885.8,672.5 882.0,675.0 883.2,677.5 885.9,680.0 887.2,682.5 884.9,685.0 881.8,687.5 885.9,690.0 885.3,692.5 885.5,695.0 886.6,697.5 884.0,700.0 885.1,702.5 885.3,705.0 883.6,707.5 881.5,710.0 886.8,712.5 881.6,715.0 882.5,717.5 886.8,720.0 886.2,722.5 884.4,725.0 884.0,727.5 886.9,730.0 882.2,732.5 883.2,735.0 885.6,737.5 885.0,740.0 884.0,745.0 885.0,750.0 884.0,755.0 883.0,760.0 886.0,762.0 887.0,766.0 886.0,770.0 880.0,775.0 874.0,778.0 872.0,782.0" fill="none" stroke="#3cd83c" stroke-width="1.1"/><path d="M937,782 Q938,779 940,778" fill="none" stroke="#3cd83c" stroke-width="1.1"/><circle cx="900" cy="45" r="3.3" fill="#100000" stroke="#c83232" stroke-width="1"/></svg></body></html>
